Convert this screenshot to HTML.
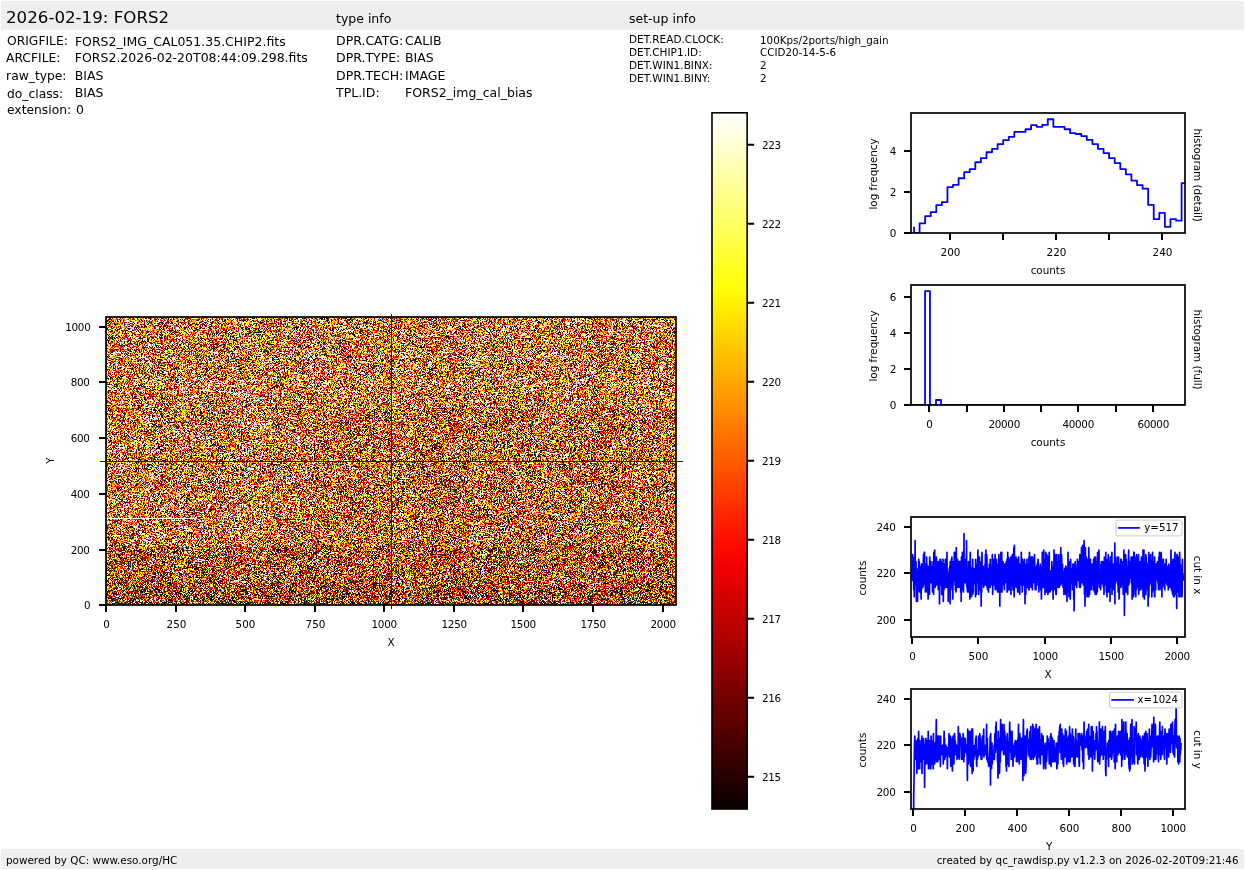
<!DOCTYPE html>
<html><head><meta charset="utf-8"><title>FORS2 rawdisp</title>
<style>html,body{margin:0;padding:0;background:#fff;overflow:hidden}svg{display:block;will-change:transform}text{font-family:"DejaVu Sans","Liberation Sans",sans-serif;fill:#000}</style></head>
<body>
<svg width="1245" height="870" viewBox="0 0 1245 870">
<rect x="1" y="1" width="1243" height="28.7" fill="#eeeeee"/>
<rect x="1" y="849" width="1243" height="19.7" fill="#eeeeee"/>
<text x="6.0" y="23.0" font-size="16.67">2026-02-19: FORS2</text>
<text x="336.0" y="22.7" font-size="12.5">type info</text>
<text x="629.0" y="22.7" font-size="12.5">set-up info</text>
<text x="7.0" y="44.7" font-size="12.3">ORIGFILE:</text>
<text x="74.9" y="45.6" font-size="12.5">FORS2_IMG_CAL051.35.CHIP2.fits</text>
<text x="6.0" y="61.8" font-size="12.3">ARCFILE:</text>
<text x="74.8" y="61.8" font-size="12.5">FORS2.2026-02-20T08:44:09.298.fits</text>
<text x="6.1" y="79.9" font-size="12.3">raw_type:</text>
<text x="74.8" y="79.9" font-size="12.5">BIAS</text>
<text x="7.0" y="97.7" font-size="12.3">do_class:</text>
<text x="74.8" y="97.3" font-size="12.5">BIAS</text>
<text x="7.0" y="113.6" font-size="12.3">extension:</text>
<text x="75.9" y="113.6" font-size="12.5">0</text>
<text x="336.0" y="44.7" font-size="12.5">DPR.CATG:</text>
<text x="405.0" y="44.7" font-size="12.5">CALIB</text>
<text x="336.0" y="61.8" font-size="12.5">DPR.TYPE:</text>
<text x="405.0" y="61.8" font-size="12.5">BIAS</text>
<text x="336.0" y="79.7" font-size="12.5">DPR.TECH:</text>
<text x="405.0" y="79.7" font-size="12.5">IMAGE</text>
<text x="336.0" y="96.9" font-size="12.5">TPL.ID:</text>
<text x="405.0" y="96.9" font-size="12.5">FORS2_img_cal_bias</text>
<text x="629.0" y="43.3" font-size="10.52">DET.READ.CLOCK:</text>
<text x="760.0" y="44.0" font-size="10.33">100Kps/2ports/high_gain</text>
<text x="629.0" y="55.9" font-size="10.52">DET.CHIP1.ID:</text>
<text x="760.0" y="55.9" font-size="10.33">CCID20-14-5-6</text>
<text x="629.0" y="68.7" font-size="10.52">DET.WIN1.BINX:</text>
<text x="760.0" y="68.7" font-size="10.33">2</text>
<text x="629.0" y="81.6" font-size="10.52">DET.WIN1.BINY:</text>
<text x="760.0" y="81.6" font-size="10.33">2</text>
<text x="6.0" y="863.8" font-size="10.4">powered by QC: www.eso.org/HC</text>
<text x="1238.6" y="863.8" font-size="10.4" text-anchor="end">created by qc_rawdisp.py v1.2.3 on 2026-02-20T09:21:46</text>
<defs>
<pattern id="m215" x="106" y="317" width="127" height="97" patternUnits="userSpaceOnUse"><path transform="translate(0 .5)" d="M0 0h1m2 0h1m2 0h1m7 0h1m5 0h3m1 0h1m1 0h2m6 0h1m3 0h1m3 0h4m3 0h2m1 0h1m1 0h1m8 0h1m2 0h1m1 0h1m5 0h1m1 0h2m2 0h1m3 0h3m2 0h1m3 0h1m5 0h1m15 0h1m1 0h1m4 0h1m3 0h1M3 1h1m6 0h3m2 0h2m1 0h1m5 0h1m1 0h1m5 0h3m5 0h1m5 0h1m5 0h4m2 0h3m3 0h3m2 0h5m1 0h3m2 0h1m5 0h2m3 0h3m3 0h2m5 0h2m3 0h1m4 0h1m6 0h1m1 0h2M8 2h1m2 0h1m8 0h1m1 0h1m1 0h1m2 0h1m3 0h1m3 0h2m8 0h1m4 0h1m7 0h1m1 0h2m1 0h1m4 0h2m12 0h1m1 0h3m6 0h1m2 0h2m8 0h1m1 0h1m3 0h1m5 0h1m1 0h1m1 0h1m2 0h1M4 3h1m6 0h1m2 0h1m9 0h3m4 0h1m3 0h1m2 0h2m3 0h3m1 0h1m3 0h2m2 0h1m7 0h3m3 0h1m4 0h1m7 0h1m1 0h1m2 0h1m2 0h1m1 0h1m5 0h2m2 0h3m11 0h1m7 0h1m1 0h1M4 4h2m2 0h1m6 0h2m6 0h2m11 0h1m2 0h2m8 0h1m2 0h1m3 0h1m4 0h1m1 0h1m6 0h1m7 0h1m4 0h1m1 0h1m2 0h1m5 0h2m2 0h1m1 0h5m3 0h1m1 0h1m11 0h3M3 5h1m2 0h1m15 0h1m5 0h1m1 0h2m1 0h2m1 0h1m11 0h1m2 0h1m1 0h1m1 0h1m2 0h1m1 0h6m1 0h1m8 0h1m1 0h1m4 0h1m11 0h1m8 0h1m6 0h1m2 0h3m2 0h1M3 6h1m1 0h1m15 0h1m1 0h5m22 0h1m2 0h2m3 0h2m5 0h1m2 0h2m3 0h1m3 0h2m7 0h1m6 0h3m1 0h1m1 0h1m6 0h1m4 0h2m4 0h1m1 0h1m3 0h3M1 7h1m10 0h2m2 0h1m7 0h1m5 0h1m2 0h1m2 0h1m2 0h1m11 0h2m3 0h1m6 0h1m1 0h2m8 0h1m7 0h1m3 0h1m1 0h1m1 0h1m1 0h1m3 0h2m4 0h3m1 0h1m3 0h1m8 0h1m4 0h2M0 8h2m4 0h1m6 0h1m17 0h1m2 0h1m8 0h1m3 0h1m1 0h1m8 0h1m6 0h1m1 0h1m2 0h2m13 0h1m2 0h1m3 0h1m5 0h2m4 0h1m1 0h1m1 0h1m1 0h1m9 0h2m2 0h3M2 9h1m2 0h1m11 0h1m1 0h2m12 0h1m4 0h2m1 0h1m3 0h1m1 0h1m1 0h2m2 0h1m1 0h1m1 0h1m3 0h1m4 0h1m2 0h2m6 0h2m2 0h1m9 0h1m3 0h1m2 0h2m5 0h1m1 0h1m11 0h1m2 0h2m1 0h1M0 10h1m7 0h2m6 0h1m6 0h1m1 0h1m1 0h3m2 0h2m7 0h1m4 0h2m1 0h1m3 0h3m4 0h1m4 0h2m4 0h1m1 0h1m7 0h4m3 0h1m3 0h1m2 0h5m2 0h1m1 0h2m4 0h1m2 0h1m5 0h2M1 11h2m1 0h1m2 0h3m2 0h1m1 0h1m3 0h1m4 0h2m4 0h1m1 0h2m1 0h3m1 0h1m4 0h1m3 0h1m5 0h1m1 0h1m1 0h1m4 0h1m3 0h1m8 0h4m3 0h1m3 0h1m11 0h1m7 0h1m2 0h2m1 0h1m2 0h1m1 0h1M0 12h1m1 0h1m1 0h2m3 0h1m1 0h1m3 0h1m9 0h1m3 0h2m1 0h2m6 0h2m1 0h1m2 0h1m3 0h2m1 0h1m8 0h1m3 0h2m2 0h1m4 0h1m1 0h1m1 0h3m2 0h1m2 0h2m2 0h1m12 0h3m2 0h1m5 0h5m5 0h1M0 13h3m6 0h1m1 0h1m4 0h4m10 0h1m3 0h1m2 0h1m8 0h1m2 0h3m5 0h2m4 0h1m2 0h2m1 0h1m3 0h1m4 0h1m4 0h3m3 0h3m4 0h1m1 0h1m1 0h1m3 0h2m7 0h1m4 0h1m7 0h1M3 14h1m1 0h1m3 0h1m3 0h1m6 0h1m4 0h2m4 0h1m3 0h2m3 0h1m2 0h1m2 0h1m2 0h1m3 0h1m3 0h1m2 0h2m1 0h1m2 0h1m10 0h1m1 0h1m7 0h1m3 0h1m2 0h1m3 0h1m3 0h3m10 0h1m7 0h1m1 0h1M2 15h2m8 0h6m10 0h1m1 0h1m4 0h2m1 0h1m3 0h1m7 0h1m9 0h1m6 0h3m1 0h3m3 0h1m5 0h1m12 0h1m2 0h1m1 0h2m2 0h1m2 0h2m12 0h1m2 0h2M1 16h1m14 0h1m6 0h1m7 0h3m3 0h1m1 0h1m3 0h2m8 0h1m5 0h2m9 0h1m6 0h1m2 0h1m7 0h3m7 0h1m5 0h2m3 0h5m1 0h2m2 0h3m2 0h1M4 17h1m2 0h1m1 0h2m3 0h1m5 0h1m1 0h2m1 0h1m2 0h2m6 0h1m3 0h4m1 0h1m3 0h1m1 0h2m3 0h2m2 0h1m1 0h1m3 0h3m1 0h2m1 0h1m2 0h1m4 0h2m2 0h4m1 0h1m2 0h3m4 0h2m2 0h1m1 0h2m1 0h1m2 0h2m6 0h1M0 18h2m1 0h1m5 0h1m2 0h1m4 0h4m5 0h2m4 0h1m1 0h1m2 0h1m4 0h3m1 0h3m1 0h1m4 0h2m2 0h1m7 0h1m2 0h1m1 0h1m5 0h1m7 0h1m1 0h3m1 0h2m9 0h1m1 0h1m2 0h2m2 0h1m3 0h2m1 0h3M5 19h2m2 0h1m10 0h1m3 0h1m1 0h1m1 0h2m2 0h2m1 0h1m1 0h1m1 0h5m1 0h1m2 0h1m1 0h1m8 0h2m1 0h1m3 0h3m4 0h5m3 0h1m2 0h1m8 0h1m2 0h1m3 0h1m4 0h1m2 0h1m5 0h2m8 0h1m1 0h1M0 20h1m2 0h2m3 0h2m1 0h1m7 0h1m6 0h1m4 0h2m3 0h1m2 0h1m2 0h2m4 0h1m1 0h1m2 0h3m6 0h1m5 0h1m1 0h1m1 0h1m7 0h1m2 0h2m3 0h3m2 0h1m2 0h1m1 0h2m1 0h1m1 0h1m2 0h1m3 0h1m4 0h1m8 0h1M1 21h2m3 0h1m1 0h1m3 0h1m1 0h1m1 0h1m1 0h1m4 0h1m1 0h2m6 0h2m11 0h2m6 0h1m8 0h1m1 0h3m2 0h1m2 0h1m2 0h1m9 0h1m4 0h1m4 0h1m4 0h1m3 0h2m11 0h1m6 0h2M2 22h3m9 0h1m2 0h1m7 0h1m5 0h1m1 0h1m1 0h3m8 0h1m2 0h3m2 0h1m1 0h1m7 0h1m9 0h2m4 0h2m4 0h1m1 0h1m5 0h1m3 0h1m5 0h1m3 0h2m10 0h1m2 0h1M5 23h1m3 0h1m4 0h1m6 0h1m2 0h1m5 0h2m2 0h1m3 0h3m7 0h1m5 0h1m1 0h2m6 0h1m2 0h1m4 0h2m9 0h4m3 0h2m1 0h1m1 0h1m3 0h1m1 0h1m1 0h1m1 0h1m3 0h2m1 0h1M3 24h1m4 0h1m1 0h1m1 0h2m1 0h1m1 0h2m2 0h1m2 0h1m1 0h2m4 0h1m6 0h1m6 0h2m6 0h1m1 0h2m1 0h1m1 0h1m2 0h1m4 0h1m3 0h1m6 0h1m5 0h1m1 0h1m1 0h2m4 0h1m5 0h1m3 0h1m2 0h2m3 0h1m7 0h1m1 0h1M3 25h1m1 0h2m2 0h1m3 0h1m1 0h2m2 0h2m3 0h1m3 0h1m6 0h1m1 0h1m7 0h1m3 0h3m3 0h4m5 0h1m4 0h1m5 0h1m6 0h1m2 0h1m13 0h1m3 0h1m7 0h1m3 0h1m2 0h1m3 0h2m1 0h1M2 26h1m6 0h1m2 0h2m1 0h1m2 0h2m5 0h3m2 0h1m5 0h2m3 0h1m9 0h2m4 0h1m2 0h1m6 0h1m2 0h3m2 0h1m1 0h1m3 0h1m2 0h1m2 0h1m3 0h2m2 0h1m3 0h1m1 0h1m11 0h1m6 0h1m4 0h1M2 27h5m5 0h1m8 0h1m2 0h1m4 0h1m4 0h1m3 0h1m4 0h1m8 0h1m1 0h2m4 0h4m1 0h1m2 0h4m1 0h1m4 0h1m1 0h1m6 0h1m2 0h1m1 0h1m10 0h1m6 0h1m9 0h1m5 0h1M0 28h2m4 0h1m6 0h1m1 0h1m1 0h1m3 0h2m3 0h1m1 0h1m6 0h4m2 0h2m3 0h1m1 0h1m2 0h1m4 0h1m4 0h1m6 0h1m1 0h1m2 0h1m2 0h1m1 0h1m5 0h1m1 0h1m2 0h1m4 0h1m1 0h1m4 0h1m2 0h1m1 0h1m7 0h1m6 0h1m1 0h1M1 29h1m1 0h1m5 0h1m5 0h1m7 0h1m3 0h1m7 0h1m9 0h1m6 0h2m2 0h1m3 0h1m1 0h1m8 0h1m5 0h1m1 0h1m1 0h3m2 0h1m2 0h1m6 0h1m1 0h1m1 0h1m6 0h1m12 0h3m2 0h1M1 30h2m3 0h1m1 0h1m1 0h2m2 0h2m3 0h1m9 0h1m1 0h2m4 0h3m1 0h1m5 0h1m3 0h1m1 0h2m2 0h1m4 0h2m1 0h1m7 0h1m2 0h2m3 0h1m13 0h2m1 0h1m3 0h2m1 0h1m4 0h4m1 0h1m5 0h1m1 0h1m2 0h1M4 31h1m5 0h1m3 0h1m3 0h1m2 0h1m2 0h1m6 0h1m2 0h1m1 0h1m10 0h1m3 0h2m4 0h2m5 0h1m1 0h1m21 0h1m6 0h1m4 0h3m2 0h1m3 0h1m6 0h1m5 0h2M4 32h2m2 0h1m2 0h3m3 0h1m3 0h1m6 0h1m1 0h5m8 0h1m2 0h1m3 0h1m4 0h3m1 0h1m8 0h1m9 0h1m6 0h1m2 0h2m1 0h2m1 0h1m11 0h1m1 0h1m1 0h1m8 0h1m6 0h1M2 33h1m1 0h1m2 0h2m1 0h2m1 0h1m1 0h1m3 0h1m16 0h1m7 0h3m2 0h2m5 0h2m1 0h1m1 0h1m7 0h1m1 0h1m8 0h1m7 0h1m3 0h1m2 0h1m1 0h3m4 0h1m2 0h2m1 0h2m1 0h1m6 0h2M2 34h2m6 0h2m1 0h2m2 0h1m2 0h1m4 0h1m1 0h1m1 0h1m2 0h1m2 0h1m4 0h1m6 0h1m6 0h1m3 0h1m1 0h1m4 0h2m1 0h1m1 0h1m8 0h1m4 0h3m2 0h2m7 0h2m1 0h1m5 0h1m1 0h1m1 0h1m1 0h1m3 0h1m4 0h2m2 0h1M0 35h2m1 0h1m1 0h2m2 0h1m2 0h1m4 0h1m4 0h1m2 0h4m2 0h1m4 0h1m1 0h2m3 0h2m5 0h1m11 0h1m1 0h2m2 0h2m2 0h3m3 0h1m2 0h1m3 0h1m3 0h1m16 0h1m1 0h1m2 0h1m4 0h1m2 0h2m1 0h1m3 0h1M6 36h2m1 0h1m1 0h1m3 0h2m1 0h4m4 0h1m1 0h1m2 0h2m4 0h1m1 0h1m5 0h2m1 0h2m3 0h3m7 0h1m3 0h2m2 0h3m6 0h2m2 0h1m4 0h1m3 0h2m2 0h1m2 0h2m4 0h1m2 0h1m3 0h1m3 0h1m1 0h5M0 37h1m11 0h1m4 0h1m5 0h1m1 0h1m4 0h1m1 0h1m4 0h3m1 0h1m6 0h1m3 0h1m7 0h4m9 0h1m2 0h1m2 0h1m7 0h4m1 0h1m5 0h1m3 0h1m3 0h2m2 0h1m5 0h2m1 0h1m2 0h3M1 38h1m3 0h1m3 0h2m2 0h2m1 0h1m9 0h1m5 0h1m2 0h1m5 0h2m3 0h3m2 0h2m7 0h1m2 0h1m3 0h1m1 0h1m5 0h1m3 0h1m2 0h1m3 0h3m2 0h1m1 0h1m1 0h1m3 0h1m7 0h4m1 0h1m5 0h1m2 0h1m1 0h1m2 0h1M5 39h1m4 0h1m1 0h2m2 0h1m2 0h1m2 0h3m4 0h1m2 0h1m2 0h1m2 0h1m15 0h2m1 0h2m3 0h1m1 0h2m2 0h1m1 0h1m10 0h1m9 0h1m2 0h2m2 0h1m4 0h1m11 0h1m1 0h1m3 0h1m1 0h1M0 40h2m2 0h1m12 0h2m1 0h1m12 0h2m1 0h1m1 0h2m2 0h1m11 0h1m1 0h2m4 0h1m1 0h2m1 0h1m7 0h1m1 0h1m1 0h1m1 0h1m6 0h1m5 0h1m3 0h1m7 0h1m3 0h1m1 0h1m1 0h1m1 0h1m5 0h1M4 41h1m3 0h1m4 0h1m2 0h1m2 0h2m5 0h1m1 0h1m1 0h2m1 0h1m2 0h2m3 0h1m3 0h1m1 0h2m9 0h1m1 0h2m3 0h3m3 0h1m1 0h1m1 0h1m1 0h1m1 0h1m2 0h1m4 0h1m1 0h1m1 0h1m3 0h1m14 0h1m7 0h1M0 42h1m11 0h2m1 0h1m3 0h1m1 0h1m1 0h2m1 0h3m1 0h1m3 0h2m9 0h1m2 0h2m6 0h2m7 0h1m3 0h1m1 0h2m2 0h1m6 0h1m6 0h1m1 0h1m2 0h2m2 0h3m2 0h1m3 0h3m1 0h2m1 0h1m6 0h2m2 0h1M0 43h1m1 0h1m4 0h1m4 0h1m9 0h1m1 0h1m2 0h1m4 0h1m1 0h1m2 0h1m7 0h1m6 0h2m5 0h1m2 0h2m1 0h1m1 0h1m6 0h2m5 0h1m7 0h1m2 0h2m2 0h1m4 0h1m1 0h3m3 0h1m4 0h1m7 0h1m3 0h1M2 44h1m3 0h2m2 0h1m5 0h2m5 0h2m2 0h1m2 0h1m1 0h1m3 0h2m5 0h1m3 0h2m2 0h1m1 0h1m1 0h1m1 0h2m4 0h1m5 0h1m11 0h4m1 0h1m6 0h1m2 0h3m4 0h1m4 0h1m2 0h1m3 0h1m1 0h2m4 0h1m2 0h1M0 45h1m7 0h2m1 0h2m5 0h1m2 0h1m2 0h2m1 0h1m10 0h1m1 0h1m8 0h2m3 0h1m4 0h1m3 0h1m4 0h2m3 0h3m3 0h1m5 0h3m2 0h1m5 0h1m1 0h1m3 0h2m3 0h1m4 0h2m6 0h1m1 0h1m2 0h1M6 46h1m5 0h3m5 0h1m4 0h2m5 0h1m1 0h1m3 0h1m3 0h1m2 0h3m4 0h1m1 0h1m9 0h1m2 0h1m1 0h1m1 0h1m1 0h1m1 0h1m2 0h1m2 0h1m1 0h1m4 0h1m2 0h1m5 0h1m3 0h1m2 0h1m1 0h1m1 0h1m3 0h1m5 0h1m1 0h1M0 47h1m7 0h1m3 0h1m6 0h1m1 0h2m1 0h1m2 0h1m1 0h1m2 0h1m1 0h1m2 0h1m2 0h3m3 0h1m2 0h1m1 0h3m1 0h1m1 0h1m6 0h1m14 0h1m2 0h1m3 0h1m1 0h1m2 0h1m5 0h1m1 0h1m5 0h1m6 0h1m2 0h1m3 0h1m1 0h3M2 48h1m1 0h1m4 0h1m7 0h1m4 0h1m2 0h5m1 0h2m7 0h1m1 0h2m1 0h1m2 0h5m1 0h1m8 0h1m3 0h1m8 0h1m1 0h1m4 0h1m2 0h3m6 0h1m1 0h1m1 0h1m3 0h1m6 0h2m3 0h1m1 0h2m5 0h1M2 49h1m1 0h1m1 0h1m1 0h1m1 0h1m1 0h1m3 0h3m1 0h3m1 0h3m7 0h2m9 0h1m1 0h1m1 0h2m3 0h2m5 0h2m2 0h1m1 0h1m2 0h1m1 0h2m2 0h1m3 0h1m2 0h1m3 0h1m1 0h1m1 0h1m4 0h1m1 0h1m2 0h2m1 0h1m1 0h1m5 0h1m2 0h1m7 0h1M4 50h1m2 0h1m1 0h1m2 0h1m3 0h3m1 0h2m3 0h2m2 0h2m2 0h2m4 0h2m4 0h1m8 0h1m1 0h1m5 0h1m5 0h2m4 0h1m6 0h1m3 0h1m1 0h1m9 0h2m1 0h2m3 0h1m1 0h1m3 0h1m2 0h1m2 0h1m3 0h1M0 51h1m5 0h1m3 0h1m2 0h1m1 0h1m1 0h1m11 0h1m6 0h1m3 0h2m6 0h2m1 0h2m2 0h3m3 0h1m2 0h2m1 0h1m1 0h2m12 0h3m1 0h1m1 0h4m1 0h1m5 0h1m2 0h2m4 0h1m4 0h1m1 0h1m7 0h1M1 52h1m2 0h1m3 0h1m3 0h1m1 0h1m2 0h2m1 0h1m1 0h2m2 0h3m6 0h1m1 0h1m1 0h1m7 0h2m10 0h1m3 0h1m1 0h1m4 0h1m5 0h1m6 0h1m5 0h1m1 0h2m2 0h1m17 0h1m6 0h1M0 53h1m2 0h1m1 0h2m1 0h1m2 0h2m2 0h1m1 0h2m11 0h2m3 0h1m4 0h1m1 0h1m2 0h1m3 0h2m1 0h1m2 0h1m2 0h1m3 0h1m1 0h1m1 0h3m7 0h1m2 0h1m1 0h1m5 0h2m5 0h1m13 0h1m1 0h1m2 0h1m1 0h2m1 0h1M0 54h1m3 0h1m1 0h1m1 0h1m2 0h2m7 0h1m7 0h3m1 0h1m1 0h1m4 0h1m3 0h1m2 0h1m5 0h2m9 0h1m1 0h1m4 0h1m2 0h1m1 0h1m6 0h1m3 0h1m2 0h2m4 0h1m2 0h5m1 0h2m1 0h1m3 0h1m4 0h1m1 0h1m2 0h1M6 55h1m7 0h1m1 0h1m1 0h3m2 0h1m1 0h1m9 0h1m1 0h1m7 0h1m2 0h1m2 0h1m1 0h3m2 0h1m1 0h2m17 0h1m7 0h1m5 0h1m6 0h3m2 0h4m3 0h1m7 0h1m2 0h1M5 56h1m2 0h1m2 0h1m1 0h1m1 0h2m8 0h2m6 0h1m5 0h1m6 0h1m1 0h2m3 0h1m2 0h2m1 0h1m6 0h2m1 0h1m8 0h3m3 0h1m2 0h2m1 0h1m1 0h1m1 0h3m10 0h1m2 0h1m5 0h1m3 0h1m5 0h1M5 57h1m1 0h1m2 0h2m3 0h1m3 0h3m4 0h1m1 0h1m1 0h1m2 0h1m3 0h2m1 0h1m7 0h1m3 0h1m2 0h1m1 0h3m6 0h1m3 0h1m2 0h1m2 0h1m1 0h1m3 0h2m4 0h1m1 0h1m8 0h1m1 0h5m1 0h1m4 0h1m1 0h1m2 0h1m1 0h1m4 0h1M2 58h1m1 0h1m1 0h1m1 0h1m4 0h1m2 0h1m6 0h1m2 0h1m1 0h1m2 0h1m5 0h1m2 0h2m2 0h1m6 0h3m1 0h1m1 0h1m1 0h1m5 0h1m2 0h1m3 0h1m2 0h2m5 0h1m2 0h3m11 0h1m1 0h1m6 0h1m1 0h1m2 0h1m2 0h1m4 0h1m3 0h1M2 59h1m1 0h1m4 0h1m3 0h1m2 0h1m4 0h1m8 0h1m2 0h2m3 0h1m4 0h1m2 0h1m3 0h1m2 0h1m2 0h1m3 0h1m2 0h1m1 0h2m5 0h2m3 0h3m3 0h1m1 0h1m4 0h2m3 0h1m1 0h3m2 0h1m5 0h1m5 0h1m4 0h1m3 0h1m1 0h1M2 60h1m7 0h1m1 0h1m13 0h1m1 0h3m3 0h1m1 0h1m8 0h1m4 0h1m3 0h1m7 0h1m2 0h2m10 0h1m2 0h1m3 0h1m4 0h2m1 0h2m1 0h3m3 0h1m3 0h1m4 0h1m2 0h1m8 0h1m3 0h1M0 61h1m4 0h1m1 0h2m4 0h1m1 0h1m2 0h1m5 0h1m4 0h2m2 0h2m2 0h2m4 0h1m3 0h1m1 0h1m2 0h1m1 0h1m11 0h1m9 0h1m3 0h1m6 0h1m1 0h1m4 0h1m1 0h1m7 0h1m3 0h1M3 62h1m4 0h1m1 0h1m5 0h1m13 0h3m1 0h1m4 0h1m1 0h1m2 0h1m3 0h1m3 0h1m6 0h1m1 0h1m1 0h1m5 0h2m5 0h1m1 0h2m5 0h2m3 0h1m4 0h2m1 0h1m4 0h1m1 0h3m1 0h4m3 0h1m3 0h3m1 0h1M0 63h1m5 0h1m4 0h1m2 0h1m1 0h1m4 0h1m3 0h2m3 0h1m3 0h2m1 0h1m4 0h1m6 0h1m3 0h1m6 0h2m6 0h1m4 0h1m1 0h1m4 0h2m5 0h1m1 0h1m4 0h2m5 0h1m5 0h1m2 0h1m1 0h1m4 0h1m1 0h1m5 0h2M0 64h1m5 0h3m10 0h1m2 0h1m1 0h1m2 0h2m13 0h1m1 0h1m6 0h1m2 0h1m2 0h2m3 0h1m1 0h1m3 0h2m4 0h2m1 0h1m1 0h1m2 0h1m6 0h1m2 0h3m2 0h1m1 0h2m4 0h1m3 0h1m4 0h1m3 0h4m4 0h1M5 65h1m1 0h1m8 0h2m6 0h1m1 0h2m7 0h1m4 0h1m3 0h1m2 0h2m6 0h1m3 0h1m4 0h2m2 0h1m2 0h2m1 0h1m4 0h2m4 0h1m3 0h1m1 0h1m1 0h1m1 0h4m2 0h1m5 0h1m3 0h2m1 0h2m1 0h1M0 66h1m2 0h4m4 0h1m1 0h1m1 0h1m1 0h1m3 0h2m6 0h1m1 0h2m12 0h2m1 0h1m3 0h1m1 0h2m3 0h3m4 0h1m1 0h2m5 0h1m3 0h4m1 0h1m3 0h2m1 0h1m1 0h1m5 0h1m2 0h1m1 0h1m3 0h1m5 0h1m5 0h2M0 67h1m2 0h1m1 0h1m1 0h1m3 0h2m7 0h1m2 0h1m2 0h2m2 0h1m1 0h2m2 0h1m4 0h2m3 0h1m2 0h1m1 0h2m3 0h1m3 0h4m6 0h2m3 0h1m2 0h1m8 0h1m1 0h1m5 0h1m2 0h1m1 0h1m1 0h1m5 0h5m3 0h2m1 0h3m3 0h1M4 68h1m1 0h1m1 0h1m9 0h1m1 0h1m4 0h1m3 0h1m2 0h1m5 0h1m3 0h1m8 0h1m1 0h2m7 0h1m4 0h1m2 0h1m6 0h1m1 0h2m1 0h1m3 0h1m1 0h1m6 0h1m2 0h2m5 0h1m1 0h1m2 0h1m4 0h1m5 0h1m4 0h1M0 69h1m3 0h1m1 0h1m5 0h1m2 0h1m2 0h1m3 0h1m2 0h4m2 0h1m2 0h1m3 0h1m1 0h1m1 0h1m1 0h1m1 0h1m2 0h3m2 0h1m4 0h1m1 0h3m4 0h2m1 0h1m2 0h1m1 0h3m3 0h1m1 0h1m7 0h1m2 0h2m7 0h3m4 0h1m2 0h1m4 0h2m1 0h1m2 0h2M2 70h1m1 0h1m1 0h1m2 0h1m2 0h3m4 0h1m3 0h1m6 0h1m2 0h1m4 0h1m2 0h1m5 0h1m4 0h1m1 0h2m8 0h1m2 0h1m7 0h1m1 0h2m2 0h3m1 0h1m9 0h2m8 0h5m1 0h1m2 0h2m4 0h2m1 0h1M0 71h1m1 0h1m2 0h1m7 0h1m1 0h2m1 0h2m1 0h1m1 0h1m4 0h2m1 0h1m9 0h1m3 0h1m6 0h1m3 0h2m7 0h1m2 0h1m1 0h1m1 0h1m2 0h2m5 0h3m4 0h1m1 0h4m5 0h1m6 0h1m1 0h1m15 0h2M3 72h3m6 0h1m4 0h7m5 0h1m3 0h4m1 0h2m1 0h1m5 0h1m1 0h2m1 0h2m9 0h3m4 0h2m6 0h3m3 0h1m3 0h1m5 0h1m2 0h2m5 0h1m1 0h2m6 0h1m4 0h1m2 0h1M4 73h1m1 0h1m4 0h1m6 0h2m2 0h1m3 0h1m5 0h7m1 0h2m2 0h1m2 0h1m1 0h1m2 0h1m12 0h1m2 0h1m9 0h4m3 0h2m1 0h1m3 0h1m4 0h4m1 0h2m1 0h1m1 0h1m6 0h1m1 0h2M2 74h1m9 0h1m2 0h1m1 0h1m2 0h1m2 0h1m5 0h1m5 0h3m2 0h1m1 0h1m3 0h2m1 0h2m1 0h1m3 0h1m1 0h1m6 0h2m5 0h1m4 0h1m3 0h1m3 0h1m4 0h2m5 0h1m2 0h1m1 0h1m1 0h3m2 0h1m1 0h1m1 0h2m5 0h4m1 0h2M7 75h1m1 0h2m6 0h1m3 0h1m5 0h1m4 0h1m12 0h1m1 0h1m1 0h2m7 0h1m8 0h1m4 0h1m1 0h2m4 0h1m2 0h2m5 0h1m6 0h1m2 0h3m5 0h1m1 0h2m1 0h1m2 0h1m2 0h2m1 0h1m3 0h1M2 76h1m5 0h1m2 0h1m1 0h1m2 0h2m1 0h1m2 0h2m1 0h1m1 0h1m3 0h1m12 0h1m4 0h3m2 0h1m3 0h1m3 0h1m2 0h1m3 0h2m3 0h1m1 0h1m4 0h3m1 0h2m13 0h3m12 0h2m1 0h1m1 0h1m2 0h1m1 0h1M2 77h4m1 0h1m1 0h1m2 0h1m5 0h1m5 0h2m2 0h1m3 0h2m1 0h3m5 0h1m2 0h1m5 0h1m1 0h3m1 0h2m1 0h2m6 0h3m2 0h1m2 0h1m7 0h1m3 0h1m3 0h1m11 0h1m3 0h2m5 0h1M0 78h1m1 0h1m1 0h2m2 0h1m4 0h3m1 0h1m1 0h1m1 0h2m1 0h1m1 0h1m2 0h1m5 0h1m14 0h1m2 0h1m6 0h2m4 0h1m2 0h1m1 0h1m1 0h4m1 0h2m2 0h1m2 0h1m7 0h1m1 0h3m8 0h1m10 0h1m5 0h2M0 79h1m3 0h1m3 0h1m3 0h1m1 0h1m1 0h1m3 0h1m2 0h2m2 0h1m2 0h2m1 0h1m1 0h2m1 0h3m1 0h1m3 0h1m1 0h1m9 0h2m2 0h1m8 0h2m1 0h3m3 0h2m1 0h1m4 0h1m5 0h1m20 0h2m4 0h6M1 80h2m6 0h2m4 0h1m4 0h3m1 0h1m3 0h1m2 0h1m3 0h2m2 0h1m4 0h1m2 0h1m3 0h1m4 0h1m1 0h1m4 0h1m1 0h1m1 0h1m4 0h1m9 0h2m3 0h2m2 0h1m1 0h1m2 0h2m2 0h1m1 0h1m1 0h1m4 0h1m4 0h1m1 0h1m1 0h1m3 0h1m1 0h1M2 81h1m8 0h1m3 0h2m1 0h1m2 0h1m4 0h1m1 0h1m1 0h1m8 0h2m2 0h1m9 0h1m4 0h1m3 0h1m4 0h8m17 0h1m1 0h1m1 0h1m2 0h1m3 0h1m5 0h1m1 0h1m7 0h2m1 0h1m2 0h1M1 82h1m3 0h1m2 0h2m2 0h2m6 0h3m3 0h1m2 0h1m3 0h2m5 0h2m2 0h1m9 0h1m13 0h1m1 0h1m1 0h1m1 0h1m2 0h1m2 0h1m1 0h1m2 0h1m1 0h1m1 0h1m9 0h1m6 0h1m8 0h1m1 0h1m6 0h1M1 83h1m5 0h2m3 0h1m2 0h1m1 0h1m1 0h2m2 0h1m8 0h1m5 0h2m3 0h2m6 0h1m6 0h1m2 0h1m3 0h1m8 0h1m1 0h1m4 0h1m3 0h1m1 0h1m7 0h2m1 0h1m7 0h1m5 0h1m7 0h2m1 0h2M1 84h4m1 0h1m3 0h1m2 0h2m2 0h1m7 0h2m2 0h1m1 0h1m4 0h2m4 0h1m4 0h2m3 0h2m1 0h1m8 0h1m5 0h1m1 0h1m3 0h2m2 0h2m3 0h1m5 0h1m4 0h3m1 0h2m1 0h3m3 0h1m1 0h1m2 0h1m2 0h1m6 0h1M4 85h1m6 0h1m6 0h1m1 0h3m1 0h2m3 0h1m1 0h1m7 0h1m1 0h1m1 0h1m1 0h3m2 0h1m2 0h2m8 0h2m6 0h1m4 0h1m1 0h1m3 0h1m6 0h1m6 0h1m2 0h1m1 0h1m10 0h1m3 0h1m2 0h1m2 0h1M0 86h1m6 0h1m3 0h1m1 0h1m5 0h1m2 0h3m1 0h2m4 0h1m1 0h1m2 0h1m1 0h3m2 0h1m1 0h1m4 0h1m4 0h1m2 0h1m1 0h1m8 0h1m3 0h4m3 0h2m1 0h1m1 0h1m3 0h1m3 0h1m5 0h1m3 0h1m7 0h1m1 0h1m1 0h3m1 0h2m3 0h1M7 87h2m4 0h3m7 0h1m1 0h1m12 0h1m5 0h1m3 0h2m3 0h1m5 0h1m3 0h1m2 0h2m10 0h2m3 0h1m1 0h2m2 0h1m1 0h2m2 0h1m9 0h6m2 0h1m4 0h1m1 0h2m3 0h2M0 88h2m3 0h1m5 0h5m3 0h1m1 0h1m1 0h1m5 0h1m1 0h1m1 0h1m3 0h1m4 0h2m1 0h1m6 0h1m6 0h1m2 0h2m12 0h1m3 0h1m1 0h2m2 0h1m19 0h1m1 0h1m2 0h2m4 0h1m3 0h2M1 89h2m8 0h1m2 0h1m3 0h1m1 0h1m4 0h3m3 0h1m1 0h1m2 0h3m5 0h2m2 0h2m1 0h1m4 0h1m5 0h1m2 0h2m1 0h3m1 0h2m3 0h1m2 0h1m2 0h1m6 0h1m4 0h1m2 0h1m1 0h1m2 0h1m4 0h1m6 0h1m1 0h1m3 0h1m4 0h1M0 90h3m1 0h1m8 0h4m1 0h1m16 0h2m2 0h1m3 0h1m3 0h2m7 0h3m1 0h1m1 0h1m2 0h1m9 0h1m2 0h1m1 0h1m1 0h2m1 0h1m1 0h1m8 0h1m5 0h2m6 0h1m6 0h2m2 0h1M8 91h1m3 0h2m1 0h1m1 0h1m1 0h1m2 0h1m4 0h1m4 0h1m2 0h1m17 0h1m20 0h1m1 0h2m1 0h2m6 0h3m1 0h1m2 0h1m10 0h1m5 0h1m2 0h1m6 0h1m1 0h1M1 92h5m2 0h1m7 0h5m7 0h1m1 0h1m1 0h2m1 0h1m1 0h1m3 0h2m2 0h1m5 0h2m2 0h2m3 0h2m4 0h2m4 0h1m2 0h1m1 0h1m2 0h1m2 0h1m9 0h3m2 0h2m1 0h1m3 0h1m4 0h1m2 0h2m9 0h2M2 93h2m5 0h2m1 0h2m1 0h4m3 0h1m7 0h1m1 0h2m4 0h2m3 0h1m1 0h2m1 0h1m2 0h1m4 0h1m1 0h1m3 0h2m4 0h1m1 0h1m2 0h1m1 0h3m3 0h1m1 0h1m1 0h1m1 0h1m3 0h2m1 0h1m1 0h2m2 0h2m5 0h3m2 0h2m2 0h1m3 0h2m2 0h1M2 94h1m5 0h1m6 0h2m9 0h1m1 0h1m1 0h1m10 0h2m8 0h1m1 0h1m7 0h1m13 0h1m2 0h1m8 0h1m3 0h3m2 0h1m5 0h2m2 0h1m2 0h1m1 0h1m1 0h1m5 0h1m2 0h1m2 0h1M0 95h1m1 0h1m1 0h1m3 0h1m1 0h2m3 0h3m8 0h1m1 0h1m1 0h1m1 0h1m2 0h1m1 0h2m1 0h1m2 0h1m9 0h1m3 0h2m5 0h2m5 0h1m3 0h1m2 0h1m3 0h1m6 0h1m2 0h1m12 0h1m4 0h1m5 0h1m9 0h1M0 96h1m1 0h2m2 0h1m5 0h1m2 0h1m1 0h1m4 0h2m5 0h1m11 0h1m3 0h2m5 0h3m3 0h1m6 0h2m7 0h1m2 0h1m5 0h1m6 0h2m2 0h1m1 0h1m1 0h2m2 0h1m6 0h2m2 0h1m2 0h3m3 0h1m1 0h1" stroke="#270000" stroke-width="1" fill="none" shape-rendering="crispEdges"/></pattern>
<pattern id="m216" x="106" y="317" width="131" height="89" patternUnits="userSpaceOnUse"><path transform="translate(0 .5)" d="M6 0h2m7 0h1m5 0h1m3 0h1m14 0h1m2 0h2m8 0h1m2 0h1m6 0h1m3 0h5m10 0h1m2 0h1m12 0h1m1 0h1m5 0h1m3 0h1m3 0h1m2 0h1m2 0h1m1 0h1m1 0h2m3 0h1M0 1h1m3 0h1m1 0h2m2 0h1m5 0h1m3 0h2m13 0h1m2 0h1m9 0h1m2 0h2m10 0h1m4 0h1m2 0h1m1 0h1m7 0h2m13 0h1m4 0h1m1 0h1m6 0h2m3 0h1m2 0h1m3 0h1m3 0h1M3 2h1m3 0h1m4 0h1m5 0h2m5 0h1m2 0h1m5 0h1m2 0h1m3 0h1m8 0h2m5 0h1m2 0h1m4 0h1m16 0h1m6 0h3m1 0h1m2 0h1m1 0h3m1 0h1m2 0h1m1 0h1m2 0h1m1 0h1m4 0h1m2 0h1m1 0h1m4 0h2M5 3h2m2 0h3m2 0h1m2 0h1m5 0h1m3 0h2m2 0h1m7 0h1m7 0h2m3 0h1m1 0h1m1 0h1m1 0h1m2 0h1m1 0h2m5 0h1m2 0h1m1 0h1m7 0h1m9 0h1m1 0h2m1 0h1m1 0h2m1 0h1m4 0h1m1 0h1m2 0h1m1 0h2m8 0h1M5 4h1m1 0h2m7 0h1m1 0h1m3 0h1m4 0h1m1 0h1m3 0h1m2 0h1m4 0h5m11 0h2m1 0h1m7 0h1m6 0h1m2 0h2m6 0h1m2 0h1m1 0h1m6 0h2m5 0h2m6 0h1m8 0h1m2 0h1m2 0h1m1 0h1M1 5h1m2 0h2m2 0h1m5 0h2m15 0h1m19 0h1m3 0h1m1 0h2m1 0h1m1 0h1m11 0h1m1 0h1m1 0h2m4 0h1m10 0h1m5 0h1m2 0h6m6 0h2m2 0h2m2 0h1m2 0h1M1 6h1m3 0h1m1 0h1m2 0h1m1 0h1m2 0h1m5 0h1m15 0h1m1 0h2m4 0h2m3 0h2m2 0h1m2 0h1m3 0h2m1 0h1m2 0h1m3 0h1m1 0h1m3 0h1m3 0h1m1 0h2m7 0h1m5 0h1m2 0h1m1 0h1m6 0h1m4 0h1m3 0h1m4 0h2m1 0h1m1 0h2M4 7h1m2 0h1m2 0h2m3 0h1m4 0h1m1 0h1m1 0h2m5 0h1m5 0h1m5 0h1m6 0h1m1 0h1m8 0h1m1 0h3m1 0h1m1 0h2m1 0h1m2 0h1m9 0h1m6 0h2m8 0h1m7 0h1m2 0h1m6 0h1m2 0h1m1 0h1m1 0h2m1 0h1M0 8h2m5 0h2m4 0h1m4 0h1m1 0h1m5 0h1m1 0h1m2 0h3m1 0h1m12 0h1m1 0h1m2 0h1m6 0h1m1 0h3m9 0h1m1 0h1m1 0h1m2 0h1m4 0h1m2 0h1m1 0h1m3 0h1m1 0h1m2 0h1m5 0h2m1 0h1m4 0h2m1 0h1m3 0h1m4 0h1m3 0h1M4 9h1m9 0h1m4 0h2m2 0h1m5 0h4m7 0h2m2 0h2m1 0h1m4 0h1m2 0h1m2 0h1m7 0h1m3 0h2m3 0h1m3 0h1m2 0h1m5 0h1m1 0h1m6 0h1m4 0h2m2 0h3m2 0h3m2 0h1m6 0h2M2 10h1m1 0h1m2 0h1m1 0h1m5 0h3m4 0h1m3 0h1m2 0h1m2 0h1m4 0h1m2 0h1m2 0h4m2 0h2m2 0h1m8 0h1m17 0h1m6 0h3m1 0h2m6 0h1m7 0h1m1 0h1m2 0h1m5 0h2m4 0h1m1 0h1m2 0h1M1 11h2m4 0h1m8 0h2m1 0h2m19 0h1m1 0h1m3 0h1m2 0h1m1 0h2m8 0h1m2 0h1m1 0h2m8 0h1m3 0h1m2 0h2m1 0h1m1 0h1m1 0h1m5 0h1m2 0h3m2 0h2m3 0h1m12 0h1m3 0h1M0 12h1m2 0h1m2 0h1m8 0h1m7 0h1m2 0h2m1 0h1m1 0h1m3 0h1m11 0h1m1 0h2m3 0h2m8 0h1m8 0h1m6 0h2m2 0h1m1 0h1m1 0h2m1 0h1m4 0h1m12 0h1m2 0h1m6 0h2m1 0h1m6 0h1M3 13h1m2 0h1m3 0h1m2 0h1m3 0h2m9 0h1m3 0h1m3 0h3m2 0h4m8 0h2m3 0h1m2 0h2m16 0h1m2 0h1m1 0h1m11 0h1m2 0h1m1 0h1m5 0h1m3 0h1m5 0h1m3 0h1M1 14h1m4 0h3m4 0h1m1 0h2m13 0h1m9 0h2m3 0h1m3 0h2m1 0h1m1 0h2m1 0h1m3 0h1m3 0h1m4 0h1m1 0h1m5 0h2m1 0h1m1 0h1m1 0h1m9 0h1m10 0h1m10 0h2m2 0h1m1 0h1m1 0h2m2 0h2M0 15h2m3 0h1m3 0h1m6 0h1m3 0h1m1 0h1m1 0h2m7 0h1m1 0h1m1 0h1m1 0h2m1 0h1m3 0h1m1 0h1m1 0h1m7 0h1m5 0h1m17 0h1m2 0h1m5 0h1m2 0h1m3 0h1m1 0h1m11 0h2m11 0h1m2 0h1M1 16h1m6 0h3m2 0h1m1 0h1m1 0h2m4 0h1m1 0h1m2 0h1m1 0h2m3 0h2m7 0h1m1 0h2m1 0h1m10 0h1m7 0h2m3 0h1m14 0h1m1 0h1m9 0h2m1 0h1m1 0h2m3 0h1m3 0h1M0 17h1m7 0h1m1 0h1m2 0h2m1 0h1m5 0h1m5 0h1m1 0h1m1 0h2m2 0h1m1 0h1m7 0h2m5 0h2m6 0h1m3 0h1m2 0h1m1 0h1m1 0h5m1 0h2m4 0h1m6 0h1m4 0h2m1 0h1m5 0h1m3 0h1m3 0h1m2 0h1m1 0h1m2 0h1M0 18h1m5 0h1m1 0h1m1 0h1m2 0h1m4 0h2m3 0h1m1 0h1m2 0h3m1 0h1m5 0h1m2 0h1m2 0h2m3 0h1m2 0h3m7 0h1m4 0h1m3 0h1m7 0h1m1 0h1m1 0h1m1 0h1m3 0h1m5 0h1m1 0h1m7 0h2m4 0h1m1 0h1m2 0h1m4 0h3m2 0h2m1 0h1M2 19h1m13 0h1m1 0h1m2 0h2m5 0h2m1 0h1m1 0h1m2 0h1m1 0h1m8 0h1m1 0h1m2 0h2m2 0h1m5 0h1m2 0h1m7 0h1m13 0h2m1 0h1m2 0h1m6 0h1m4 0h1m1 0h1m1 0h2m3 0h1m6 0h1m1 0h1m4 0h1M5 20h1m14 0h1m4 0h1m7 0h1m8 0h1m1 0h1m4 0h1m5 0h2m1 0h3m1 0h3m1 0h1m11 0h1m2 0h1m3 0h1m4 0h4m2 0h1m1 0h1m5 0h2m5 0h2m1 0h1m6 0h2m2 0h1M1 21h1m7 0h1m2 0h2m5 0h1m4 0h1m7 0h2m4 0h1m1 0h1m1 0h1m5 0h1m4 0h1m2 0h1m2 0h1m3 0h1m1 0h2m2 0h2m1 0h1m6 0h1m1 0h1m1 0h1m5 0h1m11 0h1m3 0h2m2 0h2m1 0h2m2 0h1m1 0h1m10 0h1M1 22h3m1 0h1m2 0h1m6 0h2m3 0h2m17 0h1m10 0h1m1 0h1m6 0h2m4 0h1m2 0h1m2 0h3m2 0h1m1 0h1m3 0h1m1 0h4m2 0h1m3 0h1m4 0h1m2 0h4m8 0h1m6 0h1m1 0h1m3 0h1m2 0h1M1 23h1m14 0h1m1 0h2m7 0h1m1 0h1m2 0h1m1 0h1m2 0h4m2 0h2m4 0h2m8 0h1m10 0h1m1 0h1m4 0h3m9 0h2m1 0h2m2 0h1m9 0h1m1 0h2m1 0h1m3 0h1m2 0h3M2 24h1m1 0h1m12 0h1m6 0h1m1 0h1m1 0h1m2 0h1m3 0h1m1 0h2m6 0h1m2 0h1m7 0h1m1 0h2m4 0h1m9 0h1m1 0h2m7 0h2m5 0h3m5 0h1m4 0h1m4 0h1m14 0h2m2 0h1M0 25h2m1 0h1m1 0h1m2 0h5m6 0h2m1 0h1m5 0h1m4 0h1m7 0h1m2 0h3m10 0h1m4 0h2m7 0h1m3 0h1m3 0h1m9 0h2m3 0h1m11 0h1m3 0h1m1 0h1m1 0h1m2 0h1m3 0h1m1 0h2M4 26h1m3 0h1m4 0h2m2 0h2m1 0h1m2 0h1m8 0h1m1 0h1m3 0h1m5 0h1m1 0h1m4 0h1m2 0h1m1 0h1m1 0h1m2 0h5m2 0h2m6 0h3m2 0h1m1 0h1m1 0h1m3 0h1m12 0h1m4 0h1m4 0h1m13 0h2m1 0h1M1 27h1m8 0h1m1 0h1m4 0h1m3 0h1m7 0h1m2 0h1m1 0h1m2 0h1m4 0h1m2 0h1m2 0h2m1 0h1m8 0h1m1 0h1m5 0h2m2 0h1m6 0h1m1 0h1m2 0h1m2 0h2m14 0h4m3 0h1m5 0h1m5 0h2m5 0h1M11 28h1m3 0h2m7 0h1m3 0h1m5 0h1m1 0h1m7 0h1m1 0h1m3 0h1m9 0h1m5 0h1m3 0h1m2 0h2m5 0h1m1 0h2m3 0h4m3 0h2m3 0h1m2 0h1m1 0h2m3 0h2m1 0h1m7 0h1m4 0h2M0 29h1m1 0h1m3 0h1m4 0h1m1 0h1m7 0h1m2 0h3m1 0h1m7 0h4m6 0h4m8 0h2m2 0h1m2 0h1m2 0h1m2 0h1m3 0h3m1 0h1m2 0h1m5 0h1m13 0h1m8 0h3m2 0h1m1 0h1m3 0h2M1 30h2m1 0h1m4 0h1m10 0h2m1 0h1m4 0h1m4 0h3m5 0h2m1 0h1m5 0h1m9 0h1m9 0h1m1 0h1m1 0h1m1 0h1m5 0h1m5 0h1m3 0h1m3 0h1m8 0h1m7 0h5m1 0h2M1 31h1m1 0h1m4 0h1m7 0h1m2 0h1m1 0h2m1 0h1m2 0h1m6 0h1m1 0h1m1 0h1m10 0h1m10 0h1m1 0h1m3 0h1m2 0h1m2 0h1m6 0h1m1 0h1m4 0h1m2 0h1m2 0h1m5 0h1m1 0h2m2 0h1m6 0h1m2 0h1m6 0h1m8 0h1M3 32h1m3 0h1m4 0h1m1 0h2m7 0h1m1 0h1m2 0h1m9 0h1m1 0h1m3 0h1m3 0h1m1 0h1m3 0h1m4 0h1m2 0h1m10 0h1m11 0h1m3 0h2m5 0h1m1 0h1m1 0h2m7 0h1m2 0h1m1 0h1m5 0h1m2 0h1M1 33h1m3 0h1m1 0h1m11 0h1m5 0h1m1 0h1m2 0h1m4 0h1m5 0h1m5 0h1m5 0h1m9 0h1m3 0h2m3 0h1m2 0h1m7 0h2m11 0h1m2 0h1m11 0h1m2 0h2m6 0h1m2 0h2m2 0h1M1 34h1m15 0h3m6 0h3m1 0h1m1 0h1m1 0h2m3 0h1m4 0h2m2 0h2m4 0h1m1 0h1m5 0h2m4 0h2m1 0h1m1 0h3m6 0h1m5 0h4m1 0h1m2 0h1m2 0h1m2 0h1m2 0h3m3 0h1m2 0h1m4 0h1m2 0h1m1 0h1M0 35h1m2 0h1m7 0h1m2 0h1m3 0h1m2 0h1m7 0h1m2 0h1m3 0h1m1 0h1m1 0h2m2 0h4m3 0h1m4 0h2m6 0h1m3 0h1m4 0h1m2 0h1m1 0h1m3 0h1m2 0h1m2 0h1m1 0h1m11 0h1m10 0h1m1 0h1m3 0h1m2 0h1m2 0h1m1 0h1M2 36h1m2 0h1m3 0h1m3 0h1m1 0h1m4 0h1m5 0h1m4 0h1m2 0h1m3 0h1m5 0h1m2 0h2m2 0h2m1 0h2m1 0h1m5 0h3m2 0h1m1 0h2m14 0h1m2 0h1m1 0h2m1 0h2m2 0h2m1 0h1m5 0h2m3 0h1m1 0h1m7 0h1m4 0h1m2 0h1M6 37h2m5 0h3m2 0h2m2 0h1m4 0h1m1 0h1m10 0h1m3 0h1m3 0h1m5 0h2m3 0h1m6 0h1m6 0h7m9 0h1m11 0h1m1 0h3m4 0h3m9 0h1M0 38h1m1 0h1m1 0h1m3 0h1m4 0h2m2 0h2m4 0h2m3 0h1m2 0h1m1 0h1m3 0h1m13 0h1m2 0h1m1 0h2m3 0h1m1 0h1m1 0h2m2 0h2m1 0h1m3 0h1m1 0h1m1 0h1m4 0h1m4 0h1m1 0h2m14 0h1m1 0h1m3 0h2m2 0h2m2 0h5M11 39h1m2 0h1m11 0h2m7 0h1m5 0h2m5 0h1m4 0h1m4 0h1m5 0h1m4 0h3m4 0h2m6 0h1m8 0h1m2 0h1m11 0h1m14 0h2m1 0h1m1 0h2M1 40h1m5 0h2m1 0h1m2 0h1m3 0h1m4 0h1m1 0h1m3 0h1m4 0h2m2 0h1m3 0h1m1 0h1m1 0h2m1 0h1m2 0h1m3 0h1m6 0h1m1 0h1m1 0h1m2 0h1m6 0h3m1 0h1m1 0h1m6 0h1m1 0h1m2 0h1m1 0h1m2 0h1m1 0h1m1 0h3m1 0h2m1 0h1m2 0h1m5 0h1m2 0h1M2 41h1m5 0h2m3 0h1m3 0h1m5 0h3m7 0h1m2 0h1m3 0h2m3 0h2m4 0h1m2 0h3m1 0h1m10 0h2m6 0h1m2 0h1m1 0h1m3 0h1m1 0h1m8 0h1m3 0h1m5 0h1m3 0h2m7 0h3m4 0h1m1 0h1M3 42h1m3 0h1m3 0h1m4 0h1m2 0h2m6 0h1m16 0h1m3 0h1m2 0h1m3 0h1m7 0h1m5 0h2m1 0h1m5 0h1m3 0h4m4 0h1m5 0h4m2 0h1m4 0h2m8 0h1m8 0h1M0 43h1m1 0h2m2 0h1m2 0h1m2 0h2m8 0h2m3 0h1m2 0h2m1 0h1m4 0h2m1 0h1m4 0h3m3 0h1m10 0h1m5 0h2m2 0h2m3 0h1m1 0h2m8 0h1m4 0h1m2 0h1m2 0h1m2 0h1m2 0h4m1 0h1m6 0h1m1 0h5m3 0h1M3 44h1m5 0h1m4 0h2m1 0h1m10 0h1m1 0h1m2 0h2m3 0h1m6 0h2m3 0h5m9 0h1m3 0h1m1 0h1m1 0h1m5 0h1m2 0h2m3 0h1m1 0h1m1 0h2m5 0h2m4 0h1m1 0h1m1 0h1m6 0h1m1 0h1m3 0h2m8 0h1M9 45h1m1 0h1m2 0h1m1 0h1m2 0h1m5 0h1m4 0h1m1 0h1m1 0h5m2 0h1m2 0h1m3 0h2m1 0h3m7 0h1m2 0h1m6 0h3m3 0h1m4 0h1m3 0h1m2 0h1m3 0h1m2 0h1m3 0h2m1 0h3m1 0h3m6 0h1m1 0h1m7 0h1m2 0h1M6 46h1m2 0h2m6 0h2m5 0h1m4 0h1m20 0h1m1 0h2m4 0h1m3 0h1m2 0h1m2 0h1m1 0h2m1 0h2m11 0h2m1 0h2m10 0h1m1 0h1m2 0h1m10 0h1m5 0h1m4 0h1M1 47h1m1 0h1m6 0h1m5 0h1m5 0h1m4 0h3m2 0h1m1 0h1m2 0h1m3 0h2m3 0h2m1 0h1m4 0h1m2 0h1m2 0h2m4 0h1m1 0h2m6 0h1m7 0h2m4 0h4m9 0h4m4 0h1m2 0h2m1 0h1m3 0h1m7 0h1M1 48h1m1 0h2m7 0h1m5 0h1m4 0h1m2 0h2m1 0h1m1 0h1m2 0h1m2 0h2m3 0h1m2 0h2m1 0h1m10 0h3m1 0h1m2 0h1m2 0h1m9 0h1m1 0h2m1 0h2m1 0h1m6 0h2m2 0h2m2 0h1m1 0h1m3 0h1m6 0h1m2 0h2m1 0h1m5 0h1m1 0h1M7 49h2m2 0h1m2 0h1m2 0h1m4 0h4m1 0h1m1 0h1m1 0h1m3 0h1m2 0h3m5 0h1m2 0h1m7 0h1m5 0h2m1 0h4m1 0h1m3 0h1m5 0h1m1 0h1m5 0h1m4 0h2m4 0h1m6 0h2m3 0h2m5 0h2m5 0h1m1 0h1M4 50h1m3 0h1m13 0h2m2 0h1m5 0h2m6 0h2m1 0h2m2 0h1m1 0h2m3 0h1m15 0h1m12 0h1m3 0h1m3 0h1m2 0h1m6 0h2m7 0h2m1 0h1m15 0h1M13 51h1m3 0h1m1 0h1m9 0h1m2 0h1m2 0h1m2 0h3m3 0h1m5 0h1m4 0h1m8 0h1m1 0h1m5 0h2m2 0h1m1 0h2m3 0h1m1 0h1m1 0h2m4 0h1m11 0h1m3 0h2m4 0h1m8 0h1m1 0h1M7 52h1m12 0h1m6 0h1m1 0h1m1 0h1m7 0h1m5 0h1m4 0h1m2 0h1m2 0h2m1 0h2m1 0h1m7 0h1m2 0h1m1 0h1m5 0h1m14 0h1m17 0h1m2 0h1m1 0h1m2 0h1m1 0h1M0 53h1m3 0h1m5 0h1m5 0h1m3 0h1m4 0h2m1 0h2m5 0h1m8 0h1m6 0h1m1 0h1m6 0h2m3 0h1m3 0h1m1 0h1m1 0h1m4 0h1m5 0h1m5 0h2m4 0h1m2 0h1m6 0h1m15 0h2m1 0h1M0 54h1m3 0h2m4 0h1m3 0h1m1 0h2m6 0h1m2 0h1m4 0h1m5 0h1m18 0h1m7 0h2m1 0h1m4 0h1m6 0h3m4 0h1m12 0h1m7 0h1m5 0h1m2 0h1m2 0h1m5 0h1m1 0h1m1 0h1M0 55h1m1 0h1m4 0h2m6 0h1m1 0h1m1 0h2m3 0h1m2 0h1m10 0h1m10 0h1m2 0h2m4 0h1m2 0h1m4 0h1m3 0h1m6 0h1m1 0h1m2 0h1m1 0h1m2 0h1m6 0h1m4 0h1m7 0h1m4 0h1m3 0h1m1 0h2m4 0h1m4 0h1M1 56h1m1 0h1m3 0h1m2 0h1m8 0h3m1 0h1m3 0h2m5 0h2m3 0h1m9 0h2m6 0h1m1 0h1m7 0h1m1 0h1m3 0h1m3 0h2m5 0h1m1 0h1m7 0h1m5 0h1m1 0h1m2 0h2m3 0h2m4 0h3M1 57h3m4 0h1m2 0h1m4 0h1m2 0h1m2 0h1m3 0h1m2 0h1m1 0h1m6 0h1m5 0h1m5 0h1m4 0h3m1 0h2m2 0h2m1 0h1m3 0h1m4 0h2m2 0h1m1 0h1m5 0h1m1 0h2m2 0h1m1 0h1m4 0h1m1 0h1m3 0h1m9 0h1m1 0h2M12 58h1m3 0h1m9 0h1m2 0h2m8 0h1m7 0h1m1 0h1m3 0h1m3 0h1m4 0h1m1 0h1m4 0h1m1 0h1m4 0h1m8 0h1m8 0h1m3 0h1m8 0h3m4 0h1m3 0h1m10 0h1M0 59h2m1 0h1m3 0h3m3 0h1m4 0h4m7 0h1m4 0h2m4 0h1m1 0h1m1 0h1m5 0h2m4 0h1m2 0h1m2 0h1m10 0h3m2 0h1m12 0h1m3 0h1m5 0h2m4 0h2m7 0h1m8 0h1m2 0h1M0 60h1m1 0h2m2 0h1m4 0h2m6 0h3m3 0h2m5 0h3m7 0h1m1 0h1m1 0h1m3 0h1m5 0h1m1 0h1m1 0h1m1 0h2m5 0h1m3 0h1m1 0h1m7 0h1m2 0h1m2 0h1m1 0h1m8 0h4m19 0h1M0 61h2m8 0h1m3 0h2m6 0h1m4 0h1m6 0h1m1 0h2m2 0h1m3 0h1m3 0h1m1 0h4m4 0h1m3 0h1m1 0h4m4 0h1m1 0h1m7 0h1m3 0h1m1 0h1m3 0h1m4 0h1m4 0h2m3 0h2m3 0h1m2 0h1m3 0h1m3 0h1m2 0h1m2 0h1M3 62h1m14 0h1m2 0h2m6 0h1m2 0h4m1 0h1m5 0h1m1 0h1m1 0h1m4 0h1m5 0h1m2 0h2m3 0h1m2 0h1m6 0h1m2 0h2m4 0h2m2 0h1m1 0h1m8 0h1m8 0h2m2 0h1m10 0h1m2 0h1M3 63h1m2 0h1m3 0h1m1 0h1m3 0h1m10 0h1m4 0h1m4 0h1m11 0h1m5 0h1m6 0h2m2 0h1m8 0h1m8 0h1m7 0h1m6 0h1m3 0h1m1 0h1m2 0h1m12 0h1m3 0h1m1 0h1M0 64h1m1 0h1m1 0h1m2 0h1m4 0h3m4 0h4m1 0h1m3 0h2m7 0h2m4 0h1m1 0h1m5 0h1m5 0h1m6 0h2m7 0h1m2 0h1m2 0h5m11 0h1m3 0h1m4 0h1m1 0h1m4 0h1m11 0h1M2 65h2m1 0h1m1 0h1m1 0h2m1 0h1m3 0h2m2 0h2m5 0h1m1 0h3m5 0h1m5 0h1m3 0h1m7 0h2m16 0h1m5 0h1m6 0h1m9 0h2m3 0h3m1 0h3m2 0h1m2 0h2m1 0h1m3 0h1m3 0h1m1 0h2m1 0h2M8 66h1m7 0h1m2 0h1m13 0h2m2 0h1m1 0h1m8 0h2m8 0h2m1 0h1m4 0h1m3 0h1m3 0h1m1 0h1m2 0h1m5 0h3m5 0h2m3 0h2m5 0h1m4 0h2m3 0h3m1 0h1m5 0h1M4 67h1m4 0h1m2 0h1m2 0h1m1 0h1m1 0h1m1 0h1m6 0h1m2 0h2m8 0h1m1 0h2m2 0h1m1 0h1m2 0h1m1 0h1m1 0h1m6 0h1m1 0h1m8 0h2m13 0h1m3 0h1m2 0h2m4 0h1m4 0h1m1 0h1m2 0h1m3 0h1m4 0h1m3 0h1M3 68h1m4 0h3m1 0h1m5 0h1m3 0h1m5 0h2m3 0h1m4 0h1m4 0h1m4 0h1m3 0h1m1 0h2m1 0h1m4 0h1m5 0h1m6 0h1m4 0h1m1 0h1m3 0h1m1 0h1m4 0h1m2 0h1m1 0h3m2 0h1m4 0h1m9 0h1m4 0h3m3 0h2M1 69h1m12 0h1m1 0h1m2 0h1m5 0h1m1 0h1m2 0h2m2 0h1m1 0h1m2 0h1m2 0h1m2 0h3m3 0h1m11 0h1m3 0h1m2 0h1m15 0h1m3 0h2m2 0h1m1 0h1m15 0h1m2 0h1m2 0h1m1 0h1m1 0h1M6 70h1m1 0h1m5 0h2m6 0h2m1 0h1m5 0h1m10 0h1m3 0h1m4 0h1m2 0h4m3 0h1m1 0h1m6 0h1m6 0h3m5 0h1m2 0h2m14 0h2m1 0h2m1 0h2m4 0h1m3 0h1m5 0h1m3 0h1M4 71h1m1 0h2m3 0h1m4 0h1m1 0h1m5 0h1m2 0h1m2 0h1m5 0h1m4 0h2m7 0h2m3 0h5m4 0h1m1 0h2m1 0h1m3 0h1m5 0h1m3 0h1m1 0h1m3 0h1m3 0h1m3 0h1m9 0h1m3 0h2m4 0h1m3 0h1m1 0h1m4 0h2M0 72h2m4 0h2m8 0h1m1 0h1m4 0h1m1 0h1m10 0h1m3 0h2m3 0h1m4 0h1m4 0h1m9 0h2m4 0h3m4 0h1m8 0h1m4 0h1m5 0h1m2 0h1m3 0h2m9 0h1m4 0h2m3 0h1m3 0h1M1 73h1m4 0h1m3 0h1m1 0h1m3 0h1m2 0h1m2 0h2m7 0h1m1 0h2m1 0h1m2 0h1m7 0h2m1 0h1m4 0h2m2 0h1m2 0h2m1 0h1m1 0h1m3 0h2m2 0h2m5 0h1m1 0h1m6 0h2m1 0h1m11 0h1m2 0h1m8 0h1m5 0h1m5 0h1M5 74h1m1 0h2m1 0h2m3 0h1m6 0h2m2 0h1m2 0h1m3 0h1m4 0h2m7 0h1m7 0h1m3 0h2m1 0h1m4 0h2m5 0h1m3 0h1m2 0h3m3 0h1m5 0h1m3 0h1m1 0h2m1 0h1m2 0h1m1 0h1m4 0h1m7 0h1m3 0h1m1 0h1m1 0h3M3 75h4m3 0h1m2 0h1m3 0h1m2 0h1m2 0h1m6 0h2m3 0h1m1 0h1m4 0h1m1 0h1m3 0h1m1 0h1m2 0h3m2 0h1m6 0h1m4 0h1m2 0h1m2 0h1m7 0h2m1 0h2m2 0h2m1 0h1m4 0h1m8 0h1m4 0h1m9 0h1m5 0h1M5 76h1m6 0h1m2 0h1m1 0h2m2 0h1m1 0h2m1 0h1m8 0h1m1 0h2m11 0h3m1 0h1m4 0h2m1 0h1m3 0h1m1 0h1m12 0h1m1 0h1m9 0h1m1 0h1m10 0h1m1 0h1m1 0h2m1 0h1m2 0h2m4 0h3m2 0h1m1 0h1M1 77h1m1 0h1m2 0h1m1 0h1m1 0h1m9 0h2m7 0h3m1 0h2m2 0h1m2 0h2m1 0h3m2 0h1m2 0h2m3 0h2m2 0h1m3 0h1m4 0h1m2 0h2m1 0h2m6 0h1m16 0h4m1 0h1m2 0h1m2 0h1m3 0h1m4 0h1m2 0h1m2 0h1M0 78h1m1 0h1m7 0h1m6 0h1m4 0h1m6 0h1m2 0h1m8 0h1m10 0h1m1 0h1m2 0h1m6 0h1m11 0h4m5 0h3m3 0h1m1 0h1m2 0h1m1 0h1m1 0h1m7 0h3m2 0h1m1 0h1m4 0h1M2 79h1m7 0h1m3 0h1m7 0h1m1 0h2m1 0h1m5 0h1m1 0h1m1 0h1m6 0h2m17 0h1m1 0h2m1 0h2m1 0h1m1 0h2m2 0h1m4 0h1m1 0h1m5 0h1m1 0h1m1 0h1m3 0h1m2 0h1m2 0h1m1 0h1m6 0h1m2 0h1m3 0h1m1 0h1m7 0h1M2 80h1m3 0h2m1 0h1m3 0h1m1 0h1m5 0h2m4 0h2m3 0h4m6 0h3m2 0h2m2 0h2m4 0h1m2 0h1m5 0h1m4 0h1m20 0h3m4 0h1m1 0h1m4 0h2m3 0h1m8 0h1m5 0h1m3 0h1M1 81h2m2 0h1m1 0h1m14 0h1m1 0h1m3 0h1m4 0h1m5 0h2m3 0h1m3 0h1m4 0h2m5 0h3m4 0h2m5 0h1m3 0h1m5 0h1m15 0h3m1 0h3m1 0h2m13 0h1m1 0h1m2 0h1M2 82h1m7 0h1m4 0h2m3 0h1m4 0h1m1 0h1m5 0h1m6 0h1m3 0h2m1 0h1m3 0h1m1 0h1m6 0h1m1 0h1m2 0h2m1 0h2m4 0h3m4 0h1m10 0h2m4 0h1m16 0h1m9 0h1m1 0h1M1 83h3m4 0h2m2 0h2m2 0h1m10 0h1m3 0h1m8 0h1m1 0h2m3 0h1m2 0h1m2 0h1m5 0h3m1 0h1m5 0h1m1 0h2m2 0h4m7 0h1m9 0h1m3 0h1m1 0h1m4 0h2m10 0h1m5 0h1m1 0h1M2 84h1m3 0h1m5 0h1m1 0h1m2 0h1m6 0h1m2 0h1m5 0h1m3 0h1m3 0h1m1 0h1m3 0h1m2 0h1m13 0h2m2 0h1m2 0h1m13 0h2m5 0h3m12 0h1m7 0h1m1 0h1m1 0h1m3 0h1m4 0h1M3 85h1m2 0h1m1 0h1m2 0h3m3 0h3m2 0h1m1 0h1m1 0h1m1 0h1m10 0h2m3 0h1m2 0h2m3 0h1m9 0h2m1 0h1m2 0h1m3 0h1m3 0h1m4 0h2m1 0h1m1 0h1m5 0h2m1 0h2m4 0h1m9 0h2m1 0h2m4 0h1m7 0h3M3 86h2m3 0h1m2 0h1m10 0h1m2 0h1m18 0h1m11 0h1m9 0h1m4 0h2m4 0h2m1 0h1m3 0h1m4 0h1m4 0h1m4 0h1m2 0h1m1 0h1m8 0h2m1 0h2m3 0h1M6 87h1m4 0h1m4 0h2m2 0h2m1 0h1m6 0h1m3 0h1m2 0h1m1 0h1m7 0h1m2 0h1m4 0h1m17 0h1m2 0h4m1 0h1m4 0h1m5 0h2m1 0h1m2 0h1m5 0h1m2 0h2m2 0h1m2 0h1m5 0h1m2 0h1M3 88h1m12 0h1m5 0h2m3 0h1m7 0h1m1 0h2m2 0h1m1 0h1m1 0h1m2 0h1m1 0h2m2 0h1m2 0h4m8 0h4m4 0h1m2 0h1m2 0h1m2 0h1m1 0h1m1 0h1m8 0h3m2 0h1m10 0h1m3 0h2m4 0h2m2 0h2" stroke="#740000" stroke-width="1" fill="none" shape-rendering="crispEdges"/></pattern>
<pattern id="m217" x="106" y="317" width="113" height="101" patternUnits="userSpaceOnUse"><path transform="translate(0 .5)" d="M1 0h1m3 0h3m1 0h1m2 0h2m1 0h2m3 0h1m9 0h1m15 0h1m1 0h3m2 0h1m8 0h1m1 0h1m3 0h2m3 0h1m7 0h1m3 0h1m5 0h1m3 0h1m14 0h1M1 1h2m3 0h1m5 0h1m6 0h1m1 0h1m2 0h1m1 0h1m11 0h1m1 0h1m1 0h1m4 0h3m3 0h2m2 0h1m1 0h1m9 0h1m12 0h1m1 0h1m2 0h1m1 0h1m10 0h1m8 0h1m2 0h1M2 2h1m1 0h1m1 0h1m4 0h1m3 0h1m4 0h1m5 0h1m10 0h2m3 0h1m5 0h1m4 0h1m3 0h1m1 0h1m8 0h2m3 0h1m1 0h1m2 0h2m8 0h1m1 0h1m1 0h1m1 0h1m3 0h2m6 0h2m3 0h1M0 3h1m1 0h1m1 0h1m2 0h1m10 0h2m2 0h1m5 0h2m12 0h2m2 0h1m6 0h1m2 0h1m4 0h2m2 0h2m2 0h1m9 0h1m1 0h2m7 0h1m2 0h1m2 0h1m8 0h1m5 0h1M0 4h1m9 0h2m5 0h1m5 0h1m1 0h2m2 0h1m5 0h2m2 0h2m2 0h1m6 0h1m2 0h2m1 0h1m2 0h1m14 0h1m6 0h1m6 0h4m3 0h1m1 0h3M3 5h1m1 0h1m2 0h1m10 0h2m2 0h1m4 0h1m6 0h1m2 0h2m4 0h1m2 0h1m1 0h1m3 0h1m3 0h1m2 0h1m2 0h1m4 0h3m2 0h2m4 0h3m5 0h1m3 0h1m5 0h1m3 0h1m2 0h1M0 6h2m1 0h1m1 0h2m15 0h1m2 0h3m1 0h1m3 0h1m2 0h1m12 0h1m4 0h2m9 0h1m8 0h1m1 0h2m3 0h1m2 0h1m10 0h1m2 0h1m1 0h1m3 0h1m6 0h1M2 7h1m3 0h1m6 0h1m6 0h1m9 0h2m1 0h1m5 0h2m3 0h1m2 0h1m1 0h1m2 0h3m5 0h1m4 0h1m1 0h1m1 0h1m1 0h1m2 0h2m10 0h2m6 0h2m4 0h1m6 0h2M3 8h1m4 0h2m3 0h1m2 0h1m15 0h1m4 0h2m3 0h2m3 0h2m4 0h1m8 0h1m6 0h1m2 0h2m2 0h2m11 0h1m3 0h1m6 0h1m10 0h1M1 9h1m9 0h2m14 0h1m3 0h1m4 0h1m7 0h3m2 0h2m1 0h1m2 0h1m5 0h1m6 0h1m11 0h2m1 0h1m1 0h2m7 0h1m2 0h1m4 0h1m4 0h2m1 0h1M0 10h1m8 0h2m9 0h2m12 0h1m6 0h1m1 0h1m1 0h2m2 0h1m12 0h1m5 0h1m1 0h1m3 0h1m6 0h1m5 0h2m2 0h1m3 0h1m1 0h1m8 0h1m1 0h1M4 11h2m2 0h1m4 0h1m2 0h1m2 0h1m5 0h1m2 0h1m2 0h1m5 0h2m1 0h1m1 0h1m2 0h1m6 0h1m4 0h1m5 0h1m2 0h1m20 0h1m1 0h1m2 0h2m6 0h2m4 0h1m1 0h1m2 0h2M3 12h1m6 0h1m12 0h1m2 0h1m1 0h1m2 0h1m1 0h1m4 0h1m8 0h1m4 0h1m3 0h1m3 0h2m7 0h1m1 0h1m6 0h3m3 0h1m6 0h2m2 0h1m3 0h1m2 0h1m1 0h1m1 0h2M1 13h1m4 0h1m9 0h2m5 0h1m13 0h1m4 0h1m1 0h1m13 0h1m11 0h1m3 0h1m17 0h1m2 0h1m3 0h1m2 0h1m7 0h1M2 14h1m3 0h4m3 0h2m7 0h1m12 0h1m7 0h2m1 0h1m1 0h2m10 0h1m2 0h2m1 0h1m3 0h1m2 0h2m2 0h1m1 0h1m4 0h1m8 0h1m1 0h1m11 0h1M7 15h1m3 0h1m3 0h3m1 0h2m2 0h2m9 0h1m1 0h1m3 0h1m6 0h1m1 0h1m5 0h1m17 0h2m16 0h1m3 0h1m2 0h2m2 0h5m2 0h1M7 16h1m4 0h1m11 0h1m1 0h1m4 0h1m2 0h1m1 0h1m2 0h1m6 0h1m1 0h1m1 0h1m3 0h1m1 0h1m4 0h1m8 0h1m5 0h1m7 0h1m3 0h1m2 0h1m3 0h1m1 0h1m1 0h1m4 0h1M5 17h1m4 0h3m2 0h1m2 0h1m2 0h1m9 0h1m2 0h1m10 0h1m3 0h1m2 0h1m8 0h1m2 0h1m6 0h1m3 0h1m1 0h1m5 0h1m6 0h1m1 0h1m1 0h1m2 0h1m13 0h1M10 18h1m1 0h2m6 0h2m3 0h1m1 0h1m1 0h1m3 0h1m2 0h1m5 0h1m4 0h1m1 0h1m1 0h1m2 0h1m2 0h1m1 0h3m1 0h1m12 0h1m4 0h2m6 0h1m7 0h1m7 0h2M7 19h1m10 0h1m1 0h1m6 0h1m2 0h1m4 0h1m1 0h1m2 0h1m4 0h2m1 0h1m1 0h1m2 0h1m10 0h1m5 0h3m1 0h1m1 0h1m4 0h1m7 0h1m3 0h1m17 0h1M0 20h1m4 0h1m6 0h2m3 0h1m1 0h1m1 0h1m1 0h1m3 0h1m3 0h1m8 0h3m1 0h1m4 0h1m1 0h1m1 0h1m2 0h1m6 0h1m6 0h2m2 0h1m2 0h1m1 0h1m1 0h1m3 0h1m2 0h1m8 0h1m2 0h2m4 0h1m1 0h1m3 0h1M5 21h1m7 0h1m5 0h1m3 0h1m7 0h1m5 0h1m2 0h1m5 0h4m2 0h1m7 0h1m3 0h3m7 0h1m16 0h1m3 0h2m6 0h1m1 0h1m3 0h1m1 0h1M6 22h1m5 0h2m3 0h2m2 0h1m7 0h2m3 0h1m5 0h1m6 0h1m1 0h1m4 0h1m3 0h3m3 0h1m3 0h1m2 0h1m15 0h1m5 0h1m11 0h1m1 0h1m1 0h1M13 23h1m5 0h2m2 0h5m6 0h1m5 0h1m2 0h2m3 0h1m3 0h1m1 0h1m2 0h1m1 0h2m2 0h2m9 0h1m1 0h1m9 0h1m8 0h1m1 0h1m3 0h1m4 0h1m3 0h1M6 24h2m2 0h1m3 0h1m1 0h2m12 0h2m12 0h1m1 0h2m1 0h1m2 0h1m1 0h2m14 0h2m1 0h1m5 0h1m2 0h1m4 0h2m3 0h1m2 0h1m2 0h1m10 0h2M4 25h1m2 0h1m2 0h1m6 0h1m9 0h2m3 0h2m26 0h2m6 0h1m4 0h2m13 0h1m2 0h1m1 0h2m2 0h1m3 0h1m6 0h1M4 26h1m3 0h2m5 0h1m6 0h1m2 0h1m3 0h2m19 0h1m1 0h1m3 0h1m5 0h1m10 0h2m7 0h1m1 0h1m2 0h1m5 0h1m4 0h1m5 0h1m7 0h1M1 27h2m5 0h2m1 0h2m7 0h4m1 0h1m3 0h1m11 0h2m3 0h2m9 0h1m1 0h1m8 0h1m1 0h2m3 0h1m3 0h1m3 0h2m1 0h1m7 0h1m3 0h1m1 0h1m1 0h1m3 0h2M2 28h1m8 0h1m10 0h1m1 0h1m1 0h1m5 0h2m3 0h1m3 0h2m4 0h1m8 0h1m3 0h1m3 0h1m6 0h3m5 0h1m4 0h1m3 0h1m1 0h1m2 0h1m2 0h1m2 0h1m3 0h1m1 0h1m2 0h1M6 29h1m5 0h3m3 0h1m2 0h1m3 0h3m2 0h1m7 0h2m1 0h1m14 0h1m9 0h1m1 0h2m1 0h1m19 0h2m6 0h1m4 0h1m1 0h1m3 0h1M0 30h1m2 0h1m2 0h1m1 0h2m5 0h1m4 0h1m5 0h1m3 0h1m2 0h1m5 0h2m1 0h1m1 0h2m1 0h1m2 0h1m5 0h1m6 0h2m1 0h1m13 0h2m1 0h1m8 0h1m1 0h1m2 0h1m3 0h1m2 0h1m3 0h1M3 31h1m9 0h2m4 0h2m1 0h1m9 0h1m1 0h1m1 0h1m1 0h1m14 0h1m6 0h1m1 0h1m3 0h1m2 0h1m14 0h1m1 0h1m5 0h2m3 0h3m4 0h1m5 0h1M1 32h2m5 0h1m3 0h2m4 0h1m2 0h1m1 0h2m8 0h1m3 0h1m5 0h1m4 0h1m9 0h1m12 0h3m2 0h1m4 0h1m2 0h1m3 0h2m12 0h1m6 0h3M4 33h1m2 0h2m3 0h2m3 0h2m4 0h1m2 0h2m1 0h2m1 0h1m3 0h1m2 0h1m3 0h1m16 0h1m10 0h1m5 0h2m1 0h2m4 0h3m13 0h1m6 0h1M0 34h2m1 0h1m5 0h1m6 0h1m2 0h2m10 0h2m5 0h1m16 0h1m2 0h1m1 0h1m1 0h1m2 0h1m3 0h3m1 0h1m1 0h2m1 0h1m4 0h1m8 0h1m1 0h1m2 0h1m5 0h1m2 0h1m4 0h1M10 35h1m2 0h2m4 0h1m1 0h2m8 0h1m1 0h4m1 0h1m4 0h2m9 0h1m2 0h1m7 0h1m2 0h1m4 0h1m2 0h2m18 0h1m2 0h1m4 0h1m4 0h2M1 36h2m3 0h1m2 0h3m6 0h1m6 0h1m3 0h2m14 0h1m2 0h4m4 0h1m1 0h3m7 0h1m1 0h1m6 0h1m1 0h1m5 0h1m7 0h1m4 0h2m2 0h1m3 0h1m4 0h1M0 37h1m13 0h1m2 0h1m1 0h1m2 0h1m2 0h2m1 0h2m3 0h2m2 0h1m2 0h1m7 0h1m6 0h2m8 0h2m8 0h1m5 0h1m2 0h1m4 0h1m10 0h1m3 0h1m3 0h1M5 38h1m5 0h2m3 0h1m6 0h1m1 0h2m11 0h1m13 0h1m1 0h1m4 0h2m4 0h1m5 0h1m3 0h1m2 0h2m3 0h1m5 0h1m7 0h1m5 0h1m2 0h1M4 39h2m4 0h1m8 0h1m1 0h1m1 0h2m1 0h1m1 0h3m1 0h1m3 0h1m1 0h1m6 0h1m7 0h1m1 0h2m1 0h1m1 0h2m1 0h1m5 0h1m5 0h1m2 0h2m3 0h2m1 0h1m6 0h1m2 0h1m1 0h2m3 0h1m5 0h2M0 40h1m7 0h1m1 0h1m1 0h1m4 0h1m2 0h1m3 0h1m15 0h3m4 0h1m2 0h2m9 0h1m2 0h1m3 0h1m2 0h1m1 0h1m4 0h1m5 0h1m2 0h2m2 0h1m2 0h1m1 0h3m3 0h1m1 0h2m6 0h1M7 41h2m7 0h1m2 0h1m8 0h1m5 0h1m7 0h1m2 0h1m1 0h1m2 0h1m6 0h2m6 0h1m12 0h2m8 0h1m2 0h1m2 0h1m3 0h1m1 0h2m6 0h1M8 42h1m2 0h1m21 0h1m2 0h2m9 0h1m2 0h2m11 0h1m2 0h2m4 0h3m4 0h2m4 0h1m1 0h2m7 0h1m3 0h1m4 0h1m5 0h1M1 43h1m1 0h1m4 0h1m5 0h1m4 0h1m2 0h2m1 0h1m3 0h1m3 0h1m3 0h2m3 0h1m3 0h1m10 0h1m5 0h1m6 0h1m1 0h1m8 0h1m2 0h2m14 0h4m2 0h2m4 0h1M0 44h1m1 0h1m6 0h2m8 0h1m3 0h2m1 0h1m7 0h1m16 0h1m1 0h1m5 0h2m6 0h1m6 0h2m1 0h1m10 0h2m2 0h2m6 0h3m5 0h2M6 45h2m2 0h1m7 0h1m5 0h1m11 0h1m1 0h1m2 0h1m5 0h2m2 0h1m17 0h1m2 0h1m2 0h1m4 0h1m3 0h1m1 0h1m2 0h6m11 0h1M5 46h1m3 0h1m7 0h1m7 0h2m1 0h2m2 0h1m6 0h1m7 0h1m1 0h1m3 0h1m3 0h2m3 0h1m1 0h1m6 0h1m13 0h2m5 0h2m5 0h1m4 0h1M1 47h1m7 0h2m1 0h1m2 0h2m3 0h1m1 0h1m6 0h2m1 0h1m2 0h1m2 0h2m4 0h1m4 0h1m6 0h1m4 0h1m7 0h3m1 0h1m1 0h1m4 0h1m1 0h2m6 0h2m4 0h1m6 0h1m5 0h1m1 0h1M0 48h1m2 0h2m4 0h1m2 0h1m15 0h1m4 0h1m1 0h1m4 0h1m6 0h4m7 0h2m1 0h1m8 0h1m2 0h1m11 0h1m13 0h1m6 0h1m3 0h1M0 49h1m2 0h1m3 0h1m3 0h1m1 0h2m8 0h1m1 0h1m4 0h1m6 0h1m2 0h2m2 0h1m2 0h1m4 0h2m2 0h1m5 0h1m7 0h2m4 0h2m14 0h1m4 0h1m4 0h1m1 0h1m2 0h1m1 0h3M6 50h1m3 0h1m7 0h1m2 0h1m4 0h1m11 0h1m2 0h2m3 0h1m8 0h1m4 0h1m10 0h1m7 0h1m5 0h1m8 0h1m8 0h1m3 0h2M3 51h1m5 0h1m1 0h1m2 0h1m10 0h1m3 0h2m6 0h1m9 0h1m2 0h1m1 0h1m2 0h1m7 0h1m15 0h1m10 0h1m2 0h1m9 0h1m1 0h1m1 0h1M2 52h1m2 0h2m1 0h1m3 0h2m5 0h1m9 0h1m3 0h1m1 0h1m2 0h2m4 0h1m1 0h1m4 0h1m3 0h1m1 0h1m9 0h1m2 0h1m7 0h1m3 0h1m5 0h1m4 0h4m5 0h1m7 0h1M1 53h1m5 0h1m2 0h2m2 0h2m1 0h1m3 0h4m2 0h1m14 0h1m7 0h1m1 0h2m2 0h1m2 0h1m7 0h2m2 0h1m3 0h1m2 0h2m3 0h4m2 0h3m3 0h1m5 0h1m6 0h1M3 54h1m1 0h2m2 0h1m1 0h3m1 0h1m1 0h1m2 0h1m1 0h1m8 0h1m1 0h2m3 0h2m3 0h2m7 0h1m5 0h1m1 0h1m1 0h2m4 0h1m1 0h1m34 0h1M3 55h1m3 0h1m8 0h1m2 0h1m7 0h1m8 0h1m8 0h1m7 0h1m6 0h1m1 0h3m15 0h1m1 0h1m1 0h1m2 0h1m11 0h1m2 0h2m1 0h1m2 0h1m3 0h1M0 56h1m2 0h2m5 0h1m4 0h1m1 0h1m2 0h1m6 0h1m6 0h1m5 0h1m6 0h1m1 0h1m7 0h1m20 0h1m3 0h1m2 0h1m2 0h1m12 0h2M2 57h1m3 0h1m2 0h1m2 0h1m1 0h1m2 0h1m2 0h1m3 0h1m4 0h2m2 0h1m5 0h1m1 0h2m1 0h1m2 0h2m2 0h2m1 0h1m5 0h1m2 0h1m1 0h1m9 0h1m2 0h1m14 0h2m7 0h2m6 0h1M1 58h1m14 0h1m8 0h1m4 0h1m10 0h1m3 0h1m1 0h1m1 0h1m3 0h2m3 0h1m1 0h2m2 0h1m1 0h1m3 0h1m3 0h2m3 0h3m1 0h1m2 0h1m11 0h1m2 0h1m1 0h1m2 0h1m2 0h1M0 59h1m9 0h1m2 0h1m3 0h2m3 0h1m1 0h1m12 0h1m1 0h1m1 0h1m5 0h1m3 0h1m2 0h1m17 0h1m6 0h1m2 0h1m1 0h2m10 0h1m4 0h2m3 0h2M1 60h2m3 0h1m9 0h1m3 0h1m3 0h1m3 0h1m3 0h1m5 0h1m8 0h1m1 0h1m3 0h2m7 0h1m4 0h1m2 0h2m4 0h1m1 0h1m1 0h1m1 0h1m1 0h1m3 0h1m4 0h1m12 0h1M7 61h1m9 0h1m7 0h1m17 0h1m2 0h2m1 0h1m24 0h1m3 0h2m1 0h2m2 0h1m1 0h5m3 0h2m3 0h1m1 0h2m3 0h1m2 0h1M5 62h1m9 0h1m2 0h1m1 0h1m2 0h1m1 0h1m1 0h1m9 0h1m7 0h1m5 0h2m4 0h1m1 0h1m6 0h2m7 0h1m1 0h2m5 0h1m5 0h1m7 0h1m3 0h1m5 0h1M0 63h2m3 0h1m8 0h3m5 0h1m3 0h2m8 0h1m10 0h2m1 0h1m6 0h1m5 0h1m1 0h1m3 0h1m2 0h1m3 0h1m2 0h1m2 0h3m3 0h2m5 0h3m1 0h1m6 0h1m3 0h1M3 64h1m1 0h3m1 0h1m8 0h1m9 0h1m5 0h1m1 0h1m4 0h1m9 0h1m3 0h1m1 0h2m1 0h1m1 0h1m2 0h1m2 0h1m6 0h3m13 0h1m15 0h1m1 0h1m1 0h1M1 65h1m1 0h1m4 0h2m1 0h1m1 0h1m1 0h1m1 0h1m4 0h1m1 0h3m5 0h1m5 0h1m5 0h1m6 0h1m6 0h1m3 0h1m6 0h1m7 0h1m1 0h2m11 0h1m1 0h1m6 0h1m6 0h1M5 66h1m4 0h1m1 0h1m2 0h1m2 0h1m1 0h2m1 0h3m9 0h1m2 0h1m4 0h1m1 0h1m8 0h1m3 0h3m10 0h1m1 0h1m13 0h1m5 0h1m1 0h1m2 0h2m1 0h2m6 0h1M1 67h1m14 0h1m14 0h1m3 0h1m5 0h1m1 0h1m6 0h1m2 0h1m1 0h1m4 0h1m1 0h1m2 0h2m1 0h1m3 0h1m10 0h1m7 0h1m4 0h4M3 68h2m7 0h1m3 0h1m6 0h1m3 0h2m5 0h1m2 0h1m7 0h1m4 0h2m1 0h2m3 0h1m5 0h1m5 0h1m1 0h1m1 0h1m12 0h1m1 0h2m5 0h1m8 0h1m6 0h1M3 69h2m1 0h2m1 0h1m2 0h2m2 0h2m5 0h1m4 0h1m10 0h2m1 0h1m10 0h2m5 0h1m6 0h2m2 0h2m4 0h2m1 0h1m8 0h1m1 0h1m1 0h1m6 0h1m2 0h2m1 0h1m1 0h2M4 70h1m4 0h1m6 0h1m2 0h1m6 0h1m1 0h2m1 0h1m5 0h1m5 0h1m6 0h1m1 0h1m6 0h1m7 0h1m6 0h2m6 0h1m2 0h1m7 0h2m4 0h2m8 0h2M3 71h1m5 0h1m5 0h1m5 0h4m1 0h1m1 0h1m3 0h1m6 0h1m5 0h1m21 0h1m1 0h2m5 0h1m2 0h1m8 0h1m11 0h1m3 0h2m2 0h1m1 0h1M6 72h1m1 0h1m3 0h1m1 0h1m1 0h1m2 0h1m5 0h1m5 0h2m1 0h1m1 0h1m1 0h1m3 0h1m3 0h2m2 0h1m2 0h1m2 0h1m3 0h1m2 0h4m10 0h1m3 0h1m4 0h1m7 0h1m17 0h1M1 73h1m5 0h1m4 0h1m1 0h1m2 0h2m1 0h1m3 0h2m3 0h1m3 0h1m6 0h2m3 0h1m4 0h3m3 0h1m2 0h1m1 0h2m2 0h1m8 0h2m1 0h2m7 0h2m1 0h1m3 0h1m5 0h1m3 0h1m3 0h1m2 0h1M0 74h1m1 0h1m7 0h1m2 0h1m5 0h1m1 0h1m2 0h1m5 0h1m6 0h2m5 0h2m1 0h1m1 0h1m4 0h1m1 0h2m2 0h1m5 0h2m2 0h1m6 0h1m2 0h3m2 0h1m1 0h1m4 0h1m5 0h1m1 0h1m3 0h1M4 75h1m1 0h1m1 0h2m3 0h1m3 0h2m5 0h1m7 0h1m2 0h1m7 0h3m1 0h1m4 0h1m8 0h1m2 0h1m8 0h1m3 0h1m2 0h2m4 0h1m7 0h2m4 0h1m6 0h2M0 76h1m1 0h1m16 0h3m1 0h2m4 0h4m1 0h3m3 0h1m3 0h1m5 0h1m7 0h1m2 0h1m8 0h1m2 0h1m8 0h1m17 0h1m10 0h2M0 77h1m8 0h1m5 0h4m7 0h1m2 0h1m1 0h1m1 0h1m1 0h2m4 0h1m2 0h1m3 0h1m2 0h1m3 0h1m1 0h1m8 0h1m17 0h2m1 0h1m4 0h1m9 0h1m9 0h1M2 78h1m3 0h1m2 0h2m1 0h1m9 0h2m3 0h1m4 0h1m4 0h1m2 0h1m3 0h1m2 0h1m8 0h1m1 0h1m4 0h1m1 0h1m8 0h1m9 0h2m4 0h1m6 0h1m3 0h1m8 0h1M1 79h1m8 0h1m11 0h1m10 0h1m1 0h1m3 0h2m1 0h1m2 0h1m7 0h1m1 0h2m1 0h1m1 0h1m1 0h1m3 0h1m2 0h1m4 0h1m4 0h1m1 0h2m4 0h1m3 0h1m4 0h2m5 0h1m1 0h2M1 80h1m1 0h1m2 0h1m9 0h2m8 0h1m2 0h1m3 0h2m2 0h3m3 0h1m3 0h2m9 0h2m7 0h2m1 0h1m5 0h1m8 0h1m4 0h1m1 0h1m7 0h4m6 0h1M4 81h2m9 0h1m1 0h1m3 0h1m2 0h1m10 0h1m3 0h2m4 0h3m2 0h2m8 0h1m6 0h1m8 0h1m2 0h1m1 0h1m4 0h1m1 0h1m2 0h3m13 0h1m2 0h1M1 82h1m5 0h1m2 0h1m3 0h1m3 0h2m8 0h1m3 0h1m1 0h1m6 0h4m4 0h1m2 0h1m8 0h1m2 0h2m2 0h1m5 0h1m11 0h1m5 0h1m2 0h2m2 0h2m2 0h1m1 0h1m6 0h1M6 83h1m4 0h1m1 0h1m3 0h2m2 0h1m6 0h2m2 0h1m7 0h1m6 0h1m7 0h1m1 0h1m4 0h1m8 0h1m1 0h1m8 0h1m1 0h1m1 0h1m1 0h1m1 0h2m2 0h1m3 0h1m10 0h1m1 0h1M1 84h1m6 0h1m10 0h1m10 0h1m7 0h2m1 0h2m1 0h1m11 0h1m2 0h2m1 0h2m5 0h1m3 0h1m1 0h1m3 0h1m1 0h3m3 0h1m2 0h1m5 0h2m10 0h2M1 85h1m5 0h2m2 0h2m2 0h1m11 0h1m2 0h1m1 0h1m3 0h1m5 0h3m3 0h1m6 0h2m3 0h1m8 0h1m4 0h1m3 0h1m4 0h1m7 0h1m3 0h1m2 0h2m1 0h1m9 0h1M0 86h1m1 0h2m1 0h2m6 0h1m4 0h1m6 0h1m1 0h1m7 0h1m1 0h1m4 0h1m5 0h1m10 0h1m5 0h2m1 0h1m5 0h1m2 0h4m3 0h1m1 0h1m2 0h2m3 0h2m1 0h1m10 0h1M4 87h1m5 0h1m3 0h1m3 0h1m1 0h1m12 0h1m2 0h1m4 0h1m1 0h1m1 0h3m2 0h3m1 0h2m5 0h1m10 0h1m11 0h1m1 0h1m3 0h2m2 0h1m6 0h1m6 0h1M14 88h2m1 0h1m6 0h2m15 0h1m2 0h1m5 0h1m1 0h3m3 0h2m8 0h1m1 0h1m3 0h1m4 0h1m6 0h1m2 0h1m4 0h1m1 0h2m12 0h1M7 89h1m1 0h1m3 0h1m2 0h1m9 0h1m1 0h1m2 0h2m1 0h2m1 0h2m3 0h1m7 0h2m2 0h1m3 0h1m1 0h2m2 0h1m1 0h1m1 0h1m4 0h2m9 0h1m4 0h2m3 0h1m10 0h1m1 0h1m1 0h1m2 0h1M1 90h1m3 0h2m5 0h1m4 0h1m1 0h1m2 0h2m5 0h1m5 0h1m7 0h1m2 0h1m2 0h1m1 0h1m3 0h2m2 0h2m6 0h1m3 0h1m4 0h1m3 0h3m9 0h1m1 0h1m10 0h2m1 0h1M5 91h1m4 0h1m2 0h1m1 0h1m4 0h2m5 0h1m3 0h1m5 0h1m4 0h1m9 0h1m5 0h2m1 0h1m8 0h1m5 0h2m10 0h1m5 0h1m3 0h2m2 0h1M13 92h1m5 0h1m1 0h1m1 0h1m2 0h1m2 0h1m1 0h1m5 0h1m11 0h1m4 0h1m11 0h1m9 0h1m4 0h1m3 0h1m4 0h1m7 0h1m1 0h1m8 0h1M9 93h1m9 0h2m10 0h2m6 0h1m1 0h1m2 0h1m1 0h1m6 0h1m19 0h1m1 0h2m1 0h1m5 0h1m4 0h1m18 0h1M8 94h1m4 0h1m1 0h1m7 0h1m1 0h1m2 0h1m5 0h1m2 0h1m9 0h2m7 0h1m4 0h1m1 0h1m4 0h1m14 0h1m4 0h2m1 0h1m7 0h1m1 0h1m6 0h1m3 0h1M4 95h1m5 0h1m2 0h1m5 0h1m2 0h1m4 0h1m1 0h2m9 0h1m8 0h2m4 0h1m4 0h1m5 0h1m5 0h1m4 0h2m2 0h1m2 0h1m11 0h2m2 0h1m3 0h1m4 0h1M14 96h1m5 0h1m1 0h1m7 0h1m6 0h1m3 0h1m2 0h1m2 0h1m3 0h4m5 0h1m1 0h1m1 0h2m1 0h2m7 0h1m3 0h3m4 0h1m11 0h2m3 0h1m3 0h1M2 97h1m5 0h1m3 0h1m2 0h2m2 0h1m1 0h1m1 0h1m1 0h1m3 0h1m3 0h1m6 0h1m3 0h1m2 0h1m9 0h1m13 0h1m7 0h3m2 0h3m4 0h1m2 0h1m4 0h1m12 0h1M1 98h1m2 0h1m7 0h2m2 0h1m2 0h1m1 0h2m7 0h1m1 0h1m3 0h2m2 0h1m1 0h1m1 0h1m3 0h1m8 0h1m2 0h1m3 0h1m1 0h1m2 0h2m1 0h2m1 0h1m9 0h1m4 0h1m1 0h1m4 0h3m1 0h1m1 0h1M1 99h2m4 0h1m1 0h1m5 0h1m6 0h1m5 0h2m8 0h1m2 0h1m5 0h1m4 0h1m2 0h1m1 0h2m4 0h1m3 0h1m2 0h2m7 0h1m1 0h1m1 0h1m4 0h2m2 0h1m2 0h1m2 0h1m7 0h1m1 0h1m1 0h1M6 100h1m1 0h1m1 0h1m6 0h1m5 0h1m1 0h1m1 0h1m2 0h3m7 0h2m2 0h1m2 0h1m3 0h2m1 0h2m6 0h2m3 0h1m6 0h1m3 0h1m12 0h1m1 0h1m7 0h1" stroke="#c00000" stroke-width="1" fill="none" shape-rendering="crispEdges"/></pattern>
<pattern id="m218" x="106" y="317" width="109" height="103" patternUnits="userSpaceOnUse"><path transform="translate(0 .5)" d="M0 0h2m4 0h1m1 0h2m2 0h1m7 0h3m3 0h2m4 0h1m2 0h1m4 0h1m1 0h1m3 0h1m1 0h2m21 0h1m1 0h1m1 0h1m4 0h1m11 0h1m13 0h1M1 1h1m5 0h1m1 0h1m1 0h1m1 0h1m2 0h1m6 0h1m4 0h2m19 0h1m9 0h1m10 0h1m4 0h4m1 0h1m11 0h2m2 0h1m7 0h1M1 2h1m4 0h1m1 0h2m9 0h1m1 0h1m8 0h2m2 0h1m3 0h2m6 0h1m4 0h1m2 0h1m3 0h1m1 0h1m7 0h1m10 0h1m6 0h1m1 0h1m1 0h1m7 0h1m2 0h1m2 0h1m2 0h1M0 3h1m7 0h1m9 0h1m3 0h2m10 0h1m1 0h1m5 0h1m5 0h1m3 0h1m1 0h1m6 0h2m1 0h1m20 0h1m1 0h1m5 0h1m1 0h1m1 0h1m10 0h1M2 4h1m10 0h1m7 0h1m10 0h1m1 0h1m3 0h1m11 0h1m3 0h2m10 0h1m5 0h2m1 0h1m6 0h1m1 0h3m14 0h1m1 0h1m4 0h1M2 5h1m5 0h1m7 0h2m6 0h2m3 0h1m2 0h1m4 0h1m10 0h2m9 0h1m3 0h1m1 0h1m1 0h1m3 0h1m5 0h2m7 0h1M0 6h1m5 0h2m1 0h2m1 0h1m2 0h1m2 0h1m1 0h1m4 0h2m2 0h1m5 0h1m1 0h1m22 0h1m7 0h1m5 0h1m4 0h1m13 0h1m2 0h1m7 0h1m3 0h1M1 7h1m3 0h1m8 0h1m6 0h1m2 0h1m11 0h1m14 0h4m3 0h1m5 0h2m7 0h2m1 0h1m6 0h1m2 0h1m1 0h1m4 0h2m5 0h1m2 0h1m1 0h1M1 8h1m5 0h1m4 0h1m1 0h1m7 0h1m1 0h1m1 0h1m7 0h1m8 0h1m3 0h1m7 0h1m1 0h1m2 0h1m2 0h2m1 0h1m2 0h1m8 0h1m6 0h1m7 0h1m7 0h1m1 0h1m2 0h1M3 9h2m5 0h1m2 0h1m4 0h1m12 0h1m1 0h1m12 0h1m6 0h1m1 0h1m4 0h2m8 0h1m4 0h2m23 0h1m6 0h1M2 10h1m5 0h1m3 0h1m5 0h1m2 0h1m7 0h1m4 0h1m8 0h1m5 0h1m3 0h1m4 0h1m12 0h1m17 0h1m2 0h1m4 0h1m1 0h1M4 11h2m1 0h1m2 0h1m4 0h1m5 0h1m2 0h1m3 0h1m7 0h1m5 0h1m1 0h1m1 0h1m14 0h2m1 0h2m3 0h1m2 0h2m1 0h1m11 0h1m2 0h1m1 0h1m7 0h1m6 0h2M3 12h2m2 0h1m8 0h1m1 0h1m8 0h1m1 0h2m4 0h1m6 0h1m1 0h2m1 0h2m6 0h1m2 0h1m5 0h1m1 0h1m3 0h3m3 0h1m12 0h1m5 0h1m1 0h1m8 0h1M1 13h1m2 0h1m4 0h1m7 0h1m1 0h1m2 0h2m6 0h2m7 0h1m2 0h1m3 0h1m8 0h1m6 0h1m4 0h1m6 0h2m5 0h1m13 0h1m4 0h1m2 0h1m1 0h1m1 0h1M3 14h1m31 0h1m2 0h2m3 0h1m13 0h2m13 0h1m1 0h1m6 0h2m10 0h1m2 0h1m6 0h1m4 0h1M11 15h2m14 0h1m4 0h1m13 0h1m3 0h1m1 0h2m3 0h1m5 0h2m3 0h1m3 0h1m10 0h1m3 0h1m1 0h3m3 0h1m3 0h1m4 0h1m1 0h1M3 16h1m3 0h1m13 0h1m9 0h1m7 0h1m1 0h3m1 0h1m2 0h2m4 0h1m9 0h1m5 0h1m1 0h1m14 0h1m16 0h2m1 0h1M0 17h1m7 0h2m2 0h1m2 0h1m1 0h1m2 0h1m1 0h1m12 0h2m2 0h1m4 0h1m3 0h1m6 0h1m12 0h3m7 0h2m4 0h1m1 0h1m1 0h1m9 0h1m3 0h1M0 18h1m10 0h1m2 0h4m13 0h1m3 0h1m2 0h1m6 0h1m1 0h1m1 0h1m12 0h1m8 0h1m4 0h1m2 0h2m1 0h1m4 0h1m5 0h1m3 0h1m2 0h1m5 0h1m1 0h1M4 19h1m4 0h1m6 0h1m4 0h1m1 0h1m3 0h1m4 0h2m6 0h1m19 0h1m4 0h2m12 0h2m4 0h1m3 0h1m12 0h1M1 20h1m5 0h1m4 0h1m4 0h1m1 0h2m2 0h1m3 0h1m4 0h1m6 0h1m1 0h1m1 0h2m7 0h1m3 0h1m3 0h1m5 0h1m2 0h1m4 0h1m5 0h1m3 0h1m4 0h1m4 0h1m2 0h1m1 0h1m2 0h1M5 21h1m6 0h1m9 0h2m2 0h1m2 0h1m8 0h1m1 0h2m1 0h1m8 0h1m2 0h1m16 0h1m4 0h1m2 0h1m3 0h1m6 0h1m6 0h1m1 0h1m1 0h1M8 22h1m1 0h2m2 0h2m3 0h1m2 0h3m2 0h1m24 0h2m2 0h4m2 0h1m3 0h1m4 0h1m8 0h2m2 0h1m3 0h1m4 0h2m8 0h1m2 0h1M7 23h1m1 0h1m7 0h1m6 0h2m4 0h1m4 0h1m4 0h1m4 0h1m2 0h2m3 0h1m5 0h1m3 0h1m2 0h1m1 0h1m2 0h1m1 0h1m1 0h1m2 0h1m21 0h1m4 0h1M4 24h1m2 0h2m1 0h1m2 0h1m5 0h2m10 0h1m2 0h1m9 0h1m9 0h1m3 0h2m3 0h1m4 0h1m7 0h2m4 0h2m7 0h1m3 0h1m1 0h2M1 25h1m2 0h1m5 0h2m3 0h1m12 0h1m1 0h1m1 0h1m7 0h1m1 0h1m1 0h1m4 0h2m21 0h3m9 0h1m2 0h1m2 0h1m3 0h1M11 26h1m5 0h1m1 0h2m5 0h1m2 0h1m10 0h1m2 0h1m5 0h1m7 0h1m16 0h1m9 0h1m2 0h1m5 0h1m2 0h1M10 27h2m5 0h1m1 0h2m6 0h1m6 0h3m4 0h1m8 0h1m16 0h1m4 0h1m2 0h1m4 0h1m2 0h1m1 0h1m1 0h1m5 0h1m2 0h2m5 0h1m2 0h1M8 28h1m14 0h1m3 0h1m10 0h1m6 0h1m1 0h1m18 0h1m5 0h1m2 0h1m1 0h1m3 0h1m4 0h1m4 0h2m4 0h1m4 0h1m3 0h1M2 29h1m2 0h1m1 0h1m2 0h1m6 0h1m12 0h1m20 0h1m10 0h1m1 0h1m8 0h1m3 0h1m11 0h2m7 0h1m4 0h3M6 30h1m3 0h1m1 0h3m19 0h2m6 0h2m5 0h1m3 0h2m1 0h2m6 0h2m12 0h1m4 0h1M2 31h1m4 0h1m5 0h1m4 0h2m2 0h2m4 0h1m5 0h2m3 0h1m18 0h1m4 0h1m3 0h1m1 0h2m1 0h1m10 0h1m1 0h1m4 0h1m2 0h3m3 0h1m1 0h1m3 0h1M2 32h1m3 0h2m5 0h1m1 0h1m2 0h1m2 0h1m5 0h1m1 0h1m2 0h2m5 0h2m2 0h1m7 0h1m6 0h1m5 0h2m18 0h2m1 0h1m16 0h1m1 0h1m1 0h1M8 33h1m6 0h1m5 0h1m1 0h1m3 0h1m2 0h1m9 0h1m7 0h1m1 0h1m2 0h1m2 0h1m3 0h1m4 0h3m4 0h1m1 0h1m3 0h1m3 0h1m3 0h2m6 0h1m1 0h1m1 0h1m9 0h1M4 34h1m3 0h1m9 0h1m4 0h1m2 0h2m2 0h1m1 0h1m1 0h1m2 0h1m4 0h1m1 0h1m6 0h1m2 0h1m1 0h1m9 0h1m9 0h1m4 0h1m2 0h1m7 0h1m7 0h1m2 0h1M3 35h1m4 0h1m2 0h1m10 0h1m3 0h1m2 0h1m8 0h1m1 0h1m4 0h2m3 0h1m6 0h1m7 0h2m3 0h1m2 0h1m1 0h1M0 36h1m11 0h1m2 0h1m3 0h1m13 0h2m2 0h2m4 0h1m10 0h1m2 0h2m2 0h1m7 0h1m2 0h2m4 0h1m4 0h1m7 0h1m4 0h1m1 0h1m4 0h1M3 37h1m7 0h1m6 0h1m2 0h1m2 0h1m2 0h2m8 0h1m4 0h1m3 0h1m8 0h1m1 0h1m4 0h2m2 0h1m6 0h1m2 0h1m3 0h2m6 0h1m5 0h1m1 0h1m2 0h1m8 0h1M1 38h1m4 0h1m1 0h1m8 0h2m9 0h1m11 0h2m1 0h1m2 0h1m5 0h1m1 0h2m7 0h3m3 0h1m18 0h1m9 0h1m7 0h1m1 0h1M6 39h1m1 0h1m1 0h1m25 0h1m1 0h1m29 0h1m1 0h1m1 0h1m9 0h1m2 0h2m1 0h2m14 0h1m2 0h1M0 40h1m6 0h1m6 0h1m4 0h1m1 0h1m3 0h1m2 0h3m13 0h1m8 0h1m13 0h2m1 0h1m2 0h1m2 0h1m15 0h2m4 0h1M0 41h1m4 0h1m3 0h1m6 0h1m6 0h1m3 0h1m9 0h1m4 0h2m10 0h1m12 0h1m1 0h2m2 0h1m2 0h1m1 0h1m2 0h1m2 0h1m1 0h2m10 0h1m3 0h2m1 0h1M5 42h1m3 0h1m1 0h1m3 0h1m2 0h1m5 0h1m3 0h1m2 0h1m8 0h1m3 0h1m13 0h1m2 0h1m2 0h1m2 0h2m2 0h1m3 0h1m9 0h1m1 0h1m13 0h2m1 0h1m1 0h1m1 0h1M6 43h1m5 0h1m1 0h1m2 0h3m4 0h2m1 0h1m5 0h1m2 0h1m6 0h1m3 0h1m3 0h1m2 0h1m5 0h1m1 0h1m11 0h1m9 0h1m2 0h1m6 0h1m4 0h2m2 0h1M9 44h1m1 0h1m2 0h1m9 0h1m1 0h1m2 0h2m4 0h2m1 0h2m5 0h1m2 0h3m1 0h1m22 0h1m1 0h1m11 0h2m10 0h1m1 0h1M3 45h1m1 0h2m2 0h3m2 0h1m3 0h1m5 0h1m2 0h2m19 0h1m7 0h1m7 0h1m2 0h1m6 0h1m1 0h1m3 0h1m16 0h2m4 0h1m3 0h1M3 46h1m4 0h1m2 0h2m1 0h1m1 0h1m4 0h1m7 0h1m9 0h2m2 0h1m3 0h1m2 0h1m5 0h1m1 0h1m8 0h2m9 0h1m2 0h1m5 0h1m5 0h1m7 0h1m1 0h1m1 0h1m2 0h1M1 47h1m7 0h1m2 0h1m6 0h2m5 0h1m8 0h2m3 0h2m4 0h1m6 0h1m7 0h1m2 0h2m1 0h1m2 0h1m5 0h1m3 0h1m2 0h3m4 0h1M1 48h1m2 0h1m2 0h1m5 0h2m25 0h1m10 0h1m1 0h1m5 0h1m8 0h1m3 0h1m3 0h2m1 0h1m8 0h1m5 0h1m2 0h1m6 0h1m2 0h1M1 49h1m11 0h1m2 0h1m1 0h2m11 0h1m4 0h1m1 0h1m1 0h2m4 0h1m16 0h1m1 0h1m5 0h1m7 0h1m8 0h1m6 0h1m5 0h1m1 0h1m1 0h1M4 50h1m4 0h1m1 0h1m1 0h1m6 0h1m3 0h1m1 0h1m7 0h2m6 0h1m3 0h1m6 0h1m1 0h2m10 0h1m9 0h4m3 0h1m7 0h1m2 0h1m8 0h1M8 51h1m6 0h2m3 0h1m6 0h1m6 0h1m4 0h2m3 0h1m5 0h1m26 0h1m4 0h1m5 0h2M5 52h2m12 0h2m6 0h2m9 0h2m3 0h1m1 0h1m3 0h1m6 0h2m3 0h2m1 0h1m7 0h1m4 0h1m13 0h1m10 0h1m1 0h1M1 53h1m6 0h1m4 0h1m3 0h1m12 0h1m8 0h1m11 0h1m3 0h1m11 0h1m7 0h1m2 0h1m4 0h1m3 0h1m10 0h1m5 0h1M6 54h1m4 0h2m2 0h1m3 0h1m3 0h2m6 0h1m2 0h1m2 0h1m13 0h3m1 0h1m11 0h2m9 0h1m7 0h1m1 0h1m7 0h1M0 55h1m1 0h1m1 0h1m2 0h2m1 0h2m6 0h1m7 0h1m5 0h1m1 0h1m24 0h2m3 0h2m5 0h1m5 0h2m19 0h1m3 0h1m3 0h1M2 56h1m12 0h1m2 0h1m5 0h1m6 0h1m2 0h1m3 0h1m3 0h1m5 0h1m9 0h2m3 0h1m7 0h1m5 0h1m16 0h1m1 0h1M8 57h3m6 0h1m3 0h1m1 0h1m9 0h1m6 0h1m7 0h1m21 0h2m2 0h2m2 0h1m1 0h1m1 0h1m3 0h1m8 0h1M4 58h1m7 0h2m1 0h2m2 0h1m6 0h1m3 0h1m2 0h1m7 0h5m2 0h1m1 0h1m1 0h1m2 0h1m1 0h1m4 0h1m1 0h1m6 0h1m9 0h1m2 0h2m1 0h2m1 0h1m5 0h1M0 59h1m3 0h1m16 0h1m3 0h1m1 0h1m6 0h1m1 0h2m1 0h1m8 0h2m5 0h1m4 0h2m4 0h1m1 0h1m2 0h1m7 0h1m1 0h1m2 0h1m10 0h1m3 0h1m4 0h1M18 60h1m1 0h2m3 0h2m12 0h2m3 0h2m1 0h1m1 0h1m21 0h1m2 0h3m2 0h1m2 0h1m3 0h2m10 0h2m3 0h1M5 61h1m20 0h1m5 0h1m10 0h1m13 0h1m3 0h1m4 0h1m4 0h2m3 0h1m7 0h2m1 0h1m1 0h2m6 0h1m3 0h1M6 62h1m2 0h1m17 0h1m1 0h1m5 0h1m2 0h2m8 0h1m9 0h1m3 0h1m3 0h1m1 0h1m6 0h1m5 0h1m2 0h1m5 0h1m2 0h1m6 0h1m1 0h2m3 0h1M5 63h1m1 0h1m4 0h1m2 0h1m1 0h1m2 0h1m5 0h1m17 0h1m4 0h2m3 0h1m13 0h1m3 0h1m5 0h1m4 0h1m2 0h1m3 0h2m6 0h1m1 0h1M5 64h1m1 0h2m9 0h1m3 0h1m2 0h2m5 0h1m4 0h1m5 0h1m4 0h1m1 0h1m9 0h2m2 0h1m5 0h1m14 0h1m4 0h1m1 0h2m1 0h2m7 0h1m2 0h2M14 65h1m2 0h1m1 0h1m8 0h1m2 0h2m7 0h1m1 0h1m4 0h2m6 0h1m6 0h1m14 0h1m1 0h1m9 0h1m1 0h1m9 0h3M4 66h1m1 0h1m1 0h2m4 0h1m9 0h1m7 0h3m1 0h1m4 0h1m1 0h1m3 0h1m3 0h1m2 0h2m5 0h1m2 0h1m4 0h1m3 0h1m2 0h1m9 0h1m1 0h1m2 0h4m1 0h1m1 0h1m1 0h2m6 0h1M11 67h2m7 0h1m1 0h3m5 0h1m11 0h2m2 0h1m6 0h1m1 0h1m6 0h1m1 0h1m2 0h1m1 0h1m3 0h1m6 0h4m3 0h1m2 0h1m2 0h1m9 0h1M4 68h1m1 0h1m9 0h1m9 0h2m5 0h1m14 0h1m6 0h1m8 0h1m5 0h1m5 0h2m1 0h1m8 0h1m1 0h1m3 0h1m4 0h1m3 0h2m3 0h1M5 69h1m7 0h1m1 0h2m16 0h1m3 0h1m2 0h1m1 0h2m2 0h1m4 0h1m4 0h1m3 0h1m2 0h1m11 0h1m8 0h1m4 0h1m15 0h1M1 70h3m6 0h1m2 0h1m4 0h1m1 0h1m3 0h2m8 0h1m5 0h1m5 0h2m2 0h1m2 0h1m1 0h1m4 0h1m21 0h1m8 0h1m1 0h2m8 0h1M5 71h1m17 0h1m2 0h1m9 0h1m8 0h1m3 0h1m12 0h1m8 0h2m2 0h1m10 0h3m4 0h1m2 0h1m10 0h1M0 72h2m1 0h1m1 0h1m8 0h1m3 0h1m6 0h1m2 0h1m10 0h1m16 0h1m6 0h1m1 0h2m2 0h1m2 0h1m1 0h1m2 0h1m4 0h1m5 0h1m1 0h1m2 0h1m1 0h1m3 0h2M0 73h1m5 0h1m16 0h1m12 0h1m3 0h2m6 0h1m23 0h2m4 0h1m3 0h1m2 0h1m4 0h1m3 0h1m2 0h2m4 0h1M0 74h1m2 0h3m1 0h1m3 0h1m3 0h1m4 0h1m5 0h1m1 0h1m9 0h2m9 0h1m6 0h1m1 0h1m2 0h1m1 0h2m3 0h1m1 0h1m10 0h1m5 0h1m1 0h1m3 0h1m11 0h2m1 0h1M0 75h2m9 0h1m2 0h1m2 0h2m3 0h1m3 0h1m1 0h2m8 0h1m1 0h1m3 0h1m5 0h1m3 0h1m5 0h1m1 0h1m1 0h3m3 0h2m2 0h2m10 0h1m3 0h2m1 0h1m3 0h1m8 0h2M13 76h1m2 0h1m4 0h1m3 0h1m6 0h2m10 0h2m9 0h1m2 0h2m13 0h1m1 0h1m4 0h1m3 0h1m2 0h2m5 0h1m5 0h2m1 0h1M4 77h2m2 0h1m3 0h1m17 0h2m5 0h2m6 0h2m8 0h2m6 0h1m4 0h1m1 0h1m10 0h1m19 0h1M5 78h1m5 0h1m3 0h1m2 0h1m2 0h2m1 0h1m4 0h1m1 0h1m8 0h3m10 0h1m4 0h1m1 0h1m1 0h1m3 0h1m5 0h2m4 0h2m10 0h1m4 0h1m6 0h2m1 0h1M5 79h1m1 0h1m5 0h1m1 0h1m2 0h1m2 0h1m5 0h1m5 0h1m6 0h1m1 0h1m1 0h1m24 0h1m1 0h1m2 0h1m1 0h1m3 0h1M4 80h1m6 0h1m2 0h1m2 0h1m2 0h1m5 0h2m9 0h1m7 0h1m6 0h2m10 0h1m2 0h1m3 0h1m3 0h2m4 0h2m4 0h1m7 0h1m4 0h1m3 0h1M0 81h3m4 0h5m4 0h1m3 0h1m3 0h1m7 0h1m6 0h2m1 0h1m10 0h2m14 0h1m2 0h1m2 0h1m1 0h1m3 0h1m1 0h1m2 0h2m5 0h1m1 0h1m1 0h3m3 0h1m2 0h1M12 82h1m4 0h1m11 0h1m2 0h1m12 0h2m3 0h1m6 0h2m3 0h2m6 0h2m4 0h1m3 0h1m13 0h1m6 0h1m2 0h2M4 83h1m5 0h1m13 0h1m8 0h1m1 0h1m2 0h1m3 0h1m4 0h3m8 0h1m2 0h2m3 0h1m7 0h1m13 0h1m1 0h2M8 84h1m3 0h1m6 0h1m1 0h1m4 0h2m2 0h1m2 0h1m2 0h1m1 0h1m1 0h1m2 0h1m5 0h2m4 0h1m1 0h1m19 0h1m1 0h1m4 0h1m3 0h1m3 0h1m8 0h1m5 0h1M7 85h2m2 0h2m2 0h1m1 0h1m1 0h1m3 0h2m19 0h1m2 0h1m9 0h1m5 0h2m1 0h1m1 0h1m1 0h1m4 0h1m6 0h1m1 0h1m5 0h1m8 0h1m1 0h1m1 0h1m1 0h1m1 0h2M3 86h1m11 0h2m1 0h1m7 0h2m1 0h1m2 0h2m2 0h1m9 0h1m1 0h1m3 0h1m2 0h1m3 0h3m1 0h1m1 0h2m10 0h1m9 0h1m9 0h1m6 0h1m3 0h1M2 87h2m5 0h1m13 0h2m4 0h1m2 0h2m3 0h1m1 0h1m8 0h1m3 0h1m2 0h1m3 0h1m6 0h2m19 0h1m4 0h1m2 0h1m10 0h1M4 88h2m4 0h1m2 0h1m2 0h2m5 0h1m1 0h1m28 0h1m3 0h3m4 0h1m1 0h1m1 0h2m6 0h1m2 0h3m5 0h1m7 0h1m2 0h2m2 0h1m2 0h1M1 89h3m4 0h1m13 0h1m2 0h1m2 0h1m5 0h1m1 0h1m6 0h3m1 0h1m10 0h1m12 0h2m5 0h1m4 0h1m7 0h1m2 0h1m1 0h1M1 90h1m1 0h3m4 0h1m5 0h3m3 0h1m1 0h1m6 0h1m3 0h1m1 0h1m9 0h1m8 0h1m8 0h2m2 0h3m1 0h2m6 0h2m6 0h1m3 0h1m3 0h2m2 0h1m1 0h1m3 0h2M1 91h1m4 0h1m8 0h1m12 0h1m4 0h1m2 0h1m1 0h2m5 0h1m14 0h1m1 0h1m10 0h1m1 0h1m1 0h1m2 0h1m3 0h1m5 0h1m3 0h1m2 0h1m3 0h1M6 92h2m1 0h2m5 0h1m5 0h1m1 0h2m8 0h2m27 0h1m1 0h1m4 0h1m1 0h1m19 0h2m8 0h2m1 0h1m1 0h1M5 93h1m1 0h1m4 0h3m3 0h1m2 0h1m4 0h1m3 0h1m6 0h1m2 0h1m4 0h2m4 0h1m7 0h1m1 0h1m1 0h1m5 0h1m3 0h1m3 0h1m7 0h1m3 0h1m2 0h1m4 0h1m9 0h2M0 94h4m1 0h2m10 0h1m5 0h1m8 0h2m2 0h1m7 0h1m7 0h1m3 0h1m3 0h1m3 0h2m3 0h1m3 0h1m5 0h1m2 0h1m4 0h1m1 0h1m2 0h1m12 0h1M4 95h1m5 0h1m1 0h2m5 0h2m10 0h1m4 0h1m6 0h1m1 0h1m10 0h2m13 0h1m2 0h1m9 0h1m13 0h2m1 0h1m6 0h1M5 96h1m3 0h1m5 0h1m6 0h1m6 0h2m1 0h1m5 0h1m4 0h1m2 0h1m1 0h1m2 0h2m4 0h1m3 0h1m14 0h1m9 0h1m4 0h1m1 0h1m4 0h1m1 0h1m3 0h1M0 97h1m5 0h2m2 0h1m5 0h2m1 0h1m6 0h1m7 0h1m1 0h1m5 0h1m10 0h1m9 0h2m2 0h1m7 0h1m1 0h1m14 0h1m2 0h1m6 0h1M3 98h1m12 0h1m6 0h1m6 0h1m1 0h1m2 0h1m5 0h1m7 0h1m16 0h1m1 0h1m1 0h1m3 0h1m1 0h1m5 0h4m1 0h2m6 0h1m1 0h1m1 0h1m3 0h1m1 0h1M4 99h1m2 0h1m2 0h1m5 0h1m4 0h1m3 0h2m1 0h1m1 0h1m1 0h1m5 0h1m12 0h1m11 0h1m3 0h1m8 0h1m11 0h1m4 0h1m5 0h1m1 0h1m3 0h1M0 100h1m4 0h1m2 0h1m15 0h1m2 0h2m5 0h1m2 0h1m7 0h1m7 0h2m2 0h2m3 0h2m1 0h1m2 0h1m2 0h1m2 0h1m1 0h1m2 0h3m12 0h1m2 0h3m2 0h1m3 0h1M1 101h1m4 0h1m13 0h1m2 0h1m9 0h1m4 0h1m1 0h1m2 0h1m14 0h1m4 0h1m7 0h1m2 0h1m6 0h2m3 0h1m8 0h2m2 0h2M0 102h1m3 0h1m1 0h1m7 0h4m6 0h1m5 0h1m4 0h2m6 0h2m1 0h1m1 0h1m2 0h2m3 0h1m6 0h1m4 0h1m10 0h1m1 0h2m3 0h1m3 0h1m2 0h1m6 0h3m3 0h1m1 0h1" stroke="#ff0d00" stroke-width="1" fill="none" shape-rendering="crispEdges"/></pattern>
<pattern id="m219" x="106" y="317" width="137" height="83" patternUnits="userSpaceOnUse"><path transform="translate(0 .5)" d="M0 0h1m11 0h1m20 0h1m6 0h1m4 0h1m1 0h1m12 0h1m10 0h1m3 0h1m1 0h1m13 0h1m5 0h1m1 0h1m5 0h1m30 0h1M7 1h1m5 0h1m1 0h1m2 0h1m2 0h1m4 0h1m1 0h2m4 0h1m2 0h1m3 0h1m3 0h1m4 0h1m1 0h1m10 0h1m2 0h1m8 0h2m9 0h1m5 0h1m1 0h1m14 0h1m7 0h1m3 0h1m3 0h1m6 0h1M10 2h1m1 0h1m3 0h4m4 0h1m7 0h1m5 0h1m4 0h1m9 0h1m3 0h2m1 0h2m7 0h4m7 0h1m2 0h1m6 0h1m6 0h1m2 0h1m2 0h1m4 0h1m2 0h2m4 0h1m4 0h1m1 0h1m1 0h1m2 0h1M3 3h1m2 0h1m8 0h1m8 0h2m4 0h1m1 0h1m4 0h1m3 0h2m8 0h2m3 0h1m2 0h1m2 0h2m11 0h1m10 0h1m6 0h1m26 0h4m3 0h1m2 0h1m1 0h1M9 4h1m9 0h1m12 0h1m13 0h1m1 0h1m5 0h1m9 0h1m16 0h1m1 0h1m2 0h2m1 0h2m3 0h1m2 0h1m17 0h1m3 0h2m6 0h1m7 0h1M7 5h1m26 0h1m5 0h1m1 0h1m4 0h1m3 0h1m15 0h1m1 0h1m1 0h2m8 0h1m5 0h2m24 0h1m11 0h2m1 0h1m5 0h1m1 0h1M0 6h1m4 0h2m2 0h2m9 0h1m1 0h1m13 0h1m2 0h1m29 0h1m1 0h1m5 0h1m2 0h1m11 0h1m1 0h1m12 0h1m8 0h1m2 0h1m9 0h1M4 7h1m1 0h1m8 0h3m1 0h1m6 0h1m1 0h1m2 0h1m4 0h1m1 0h1m16 0h1m6 0h2m5 0h1m1 0h1m9 0h1m19 0h1m1 0h1m9 0h1m4 0h1m1 0h1m7 0h1M1 8h1m2 0h2m4 0h1m3 0h1m10 0h1m2 0h1m1 0h1m5 0h1m6 0h1m2 0h1m19 0h1m1 0h1m8 0h1m17 0h1m12 0h1m1 0h1m14 0h1m2 0h1m6 0h1M0 9h1m7 0h1m1 0h1m2 0h1m3 0h1m1 0h1m26 0h1m4 0h2m8 0h1m6 0h2m1 0h1m5 0h2m2 0h1m2 0h1m4 0h1m1 0h1m15 0h1m1 0h1m1 0h1m9 0h1M1 10h1m4 0h1m14 0h1m4 0h1m5 0h1m3 0h1m2 0h1m5 0h1m10 0h1m5 0h2m3 0h1m1 0h1m7 0h1m3 0h1m11 0h1m4 0h1m5 0h2m4 0h1m9 0h1m11 0h1m1 0h1M7 11h1m1 0h1m16 0h1m1 0h1m9 0h1m2 0h2m7 0h1m7 0h1m11 0h1m2 0h1m2 0h1m4 0h1m9 0h1m8 0h1m4 0h1m1 0h2m11 0h1m4 0h1m7 0h2M7 12h1m12 0h1m5 0h1m3 0h1m1 0h1m2 0h2m2 0h1m2 0h1m1 0h1m5 0h1m3 0h1m6 0h1m3 0h1m1 0h1m5 0h3m3 0h1m4 0h1m11 0h1m6 0h1m4 0h1m1 0h1m3 0h2m3 0h1m2 0h1m1 0h1m4 0h1m4 0h1M3 13h1m19 0h1m4 0h2m1 0h1m6 0h1m3 0h2m4 0h1m3 0h2m6 0h1m7 0h1m3 0h1m5 0h1m12 0h2m7 0h1m1 0h1m4 0h1m15 0h1m3 0h1M2 14h1m7 0h1m1 0h1m1 0h1m8 0h1m13 0h2m5 0h1m11 0h1m2 0h2m2 0h1m3 0h1m5 0h1m9 0h1m3 0h1m5 0h1m4 0h1m12 0h1m1 0h2m14 0h1m2 0h1m1 0h1M0 15h1m1 0h1m1 0h2m20 0h2m1 0h1m4 0h1m2 0h1m1 0h1m9 0h1m3 0h1m3 0h1m19 0h1m1 0h1m4 0h1m1 0h2m10 0h1m5 0h1m1 0h1m14 0h2m11 0h1M0 16h1m8 0h1m1 0h1m9 0h1m2 0h2m2 0h1m3 0h2m17 0h1m18 0h1m1 0h1m2 0h1m1 0h1m6 0h1m1 0h1m7 0h1m3 0h2m3 0h1m11 0h2m4 0h1m5 0h2M14 17h1m8 0h1m12 0h1m3 0h1m5 0h2m9 0h1m2 0h3m10 0h1m11 0h1m14 0h1m6 0h1m5 0h1m7 0h1m6 0h1m6 0h1M4 18h2m1 0h1m3 0h1m1 0h1m7 0h1m10 0h1m6 0h1m2 0h2m4 0h1m9 0h1m1 0h1m11 0h2m2 0h1m4 0h1m5 0h1m1 0h1m3 0h1m1 0h1m4 0h1m5 0h1m18 0h1M8 19h1m1 0h2m2 0h1m1 0h1m7 0h1m8 0h1m6 0h1m5 0h2m3 0h1m8 0h1m8 0h1m8 0h2m2 0h1m8 0h1m1 0h1m8 0h1m1 0h2m2 0h1m8 0h1m2 0h2m6 0h1m7 0h1M3 20h1m5 0h1m5 0h1m13 0h1m6 0h1m3 0h1m7 0h1m23 0h1m1 0h1m9 0h1m1 0h1m3 0h1m9 0h1m3 0h1m1 0h1m3 0h2m2 0h1m3 0h1M7 21h1m11 0h1m3 0h1m1 0h1m3 0h1m2 0h1m5 0h1m14 0h1m10 0h1m6 0h1m9 0h2m1 0h3m1 0h1m1 0h2m1 0h1m4 0h1m4 0h1m3 0h1m12 0h1m6 0h1M0 22h1m3 0h1m13 0h1m3 0h1m8 0h1m2 0h1m11 0h1m2 0h1m6 0h1m3 0h1m10 0h1m4 0h1m2 0h1m31 0h2m7 0h1m10 0h2m3 0h1M9 23h2m9 0h2m4 0h1m7 0h1m4 0h1m16 0h1m6 0h1m4 0h1m14 0h1m3 0h1m3 0h2m2 0h1m12 0h1m2 0h2m7 0h1m12 0h1m2 0h1M3 24h1m4 0h1m1 0h1m3 0h1m5 0h1m5 0h1m1 0h1m11 0h1m2 0h1m1 0h1m5 0h1m5 0h1m1 0h1m6 0h1m2 0h1m2 0h1m5 0h3m5 0h1m14 0h1m6 0h1m9 0h2m4 0h3m7 0h1M8 25h1m1 0h1m6 0h1m2 0h1m25 0h1m9 0h2m5 0h1m2 0h1m4 0h1m17 0h1m2 0h1m8 0h1m6 0h1m4 0h1m2 0h1m11 0h1m3 0h2m1 0h1M0 26h1m1 0h1m2 0h1m3 0h1m6 0h2m1 0h2m6 0h1m9 0h1m2 0h1m16 0h1m3 0h1m1 0h1m3 0h2m7 0h1m2 0h1m5 0h1m3 0h2m21 0h3m13 0h1m1 0h2M1 27h1m9 0h1m3 0h1m20 0h1m2 0h2m2 0h1m1 0h1m1 0h1m6 0h1m3 0h1m16 0h1m11 0h1m8 0h1m23 0h1m3 0h1m6 0h1M3 28h1m15 0h1m4 0h1m1 0h1m1 0h1m3 0h1m1 0h1m4 0h1m2 0h1m2 0h3m4 0h2m22 0h1m6 0h2m2 0h1m3 0h3m5 0h1m1 0h2m7 0h1m12 0h1m1 0h2m8 0h1M1 29h1m2 0h1m3 0h1m3 0h2m3 0h1m2 0h1m3 0h1m1 0h1m1 0h1m1 0h2m2 0h1m7 0h1m2 0h1m3 0h1m11 0h2m5 0h1m4 0h2m1 0h1m23 0h2m8 0h1m4 0h1m3 0h2m5 0h1m1 0h1M9 30h1m1 0h1m1 0h1m2 0h3m3 0h1m2 0h1m5 0h1m1 0h2m17 0h1m3 0h1m2 0h1m4 0h1m11 0h1m2 0h1m3 0h2m10 0h1m16 0h1m5 0h1M4 31h1m11 0h2m2 0h1m3 0h1m1 0h1m2 0h1m14 0h1m1 0h1m1 0h1m3 0h3m2 0h1m18 0h1m17 0h1m2 0h1m2 0h1m8 0h1m2 0h2m3 0h1m1 0h1m7 0h1M19 32h2m2 0h1m3 0h1m6 0h1m2 0h3m1 0h1m7 0h1m4 0h1m7 0h1m7 0h1m4 0h1m16 0h1m4 0h1m4 0h1m7 0h1m7 0h1m7 0h1M1 33h1m7 0h1m1 0h2m7 0h1m13 0h1m6 0h1m3 0h1m14 0h1m6 0h2m3 0h1m1 0h1m5 0h3m9 0h1m4 0h1m19 0h1m3 0h1m1 0h1M3 34h1m9 0h1m14 0h1m5 0h1m5 0h1m9 0h1m3 0h1m2 0h1m1 0h1m1 0h1m1 0h1m6 0h2m5 0h1m8 0h2m9 0h1m11 0h1m10 0h1m10 0h1m1 0h2M4 35h1m2 0h2m1 0h1m1 0h1m6 0h1m6 0h1m1 0h1m9 0h1m1 0h1m6 0h3m4 0h1m2 0h1m5 0h1m7 0h1m3 0h1m3 0h2m6 0h2m1 0h1m6 0h1m3 0h1m5 0h1m5 0h1m13 0h1m4 0h1m3 0h1M7 36h1m1 0h2m2 0h1m15 0h1m1 0h1m25 0h1m8 0h1m3 0h1m1 0h1m1 0h1m1 0h2m6 0h3m4 0h2m3 0h1m1 0h1m1 0h1m2 0h1m2 0h1m5 0h1m1 0h1m5 0h1m12 0h1M1 37h2m18 0h1m10 0h2m12 0h1m6 0h1m3 0h1m11 0h1m1 0h1m15 0h3m8 0h1m2 0h1m2 0h1m1 0h1m8 0h1m2 0h1m2 0h1m2 0h1m7 0h1M21 38h1m1 0h1m6 0h1m8 0h2m8 0h2m1 0h2m8 0h1m3 0h1m19 0h1m7 0h1m11 0h1m17 0h1m2 0h1M2 39h1m1 0h1m7 0h1m7 0h1m2 0h1m1 0h3m9 0h3m6 0h1m11 0h1m5 0h1m6 0h1m4 0h1m9 0h1m2 0h1m5 0h2m1 0h2m1 0h1m7 0h2m8 0h1m7 0h1m3 0h1m4 0h1M0 40h1m6 0h1m16 0h1m2 0h2m1 0h1m4 0h1m1 0h2m3 0h2m8 0h2m4 0h1m3 0h1m1 0h1m8 0h1m12 0h1m27 0h1m4 0h1m4 0h1m5 0h2M1 41h1m4 0h2m10 0h1m2 0h2m9 0h1m3 0h1m13 0h1m2 0h1m5 0h1m2 0h1m3 0h1m12 0h1m5 0h1m2 0h1m1 0h1m5 0h1m1 0h2m6 0h1m16 0h1m5 0h1m6 0h1M0 42h1m10 0h2m1 0h1m3 0h2m4 0h1m2 0h1m4 0h1m9 0h1m18 0h2m1 0h1m2 0h1m6 0h1m9 0h1m2 0h1m10 0h2m7 0h1m2 0h1m1 0h1m2 0h1m4 0h1m5 0h1m6 0h2M11 43h1m5 0h1m19 0h1m4 0h1m2 0h1m16 0h1m3 0h1m5 0h2m2 0h1m4 0h1m7 0h1m1 0h1m7 0h1m6 0h1m11 0h1m13 0h1M7 44h1m10 0h1m2 0h1m5 0h1m13 0h1m4 0h1m12 0h1m5 0h2m2 0h2m5 0h1m3 0h1m1 0h1m3 0h1m7 0h1m2 0h1m5 0h1m10 0h2m3 0h1m1 0h1M2 45h1m12 0h2m4 0h1m8 0h3m2 0h1m4 0h2m7 0h1m10 0h1m16 0h2m7 0h1m3 0h1m4 0h1m17 0h1m1 0h2m1 0h1m14 0h2M3 46h1m2 0h1m2 0h1m2 0h1m10 0h1m1 0h2m6 0h1m3 0h1m3 0h1m1 0h1m7 0h1m22 0h1m12 0h1m1 0h1m5 0h1m2 0h1m6 0h1m1 0h2m2 0h1m23 0h1M3 47h1m5 0h1m5 0h3m10 0h1m2 0h1m4 0h1m1 0h1m6 0h1m3 0h1m1 0h1m6 0h1m9 0h2m25 0h1m3 0h1m7 0h1m3 0h1m12 0h1m1 0h1M2 48h1m5 0h2m5 0h1m2 0h1m6 0h1m2 0h2m13 0h1m3 0h1m14 0h1m7 0h1m2 0h1m2 0h2m2 0h1m5 0h1m12 0h1m5 0h1m2 0h1m6 0h1m4 0h1m2 0h1m2 0h1m2 0h2m5 0h1M3 49h1m1 0h2m1 0h1m6 0h1m1 0h1m2 0h1m1 0h2m2 0h1m4 0h1m1 0h3m8 0h1m1 0h1m2 0h1m6 0h1m15 0h2m4 0h1m8 0h2m1 0h1m6 0h1m18 0h1m9 0h2m1 0h1M3 50h1m2 0h1m1 0h1m10 0h1m19 0h1m1 0h1m8 0h1m9 0h1m2 0h1m2 0h1m8 0h1m3 0h1m11 0h1m4 0h2m3 0h1m1 0h2m5 0h1m9 0h1m12 0h1m1 0h1M4 51h1m3 0h2m5 0h1m13 0h1m4 0h1m7 0h1m15 0h1m3 0h2m7 0h1m3 0h2m3 0h1m6 0h2m4 0h1m4 0h1m7 0h2m2 0h1m11 0h2m8 0h1m3 0h1M14 52h1m7 0h1m9 0h1m5 0h1m8 0h1m8 0h1m3 0h1m1 0h1m10 0h1m4 0h1m2 0h1m1 0h1m6 0h1m2 0h1m17 0h1m1 0h1m5 0h1M4 53h2m4 0h1m2 0h1m2 0h1m1 0h1m6 0h2m2 0h1m2 0h1m1 0h1m4 0h2m1 0h1m7 0h1m10 0h1m4 0h2m5 0h1m5 0h1m1 0h2m1 0h1m4 0h1m1 0h1m1 0h1m15 0h1m5 0h1m2 0h1m2 0h1m1 0h1m10 0h1M4 54h1m2 0h2m7 0h1m5 0h1m5 0h1m8 0h2m12 0h1m2 0h1m2 0h1m1 0h1m3 0h1m6 0h1m22 0h1m16 0h1m6 0h1m5 0h1m6 0h1M4 55h1m15 0h1m9 0h1m3 0h1m1 0h1m4 0h1m1 0h1m3 0h1m2 0h1m7 0h1m1 0h1m2 0h2m7 0h1m4 0h1m3 0h1m2 0h1m1 0h1m7 0h1m6 0h1m2 0h1m2 0h1m4 0h1m3 0h1m1 0h1m7 0h1m2 0h1m3 0h1m2 0h1M0 56h2m13 0h1m8 0h3m2 0h1m2 0h2m3 0h3m9 0h1m6 0h2m14 0h1m4 0h1m5 0h1m7 0h1m2 0h1m3 0h1m1 0h1m5 0h1m4 0h2m5 0h1m10 0h1M2 57h2m5 0h1m2 0h3m2 0h1m3 0h1m13 0h1m2 0h1m7 0h1m13 0h1m3 0h1m14 0h2m21 0h1m2 0h1m18 0h1m2 0h1m4 0h1M0 58h2m1 0h1m3 0h1m5 0h1m10 0h2m6 0h1m2 0h2m12 0h1m4 0h1m9 0h1m14 0h3m4 0h1m2 0h1m3 0h1m9 0h1m7 0h1m18 0h1m1 0h1M0 59h1m5 0h1m1 0h1m8 0h1m8 0h1m14 0h1m4 0h1m6 0h1m2 0h1m6 0h1m5 0h1m3 0h1m10 0h1m6 0h1m5 0h1m11 0h1m2 0h1m4 0h1m2 0h1m12 0h1M1 60h1m5 0h1m6 0h1m9 0h2m1 0h2m6 0h1m1 0h1m6 0h1m1 0h1m2 0h1m4 0h1m5 0h1m7 0h1m3 0h2m4 0h1m2 0h1m1 0h2m9 0h1m1 0h3m20 0h1m2 0h1m10 0h1M1 61h1m14 0h1m2 0h1m1 0h1m11 0h1m3 0h1m5 0h1m6 0h1m3 0h1m9 0h1m5 0h1m6 0h1m4 0h1m2 0h1m11 0h1m1 0h1m1 0h2m5 0h2m11 0h1m4 0h1m4 0h2M7 62h1m2 0h1m1 0h1m4 0h2m2 0h1m4 0h1m6 0h1m2 0h1m4 0h1m2 0h1m5 0h1m16 0h1m2 0h1m12 0h1m12 0h1m11 0h1m11 0h2m1 0h2m1 0h1m3 0h1M13 63h1m6 0h1m6 0h1m3 0h2m3 0h1m6 0h3m9 0h1m1 0h1m1 0h1m2 0h1m5 0h2m5 0h1m5 0h1m6 0h1m1 0h1m9 0h1m4 0h1m8 0h1m3 0h2m3 0h2m5 0h2M10 64h1m4 0h1m3 0h1m3 0h1m2 0h1m7 0h1m2 0h1m2 0h1m8 0h1m1 0h1m20 0h1m2 0h2m9 0h1m9 0h1m12 0h1m1 0h2m7 0h1m1 0h1m3 0h1m3 0h1m4 0h1M2 65h1m1 0h1m2 0h2m1 0h1m6 0h1m4 0h2m3 0h1m6 0h2m1 0h1m1 0h1m1 0h1m2 0h1m5 0h1m3 0h1m2 0h1m2 0h1m3 0h1m1 0h1m1 0h1m5 0h1m2 0h1m10 0h1m3 0h2m4 0h1m1 0h1m1 0h1m1 0h1m1 0h2m1 0h1m18 0h2m2 0h2m2 0h1M1 66h1m7 0h1m6 0h1m7 0h2m13 0h1m11 0h1m1 0h1m1 0h1m1 0h1m2 0h1m5 0h1m5 0h1m3 0h1m4 0h2m4 0h2m5 0h1m4 0h2m3 0h1m2 0h1m7 0h1m5 0h1m3 0h1m5 0h2M0 67h1m25 0h2m19 0h1m3 0h1m1 0h1m8 0h1m6 0h1m2 0h1m5 0h1m8 0h1m3 0h1m9 0h1m3 0h2m11 0h1m1 0h1m1 0h1m2 0h1m5 0h1M0 68h1m6 0h1m4 0h2m12 0h1m13 0h1m3 0h1m11 0h1m3 0h1m1 0h1m6 0h1m8 0h1m15 0h1m2 0h1m18 0h2m13 0h1M1 69h1m1 0h1m8 0h1m1 0h2m3 0h2m5 0h2m21 0h1m2 0h1m4 0h3m2 0h1m1 0h1m17 0h1m6 0h2m4 0h1m5 0h1m7 0h1m1 0h1m5 0h1m5 0h1M4 70h1m2 0h1m15 0h2m2 0h1m7 0h1m3 0h2m8 0h1m3 0h1m1 0h1m6 0h1m2 0h2m11 0h2m18 0h1m7 0h1m4 0h1m1 0h1m1 0h1m2 0h1m3 0h1M6 71h2m2 0h1m11 0h1m2 0h1m8 0h1m1 0h2m6 0h1m6 0h1m4 0h1m14 0h1m1 0h1m1 0h1m4 0h1m1 0h2m1 0h1m13 0h1m4 0h1m2 0h1m5 0h1m9 0h1m1 0h1m6 0h1m3 0h1M1 72h1m3 0h1m5 0h1m10 0h1m6 0h1m2 0h1m2 0h1m4 0h1m2 0h1m2 0h1m20 0h2m2 0h1m6 0h1m3 0h1m14 0h1m4 0h1m10 0h1m2 0h1m13 0h1M0 73h1m4 0h1m10 0h1m1 0h2m2 0h1m2 0h1m3 0h2m2 0h1m1 0h1m2 0h1m2 0h2m2 0h1m4 0h2m11 0h2m1 0h2m1 0h1m12 0h1m11 0h1m5 0h1m4 0h1m12 0h1m2 0h1m9 0h1m1 0h1M1 74h1m1 0h2m7 0h1m4 0h1m2 0h1m3 0h1m1 0h1m2 0h1m3 0h2m8 0h1m9 0h1m3 0h1m2 0h1m2 0h1m9 0h1m3 0h1m8 0h1m1 0h1m11 0h1m2 0h1m5 0h1m3 0h1m3 0h1m4 0h1m12 0h1M12 75h1m3 0h1m5 0h1m2 0h1m4 0h1m1 0h2m4 0h1m2 0h2m2 0h1m15 0h1m2 0h1m6 0h1m6 0h1m1 0h1m2 0h1m4 0h2m3 0h1m11 0h1m10 0h1m1 0h1m1 0h1M6 76h1m5 0h1m3 0h1m3 0h1m2 0h1m8 0h1m9 0h2m18 0h1m10 0h1m8 0h1m2 0h1m3 0h1m10 0h1m3 0h1m6 0h1m16 0h1M3 77h1m2 0h3m2 0h1m1 0h1m5 0h1m7 0h1m7 0h1m13 0h1m2 0h1m5 0h1m3 0h1m2 0h1m4 0h1m1 0h1m2 0h1m12 0h2m6 0h1m6 0h1m3 0h1m2 0h1m7 0h1m1 0h1M0 78h1m2 0h1m2 0h1m8 0h1m13 0h2m13 0h1m1 0h1m7 0h1m3 0h1m3 0h1m5 0h1m3 0h1m4 0h1m5 0h1m5 0h1m1 0h1m1 0h1m4 0h1m5 0h1m4 0h1m2 0h1m14 0h1m1 0h1m1 0h1M0 79h1m1 0h1m2 0h1m2 0h1m2 0h1m9 0h1m10 0h1m2 0h2m4 0h2m6 0h3m5 0h1m12 0h3m24 0h1m11 0h2m2 0h1m5 0h1m4 0h1m1 0h1M0 80h1m2 0h1m1 0h1m1 0h1m5 0h1m2 0h1m3 0h1m9 0h1m5 0h2m14 0h1m12 0h1m7 0h1m4 0h2m10 0h2m5 0h1m2 0h2m3 0h1m1 0h1m6 0h1m9 0h1m2 0h1m5 0h1M2 81h1m30 0h1m14 0h1m10 0h1m4 0h1m12 0h1m3 0h1m1 0h1m9 0h1m9 0h2m5 0h1m12 0h1m1 0h1M2 82h1m13 0h1m2 0h1m5 0h1m6 0h1m1 0h1m1 0h1m13 0h1m3 0h1m4 0h1m2 0h1m5 0h1m11 0h2m7 0h1m1 0h1m5 0h1m12 0h1m11 0h1m3 0h1m7 0h3" stroke="#ff5c00" stroke-width="1" fill="none" shape-rendering="crispEdges"/></pattern>
<pattern id="m220" x="106" y="317" width="139" height="79" patternUnits="userSpaceOnUse"><path transform="translate(0 .5)" d="M1 0h2m21 0h1m8 0h1m18 0h1m12 0h1m9 0h1m5 0h1m1 0h1m7 0h2m1 0h3m17 0h1m2 0h1m3 0h1m3 0h1M1 1h1m9 0h1m5 0h3m10 0h1m5 0h1m13 0h1m2 0h1m10 0h1m4 0h1m3 0h1m4 0h1m6 0h1m4 0h2m15 0h1m3 0h1m2 0h1m3 0h2m5 0h1m9 0h1M6 2h4m4 0h1m4 0h2m16 0h1m7 0h1m5 0h1m1 0h1m6 0h1m16 0h1m7 0h1m31 0h1m18 0h1M3 3h1m5 0h2m8 0h1m3 0h1m3 0h1m2 0h3m10 0h1m8 0h1m16 0h1m24 0h1m18 0h1m10 0h1m3 0h1m3 0h1M2 4h1m2 0h1m20 0h2m9 0h1m6 0h1m9 0h1m3 0h2m15 0h1m3 0h1m4 0h1m3 0h2m9 0h1m4 0h1m3 0h2m2 0h1m7 0h1m3 0h1m10 0h2M4 5h1m1 0h1m2 0h3m11 0h1m2 0h1m7 0h1m11 0h1m24 0h1m9 0h1m4 0h2m3 0h1m5 0h1m5 0h1m4 0h1m6 0h1m10 0h1m4 0h1m3 0h1M14 6h1m5 0h1m1 0h2m8 0h1m4 0h1m5 0h1m2 0h1m6 0h1m7 0h1m9 0h1m2 0h1m6 0h1m2 0h2m9 0h1m12 0h1m6 0h1m8 0h1m6 0h1m5 0h1M1 7h2m14 0h1m7 0h1m3 0h2m1 0h1m6 0h1m4 0h1m3 0h1m2 0h1m19 0h1m1 0h1m7 0h1m5 0h1m14 0h1m23 0h1m5 0h1m2 0h1M0 8h1m5 0h1m1 0h1m12 0h1m1 0h1m3 0h1m1 0h1m4 0h1m10 0h1m16 0h2m8 0h1m3 0h2m8 0h1m1 0h1m6 0h1m6 0h1m8 0h1m10 0h1m2 0h1m1 0h1m1 0h1m5 0h1m1 0h1M45 9h1m14 0h1m4 0h1m7 0h1m15 0h1m7 0h2m14 0h1m3 0h1m5 0h1m5 0h1m7 0h1M4 10h1m1 0h1m4 0h1m3 0h5m1 0h1m1 0h1m2 0h1m15 0h1m2 0h3m17 0h1m20 0h1m18 0h1m2 0h1m7 0h1m2 0h1m5 0h2M2 11h1m4 0h1m10 0h1m7 0h1m8 0h1m2 0h1m4 0h1m1 0h1m8 0h1m8 0h1m5 0h1m2 0h1m1 0h1m2 0h1m8 0h1m8 0h1m18 0h1m2 0h1m4 0h1m1 0h1m6 0h1m5 0h1M6 12h3m7 0h1m3 0h1m23 0h1m1 0h2m4 0h1m17 0h1m12 0h1m19 0h1m7 0h1m9 0h1m8 0h1m7 0h1M0 13h2m1 0h1m3 0h1m15 0h1m11 0h1m1 0h1m3 0h3m6 0h1m5 0h1m2 0h1m16 0h1m13 0h1m5 0h1m2 0h1m1 0h1m2 0h1m1 0h1m4 0h1m15 0h1M0 14h1m38 0h1m6 0h1m9 0h1m4 0h1m11 0h1m1 0h1m4 0h1m1 0h4m7 0h1m19 0h1m9 0h2m1 0h1m7 0h1M21 15h1m1 0h2m2 0h1m1 0h1m4 0h1m12 0h1m4 0h1m3 0h1m20 0h3m3 0h1m9 0h1m9 0h1m5 0h1m3 0h1m2 0h1m4 0h1m10 0h1m4 0h1M7 16h1m2 0h2m1 0h1m1 0h1m1 0h1m6 0h1m7 0h1m10 0h1m8 0h1m8 0h1m5 0h1m7 0h2m3 0h1m5 0h1m3 0h1m8 0h1m9 0h1m22 0h2M2 17h1m6 0h1m11 0h1m3 0h1m22 0h2m9 0h1m10 0h1m3 0h1m2 0h1m2 0h1m2 0h1m5 0h1m26 0h1m13 0h1m3 0h1m3 0h1M8 18h1m4 0h1m2 0h1m7 0h1m3 0h1m1 0h1m1 0h1m1 0h1m5 0h1m3 0h2m22 0h1m11 0h1m1 0h1m1 0h1m5 0h1m6 0h1m4 0h1m1 0h1m13 0h2m5 0h2m7 0h1m1 0h1M2 19h1m4 0h1m7 0h1m5 0h1m4 0h2m5 0h1m6 0h1m9 0h1m9 0h1m11 0h1m11 0h1m1 0h1m10 0h3m4 0h2m1 0h1m6 0h1m5 0h1M0 20h1m11 0h1m5 0h1m6 0h1m6 0h1m9 0h1m1 0h1m12 0h1m1 0h1m6 0h1m4 0h2m12 0h1m6 0h3m13 0h1m6 0h1m6 0h1M11 21h1m7 0h1m6 0h1m2 0h1m1 0h1m5 0h1m7 0h1m6 0h1m10 0h1m9 0h1m1 0h1m8 0h3m16 0h1m4 0h1m3 0h2m5 0h1m5 0h1m1 0h1m1 0h1M4 22h1m7 0h1m3 0h1m3 0h2m4 0h1m6 0h1m1 0h1m3 0h1m4 0h1m4 0h1m5 0h2m17 0h1m7 0h1m7 0h1m5 0h1m3 0h1m9 0h1m6 0h1m10 0h1m7 0h1m1 0h1M5 23h1m9 0h1m2 0h1m10 0h1m14 0h1m5 0h1m1 0h1m8 0h1m10 0h1m4 0h1m1 0h1m22 0h1m10 0h1m11 0h1m5 0h1m3 0h1M9 24h1m9 0h1m5 0h1m7 0h2m11 0h1m10 0h1m1 0h1m1 0h1m9 0h1m9 0h1m4 0h1m7 0h1m3 0h1m9 0h1m20 0h1m2 0h1M7 25h2m6 0h1m7 0h1m6 0h1m5 0h1m17 0h1m10 0h1m1 0h1m9 0h1m8 0h1m1 0h1m4 0h1m3 0h2m2 0h1m12 0h1m11 0h1m6 0h1m3 0h1M1 26h1m4 0h1m4 0h1m14 0h1m3 0h1m3 0h1m2 0h2m2 0h1m18 0h1m8 0h1m13 0h1m22 0h1m11 0h1m13 0h2M3 27h2m2 0h1m28 0h1m2 0h1m3 0h1m4 0h1m12 0h1m17 0h1m1 0h1m3 0h1m40 0h1m4 0h1m3 0h1M2 28h1m7 0h1m11 0h1m1 0h2m2 0h1m10 0h1m16 0h1m1 0h1m1 0h1m4 0h1m11 0h1m9 0h1m3 0h1m1 0h1m9 0h1m17 0h2m3 0h1m9 0h2M5 29h1m19 0h1m15 0h1m3 0h1m12 0h1m12 0h1m1 0h1m12 0h1m3 0h2m21 0h1m6 0h1m13 0h1m2 0h1M11 30h1m7 0h1m3 0h1m1 0h1m4 0h1m3 0h1m14 0h1m8 0h2m2 0h1m13 0h2m5 0h1m13 0h1m8 0h1m8 0h1M2 31h1m3 0h1m13 0h1m1 0h1m12 0h1m4 0h1m24 0h2m7 0h1m6 0h1m2 0h1m11 0h1m15 0h1m11 0h1m2 0h1m4 0h1M2 32h1m15 0h1m4 0h1m5 0h1m6 0h1m7 0h1m17 0h1m1 0h1m4 0h1m23 0h1m22 0h1m13 0h2M2 33h2m12 0h1m10 0h1m14 0h1m10 0h1m3 0h1m1 0h2m4 0h1m5 0h1m11 0h1m4 0h1m12 0h1m21 0h1m3 0h1M1 34h2m3 0h1m5 0h1m14 0h1m9 0h1m16 0h2m18 0h1m11 0h1m24 0h1m1 0h1m13 0h1m1 0h2m2 0h1M1 35h1m11 0h1m3 0h1m2 0h1m3 0h3m3 0h1m12 0h1m15 0h1m4 0h2m1 0h2m2 0h1m1 0h1m7 0h1m18 0h1m5 0h1m10 0h1m11 0h1m2 0h1m4 0h1M7 36h1m1 0h1m1 0h1m1 0h1m7 0h1m1 0h1m2 0h1m3 0h1m1 0h1m4 0h3m20 0h1m8 0h1m8 0h1m14 0h1m2 0h1m3 0h2m3 0h2m1 0h1m5 0h1m5 0h2m1 0h1m6 0h1m3 0h1M12 37h1m12 0h1m1 0h2m22 0h1m5 0h2m3 0h1m21 0h1m11 0h1m3 0h1m10 0h1m4 0h2m2 0h1m2 0h1m14 0h1M4 38h1m8 0h1m1 0h1m1 0h1m14 0h2m3 0h1m4 0h1m5 0h1m7 0h1m7 0h1m9 0h1m1 0h2m7 0h1m15 0h1m5 0h1m2 0h1m18 0h1m1 0h1m2 0h1m3 0h1M10 39h1m13 0h1m2 0h2m19 0h1m2 0h3m1 0h1m3 0h1m15 0h1m1 0h1m13 0h1m1 0h1m2 0h1m23 0h1m6 0h1m10 0h1M0 40h1m5 0h1m7 0h1m1 0h1m4 0h1m1 0h1m6 0h1m2 0h1m1 0h2m1 0h1m11 0h1m1 0h1m12 0h1m1 0h1m11 0h1m1 0h1m2 0h1m1 0h2m5 0h1m15 0h1m3 0h1m4 0h2m4 0h1M5 41h2m5 0h1m4 0h1m6 0h1m14 0h1m1 0h1m5 0h2m2 0h1m4 0h1m1 0h1m28 0h1m18 0h1m2 0h1m3 0h1m4 0h1m5 0h1M2 42h1m17 0h1m2 0h1m11 0h1m1 0h1m2 0h1m4 0h1m10 0h2m4 0h1m11 0h2m37 0h1m1 0h4m6 0h1M6 43h1m6 0h1m8 0h1m1 0h1m11 0h1m12 0h1m2 0h2m16 0h1m4 0h1m3 0h2m14 0h1m4 0h1m10 0h1m1 0h1m17 0h1M10 44h2m5 0h2m17 0h1m20 0h1m2 0h1m16 0h2m9 0h1m4 0h1m12 0h1m1 0h1m2 0h1m7 0h1m10 0h2m3 0h1M0 45h3m14 0h1m2 0h2m4 0h1m18 0h1m3 0h1m22 0h1m16 0h1m4 0h1m4 0h1m8 0h1m6 0h1m1 0h1m10 0h1m8 0h1M3 46h1m8 0h1m14 0h1m7 0h1m3 0h1m3 0h2m1 0h1m13 0h2m3 0h1m10 0h1m12 0h1m5 0h1m3 0h1m2 0h3m11 0h2m18 0h1M2 47h2m9 0h1m3 0h1m1 0h1m9 0h1m8 0h1m5 0h1m1 0h1m13 0h1m6 0h1m2 0h1m1 0h1m2 0h1m11 0h1m1 0h1m5 0h2m1 0h1m3 0h3m5 0h1m3 0h1m7 0h1m9 0h1m1 0h1M6 48h1m9 0h1m1 0h1m3 0h1m9 0h1m8 0h1m2 0h1m25 0h1m15 0h1m7 0h3m2 0h1m17 0h1m8 0h2m8 0h2M6 49h1m9 0h1m9 0h1m14 0h1m12 0h1m16 0h1m13 0h1m3 0h1m1 0h1m3 0h1m4 0h1m2 0h1m13 0h1m18 0h1M0 50h1m24 0h1m4 0h1m3 0h1m10 0h1m1 0h1m1 0h1m10 0h1m1 0h1m26 0h1m5 0h2m1 0h1m7 0h1m14 0h1m3 0h1m4 0h1m2 0h1M2 51h1m7 0h1m4 0h3m1 0h1m8 0h1m6 0h1m4 0h1m23 0h1m1 0h1m9 0h1m4 0h1m12 0h1m7 0h2m4 0h1m23 0h1M11 52h1m1 0h1m17 0h1m17 0h1m5 0h1m4 0h1m3 0h1m6 0h1m7 0h1m13 0h1m11 0h1m1 0h1m1 0h1m5 0h1m2 0h1m2 0h1m8 0h1M9 53h1m2 0h1m6 0h1m4 0h3m13 0h1m2 0h1m2 0h1m6 0h1m6 0h1m27 0h1m3 0h1m20 0h1m9 0h1m2 0h2m6 0h2M8 54h2m25 0h1m4 0h2m25 0h2m6 0h1m6 0h1m7 0h1m3 0h1m1 0h1m1 0h2m5 0h1m7 0h1m8 0h1m3 0h1M3 55h1m12 0h1m3 0h1m2 0h1m5 0h1m13 0h1m2 0h1m13 0h1m5 0h1m5 0h1m5 0h1m27 0h1m6 0h1m6 0h1m2 0h1m7 0h2M10 56h1m8 0h1m3 0h1m24 0h1m4 0h1m6 0h1m4 0h2m13 0h1m15 0h1m13 0h1m13 0h1m13 0h1M0 57h2m1 0h1m3 0h1m4 0h1m12 0h1m18 0h1m15 0h1m7 0h1m7 0h1m11 0h2m1 0h1m5 0h1m3 0h1m1 0h1m15 0h1m8 0h1M32 58h1m11 0h1m6 0h1m3 0h1m6 0h1m7 0h1m8 0h1m10 0h1m9 0h1m6 0h1m1 0h1m4 0h1m2 0h1m6 0h1m6 0h1M0 59h1m9 0h1m6 0h1m16 0h1m17 0h1m19 0h2m6 0h1m1 0h1m3 0h1m22 0h1m3 0h1m5 0h1m2 0h2M2 60h1m16 0h1m11 0h1m12 0h1m6 0h2m1 0h1m24 0h1m10 0h1m2 0h1m4 0h1m5 0h1m3 0h1m7 0h1m8 0h1m11 0h1M1 61h1m10 0h1m5 0h2m1 0h1m15 0h2m2 0h1m9 0h1m7 0h1m2 0h3m37 0h1m8 0h1m1 0h1m3 0h1m2 0h1m1 0h1m8 0h1m1 0h1m4 0h1M0 62h1m2 0h1m4 0h1m6 0h1m22 0h1m16 0h1m4 0h2m19 0h1m7 0h1m2 0h2m2 0h1m9 0h1m16 0h1m1 0h1m7 0h1M1 63h1m5 0h1m4 0h1m1 0h1m7 0h1m6 0h1m1 0h1m5 0h1m6 0h1m12 0h1m4 0h2m17 0h1m1 0h2m2 0h1m17 0h1m20 0h1m3 0h1M18 64h1m2 0h1m1 0h1m2 0h2m3 0h1m1 0h1m2 0h2m4 0h1m7 0h3m2 0h1m11 0h1m6 0h1m6 0h1m23 0h1m12 0h1m7 0h1m4 0h1M6 65h1m8 0h1m2 0h1m18 0h2m1 0h2m4 0h1m8 0h1m26 0h1m10 0h1m2 0h2m2 0h1m2 0h3m10 0h1m16 0h1M14 66h1m2 0h1m1 0h1m2 0h1m11 0h1m6 0h2m4 0h1m6 0h4m13 0h1m4 0h1m9 0h1m7 0h1m8 0h1m16 0h1m4 0h1m3 0h2m4 0h1M0 67h1m13 0h1m2 0h1m3 0h1m7 0h1m7 0h1m4 0h1m1 0h1m8 0h1m2 0h1m28 0h1m5 0h1m2 0h2m3 0h1m4 0h1m23 0h1m3 0h1m2 0h1m2 0h1M0 68h1m1 0h2m1 0h1m42 0h1m3 0h1m5 0h1m4 0h1m10 0h1m2 0h1m8 0h1m2 0h1m3 0h1m8 0h1m3 0h1m8 0h1m2 0h2m1 0h3m4 0h1m2 0h1m3 0h1M5 69h1m1 0h1m6 0h1m4 0h1m1 0h1m5 0h1m16 0h1m5 0h1m2 0h1m4 0h2m2 0h1m2 0h1m10 0h1m3 0h2m5 0h2m2 0h1m2 0h1m8 0h1m3 0h1m3 0h3m9 0h1m1 0h1m1 0h1m7 0h1M9 70h1m16 0h1m3 0h1m2 0h1m26 0h3m6 0h1m2 0h2m19 0h1m10 0h1m20 0h1m12 0h1M1 71h1m1 0h1m6 0h1m2 0h1m2 0h1m1 0h1m1 0h2m9 0h1m3 0h1m12 0h1m4 0h1m13 0h1m6 0h1m6 0h1m3 0h1m18 0h2m12 0h1m12 0h1m4 0h1m1 0h1M8 72h1m3 0h1m1 0h1m37 0h1m21 0h1m3 0h1m4 0h1m4 0h1m1 0h1m3 0h1m1 0h2m2 0h1m7 0h1m14 0h1m8 0h2M7 73h1m8 0h1m4 0h1m3 0h1m3 0h1m3 0h1m15 0h2m8 0h1m1 0h1m1 0h2m14 0h1m7 0h1m1 0h2m5 0h2m6 0h2m15 0h1m2 0h1M0 74h1m4 0h1m3 0h1m3 0h1m10 0h1m11 0h2m11 0h1m1 0h1m2 0h1m5 0h1m5 0h1m2 0h1m8 0h2m5 0h1m1 0h1m2 0h1m15 0h1m10 0h1m1 0h1m2 0h1m4 0h1M2 75h2m9 0h1m12 0h1m9 0h1m4 0h1m1 0h1m8 0h2m6 0h1m2 0h1m3 0h1m12 0h1m12 0h2m6 0h1m12 0h1m15 0h1m2 0h3M0 76h1m9 0h1m11 0h1m7 0h1m7 0h1m4 0h1m5 0h1m9 0h2m16 0h2m1 0h1m1 0h1m3 0h1m7 0h1m1 0h1m4 0h1m6 0h2m1 0h2m19 0h2m3 0h1M0 77h3m5 0h1m5 0h1m2 0h1m2 0h1m1 0h1m1 0h1m11 0h2m19 0h1m16 0h1m14 0h1m11 0h1m2 0h1m10 0h1m5 0h1m3 0h2m5 0h1M4 78h1m1 0h1m1 0h1m2 0h2m8 0h1m9 0h2m5 0h2m14 0h1m3 0h1m4 0h1m13 0h2m4 0h1m8 0h1m5 0h2m9 0h1m1 0h1m11 0h1m9 0h1m4 0h1" stroke="#ffa800" stroke-width="1" fill="none" shape-rendering="crispEdges"/></pattern>
<pattern id="m221" x="106" y="317" width="149" height="73" patternUnits="userSpaceOnUse"><path transform="translate(0 .5)" d="M5 0h2m4 0h1m8 0h1m15 0h1m11 0h1m2 0h1m10 0h1m3 0h1m6 0h1m1 0h1m3 0h1m3 0h1m4 0h1m4 0h2m3 0h1m24 0h1m3 0h1m1 0h1m11 0h2M0 1h1m12 0h1m1 0h1m12 0h1m4 0h1m12 0h1m5 0h1m5 0h1m4 0h1m30 0h1m3 0h1m2 0h2m2 0h1m1 0h2m8 0h2m1 0h1m21 0h1M0 2h1m19 0h1m9 0h1m24 0h2m13 0h1m6 0h1m9 0h1m1 0h1m24 0h1m8 0h1m6 0h1m3 0h1m13 0h1M4 3h1m23 0h1m8 0h1m7 0h1m20 0h1m1 0h1m1 0h1m8 0h1m8 0h1m18 0h1m12 0h2m7 0h1M35 4h1m3 0h1m1 0h1m24 0h1m26 0h1m4 0h1m9 0h1m1 0h1m3 0h1m14 0h1m3 0h1m9 0h1M0 5h2m10 0h1m15 0h1m11 0h1m7 0h2m1 0h1m15 0h2m12 0h1m4 0h1m3 0h1m6 0h1m4 0h1m1 0h1m16 0h1m1 0h1m3 0h1m9 0h2m3 0h1M3 6h1m17 0h2m11 0h1m1 0h1m17 0h1m3 0h1m8 0h1m12 0h1m4 0h1m3 0h1m1 0h1m29 0h1m6 0h1m4 0h1m7 0h2m1 0h1M14 7h1m16 0h1m8 0h1m10 0h1m5 0h1m4 0h1m2 0h1m7 0h3m2 0h1m28 0h1m2 0h1m13 0h1m2 0h1M5 8h1m4 0h1m11 0h1m10 0h1m2 0h2m2 0h1m13 0h1m17 0h1m7 0h1m6 0h1m9 0h1m5 0h2m1 0h2m3 0h1m1 0h1m3 0h1m8 0h1m10 0h1m4 0h1M0 9h1m1 0h1m4 0h1m13 0h1m5 0h1m9 0h1m6 0h1m5 0h1m14 0h1m1 0h1m13 0h1m2 0h1m3 0h1m6 0h1m6 0h1m10 0h2m3 0h1m1 0h1m16 0h2m9 0h1M3 10h1m21 0h1m18 0h1m1 0h1m3 0h2m3 0h1m2 0h2m4 0h1m2 0h1m8 0h1m6 0h1m8 0h1m3 0h1m2 0h1m14 0h1m3 0h1m2 0h1m20 0h1m1 0h1m2 0h1M8 11h1m1 0h1m16 0h1m5 0h2m1 0h1m3 0h1m6 0h1m11 0h1m26 0h2m4 0h1m18 0h1m17 0h1m8 0h1M7 12h1m8 0h1m4 0h1m2 0h1m2 0h1m8 0h1m1 0h1m1 0h1m5 0h1m1 0h1m15 0h1m6 0h1m1 0h1m5 0h1m13 0h1m1 0h1m2 0h1m1 0h1m14 0h1m5 0h1m11 0h1m13 0h2M1 13h1m10 0h1m30 0h1m5 0h1m18 0h1m1 0h1m3 0h1m5 0h1m23 0h1m10 0h1m8 0h1m10 0h1m2 0h1m2 0h1m4 0h1M1 14h1m18 0h1m12 0h2m4 0h1m13 0h1m5 0h1m6 0h1m8 0h1m13 0h1m4 0h1m4 0h1m9 0h1m4 0h1m8 0h1m4 0h1m6 0h1M10 15h2m5 0h2m5 0h1m13 0h1m14 0h1m5 0h1m16 0h1m14 0h1m9 0h1m27 0h1m16 0h1M1 16h1m5 0h2m2 0h1m1 0h1m15 0h1m1 0h1m16 0h1m15 0h1m5 0h3m3 0h1m2 0h1m10 0h2m39 0h1m2 0h1M0 17h1m12 0h1m2 0h1m2 0h1m2 0h1m7 0h1m5 0h1m1 0h1m39 0h1m2 0h1m23 0h1m14 0h2m8 0h1M1 18h1m50 0h2m15 0h1m10 0h1m15 0h1m13 0h1m3 0h1m4 0h1m5 0h1m6 0h1m4 0h1m4 0h1m3 0h1M15 19h1m1 0h1m17 0h1m30 0h1m8 0h1m12 0h1m8 0h1m48 0h1M1 20h1m21 0h1m1 0h1m40 0h1m5 0h1m4 0h2m2 0h2m7 0h1m2 0h1m2 0h1m2 0h1m15 0h1m7 0h1m5 0h1m10 0h1m5 0h1M7 21h1m2 0h1m39 0h1m33 0h1m27 0h2m13 0h1m1 0h1m7 0h1m1 0h1m4 0h1M0 22h1m7 0h1m1 0h1m8 0h1m8 0h1m3 0h1m14 0h1m2 0h1m1 0h1m11 0h1m15 0h1m23 0h1m6 0h1m25 0h1m1 0h2m2 0h1m2 0h1m1 0h1M4 23h1m2 0h1m5 0h1m12 0h1m4 0h1m2 0h1m22 0h1m4 0h1m29 0h2m3 0h2m11 0h1m5 0h1m7 0h1m10 0h1m7 0h2m2 0h1M17 24h1m11 0h1m15 0h1m1 0h1m5 0h1m24 0h1m25 0h1m12 0h1m5 0h1m13 0h1M1 25h1m1 0h1m5 0h1m7 0h1m1 0h2m4 0h3m2 0h1m7 0h1m2 0h1m16 0h1m8 0h1m10 0h1m21 0h1m9 0h1m10 0h1m2 0h1m8 0h1m4 0h1m2 0h1M19 26h2m11 0h1m9 0h1m22 0h2m7 0h1m23 0h1m13 0h1m2 0h1m4 0h1m5 0h1m5 0h1m8 0h1m1 0h2M2 27h1m32 0h1m1 0h1m2 0h1m7 0h1m5 0h1m9 0h1m4 0h1m6 0h1m1 0h1m6 0h1m2 0h1m3 0h1m3 0h1m42 0h2m5 0h1M25 28h1m3 0h2m6 0h1m1 0h1m15 0h2m2 0h1m9 0h1m2 0h1m5 0h2m1 0h1m10 0h1m16 0h1m12 0h1m6 0h1m3 0h1m4 0h1M0 29h1m2 0h1m10 0h1m10 0h1m2 0h1m5 0h1m7 0h1m6 0h1m7 0h1m12 0h1m4 0h1m7 0h1m3 0h1m2 0h1m18 0h1m10 0h1m1 0h1m15 0h1m6 0h1M1 30h1m1 0h2m5 0h1m10 0h1m13 0h1m23 0h1m2 0h1m8 0h1m1 0h1m2 0h1m17 0h1m3 0h1m15 0h2m18 0h1m6 0h1m3 0h1M5 31h1m3 0h1m2 0h1m6 0h2m2 0h1m5 0h1m1 0h1m2 0h1m4 0h1m3 0h1m22 0h1m27 0h1m1 0h2m13 0h1m13 0h2m8 0h1m1 0h1m3 0h2m1 0h1M2 32h1m1 0h1m8 0h1m20 0h1m3 0h1m2 0h1m1 0h1m5 0h1m1 0h1m11 0h1m6 0h1m2 0h1m11 0h1m8 0h1m5 0h1m2 0h1m7 0h1m1 0h1m5 0h1m3 0h3m6 0h1m2 0h1m3 0h1M13 33h2m5 0h1m10 0h1m33 0h2m2 0h1m8 0h1m1 0h1m20 0h1m3 0h1m3 0h1m1 0h1m6 0h1m4 0h1m5 0h3m10 0h1M15 34h1m5 0h1m14 0h1m1 0h1m1 0h1m16 0h1m3 0h1m2 0h1m9 0h1m2 0h1m20 0h1m3 0h1m28 0h1m4 0h1M1 35h1m9 0h1m13 0h2m3 0h1m1 0h1m26 0h2m1 0h1m8 0h1m16 0h1m3 0h1m1 0h1m4 0h1m2 0h1m2 0h1m7 0h1m6 0h1m10 0h1m6 0h1m9 0h1M1 36h2m2 0h2m1 0h1m8 0h1m9 0h1m6 0h1m2 0h1m27 0h1m9 0h1m1 0h1m6 0h1m5 0h2m2 0h1m4 0h1m9 0h1m2 0h1m9 0h1m14 0h1m1 0h1M7 37h1m11 0h1m79 0h1m6 0h1m9 0h1m2 0h1m5 0h1m1 0h1m10 0h1m6 0h1M1 38h1m3 0h2m27 0h1m1 0h1m7 0h1m8 0h1m2 0h1m26 0h1m12 0h1m5 0h1m6 0h1m1 0h1m11 0h1m5 0h1m6 0h1M6 39h1m4 0h1m3 0h1m16 0h1m1 0h1m1 0h1m4 0h1m8 0h1m16 0h1m1 0h1m2 0h1m7 0h1m2 0h1m4 0h1m34 0h1m10 0h1m9 0h1M3 40h1m3 0h3m4 0h1m3 0h1m4 0h2m6 0h1m32 0h1m1 0h1m4 0h1m2 0h1m8 0h1m1 0h1m3 0h1m8 0h1m13 0h1m13 0h1m9 0h1m7 0h1m3 0h1M5 41h1m20 0h1m2 0h1m3 0h1m9 0h1m22 0h1m3 0h2m3 0h1m4 0h1m5 0h1m24 0h1m9 0h1m1 0h1m16 0h1m3 0h3M4 42h1m10 0h1m11 0h1m7 0h1m21 0h1m3 0h1m6 0h1m8 0h1m4 0h1m1 0h2m6 0h1m6 0h1m6 0h1m1 0h1m1 0h1m6 0h1m1 0h1m3 0h1m5 0h1m16 0h1M1 43h1m3 0h1m7 0h1m6 0h2m1 0h1m3 0h2m1 0h1m30 0h1m9 0h1m5 0h2m6 0h1m13 0h1m15 0h1m7 0h1m1 0h1m14 0h2m1 0h1M30 44h1m19 0h1m5 0h1m1 0h1m1 0h1m6 0h2m13 0h1m3 0h1m19 0h1m2 0h1m1 0h1m7 0h1m10 0h1m17 0h1M0 45h1m8 0h1m4 0h1m10 0h1m4 0h1m3 0h1m20 0h1m9 0h1m5 0h1m1 0h1m6 0h1m5 0h1m5 0h1m17 0h1m6 0h1m5 0h1m1 0h1m1 0h1m1 0h1m8 0h1M3 46h1m2 0h2m29 0h1m5 0h1m23 0h1m1 0h1m3 0h2m35 0h2m3 0h1m8 0h1m6 0h1m15 0h1M1 47h1m3 0h1m4 0h1m13 0h1m2 0h1m4 0h1m7 0h1m6 0h1m8 0h2m22 0h1m21 0h1m8 0h1m7 0h1m12 0h2m4 0h1m7 0h1M10 48h1m2 0h1m28 0h1m19 0h1m9 0h1m3 0h1m7 0h2m3 0h1m7 0h1m10 0h1m22 0h1m4 0h1m1 0h1m2 0h2M5 49h1m4 0h1m3 0h1m17 0h1m20 0h1m1 0h2m5 0h1m8 0h1m2 0h1m12 0h1m13 0h1m2 0h1m5 0h1m6 0h1m4 0h1m19 0h1m2 0h1M1 50h1m4 0h1m1 0h1m7 0h1m7 0h1m11 0h1m5 0h1m39 0h1m8 0h1m14 0h1m3 0h1m11 0h1m23 0h1M1 51h2m3 0h1m13 0h1m13 0h1m3 0h1m3 0h1m31 0h1m27 0h1m17 0h1m5 0h1m4 0h1m6 0h2M4 52h1m8 0h1m2 0h1m5 0h1m1 0h1m5 0h1m9 0h1m19 0h1m16 0h1m19 0h1m9 0h1m7 0h1m3 0h1m2 0h1m20 0h1m4 0h1M4 53h1m15 0h1m5 0h1m10 0h1m4 0h2m1 0h1m10 0h1m12 0h1m12 0h1m2 0h1m10 0h1m11 0h1m6 0h1m11 0h1m2 0h1m9 0h1m2 0h1M1 54h1m1 0h1m4 0h1m6 0h1m1 0h1m5 0h3m13 0h1m2 0h1m22 0h1m13 0h1m4 0h1m2 0h1m14 0h1m14 0h1m2 0h1m10 0h1M0 55h1m4 0h1m8 0h1m2 0h1m16 0h1m5 0h1m13 0h1m15 0h1m13 0h1m13 0h1m3 0h1m25 0h1m9 0h1M5 56h1m7 0h1m5 0h2m20 0h2m7 0h1m9 0h1m24 0h1m2 0h1m9 0h1m3 0h1m27 0h1M14 57h1m2 0h1m9 0h1m5 0h1m4 0h1m6 0h1m4 0h1m3 0h1m5 0h2m3 0h1m4 0h2m5 0h2m15 0h1m2 0h1m3 0h1m7 0h1m4 0h1m7 0h1m2 0h1m2 0h1m7 0h1m7 0h1M4 58h1m15 0h1m8 0h1m8 0h1m11 0h1m6 0h1m2 0h1m20 0h1m1 0h1m2 0h1m5 0h2m1 0h2m9 0h1m4 0h1m3 0h1m8 0h1m1 0h1m1 0h1m4 0h1M34 59h1m7 0h1m4 0h2m2 0h2m5 0h1m5 0h1m3 0h1m6 0h1m12 0h1m10 0h1m6 0h1m14 0h2m3 0h2m8 0h2m7 0h2M1 60h2m4 0h1m11 0h1m11 0h1m21 0h1m3 0h1m5 0h1m7 0h1m1 0h1m16 0h1m9 0h1m28 0h2m12 0h1m1 0h1M8 61h1m3 0h1m6 0h1m11 0h1m11 0h1m11 0h1m21 0h1m43 0h1m5 0h1m12 0h1m5 0h1M28 62h1m17 0h1m2 0h1m3 0h1m4 0h2m15 0h1m9 0h1m5 0h1m7 0h1m8 0h4m9 0h1m3 0h2m18 0h1M0 63h1m2 0h1m5 0h1m3 0h1m1 0h1m4 0h1m8 0h3m13 0h1m2 0h1m8 0h1m17 0h1m13 0h1m5 0h1m27 0h1m5 0h1m3 0h2m4 0h1m7 0h1M14 64h2m13 0h1m15 0h1m11 0h1m3 0h1m3 0h1m1 0h1m5 0h1m1 0h1m3 0h1m4 0h1m3 0h1m4 0h1m5 0h1m4 0h1m3 0h1m1 0h1m6 0h1m1 0h2m1 0h1m17 0h1m1 0h1m2 0h2M8 65h1m6 0h1m13 0h1m2 0h1m3 0h2m4 0h1m4 0h1m5 0h2m26 0h3m49 0h1m13 0h1M4 66h1m12 0h1m4 0h1m6 0h1m1 0h1m5 0h1m4 0h1m1 0h1m1 0h1m9 0h1m1 0h1m7 0h3m3 0h1m7 0h1m10 0h1m8 0h1m2 0h1m2 0h1m2 0h1m2 0h1m1 0h1m8 0h1m13 0h1M6 67h1m6 0h1m2 0h1m6 0h1m16 0h1m6 0h1m15 0h1m3 0h1m3 0h1m1 0h1m5 0h1m2 0h1m7 0h1m9 0h1m2 0h1m4 0h1m6 0h1m5 0h1m13 0h1m3 0h1m4 0h1M1 68h1m5 0h1m1 0h1m4 0h1m3 0h1m5 0h1m15 0h1m2 0h1m9 0h1m13 0h1m2 0h1m6 0h1m4 0h1m6 0h1m2 0h1m7 0h1m1 0h1m2 0h1m7 0h1m27 0h1m5 0h1M5 69h2m8 0h1m24 0h1m17 0h1m6 0h1m8 0h1m1 0h1m5 0h1m3 0h1m20 0h2m7 0h1m5 0h1m3 0h1m2 0h2m4 0h1m12 0h1M8 70h1m2 0h1m8 0h1m2 0h1m1 0h1m17 0h1m9 0h1m11 0h1m1 0h1m1 0h1m4 0h1m4 0h2m6 0h1m2 0h1m5 0h1m11 0h1m12 0h1m2 0h1m20 0h1m1 0h1M0 71h2m2 0h1m29 0h1m2 0h2m13 0h1m4 0h1m16 0h1m2 0h2m28 0h1m1 0h1m5 0h1m8 0h1m18 0h1m1 0h1M1 72h2m1 0h1m1 0h1m7 0h1m23 0h1m2 0h2m2 0h1m7 0h1m8 0h1m4 0h1m10 0h1m10 0h1m4 0h1m6 0h1m1 0h1m14 0h1m1 0h1m5 0h2m4 0h1m1 0h1m4 0h1m3 0h1m1 0h1" stroke="#fff400" stroke-width="1" fill="none" shape-rendering="crispEdges"/></pattern>
<pattern id="m222" x="106" y="317" width="151" height="71" patternUnits="userSpaceOnUse"><path transform="translate(0 .5)" d="M37 0h1m6 0h1m5 0h1m5 0h1m21 0h1m5 0h1m17 0h1m17 0h1M1 1h2m4 0h1m1 0h1m9 0h1m1 0h1m21 0h1m24 0h1m4 0h2m1 0h1m8 0h1m4 0h2m7 0h1m3 0h1m3 0h1m4 0h1m7 0h1m3 0h1M1 2h1m14 0h1m8 0h1m3 0h1m3 0h1m29 0h1m18 0h1m16 0h1m50 0h1M8 3h1m2 0h1m1 0h1m2 0h1m2 0h1m5 0h1m11 0h1m4 0h1m7 0h1m14 0h1m1 0h1m5 0h2m1 0h1m3 0h1m12 0h1m3 0h2m4 0h1m10 0h2m16 0h1m12 0h1M20 4h3m6 0h1m10 0h1m9 0h1m2 0h1m19 0h1m10 0h1m13 0h1m22 0h1m6 0h1m3 0h1m1 0h1m15 0h1M7 5h1m22 0h1m17 0h1m15 0h1m3 0h2m44 0h1m9 0h1m12 0h1M20 6h1m73 0h1m5 0h1m2 0h1m3 0h1m19 0h2m7 0h1M33 7h1m5 0h1m9 0h1m11 0h1m26 0h1m18 0h1m21 0h1m6 0h2m8 0h1m1 0h1M7 8h1m9 0h1m4 0h1m18 0h1m11 0h1m23 0h1m1 0h2m1 0h1m7 0h1m1 0h1m4 0h1m16 0h1m8 0h1m13 0h1m1 0h1M1 9h1m7 0h1m7 0h1m25 0h1m23 0h1m9 0h1m7 0h1m12 0h1m17 0h2m5 0h1m7 0h2m3 0h1m8 0h1m1 0h1M9 10h1m7 0h1m4 0h1m4 0h1m17 0h1m6 0h1m9 0h1m8 0h2m14 0h1m18 0h1m6 0h1m8 0h1m6 0h1m3 0h1m4 0h1M20 11h1m4 0h1m16 0h1m1 0h2m10 0h1m13 0h1m9 0h1m14 0h1m10 0h1m16 0h1m10 0h2m8 0h1M15 12h1m25 0h1m1 0h1m18 0h1m4 0h2m11 0h1m4 0h1m2 0h1m10 0h1m8 0h1m26 0h1M3 13h2m19 0h1m24 0h1m18 0h1m10 0h1m1 0h1m46 0h1m5 0h1m3 0h1m7 0h1m3 0h1M12 14h1m14 0h3m24 0h1m3 0h1m14 0h1m3 0h1m2 0h2m8 0h1m4 0h1m3 0h1m17 0h1M9 15h1m35 0h1m16 0h1m13 0h1m1 0h1m3 0h1m12 0h1m8 0h1m3 0h1m12 0h2m16 0h1M3 16h2m19 0h1m5 0h1m10 0h1m15 0h1m4 0h1m6 0h1m1 0h1m5 0h2m26 0h1m6 0h1m1 0h1m1 0h1m1 0h1M25 17h1m12 0h1m8 0h1m12 0h1m22 0h1m5 0h1m1 0h1m6 0h1m8 0h1m1 0h1m5 0h1m11 0h2m3 0h1m5 0h1M14 18h1m7 0h1m1 0h1m19 0h1m1 0h2m2 0h1m16 0h1m10 0h1m12 0h1m1 0h3m3 0h1m11 0h1M0 19h1m6 0h1m6 0h1m10 0h1m3 0h1m27 0h1m10 0h1m27 0h1m2 0h1m4 0h1m4 0h1m3 0h1m4 0h1m1 0h1m7 0h1m6 0h1m1 0h1m12 0h1M9 20h1m47 0h1m7 0h1m1 0h1m1 0h1m5 0h1m7 0h1m5 0h1m6 0h1m13 0h1m1 0h2m1 0h1m1 0h2m2 0h1m15 0h3M3 21h1m25 0h1m42 0h1m2 0h1m3 0h1m4 0h1m3 0h1m23 0h1m20 0h1m16 0h1M8 22h1m2 0h1m1 0h1m3 0h1m22 0h1m5 0h1m29 0h1m1 0h1m1 0h1m4 0h1m11 0h1m14 0h1m3 0h1m24 0h1m6 0h1M0 23h1m6 0h1m21 0h3m52 0h1m4 0h2m9 0h1m25 0h1m5 0h1M1 24h1m1 0h1m5 0h1m50 0h2m15 0h1m6 0h1m1 0h1m21 0h1m15 0h1m14 0h1m4 0h2M9 25h1m43 0h1m5 0h1m5 0h1m3 0h1m5 0h1m11 0h1m2 0h1m32 0h1M14 26h1m1 0h1m4 0h1m25 0h1m10 0h1m17 0h1m13 0h1m9 0h1m1 0h1m2 0h1m10 0h1m32 0h1M3 27h1m23 0h1m52 0h1m47 0h1m9 0h2m1 0h1M9 28h1m12 0h1m61 0h1m8 0h1m8 0h1m6 0h1m6 0h1m10 0h1m2 0h1m1 0h1m2 0h1m11 0h1M0 29h2m2 0h1m29 0h1m9 0h1m2 0h2m12 0h2m16 0h1m16 0h1m24 0h1m12 0h1M2 30h1m1 0h1m53 0h1m1 0h1m7 0h1m21 0h1m10 0h1m25 0h1M26 31h1m12 0h1m1 0h1m7 0h1m3 0h1m6 0h1m17 0h1m14 0h1m10 0h1m11 0h1m9 0h1m16 0h1M0 32h1m26 0h1m8 0h1m18 0h1m16 0h1m53 0h1m5 0h1M2 33h2m21 0h1m10 0h1m5 0h1m8 0h1m7 0h1m2 0h1m5 0h1m12 0h1m5 0h1m14 0h1m3 0h1m2 0h1m37 0h1M12 34h1m26 0h1m5 0h1m1 0h1m6 0h1m53 0h1m5 0h1m13 0h1M1 35h1m12 0h1m15 0h1m5 0h1m17 0h1m9 0h1m2 0h1m3 0h2m6 0h1m27 0h1m1 0h1m15 0h1m10 0h1m10 0h1M2 36h1m3 0h1m26 0h2m3 0h1m41 0h1m10 0h1m20 0h1m16 0h1m7 0h1M4 37h1m3 0h1m7 0h1m6 0h1m10 0h1m8 0h1m27 0h1m2 0h1m4 0h1m12 0h1m9 0h1m2 0h1m9 0h1m19 0h1m12 0h1M10 38h1m22 0h1m10 0h1m16 0h1m42 0h1m5 0h1m8 0h1m11 0h1m8 0h1m2 0h1m5 0h1M4 39h1m4 0h1m4 0h1m2 0h1m5 0h1m6 0h1m8 0h1m7 0h1m8 0h2m21 0h1m7 0h1m29 0h1m11 0h1m7 0h1m8 0h2M4 40h1m2 0h1m27 0h3m1 0h1m27 0h1m32 0h1m4 0h1m15 0h1m2 0h1m1 0h1m20 0h1m1 0h1M6 41h1m13 0h1m18 0h1m6 0h1m5 0h1m1 0h1m12 0h1m5 0h1m1 0h1m1 0h1m4 0h1m9 0h1m31 0h1m20 0h1M3 42h1m26 0h1m8 0h2m26 0h2m6 0h2m15 0h1m2 0h1m15 0h1m10 0h1M0 43h1m7 0h1m8 0h1m12 0h1m31 0h1m2 0h1m3 0h1m2 0h1m14 0h2m1 0h1m20 0h1m2 0h1m13 0h1M1 44h1m2 0h1m55 0h1m1 0h1m33 0h1m48 0h1M0 45h1m7 0h1m2 0h1m21 0h1m2 0h1m10 0h1m32 0h1m8 0h1m4 0h1m4 0h1m3 0h1m6 0h1m23 0h1m15 0h1M2 46h1m25 0h1m6 0h1m15 0h1m7 0h1m1 0h1m8 0h1m14 0h1m6 0h1m19 0h1m5 0h1m7 0h1m4 0h1m2 0h1m10 0h1M2 47h2m9 0h1m18 0h1m4 0h1m1 0h1m33 0h1m1 0h1m2 0h1m9 0h1m31 0h1m18 0h1m9 0h2M0 48h1m20 0h1m23 0h1m7 0h1m15 0h1m3 0h2m13 0h1m2 0h1m5 0h2m4 0h1m2 0h1m3 0h1m12 0h1m2 0h1m9 0h1m8 0h1M8 49h1m4 0h1m3 0h1m18 0h1m3 0h1m10 0h1m9 0h1m5 0h1m12 0h1m2 0h1m2 0h1m9 0h1m5 0h1m31 0h1M6 50h1m3 0h1m1 0h1m4 0h1m5 0h1m8 0h1m17 0h1m5 0h1m1 0h1m15 0h1m26 0h1m10 0h1m15 0h1m1 0h1m15 0h2M5 51h1m25 0h1m9 0h1m6 0h1m14 0h1m15 0h1m1 0h1m39 0h1m15 0h1m2 0h2M28 52h1m11 0h1m6 0h1m2 0h1m2 0h2m3 0h1m27 0h1m4 0h2m36 0h1m14 0h2M28 53h1m2 0h1m8 0h1m2 0h1m18 0h1m11 0h2m19 0h1m10 0h2m14 0h1M3 54h1m9 0h1m10 0h1m1 0h1m1 0h1m3 0h1m20 0h1m4 0h1m7 0h1m5 0h1m7 0h1m11 0h1m9 0h1m1 0h1m15 0h1m3 0h1m4 0h1m8 0h1m4 0h1m3 0h1M23 55h1m3 0h1m13 0h1m13 0h1m3 0h2m28 0h1m1 0h1m10 0h1m3 0h1m26 0h1m11 0h1m2 0h1M11 56h1m1 0h2m1 0h1m26 0h1m4 0h1m28 0h1m17 0h1m2 0h1m5 0h2m7 0h1m7 0h1m27 0h1M12 57h1m6 0h1m14 0h1m38 0h1m11 0h1m11 0h1m21 0h1m1 0h1M4 58h1m30 0h1m23 0h2m50 0h2m11 0h1m14 0h1M2 59h1m8 0h1m36 0h1m24 0h1m2 0h1m1 0h1m2 0h1m8 0h1m7 0h1m8 0h1M8 60h1m8 0h2m21 0h1m15 0h1m19 0h1m28 0h1m2 0h1m6 0h1m1 0h1m32 0h1M18 61h1m6 0h1m7 0h1m17 0h1m20 0h2m5 0h2m16 0h1m11 0h1m18 0h1M0 62h1m4 0h1m16 0h1m4 0h1m11 0h2m6 0h1m3 0h1m9 0h1m29 0h1m2 0h1m2 0h1M1 63h2m1 0h1m11 0h1m2 0h1m17 0h1m2 0h1m7 0h3m17 0h1m15 0h1m20 0h1m19 0h1m3 0h1m5 0h1m6 0h1m2 0h1M2 64h2m5 0h1m14 0h1m1 0h2m3 0h1m10 0h1m18 0h1m1 0h1m4 0h1m2 0h1m25 0h1m1 0h1m11 0h1m2 0h1m15 0h2m5 0h2M15 65h1m22 0h1m6 0h1m6 0h2m9 0h1m2 0h1m2 0h1m5 0h1m12 0h1m6 0h1m3 0h1m12 0h1m8 0h1m7 0h1m3 0h1m3 0h1m1 0h1M2 66h1m8 0h1m19 0h1m32 0h1m8 0h1m4 0h1m7 0h1m7 0h1m3 0h1m10 0h1m3 0h1m4 0h1m10 0h1m4 0h1m3 0h1m6 0h1M4 67h1m2 0h1m19 0h1m3 0h1m7 0h1m7 0h1m6 0h1m1 0h1m8 0h1m1 0h1m11 0h1m20 0h1m32 0h1m4 0h1M17 68h1m15 0h1m6 0h1m1 0h1m2 0h1m37 0h1m4 0h1m3 0h1m1 0h1m1 0h1m18 0h1m2 0h1m5 0h2M23 69h1m7 0h1m24 0h1m1 0h1m49 0h1m18 0h1m8 0h1m2 0h1m3 0h1m2 0h1M2 70h1m2 0h1m12 0h1m10 0h1m4 0h1m14 0h1m4 0h1m1 0h1m3 0h1m13 0h1m28 0h1m16 0h1m1 0h1m8 0h1" stroke="#ffff61" stroke-width="1" fill="none" shape-rendering="crispEdges"/></pattern>
<pattern id="m223" x="106" y="317" width="157" height="67" patternUnits="userSpaceOnUse"><path transform="translate(0 .5)" d="M16 0h1m11 0h1m4 0h1m7 0h1m7 0h1m1 0h1m1 0h1m1 0h1m26 0h1m73 0h1M38 1h1m7 0h1m25 0h1m31 0h1m12 0h1m8 0h1m1 0h1m10 0h1m5 0h1M30 2h1m11 0h1m4 0h1m18 0h1m6 0h1m22 0h1m10 0h1m4 0h1m7 0h1m4 0h1m2 0h1m3 0h1M12 3h1m12 0h1m8 0h1m67 0h1m37 0h1M10 4h1m36 0h1m1 0h1m9 0h1m19 0h1m11 0h1m8 0h1m15 0h1m29 0h1m8 0h2M10 5h1m10 0h1m14 0h1m13 0h1m8 0h1m54 0h1m1 0h1m12 0h2m10 0h1m8 0h1M27 6h1m39 0h1m5 0h1m24 0h1m12 0h1m17 0h1m7 0h1m7 0h1m6 0h1M68 7h1m11 0h2m24 0h1m7 0h1m2 0h1m5 0h1m12 0h1m12 0h1M11 8h1m7 0h1m2 0h1m18 0h1m25 0h1m7 0h2m1 0h1m22 0h1m2 0h1m8 0h1m10 0h1m3 0h1m11 0h1m2 0h1m7 0h1M28 9h1m1 0h1m31 0h1m4 0h1m5 0h1m7 0h1m1 0h1m17 0h1m28 0h1m16 0h1M9 10h1m42 0h1m27 0h1m3 0h1m2 0h1m9 0h1m42 0h1M11 11h2m14 0h1m23 0h1m2 0h1m6 0h1m22 0h1m7 0h1m19 0h1M10 12h1m14 0h1m46 0h1m9 0h1m3 0h1m20 0h1M33 13h1m6 0h1m40 0h1m1 0h4m21 0h1m19 0h1m5 0h1m13 0h1m2 0h1M0 14h1m8 0h1m8 0h1m15 0h1m14 0h1m4 0h1m16 0h1m8 0h1m19 0h1m32 0h1m8 0h1M15 15h1m8 0h1m7 0h1m30 0h1m13 0h1m29 0h1m17 0h1m4 0h1m10 0h1M28 16h1m4 0h1m1 0h1m1 0h1m19 0h1m24 0h1m1 0h1m6 0h1m11 0h1m13 0h1m35 0h1M4 17h1m1 0h1m1 0h1m5 0h1m9 0h1m15 0h1m16 0h1m3 0h1m26 0h1m4 0h1m15 0h1m1 0h1m6 0h1m7 0h1m28 0h1M0 18h1m4 0h1m2 0h1m2 0h1m4 0h1m17 0h1m14 0h1m15 0h3m41 0h1m28 0h1m4 0h1M0 19h1m9 0h1m12 0h1m12 0h1m6 0h1m10 0h1m33 0h1m6 0h1m15 0h1m17 0h1M31 20h1m8 0h1m7 0h1m20 0h1m2 0h1m5 0h1m10 0h1m17 0h1m25 0h1m3 0h1M38 21h1m29 0h1m3 0h2m3 0h1m15 0h1m37 0h1m1 0h1m18 0h1M26 22h2m2 0h1m22 0h1m2 0h2m17 0h2m4 0h1m14 0h1m4 0h1m45 0h2m1 0h1M18 23h1m20 0h1m46 0h1m24 0h1m3 0h1m2 0h1m24 0h1m7 0h1M1 24h1m36 0h1m4 0h2m21 0h1m25 0h1m58 0h1M46 25h1m15 0h1m7 0h1m3 0h1m21 0h1m5 0h1m6 0h1m3 0h1m16 0h1m8 0h2m3 0h1m2 0h1M29 26h1m13 0h1m60 0h1m11 0h1m4 0h1m22 0h1M28 27h1m10 0h1m2 0h1m3 0h1m1 0h1m16 0h1m6 0h1m8 0h1m14 0h1m40 0h1m4 0h1m12 0h1M2 28h1m31 0h1m21 0h1m8 0h1m3 0h1m8 0h1m11 0h2m16 0h2M5 29h1m14 0h1m12 0h1m4 0h1m25 0h1m50 0h1m7 0h1m4 0h1M28 30h1m20 0h1m21 0h1m11 0h1m12 0h1m2 0h1m1 0h1M8 31h1m10 0h1m6 0h2m3 0h1m22 0h1m8 0h1m20 0h1m27 0h1m24 0h1M1 32h1m2 0h1m18 0h1m18 0h1m1 0h1m4 0h1m14 0h1m10 0h1m9 0h1m5 0h1m6 0h2m10 0h1m15 0h1M20 33h1m29 0h1m13 0h1m19 0h1m48 0h1m1 0h1M10 34h1m21 0h1m11 0h1m28 0h1m55 0h1m23 0h1m2 0h1M20 35h1m2 0h1m22 0h2m18 0h1m2 0h1m24 0h2m11 0h1m2 0h1m8 0h1m9 0h1m11 0h1m13 0h1M5 36h1m31 0h1m6 0h1m15 0h1m5 0h1m14 0h1m26 0h1m23 0h3m1 0h1m4 0h1M0 37h1m8 0h1m30 0h1m14 0h1m1 0h1m6 0h1m36 0h1m19 0h1m8 0h1m18 0h1m2 0h1M7 38h2m8 0h1m23 0h1m4 0h1m11 0h1m42 0h1m2 0h1m9 0h1m3 0h1m1 0h1m21 0h1M60 39h1m13 0h1m6 0h1m27 0h1m6 0h1m24 0h1m1 0h2m2 0h1m7 0h2M23 40h1m2 0h1m23 0h2m8 0h1m46 0h1m8 0h1m32 0h1m4 0h1M1 41h1m9 0h1m27 0h1m4 0h1m17 0h1m28 0h1m1 0h2m3 0h1m7 0h1m7 0h1m25 0h1M17 42h1m4 0h1m4 0h1m21 0h1m13 0h1m15 0h1m9 0h1m2 0h1m4 0h1m14 0h1m35 0h1M7 43h1m18 0h1m2 0h1m13 0h1m14 0h2m5 0h1m1 0h1m21 0h1m2 0h1m15 0h2m5 0h1m15 0h1m10 0h1M12 44h1m20 0h1m8 0h1m3 0h1m8 0h1m12 0h1m28 0h1m2 0h1m1 0h2m12 0h1m18 0h1m1 0h1m12 0h1M8 45h1m2 0h1m30 0h1m27 0h1m3 0h1m23 0h1m6 0h1m8 0h1m5 0h1m5 0h1m1 0h1m5 0h1m4 0h1m1 0h1M19 46h1m1 0h1m39 0h1m30 0h1M9 47h2m8 0h1m24 0h1m3 0h1m5 0h1m18 0h1m41 0h1m13 0h1M1 48h1m26 0h1m7 0h1m20 0h1m9 0h1m23 0h1m12 0h1m26 0h1m21 0h1M8 49h1m3 0h2m3 0h1m7 0h1m15 0h1m5 0h1m5 0h1m6 0h1m48 0h1m16 0h1m13 0h1M22 50h1m34 0h1m1 0h1m16 0h1m46 0h1m20 0h1m1 0h1M1 51h1m4 0h1m3 0h1m41 0h1m10 0h1m14 0h1m5 0h2m45 0h1m22 0h1M16 52h1m6 0h1m11 0h2m7 0h1m17 0h1m52 0h1m4 0h1m32 0h1M2 53h1m3 0h1m10 0h1m4 0h1m38 0h1m1 0h1m2 0h1m8 0h1m28 0h1m6 0h1m7 0h1m5 0h1m1 0h1m2 0h1m5 0h1M7 54h1m5 0h1m29 0h1m1 0h1m21 0h1m6 0h1m19 0h1m7 0h1M5 55h1m8 0h1m16 0h1m23 0h1m9 0h1m3 0h1m17 0h2m24 0h1M1 56h1m4 0h1m11 0h1m10 0h1m14 0h1m5 0h1m40 0h1m5 0h1m14 0h1m7 0h1m10 0h1m12 0h1m4 0h1M35 57h1m10 0h1m3 0h1m50 0h1m6 0h1m1 0h1m15 0h1m6 0h1m12 0h1m5 0h1M15 58h1m5 0h1m12 0h1m6 0h1m6 0h1m1 0h1m26 0h1m1 0h1m6 0h1m25 0h1m8 0h1m12 0h1m7 0h1m4 0h1m2 0h1M1 59h2m10 0h1m16 0h1m10 0h1m12 0h1m7 0h1m7 0h1m1 0h1m41 0h1m16 0h1m1 0h1m9 0h1m6 0h1M1 60h2m5 0h1m1 0h1m19 0h1m4 0h2m2 0h1m7 0h1m41 0h2m27 0h1m2 0h1m25 0h1m8 0h1M20 61h1m4 0h1m23 0h1m8 0h1m9 0h1m1 0h1m8 0h1M1 62h1m1 0h1m9 0h1m22 0h1m33 0h1m8 0h1m13 0h1m25 0h1m9 0h1m18 0h1M0 63h1m2 0h1m1 0h1m4 0h1m7 0h1m37 0h1m16 0h1m20 0h1m1 0h1m7 0h2m24 0h1m1 0h1m3 0h2M0 64h1m5 0h1m2 0h1m19 0h1m24 0h1m42 0h1m27 0h1m10 0h2m6 0h2M25 65h1m35 0h1m13 0h2m5 0h1m48 0h1M5 66h1m31 0h1m8 0h1m43 0h1m14 0h1m9 0h1m1 0h3m14 0h1m8 0h1m5 0h1" stroke="#ffffd4" stroke-width="1" fill="none" shape-rendering="crispEdges"/></pattern>
<pattern id="m224" x="106" y="317" width="163" height="61" patternUnits="userSpaceOnUse"><path transform="translate(0 .5)" d="M1 0h1m1 0h1m3 0h1m1 0h1m10 0h1m14 0h1m8 0h2m6 0h2m6 0h1m5 0h1m7 0h1m4 0h1m8 0h3m1 0h1m1 0h2m17 0h1m9 0h1m6 0h1m14 0h1m10 0h1M8 1h1m10 0h1m5 0h1m3 0h2m1 0h1m8 0h1m12 0h1m11 0h1m11 0h1m7 0h4m12 0h1m4 0h1m1 0h1m8 0h1m3 0h1m5 0h1m7 0h1m6 0h2m5 0h2M29 2h2m2 0h1m4 0h2m3 0h1m2 0h1m26 0h1m3 0h1m18 0h1m1 0h1m2 0h1m1 0h1m4 0h1m3 0h1m7 0h1m13 0h1m11 0h1m3 0h1m3 0h2M26 3h2m11 0h1m3 0h2m2 0h1m4 0h2m6 0h1m12 0h1m10 0h1m10 0h1m4 0h1m5 0h2m5 0h1m1 0h1m1 0h1m3 0h1m22 0h1m9 0h1M9 4h1m3 0h1m4 0h1m1 0h1m7 0h1m1 0h1m9 0h1m7 0h2m10 0h1m2 0h1m3 0h1m5 0h2m1 0h1m2 0h2m6 0h1m4 0h1m6 0h1m5 0h1m10 0h1m17 0h1m4 0h1m6 0h1m3 0h1m2 0h1M0 5h1m5 0h1m10 0h1m7 0h1m2 0h2m3 0h1m3 0h1m13 0h1m6 0h1m5 0h1m5 0h1m14 0h1m6 0h1m8 0h1m1 0h1m6 0h1m2 0h1m4 0h1m12 0h1m2 0h1m1 0h1m2 0h1m8 0h1m2 0h1m6 0h1M13 6h1m3 0h1m1 0h1m1 0h1m7 0h2m10 0h1m5 0h1m2 0h1m2 0h1m4 0h1m4 0h1m3 0h1m6 0h1m1 0h1m4 0h1m2 0h1m17 0h2m12 0h1m13 0h1m3 0h1m1 0h1m3 0h1m17 0h2M17 7h1m1 0h2m3 0h2m2 0h1m2 0h1m7 0h1m3 0h2m5 0h1m6 0h1m1 0h1m3 0h1m2 0h1m2 0h1m11 0h1m5 0h1m5 0h1m5 0h1m2 0h1m6 0h1m2 0h1m6 0h1m16 0h1m5 0h1m8 0h1M12 8h1m2 0h2m3 0h1m7 0h1m5 0h1m7 0h1m11 0h1m1 0h1m8 0h1m13 0h2m5 0h1m8 0h1m5 0h2m5 0h1m8 0h1m3 0h1m8 0h1m2 0h1m7 0h1m6 0h1m10 0h1M1 9h1m14 0h1m7 0h1m16 0h1m8 0h1m15 0h1m9 0h2m1 0h1m11 0h1m8 0h1m17 0h1m9 0h1m8 0h1m8 0h1m4 0h1m2 0h1m4 0h1M6 10h1m2 0h1m3 0h1m9 0h1m47 0h1m2 0h1m1 0h1m3 0h1m8 0h1m9 0h2m7 0h1m22 0h1m8 0h1m10 0h1m6 0h1M2 11h2m4 0h2m6 0h2m8 0h1m2 0h1m5 0h1m1 0h1m5 0h1m6 0h1m1 0h1m14 0h1m2 0h2m3 0h1m6 0h1m16 0h1m1 0h2m16 0h1m24 0h1m9 0h1M5 12h1m8 0h1m1 0h2m14 0h1m2 0h1m9 0h1m16 0h1m13 0h1m17 0h2m1 0h1m2 0h2m1 0h1m6 0h1m2 0h1m17 0h1m21 0h1m8 0h1M7 13h2m4 0h1m8 0h2m1 0h1m14 0h1m1 0h1m2 0h1m3 0h1m1 0h1m4 0h2m1 0h2m9 0h1m7 0h1m4 0h2m28 0h1m1 0h2m7 0h1m4 0h1m3 0h1m3 0h1m4 0h1m5 0h1m7 0h1m1 0h1M14 14h2m4 0h1m8 0h1m18 0h1m1 0h1m11 0h2m2 0h1m6 0h1m2 0h1m6 0h1m10 0h1m4 0h1m4 0h1m13 0h1m3 0h2m1 0h2m7 0h1m1 0h1m3 0h1m6 0h1m12 0h1M1 15h1m1 0h1m10 0h1m5 0h1m10 0h1m11 0h1m9 0h1m6 0h1m4 0h1m15 0h1m6 0h1m3 0h1m11 0h1m9 0h1m9 0h1m6 0h1m1 0h2m3 0h1m1 0h1m15 0h1M2 16h1m4 0h1m6 0h1m8 0h1m8 0h1m20 0h1m4 0h1m8 0h1m1 0h1m23 0h1m21 0h2m6 0h1m4 0h1m3 0h2m1 0h2m1 0h1m21 0h1M0 17h1m11 0h1m2 0h1m1 0h1m5 0h1m17 0h1m17 0h1m3 0h1m25 0h2m6 0h1m26 0h1m4 0h1m2 0h1m1 0h1m8 0h1m7 0h1M3 18h1m9 0h1m4 0h1m8 0h1m3 0h1m5 0h1m19 0h1m2 0h1m16 0h1m9 0h2m1 0h1m4 0h1m3 0h1m5 0h1m7 0h1m7 0h1m1 0h1m8 0h1m2 0h1m13 0h1m8 0h1M1 19h1m2 0h1m19 0h1m25 0h1m1 0h1m12 0h1m6 0h1m1 0h1m2 0h1m11 0h1m2 0h1m16 0h1m2 0h1m10 0h1m6 0h3m16 0h1m4 0h1m2 0h2M22 20h2m1 0h1m1 0h1m34 0h1m4 0h1m6 0h1m3 0h1m17 0h1m1 0h1m1 0h1m4 0h1m3 0h1m7 0h1m1 0h1m5 0h1m9 0h1m3 0h1m3 0h3m2 0h1m1 0h1m1 0h1m1 0h1m1 0h1M1 21h1m3 0h1m7 0h1m15 0h2m13 0h1m3 0h2m13 0h1m9 0h1m4 0h1m6 0h1m13 0h1m9 0h1m7 0h1m4 0h1m2 0h2m12 0h1m2 0h1M0 22h1m1 0h1m13 0h1m18 0h1m2 0h1m7 0h1m2 0h1m24 0h1m12 0h1m1 0h1m11 0h1m15 0h1m14 0h1m2 0h1m6 0h1m5 0h1m1 0h1m5 0h1m2 0h1M16 23h2m1 0h2m7 0h1m11 0h1m2 0h1m2 0h1m3 0h2m20 0h1m6 0h1m12 0h1m2 0h1m4 0h1m11 0h1m1 0h2m7 0h1m1 0h1m13 0h1m20 0h2M7 24h1m15 0h1m5 0h1m10 0h1m2 0h3m26 0h1m1 0h1m6 0h1m3 0h1m5 0h1m4 0h1m1 0h1m1 0h1m4 0h1m13 0h1m1 0h1m4 0h1m1 0h1m4 0h2m7 0h1m11 0h1M7 25h1m5 0h2m1 0h1m5 0h1m3 0h1m24 0h1m26 0h1m12 0h1m9 0h1m23 0h1m9 0h1m5 0h1m6 0h1m8 0h2m1 0h1M12 26h1m2 0h1m18 0h1m12 0h1m25 0h1m6 0h2m12 0h1m5 0h1m13 0h1m13 0h3m15 0h1m7 0h1m4 0h1M5 27h1m8 0h1m3 0h1m20 0h2m2 0h2m3 0h1m1 0h1m2 0h1m3 0h1m2 0h1m2 0h1m3 0h1m4 0h1m3 0h1m4 0h1m19 0h1m12 0h1m5 0h1m3 0h1m8 0h1m1 0h2m4 0h1m5 0h1m2 0h1m1 0h1M3 28h1m5 0h1m1 0h2m3 0h1m9 0h1m10 0h1m4 0h2m2 0h1m7 0h1m5 0h1m2 0h1m4 0h2m2 0h1m3 0h1m1 0h1m4 0h1m8 0h1m8 0h1m4 0h1m5 0h1m7 0h1m5 0h1m4 0h1m11 0h1m15 0h2m1 0h1M13 29h1m5 0h1m4 0h1m10 0h1m4 0h1m1 0h1m10 0h1m1 0h1m24 0h1m2 0h1m1 0h1m1 0h1m5 0h1m22 0h1m7 0h1m1 0h1m6 0h1m8 0h1m7 0h1m11 0h1M46 30h2m1 0h1m6 0h1m21 0h1m1 0h2m1 0h1m5 0h1m6 0h1m7 0h1m1 0h1m6 0h1m6 0h1m3 0h1m4 0h1m14 0h4m8 0h1M3 31h1m7 0h1m3 0h1m2 0h1m9 0h1m4 0h1m16 0h2m32 0h1m3 0h1m2 0h1m3 0h1m6 0h1m10 0h1m8 0h1m12 0h1m6 0h1m8 0h1m1 0h1m3 0h1m3 0h1M13 32h1m11 0h1m29 0h2m6 0h2m17 0h1m4 0h2m23 0h2m5 0h1m4 0h2m12 0h1m1 0h1m5 0h1m3 0h1m10 0h1M9 33h1m9 0h1m14 0h1m3 0h1m2 0h1m5 0h2m3 0h1m4 0h1m5 0h1m13 0h1m14 0h1m3 0h1m2 0h1m1 0h1m4 0h1m12 0h1m9 0h1m7 0h1m1 0h1m2 0h3m4 0h1m1 0h1m4 0h1M1 34h1m7 0h1m11 0h1m6 0h1m15 0h1m7 0h1m5 0h3m5 0h1m2 0h1m3 0h1m17 0h1m12 0h1m5 0h1m2 0h1m7 0h1m16 0h1m2 0h1m2 0h1m6 0h1M7 35h1m2 0h5m1 0h1m7 0h1m10 0h1m3 0h1m1 0h1m4 0h1m22 0h1m1 0h1m4 0h1m5 0h1m1 0h1m1 0h1m6 0h1m3 0h1m1 0h1m11 0h1m12 0h1m3 0h1m4 0h1m9 0h1m3 0h1m6 0h3M9 36h1m30 0h1m7 0h1m3 0h2m4 0h1m2 0h1m13 0h1m34 0h2m2 0h1m2 0h1m1 0h1m4 0h1m14 0h1m17 0h1M7 37h1m9 0h1m7 0h1m6 0h1m4 0h1m3 0h1m3 0h1m5 0h1m11 0h3m10 0h1m5 0h1m3 0h1m3 0h1m15 0h1m1 0h1m2 0h1m7 0h1m1 0h1m1 0h1m5 0h1m2 0h2m5 0h1m1 0h1M4 38h1m3 0h1m7 0h1m13 0h1m6 0h1m2 0h1m1 0h1m1 0h2m8 0h1m15 0h1m6 0h2m5 0h1m1 0h1m7 0h1m15 0h2m2 0h1m8 0h1m1 0h1m4 0h1m2 0h1m13 0h1m2 0h2m1 0h1m2 0h1m4 0h1M0 39h1m11 0h2m5 0h2m1 0h1m1 0h1m5 0h2m4 0h2m1 0h1m5 0h1m3 0h1m2 0h2m4 0h1m13 0h1m12 0h1m2 0h1m4 0h1m18 0h1m1 0h1m2 0h1m15 0h3m1 0h1m9 0h1m7 0h1m5 0h1M15 40h1m2 0h1m5 0h2m8 0h1m3 0h1m7 0h1m3 0h2m1 0h1m5 0h1m8 0h1m35 0h1m1 0h1m6 0h1m9 0h1m17 0h1M2 41h1m3 0h1m3 0h1m16 0h2m5 0h1m6 0h1m2 0h1m8 0h1m1 0h1m4 0h1m5 0h1m1 0h1m2 0h1m2 0h1m6 0h1m2 0h1m2 0h2m9 0h2m2 0h1m4 0h1m2 0h1m9 0h1m3 0h1m5 0h4m2 0h1m3 0h1m14 0h1M0 42h1m1 0h1m20 0h2m16 0h2m14 0h1m3 0h1m2 0h1m1 0h1m34 0h1m26 0h2m8 0h1m9 0h1M0 43h1m4 0h1m5 0h1m7 0h1m16 0h1m6 0h1m13 0h1m17 0h1m10 0h1m15 0h1m3 0h2m10 0h1m37 0h1m3 0h1M2 44h2m10 0h1m4 0h2m5 0h1m8 0h1m2 0h1m17 0h1m3 0h1m22 0h1m6 0h1m2 0h1m4 0h1m5 0h2m2 0h1m2 0h1m2 0h1m21 0h1M1 45h1m18 0h1m7 0h1m7 0h1m3 0h2m5 0h1m3 0h1m14 0h1m13 0h1m6 0h2m3 0h2m3 0h1m4 0h1m2 0h1m6 0h1m2 0h2m10 0h1m8 0h1m5 0h1m1 0h1m8 0h1m4 0h1m1 0h2M7 46h1m7 0h1m17 0h1m5 0h1m3 0h3m17 0h1m1 0h1m4 0h1m2 0h2m7 0h1m1 0h1m3 0h1m14 0h1m22 0h1m15 0h1m2 0h1m1 0h2m1 0h1m1 0h1m3 0h3m1 0h1m1 0h1M1 47h1m8 0h2m28 0h1m2 0h1m2 0h1m4 0h1m37 0h1m1 0h1m11 0h1m2 0h1m2 0h1m2 0h1m16 0h1m16 0h1M0 48h1m1 0h1m7 0h1m21 0h1m6 0h1m17 0h1m20 0h1m23 0h1m14 0h1m2 0h1m3 0h1m16 0h1m4 0h1m4 0h1m7 0h1m1 0h1M2 49h1m5 0h1m5 0h1m1 0h1m4 0h1m10 0h1m5 0h1m5 0h1m8 0h1m11 0h1m3 0h1m5 0h2m5 0h3m25 0h1m5 0h1m2 0h1m24 0h1m7 0h1m1 0h1m6 0h1M6 50h1m20 0h1m2 0h1m10 0h1m1 0h1m6 0h1m9 0h1m5 0h1m6 0h1m6 0h1m7 0h1m18 0h1m6 0h1m6 0h1m1 0h2m1 0h1m4 0h1m8 0h2m4 0h1m6 0h1m4 0h1m1 0h1M3 51h1m6 0h1m5 0h1m24 0h2m11 0h1m4 0h1m5 0h1m16 0h2m8 0h1m2 0h1m6 0h1m10 0h1m6 0h1m5 0h2m2 0h1m16 0h1m4 0h1m1 0h1M5 52h1m1 0h1m6 0h1m16 0h1m11 0h1m7 0h2m2 0h1m2 0h1m4 0h1m16 0h1m2 0h1m11 0h1m8 0h1m1 0h1m4 0h1m4 0h1m1 0h1m17 0h1m4 0h1m7 0h1m8 0h1M11 53h1m1 0h1m3 0h1m2 0h1m22 0h1m4 0h1m1 0h1m5 0h1m4 0h2m4 0h1m5 0h1m2 0h2m1 0h1m14 0h1m2 0h1m9 0h1m2 0h1m8 0h1m5 0h1m6 0h1m4 0h1m1 0h1m1 0h3m7 0h1m5 0h1m1 0h1M19 54h1m29 0h2m12 0h1m6 0h1m1 0h1m2 0h1m6 0h1m1 0h1m3 0h1m2 0h2m3 0h1m6 0h1m1 0h2m16 0h1m2 0h1m2 0h1m17 0h1m2 0h1m4 0h1m1 0h1m2 0h1m1 0h1M1 55h1m24 0h2m4 0h1m13 0h1m3 0h1m8 0h1m1 0h1m1 0h1m9 0h1m3 0h1m8 0h1m6 0h1m22 0h1m11 0h1m2 0h2m11 0h1m11 0h1M11 56h1m7 0h1m2 0h2m1 0h2m16 0h1m4 0h1m16 0h1m1 0h1m2 0h1m3 0h1m5 0h1m13 0h2m4 0h1m4 0h1m1 0h1m4 0h1m2 0h2m20 0h1m1 0h1m2 0h2m8 0h1m1 0h2M5 57h1m3 0h1m7 0h1m14 0h1m12 0h1m2 0h1m1 0h1m1 0h1m8 0h1m8 0h1m10 0h1m1 0h1m2 0h2m31 0h1m3 0h1m3 0h1m1 0h1m3 0h2m6 0h1m2 0h2m2 0h1m8 0h1M1 58h1m4 0h2m4 0h1m8 0h1m4 0h1m6 0h1m3 0h1m8 0h1m9 0h1m4 0h1m4 0h1m3 0h1m3 0h1m13 0h1m1 0h1m1 0h1m11 0h1M2 59h1m15 0h1m10 0h1m10 0h1m23 0h1m3 0h1m1 0h1m5 0h1m1 0h1m5 0h1m10 0h2m3 0h1m4 0h1m5 0h1m18 0h1m9 0h1m6 0h1m12 0h1M2 60h2m8 0h1m12 0h1m2 0h2m14 0h2m3 0h1m3 0h1m1 0h1m1 0h1m34 0h1m3 0h1m1 0h1m1 0h2m1 0h1m10 0h1m2 0h1m6 0h1m32 0h1" stroke="#ffffff" stroke-width="1" fill="none" shape-rendering="crispEdges"/></pattern>
</defs>
<g shape-rendering="crispEdges"><rect x="106.0" y="317.0" width="570.0" height="288.0" fill="#0b0000"/>
<rect x="106.0" y="317.0" width="570.0" height="288.0" fill="url(#m215)"/>
<rect x="106.0" y="317.0" width="570.0" height="288.0" fill="url(#m216)"/>
<rect x="106.0" y="317.0" width="570.0" height="288.0" fill="url(#m217)"/>
<rect x="106.0" y="317.0" width="570.0" height="288.0" fill="url(#m218)"/>
<rect x="106.0" y="317.0" width="570.0" height="288.0" fill="url(#m219)"/>
<rect x="106.0" y="317.0" width="570.0" height="288.0" fill="url(#m220)"/>
<rect x="106.0" y="317.0" width="570.0" height="288.0" fill="url(#m221)"/>
<rect x="106.0" y="317.0" width="570.0" height="288.0" fill="url(#m222)"/>
<rect x="106.0" y="317.0" width="570.0" height="288.0" fill="url(#m223)"/>
<rect x="106.0" y="317.0" width="570.0" height="288.0" fill="url(#m224)"/>
<defs>
<pattern id="ovA" x="106" y="317" width="101" height="83" patternUnits="userSpaceOnUse"><g transform="translate(0 .5)" stroke-width="1" fill="none" shape-rendering="crispEdges"><path d="M3 0h1m3 0h1m15 0h1m12 0h1m8 0h1m11 0h1m4 0h1m14 0h1m3 0h1m7 0h1m8 0h1M4 1h1m3 0h1m3 0h1m1 0h1m16 0h1m2 0h1m3 0h1m1 0h1m1 0h1m5 0h1m11 0h1m3 0h1m12 0h1m2 0h1m2 0h1m5 0h1m4 0h1m4 0h2M13 2h1m18 0h1m9 0h1m9 0h1m1 0h1m4 0h1m11 0h1m3 0h1m1 0h1m5 0h1m10 0h2M14 3h1m3 0h1m3 0h1m13 0h2m7 0h1m3 0h2m6 0h1m7 0h1m2 0h1m9 0h1m3 0h1m12 0h1M6 4h1m17 0h1m7 0h2m2 0h1m8 0h2m19 0h1m13 0h1m4 0h2m6 0h1m3 0h1M14 5h1m9 0h1m3 0h1m1 0h4m3 0h1m12 0h1m15 0h2m6 0h2m2 0h1m5 0h1m1 0h1m8 0h1M0 6h1m1 0h1m9 0h2m20 0h1m5 0h1m13 0h1m6 0h1M12 7h1m12 0h1m8 0h1m9 0h2m2 0h1m2 0h1m2 0h1m1 0h1m1 0h2m7 0h1m7 0h1m3 0h2m8 0h1m5 0h1M1 8h1m3 0h2m7 0h4m1 0h1m2 0h1m7 0h1m9 0h1m5 0h1m2 0h1m4 0h1m1 0h1m3 0h1m1 0h1m11 0h1m3 0h1m16 0h1M14 9h1m5 0h1m14 0h1m1 0h1m5 0h1m3 0h1m4 0h1m3 0h1m10 0h1m7 0h1m2 0h1m1 0h1m6 0h1m3 0h1m1 0h1M6 10h1m2 0h1m14 0h1m12 0h1m2 0h1m18 0h1m8 0h1m3 0h1m4 0h1m8 0h1M3 11h2m6 0h2m8 0h1m10 0h1m9 0h1m8 0h1m2 0h2m9 0h1m2 0h1m4 0h1m4 0h1m4 0h1m3 0h1m3 0h1m3 0h2M6 12h2m4 0h2m12 0h1m5 0h1m2 0h1m4 0h1m3 0h1m12 0h1m3 0h1m2 0h1m18 0h1m1 0h1m6 0h1M0 13h1m4 0h1m1 0h1m1 0h1m3 0h3m7 0h1m9 0h1m8 0h2m1 0h1m2 0h3m17 0h1m3 0h1m5 0h1m1 0h1m4 0h1M3 14h1m12 0h2m5 0h1m1 0h1m4 0h1m1 0h1m4 0h1m8 0h2m8 0h1m8 0h2m9 0h1m1 0h1m1 0h1m9 0h1m2 0h1m1 0h1M6 15h1m5 0h1m2 0h1m8 0h1m6 0h1m4 0h1m10 0h2m10 0h1m5 0h1m2 0h1m12 0h1m2 0h1m2 0h1m1 0h1m4 0h1m1 0h1M9 16h1m3 0h1m21 0h1m14 0h1m12 0h1m8 0h1m1 0h2m9 0h1m2 0h1m1 0h1M3 17h1m4 0h1m6 0h3m1 0h1m14 0h1m7 0h1m10 0h1m31 0h1m1 0h3m2 0h1M4 18h1m2 0h1m2 0h1m3 0h1m4 0h1m6 0h1m4 0h1m3 0h3m6 0h1m2 0h2m1 0h1m11 0h1m4 0h1m10 0h1m11 0h2m4 0h1M5 19h2m3 0h1m4 0h2m5 0h1m3 0h1m1 0h2m8 0h1m5 0h1m2 0h1m11 0h1m5 0h1m6 0h1m2 0h2m5 0h1m2 0h1m13 0h2M13 20h1m2 0h1m1 0h1m6 0h1m5 0h1m4 0h1m4 0h1m14 0h1m11 0h1m6 0h1m2 0h1m13 0h1m3 0h1m1 0h1M15 21h1m1 0h1m15 0h1m1 0h2m11 0h2m9 0h1m8 0h1m17 0h1m3 0h1m7 0h1M10 22h1m13 0h1m3 0h1m4 0h1m4 0h1m2 0h1m4 0h1m2 0h2m4 0h1m8 0h2m1 0h1m1 0h1m5 0h1m19 0h1m4 0h1M10 23h1m9 0h1m1 0h1m12 0h1m1 0h1m1 0h1m3 0h1m4 0h3m12 0h1m10 0h1m11 0h1M0 24h1m12 0h1m4 0h1m11 0h1m4 0h1m1 0h1m1 0h1m13 0h1m23 0h1m4 0h2m1 0h2m1 0h1M3 25h1m4 0h1m8 0h1m8 0h2m1 0h1m2 0h1m2 0h2m2 0h1m9 0h1m3 0h1m1 0h1m2 0h1m2 0h1m5 0h2m4 0h1m5 0h1m2 0h1m1 0h2m1 0h2m5 0h1M10 26h1m5 0h1m3 0h1m23 0h1m5 0h1m3 0h2m21 0h2m3 0h1m4 0h1m10 0h1M1 27h1m7 0h2m3 0h1m7 0h1m2 0h1m2 0h1m10 0h3m8 0h1m12 0h1m6 0h1m2 0h1m1 0h1m9 0h2m9 0h1M0 28h2m5 0h1m10 0h1m3 0h1m4 0h1m1 0h1m4 0h1m1 0h1m1 0h1m1 0h1m2 0h1m4 0h1m1 0h1m20 0h1m10 0h1m4 0h1m3 0h2m2 0h1m4 0h1M10 29h1m7 0h1m5 0h1m18 0h1m3 0h2m2 0h2m5 0h1m2 0h1m2 0h1m7 0h1m1 0h1m14 0h1m10 0h1M13 30h1m21 0h1m19 0h1m5 0h1m3 0h1m7 0h1m3 0h2m2 0h1m1 0h1m5 0h1m10 0h1M1 31h1m2 0h2m4 0h1m1 0h1m4 0h1m13 0h1m6 0h1m1 0h1m1 0h2m3 0h1m3 0h1m1 0h1m19 0h1m3 0h1M7 32h1m7 0h1m1 0h1m3 0h1m2 0h3m1 0h1m3 0h1m1 0h1m2 0h1m6 0h1m10 0h1m9 0h1m17 0h1m4 0h1m2 0h2m4 0h2M6 33h1m9 0h1m4 0h2m2 0h1m3 0h1m6 0h1m5 0h1m21 0h1m16 0h1m6 0h2m1 0h1M0 34h1m2 0h1m4 0h1m8 0h2m4 0h1m3 0h1m14 0h1m7 0h1m14 0h1m8 0h1m8 0h1m1 0h1m5 0h1m4 0h2m1 0h1M11 35h1m1 0h1m8 0h1m3 0h1m5 0h2m6 0h1m13 0h1m5 0h1m8 0h2m16 0h1m3 0h1m7 0h1M10 36h2m3 0h1m2 0h2m1 0h1m2 0h1m10 0h1m4 0h1m2 0h3m10 0h3m1 0h1m1 0h1m7 0h1m3 0h1m19 0h1m2 0h1M6 37h1m1 0h1m3 0h2m2 0h1m7 0h1m7 0h1m5 0h1m3 0h1m3 0h1m3 0h1m2 0h1m7 0h1m4 0h1m3 0h1m4 0h3m15 0h1m2 0h1M12 38h1m6 0h1m2 0h1m9 0h1m4 0h1m6 0h1m11 0h1m11 0h1m7 0h1m2 0h1m1 0h1m11 0h1m4 0h1M1 39h1m3 0h1m19 0h2m10 0h1m2 0h1m2 0h2m3 0h1m1 0h2m8 0h1m7 0h1m1 0h1m1 0h1m1 0h1m13 0h1m4 0h2m2 0h1M1 40h1m2 0h1m10 0h3m3 0h1m16 0h1m2 0h1m3 0h1m7 0h1m1 0h1m8 0h1m4 0h1m9 0h1m5 0h1m2 0h1M10 41h1m8 0h1m4 0h1m1 0h1m4 0h1m7 0h2m4 0h1m7 0h1m3 0h1m7 0h1m6 0h1m1 0h1m1 0h1m1 0h1m1 0h1m12 0h1M4 42h1m1 0h1m12 0h2m1 0h3m24 0h1m4 0h1m4 0h1m5 0h1m3 0h1m1 0h1m1 0h1m12 0h1m11 0h1m1 0h1M4 43h1m9 0h1m16 0h1m8 0h1m1 0h1m3 0h2m15 0h1m19 0h1m1 0h1m8 0h1M0 44h1m7 0h1m1 0h1m6 0h1m22 0h1m22 0h1m12 0h1m5 0h1m7 0h1M1 45h3m5 0h1m7 0h1m1 0h1m6 0h2m3 0h1m5 0h1m5 0h1m2 0h1m4 0h1m10 0h1m7 0h1m5 0h2m17 0h1M14 46h1m2 0h1m3 0h1m4 0h1m6 0h1m7 0h1m2 0h1m5 0h1m2 0h1m32 0h1m11 0h1M1 47h1m13 0h1m4 0h1m1 0h2m4 0h1m10 0h1m3 0h1m1 0h1m10 0h1m33 0h1m2 0h1M20 48h2m1 0h1m16 0h2m1 0h1m5 0h1m8 0h1m14 0h1m7 0h1m1 0h1m4 0h1m10 0h1M3 49h1m3 0h1m19 0h1m6 0h1m4 0h1m4 0h1m5 0h1m19 0h1m3 0h1m9 0h1m8 0h1m3 0h1M1 50h1m12 0h1m5 0h1m9 0h1m10 0h1m1 0h1m5 0h1m1 0h1m2 0h1m3 0h1m5 0h1m12 0h1m2 0h1m6 0h2M1 51h1m2 0h1m8 0h1m37 0h1m3 0h2m2 0h1m3 0h1m7 0h1m8 0h1m9 0h1m8 0h1M15 52h1m10 0h4m1 0h1m1 0h1m5 0h1m4 0h1m4 0h1m4 0h1m6 0h1m9 0h1m1 0h1m4 0h1m13 0h1m1 0h1m3 0h1M8 53h1m3 0h1m3 0h1m3 0h1m2 0h1m10 0h1m5 0h2m7 0h2m21 0h1m2 0h1m3 0h1m2 0h2m8 0h1M3 54h1m8 0h1m4 0h1m6 0h1m2 0h1m3 0h1m10 0h1m1 0h1m40 0h1m1 0h1m2 0h1m1 0h1m1 0h1M13 55h2m10 0h1m9 0h2m3 0h1m9 0h1m8 0h1m2 0h1m3 0h3m11 0h2m18 0h1M8 56h1m8 0h1m13 0h1m10 0h1m2 0h2m5 0h1m13 0h2m2 0h1m2 0h1m1 0h1m4 0h1m2 0h1m4 0h1m2 0h1m7 0h1M9 57h1m9 0h1m6 0h1m13 0h1m14 0h1m1 0h1m5 0h1m12 0h1M5 58h1m3 0h1m2 0h1m7 0h2m9 0h1m25 0h1m12 0h1m11 0h1M7 59h1m7 0h2m14 0h1m19 0h1m23 0h1m2 0h1m2 0h2m11 0h2M11 60h1m4 0h1m4 0h1m14 0h3m5 0h1m12 0h2m14 0h1m9 0h1m1 0h1m3 0h1m2 0h1m5 0h1M4 61h1m9 0h1m20 0h1m24 0h1m7 0h1m3 0h1m7 0h1m13 0h1m1 0h1m1 0h2M4 62h1m12 0h1m6 0h1m1 0h1m1 0h1m11 0h1m10 0h1m6 0h1m2 0h1m1 0h1m19 0h2m6 0h1m2 0h1m1 0h2M1 63h1m15 0h1m3 0h1m9 0h1m4 0h1m5 0h1m28 0h1m2 0h1m1 0h1m7 0h1m6 0h1m1 0h1m4 0h1M2 64h1m10 0h1m2 0h1m4 0h1m1 0h3m1 0h1m3 0h1m5 0h1m6 0h1m2 0h1m1 0h2m5 0h1m6 0h1m7 0h1m3 0h1m18 0h1m2 0h1m2 0h1M1 65h1m1 0h1m4 0h1m2 0h1m12 0h2m3 0h1m4 0h1m3 0h1m3 0h1m2 0h1m2 0h1m1 0h1m1 0h1m4 0h1m14 0h1m2 0h1m1 0h1m1 0h2m1 0h1m5 0h1m4 0h1M2 66h1m4 0h1m13 0h1m8 0h1m1 0h1m6 0h1m1 0h2m4 0h1m6 0h1m11 0h1m9 0h1m11 0h1m1 0h1M14 67h1m29 0h1m5 0h1m6 0h1m3 0h1m3 0h1m22 0h1m6 0h1m3 0h1M11 68h2m8 0h1m7 0h1m5 0h1m5 0h2m1 0h1m2 0h1m5 0h1m4 0h1m1 0h1m28 0h1m9 0h2M5 69h1m1 0h1m3 0h1m4 0h1m1 0h2m1 0h1m10 0h1m16 0h1m4 0h1m10 0h1m5 0h1m1 0h1m2 0h1m16 0h1M10 70h1m3 0h1m5 0h2m19 0h2m3 0h1m4 0h2m3 0h1m1 0h1m1 0h1m21 0h1m8 0h2m2 0h1m1 0h1M4 71h1m16 0h1m3 0h1m1 0h1m2 0h1m5 0h1m6 0h1m16 0h1m10 0h1m8 0h1m9 0h2M16 72h1m29 0h1m2 0h1m15 0h1m1 0h1m1 0h1m1 0h1m5 0h1m2 0h3m7 0h1m3 0h1M2 73h1m17 0h1m13 0h1m7 0h1m4 0h2m4 0h1m12 0h1m4 0h2m3 0h1m17 0h1M4 74h1m19 0h1m11 0h1m11 0h1m4 0h1m18 0h1m12 0h1m1 0h1m4 0h1m1 0h1m1 0h1m1 0h1M1 75h1m1 0h2m10 0h1m2 0h1m18 0h1m7 0h1m2 0h1m1 0h1m3 0h1m26 0h1m1 0h1m1 0h1m2 0h1M10 76h1m2 0h1m11 0h1m16 0h1m6 0h3m7 0h1m7 0h2m8 0h1m6 0h2m4 0h1m3 0h1m1 0h1M4 77h1m9 0h1m2 0h1m2 0h1m6 0h1m20 0h1m2 0h2m1 0h1m3 0h3m17 0h1m10 0h1m1 0h1m2 0h2M2 78h1m3 0h1m3 0h3m3 0h1m3 0h1m1 0h2m12 0h1m3 0h1m6 0h1m27 0h1m21 0h1M5 79h1m13 0h2m8 0h1m10 0h1m1 0h1m6 0h1m14 0h1m8 0h2m12 0h1m3 0h1m2 0h1M5 80h1m10 0h1m3 0h1m13 0h1m7 0h1m9 0h2m3 0h1m1 0h1m1 0h1m4 0h2m9 0h1m8 0h1m1 0h1m2 0h1M16 81h1m2 0h2m7 0h1m18 0h1m9 0h1m7 0h1m7 0h2m1 0h1m3 0h1m5 0h1m4 0h1M0 82h1m2 0h1m5 0h1m6 0h1m6 0h1m8 0h2m1 0h1m7 0h3m4 0h1m12 0h1m7 0h1m4 0h1m5 0h1" stroke="#0b0000"/><path d="M22 0h1m55 0h1M28 1h1m18 0h1m5 0h2m17 0h1M0 2h1m54 0h1m2 0h1M16 3h1m38 0h1m13 0h1m22 0h1M5 4h1m17 0h1m4 0h1m19 0h1m1 0h1m20 0h1M13 5h1m8 0h1M9 6h1m9 0h1m13 0h1m23 0h1m37 0h1M22 7h1m40 0h1m14 0h1M28 8h1m16 0h1M10 9h1m11 0h1m41 0h1m6 0h1M46 10h1m14 0h1m3 0h1m32 0h1M9 11h1m24 0h1m32 0h1m22 0h1m7 0h1M2 12h1m39 0h2m8 0h2m20 0h1m19 0h1M24 13h1m19 0h1m13 0h1m38 0h1M4 14h1m6 0h1m1 0h2m3 0h1m14 0h1m27 0h1m8 0h1m13 0h1M38 15h1m17 0h1m9 0h1m11 0h1m7 0h1M16 16h1m2 0h1m44 0h1m21 0h1M1 17h1m12 0h1m33 0h1m25 0h1m4 0h1m3 0h1M0 18h1m7 0h1m24 0h1m38 0h1m13 0h1m10 0h1M7 19h1m10 0h1m2 0h1m5 0h1m18 0h1m1 0h1m48 0h1M1 20h1m10 0h1m2 0h1m5 0h1m7 0h1m7 0h1m1 0h1m11 0h1m7 0h1M1 21h1m1 0h1m51 0h1m7 0h1M0 22h1m16 0h1m2 0h1m33 0h1m17 0h1M51 23h2m30 0h1M2 24h1m2 0h1m21 0h2m9 0h1m23 0h1m6 0h1M34 25h1m11 0h1m24 0h1M3 26h1m25 0h1m8 0h1m17 0h1M0 27h1m5 0h1m1 0h1m8 0h1m38 0h1M9 28h1m44 0h2m2 0h1m10 0h1m6 0h1M29 29h1m30 0h1m17 0h1m5 0h1m5 0h1M27 30h1m35 0h1m2 0h2m2 0h1m1 0h1m7 0h1M36 31h1m18 0h1m8 0h1M4 32h1m8 0h2m44 0h1m9 0h1m12 0h1m11 0h1M11 33h1m60 0h1m5 0h1m14 0h1m3 0h1M5 34h1m48 0h1m5 0h1m25 0h1M36 35h1m31 0h1m11 0h1m1 0h1m14 0h1M9 36h1m19 0h1m1 0h1m9 0h1m37 0h2M1 37h1m12 0h1m4 0h1m58 0h1m8 0h1M3 38h1m12 0h2m9 0h1m23 0h1m12 0h1M49 39h1m2 0h1m22 0h1m5 0h1m4 0h1m11 0h1M20 40h1m37 0h1m27 0h1m5 0h1M0 41h1m2 0h1m8 0h2m4 0h1m14 0h1m21 0h1m3 0h1m35 0h1M27 42h1m44 0h1m26 0h1M16 43h1m7 0h1m20 0h1m21 0h1m2 0h2m14 0h1M7 44h1m13 0h1m12 0h1m1 0h1m8 0h1m39 0h1m12 0h1M33 45h1m20 0h1m17 0h1M10 46h1m20 0h1m14 0h1m17 0h1m25 0h1M8 47h1m4 0h1m80 0h1M16 48h1m28 0h1m38 0h1M13 49h1m32 0h1M15 50h1m56 0h1m8 0h1m3 0h1m10 0h1M17 51h2m33 0h1M18 52h1m45 0h2m6 0h1M22 53h1m36 0h2m35 0h1M9 54h1m50 0h1m21 0h1M41 55h1m22 0h1M32 56h1m17 0h1m8 0h1m5 0h1m8 0h1M1 57h1m6 0h1m8 0h1m3 0h1m55 0h1m8 0h1m5 0h1M10 58h1m5 0h1m6 0h1m8 0h1m5 0h1m22 0h1M76 59h1m22 0h1M12 60h1m19 0h1m10 0h1M77 61h1M18 62h1m37 0h1m3 0h1m31 0h1m5 0h1M30 63h1m13 0h1m4 0h1m5 0h1m1 0h1m8 0h2m9 0h1m5 0h1m12 0h1M9 64h1m33 0h1m9 0h1m33 0h1m10 0h1M26 65h1m65 0h1M38 66h1m6 0h1m46 0h1M13 67h1m2 0h1m28 0h1m7 0h1m28 0h1M18 68h1m13 0h1m23 0h1m7 0h1M8 69h1m80 0h1M22 70h1m4 0h1m31 0h1m6 0h1m12 0h1M61 71h1m11 0h1m3 0h1m1 0h1m9 0h1M26 72h1m13 0h1M26 73h1m17 0h1m41 0h1m6 0h1M21 74h1M5 75h1m46 0h1m27 0h1m10 0h1M0 76h1m72 0h1m17 0h1m8 0h1M5 77h2m2 0h1m15 0h2m11 0h1m23 0h1m1 0h1m3 0h1m24 0h1M26 78h1M26 79h1m6 0h1m2 0h1M19 80h1m17 0h1m27 0h1m2 0h1m7 0h1m18 0h1M12 81h1m54 0h1m9 0h1m11 0h1M14 82h1m53 0h1m30 0h1" stroke="#270000"/><path d="M6 0h1m69 0h1m20 0h1M52 1h1m14 0h1M6 2h1m26 0h1m36 0h1m20 0h1M42 3h1m33 0h1m10 0h1m6 0h1m3 0h1M0 4h1m81 0h1M69 5h1M53 6h1m1 0h1m10 0h2m15 0h1M32 7h1m13 0h1m19 0h1m14 0h1m6 0h1M58 8h1m24 0h1m12 0h1M13 9h1m9 0h1m14 0h1m6 0h1m4 0h1m17 0h1M53 10h1m36 0h1M49 11h1m11 0h1m14 0h1m5 0h1m3 0h1M14 12h1m6 0h1m6 0h1m7 0h1m29 0h1m3 0h1m5 0h1m13 0h1M20 13h1m5 0h1M8 14h1m25 0h1m8 0h1m7 0h1m16 0h1m20 0h1M27 15h1m1 0h1m14 0h1m7 0h1m5 0h1m18 0h1m10 0h1M47 16h1m10 0h1m22 0h1M21 17h1m13 0h1m27 0h1m17 0h1m4 0h1m7 0h1M21 18h1m63 0h1m1 0h1M34 19h1m15 0h1m6 0h1M14 20h1m39 0h1m8 0h1m2 0h1m12 0h1m2 0h1M10 21h1m21 0h1m49 0h1M29 22h1m10 0h1m41 0h1m5 0h1M55 23h1m10 0h1M11 24h1m5 0h1m48 0h1m1 0h1M25 25h1m69 0h1m4 0h1M1 26h1m4 0h1m21 0h1m37 0h1M21 27h1m43 0h1M11 28h1m20 0h1m12 0h1m51 0h1M4 29h1m44 0h1m44 0h1M17 30h1m2 0h1m69 0h1M9 31h1m6 0h1m18 0h1m16 0h1m42 0h1M31 32h1m3 0h1m45 0h1M60 33h1m18 0h1M13 34h1m49 0h1m17 0h1M4 35h1m68 0h1m7 0h1m12 0h1M20 36h1m12 0h2m40 0h1M18 37h1m4 0h1m21 0h1m11 0h1m42 0h1M52 38h1M23 39h1m10 0h1m26 0h1M33 40h1M38 41h1m2 0h1m14 0h1m6 0h1m13 0h1M1 42h2m22 0h2m5 0h1m4 0h1m4 0h1m2 0h2m9 0h1m13 0h1m9 0h1m8 0h2m3 0h1M2 43h1m3 0h1m55 0h1m32 0h1M20 44h1m17 0h1m9 0h1m7 0h2m25 0h1M23 45h1m15 0h1m7 0h1m20 0h1m25 0h1M43 46h1m7 0h1m4 0h1m20 0h1m4 0h1M58 47h1m3 0h1m5 0h1m4 0h1m17 0h1M3 48h1m5 0h1m17 0h1m6 0h1m9 0h1m9 0h1m24 0h1M40 49h1m44 0h1m4 0h1M2 50h1m42 0h1M58 51h1m17 0h1M43 52h1m16 0h1m36 0h1M0 53h1m25 0h1m27 0h1m8 0h1m9 0h1m10 0h1m2 0h1m1 0h1m10 0h1M21 54h1m4 0h1m20 0h1m38 0h1m4 0h1M24 55h1m9 0h1m23 0h1M3 56h1m18 0h1m3 0h1m6 0h1m19 0h1m1 0h1m36 0h1m4 0h1M31 57h1m48 0h1m7 0h1M42 58h1m2 0h1m22 0h1M33 59h1m45 0h1m18 0h1M5 60h2m18 0h1m64 0h1M3 61h1m6 0h1m6 0h1m11 0h1m46 0h1m7 0h1M0 62h1m26 0h1m18 0h1m20 0h1m4 0h1m14 0h1M0 63h1m5 0h1m5 0h1m38 0h1m1 0h1m9 0h1m25 0h1m2 0h1M11 64h1m14 0h1m47 0h1m14 0h1M33 65h1m13 0h1m33 0h1m5 0h1m8 0h2M3 66h1m6 0h1m9 0h1m8 0h1m4 0h1m8 0h1m45 0h1m9 0h1M9 67h1m14 0h1m8 0h1m5 0h1m1 0h2M2 68h1m65 0h1m8 0h1M2 69h1m39 0h1m12 0h1m6 0h2m23 0h1M44 70h1m38 0h2M8 71h1m90 0h1M6 72h1m13 0h1m1 0h1m2 0h1m74 0h1M16 73h1m8 0h1M6 74h1m10 0h1m2 0h1m9 0h1m33 0h1m8 0h1M8 75h1m52 0h2m32 0h1M24 76h1m2 0h1m5 0h1m23 0h1m18 0h1m5 0h1m4 0h1M1 77h2m8 0h1m24 0h1M4 78h1m23 0h1m8 0h1m5 0h1m20 0h1m7 0h1M13 79h1m1 0h1m12 0h1m23 0h1m33 0h1m9 0h1M14 80h1m20 0h1m47 0h1M23 81h1m63 0h1m7 0h1M5 82h1m11 0h1m4 0h1m32 0h1m19 0h1m7 0h1m3 0h1m7 0h1" stroke="#740000"/><path d="M30 0h1m19 0h1m2 0h1m13 0h1m11 0h1m10 0h1M1 1h1m18 0h1m38 0h1m27 0h1M4 2h1m83 0h1M1 3h1m7 0h1m56 0h1m3 0h1m19 0h1M8 4h1m22 0h1m12 0h1m27 0h1m22 0h1M36 5h1m54 0h1M6 6h1m37 0h1m13 0h1m18 0h1M20 7h2m16 0h1m43 0h1M8 8h2m1 0h1m26 0h1M19 9h1m12 0h1m15 0h1m5 0h1m44 0h1M7 10h1m34 0h1m2 0h1m17 0h1M26 11h1m14 0h1m11 0h1m38 0h1M4 12h1m63 0h1M37 13h1m31 0h1M10 14h1m8 0h1m16 0h1m7 0h1m40 0h1M32 15h1m2 0h1m24 0h1m15 0h1M17 16h1m34 0h1m29 0h1m16 0h1M29 17h1m16 0h1m13 0h1m38 0h1M24 18h1m5 0h1m24 0h1m5 0h1m9 0h1M0 19h1m36 0h1m3 0h1m9 0h1M47 20h1m47 0h1M4 21h3m2 0h1m43 0h1M7 22h1m53 0h1M8 23h1m27 0h1m7 0h1m13 0h1M22 24h1m52 0h1m13 0h1M24 25h1m5 0h1m33 0h1M8 26h1m5 0h1m43 0h1m14 0h1M45 27h1m1 0h1m16 0h1m18 0h1m9 0h1m3 0h1M16 28h1m2 0h1m19 0h1M0 29h2m20 0h1m11 0h1m32 0h1M53 30h1m40 0h1m2 0h2M26 31h1m7 0h1m43 0h1m1 0h1m4 0h1M53 32h1m4 0h1m7 0h1m12 0h1M9 33h1m58 0h1m6 0h1m4 0h1M7 34h1m16 0h1m14 0h1m4 0h1M1 35h1m7 0h1m7 0h1m6 0h1m17 0h1m4 0h1m17 0h1m32 0h1m1 0h1M3 36h1m44 0h3m15 0h1m19 0h1M11 37h1m5 0h1m8 0h1m3 0h1m31 0h1m4 0h1m26 0h1M1 38h1m26 0h1m9 0h2m5 0h1m25 0h1M2 39h1m3 0h1m6 0h1m51 0h1m5 0h1m11 0h1M18 40h1m3 0h1m1 0h1m12 0h1m22 0h1m2 0h1m8 0h1m27 0h1M20 41h1m9 0h1m42 0h1m8 0h2m4 0h1M67 42h1M8 43h1m19 0h1m1 0h1m29 0h1m16 0h1m22 0h1M2 44h1m19 0h1M12 45h1m8 0h1m16 0h1m11 0h1m15 0h1m26 0h1m5 0h1M39 46h1M19 47h1m37 0h1m11 0h1m15 0h1m3 0h1M22 48h1m6 0h1M26 49h1m10 0h1m7 0h1m17 0h1m22 0h1M3 50h1m12 0h1m12 0h1m1 0h1m7 0h1m54 0h1M15 51h1m19 0h1m3 0h1m52 0h1m4 0h1M5 52h1m4 0h1m2 0h1m2 0h1m4 0h1m1 0h1m63 0h1M28 53h1m27 0h1M13 54h1m37 0h1M5 55h1m66 0h1M9 56h1m24 0h1m2 0h1m10 0h1m36 0h1M3 57h1m63 0h1M30 58h1m56 0h1M10 59h1m29 0h1m3 0h1m25 0h1m9 0h1m11 0h1M24 60h1m5 0h1m22 0h1m5 0h1m16 0h2M5 61h1m43 0h1m17 0h1m6 0h1m6 0h1m11 0h1M7 62h1m22 0h1m4 0h1m28 0h1m17 0h1M18 63h1m4 0h1m2 0h1m19 0h1m3 0h1m9 0h1m18 0h1M0 64h1m9 0h1m27 0h1m6 0h1m2 0h1m12 0h1m5 0h1m8 0h1M36 65h1m3 0h1m13 0h1m8 0h1m7 0h1m28 0h1M0 66h1m39 0h1m5 0h1m8 0h1m2 0h2m24 0h1m2 0h1m6 0h2M21 67h1m1 0h1m10 0h1m8 0h1m27 0h1m3 0h1m21 0h1m2 0h1M46 68h1m35 0h2M6 69h1m13 0h1m20 0h1m3 0h1m5 0h1m36 0h1M1 70h1m6 0h1m16 0h1m36 0h1m4 0h1m7 0h1M83 71h1m16 0h1M1 72h1m10 0h1m23 0h1m1 0h1m24 0h1m9 0h2M38 73h1m35 0h1m4 0h1M7 74h1m48 0h1m8 0h1M33 75h1m30 0h1M2 76h1m6 0h1m16 0h1m19 0h2m4 0h2m1 0h1m33 0h1M24 77h1m4 0h1m19 0h1m11 0h1M0 78h1m38 0h1m15 0h1m31 0h1M6 79h2m13 0h1m26 0h1m9 0h1m9 0h1M8 80h1m1 0h1m14 0h1m5 0h1m8 0h1m19 0h1m13 0h1m23 0h1M17 81h1m11 0h1m1 0h1m3 0h1m33 0h1m27 0h1m1 0h1M8 82h1m31 0h1m1 0h1m10 0h1" stroke="#c00000"/><path d="M44 0h1m13 0h1m14 0h1M70 1h1M31 2h1m17 0h1M0 3h1m19 0h1m78 0h1M19 4h1m40 0h2m1 0h1m14 0h1m2 0h1M10 5h1m8 0h1m5 0h1m26 0h1m23 0h1m15 0h1m1 0h1m2 0h1M62 6h1m11 0h1m12 0h1M5 7h1m79 0h2M31 8h1m21 0h1m5 0h1M40 9h1m12 0h1m8 0h1m7 0h1M3 10h1m9 0h1m12 0h1m66 0h1m6 0h1M10 11h1m2 0h1m33 0h1m18 0h1m14 0h1M16 12h1m2 0h1m66 0h1M16 13h2m4 0h1m7 0h1M1 14h1m10 0h1m11 0h1m23 0h1m1 0h1m12 0h1m32 0h1m3 0h1M2 15h1m15 0h1m27 0h1m26 0h1m9 0h1M31 16h1m23 0h1m41 0h1M11 17h1m19 0h2m3 0h1m12 0h1m40 0h1m5 0h1M6 18h1m57 0h1m15 0h1m1 0h1m5 0h1m9 0h1M33 19h1m43 0h1M8 20h1m53 0h1m34 0h1M69 21h1m4 0h1m13 0h1M31 22h1m7 0h1m37 0h1M29 23h1m17 0h1m31 0h1M3 24h1m10 0h1m31 0h1m2 0h1m20 0h1M13 25h1m23 0h1m19 0h1m32 0h1M22 26h1m3 0h1m3 0h1m65 0h1M5 27h1m12 0h1m25 0h1m12 0h1m9 0h1m11 0h1m15 0h1M63 28h1m4 0h1m25 0h1M32 29h1m48 0h1m1 0h1m3 0h1M37 30h1m36 0h1m4 0h1M32 31h1m30 0h1m18 0h1M63 32h1m4 0h1m4 0h1m1 0h1M8 33h1m57 0h1M10 34h1m18 0h1m26 0h2m24 0h1M14 35h1m1 0h1m12 0h1m15 0h1M23 36h1m57 0h1m14 0h1M2 37h1m6 0h2m32 0h1m16 0h1m13 0h1m6 0h1m8 0h1M0 38h1m33 0h1m37 0h1m15 0h2m10 0h1M17 39h1m41 0h1m19 0h1M13 40h1m12 0h1m57 0h1M42 41h1m6 0h1M12 42h1m37 0h1m42 0h1M1 43h1m11 0h1m11 0h1m11 0h1m11 0h1m3 0h1m3 0h1m8 0h1m26 0h1M4 44h1m19 0h1m4 0h1M16 45h1m46 0h1M28 46h1m5 0h1m27 0h1m12 0h1M37 47h1m4 0h1m16 0h1m16 0h1m6 0h1M19 48h1m65 0h1m11 0h1M41 49h1m17 0h1m18 0h1m3 0h1M28 50h1m21 0h1m4 0h1m10 0h1M3 51h1m7 0h1m11 0h1m9 0h1m10 0h1m33 0h1m15 0h1M6 52h1m48 0h1m14 0h1m4 0h1m9 0h1m7 0h1M4 53h1m62 0h1M7 54h1m17 0h1m54 0h1m12 0h1M0 55h1m78 0h1m15 0h1M11 56h1m4 0h1m24 0h1m30 0h1M64 57h1m30 0h1m2 0h1M51 58h1m6 0h1m8 0h1m3 0h1m18 0h1M25 59h2m41 0h1m8 0h1M48 60h1m14 0h1M16 61h1M15 62h1m73 0h1M11 63h1m4 0h1m3 0h1m14 0h1m16 0h1m34 0h1m2 0h1M4 64h1m2 0h1m21 0h1m6 0h1m15 0h1m7 0h1m4 0h1m7 0h1M7 65h1m9 0h1m1 0h1m7 0h1m66 0h1M5 66h1m22 0h1m7 0h1m54 0h1m5 0h1M7 67h1m44 0h1m2 0h1m21 0h1m1 0h1m14 0h1M24 68h1m38 0h1M24 69h1m1 0h1m2 0h1m13 0h1m48 0h1m3 0h1m3 0h1M39 70h1M1 71h1m4 0h1m3 0h1m6 0h1m4 0h1m3 0h1m20 0h1m10 0h1m22 0h1M30 72h1m4 0h1M11 73h2m18 0h1m32 0h1m17 0h1M8 74h1m30 0h1m19 0h1m1 0h1m1 0h1m3 0h1m14 0h1m17 0h1M0 75h1m62 0h1m1 0h1M36 76h1m1 0h1m2 0h1M3 77h1m18 0h1m11 0h1m9 0h1M3 78h1m31 0h1m63 0h1M55 79h1m3 0h1m3 0h1m13 0h1M78 80h1m5 0h1M21 81h1m11 0h1m27 0h1m28 0h1M27 82h1m68 0h1" stroke="#ff0d00"/><path d="M15 0h1m11 0h1m64 0h1M2 1h1m60 0h1m28 0h1M45 2h1m19 0h1m3 0h1m2 0h1M11 3h1m5 0h1m62 0h2M10 4h1m2 0h1m3 0h1m24 0h1m36 0h1M5 5h1m49 0h1m14 0h1M3 6h2m26 0h1m18 0h1m5 0h1m13 0h1m11 0h1m5 0h1M4 7h1m50 0h1m6 0h1m13 0h1m17 0h1m2 0h1M10 8h1m59 0h1m9 0h1m19 0h1M58 9h1M14 10h1m33 0h1m9 0h1M30 11h1m2 0h1M39 12h1m18 0h1m38 0h1M29 13h1m11 0h1m14 0h1m8 0h1M42 14h1m43 0h1M41 15h1m15 0h1M11 16h1m33 0h1m22 0h1m4 0h1M26 17h1m1 0h1m11 0h1m31 0h1m2 0h1M20 18h1m11 0h1m50 0h1M20 19h1M71 20h1m27 0h1M47 21h1m3 0h1M26 22h1m5 0h1m23 0h1m35 0h1M6 23h1m11 0h1m21 0h1m31 0h1m15 0h1m11 0h1M20 24h1m22 0h1m3 0h1m19 0h1m5 0h1m17 0h1M63 25h1m8 0h1M2 26h1m34 0h1m13 0h1m27 0h1m1 0h1M35 27h2m47 0h1M2 28h1m95 0h1M38 29h1m46 0h1M2 30h1m4 0h1m18 0h1m16 0h1m2 0h1m7 0h1M3 31h1m64 0h1m28 0h1M33 32h1m6 0h1m13 0h1m12 0h1M100 33h1M16 34h1m11 0h1m8 0h1m32 0h1m6 0h1m9 0h1m12 0h1M5 35h1m71 0h1M3 37h2m79 0h1M40 38h1m46 0h1M55 39h1m24 0h1m11 0h1M29 40h1m52 0h1m8 0h1m7 0h1M69 41h1M68 42h1m22 0h1M59 44h1m1 0h1m17 0h1M32 45h1m1 0h1m5 0h1M37 46h1m16 0h1m6 0h1m22 0h1m10 0h1M0 47h1m8 0h1m1 0h1m65 0h1m4 0h1m5 0h1M2 48h1m25 0h1m33 0h1m4 0h1m28 0h1M0 49h1m60 0h1m11 0h1M18 50h1M24 51h1m21 0h1m21 0h1m16 0h1M9 52h1m35 0h1m30 0h1m5 0h1M1 53h1M22 54h1m7 0h1m4 0h1m20 0h1m14 0h1m5 0h1M10 55h1m18 0h1m8 0h1m7 0h1M64 56h1M42 57h1m32 0h1m7 0h1m13 0h1M8 58h1m44 0h1m11 0h1m14 0h1m4 0h1m9 0h1m3 0h1M35 59h1M17 60h1m48 0h1m13 0h1m15 0h1M11 61h1m21 0h1m5 0h1m17 0h1m7 0h1m22 0h1M2 62h1m5 0h1m35 0h1m17 0h1m25 0h1M61 63h1m18 0h1M28 64h1m43 0h1m8 0h1M16 65h1M13 66h1m1 0h1m37 0h1m26 0h1M10 67h1m7 0h1m61 0h1m15 0h1M6 68h1m20 0h1m53 0h1m10 0h1M4 69h1m63 0h1M57 70h1M32 71h1m2 0h1m1 0h1m46 0h1m3 0h1M32 72h1m35 0h1M0 73h1m7 0h1m21 0h1m1 0h1m13 0h1m31 0h1m8 0h1m12 0h1M77 74h1M2 75h1m95 0h1M45 76h1m25 0h1M42 77h1m2 0h1m29 0h1m10 0h1M48 78h1m2 0h2m21 0h1m11 0h1m1 0h1M12 79h1m54 0h1m3 0h1M4 80h1m21 0h1m53 0h1M1 81h1m24 0h1m7 0h1m25 0h1m39 0h1M7 82h1m13 0h1m8 0h1m18 0h1m38 0h1" stroke="#ff5c00"/><path d="M56 1h1m18 0h1M3 3h1m44 0h1m7 0h1m22 0h1m9 0h1M39 4h1m24 0h1M38 5h1M46 6h1m28 0h1m15 0h1m4 0h2M18 7h1M48 8h1m14 0h1M26 9h1m46 0h1M29 10h1m3 0h1m53 0h1M6 11h1m21 0h1M1 12h1m15 0h1m12 0h1m38 0h1m29 0h1M4 13h1m77 0h1M64 14h1m14 0h1M42 15h1m31 0h1M1 16h1m4 0h1m72 0h1m7 0h1m1 0h1M7 17h1m25 0h1M77 18h1M23 19h1m38 0h1m3 0h1M0 20h1m3 0h1M19 21h1M19 22h1m17 0h1m7 0h1m6 0h1m27 0h1m5 0h1M2 23h1m25 0h1M55 24h1m22 0h2m12 0h1M14 25h1m5 0h1m1 0h1m57 0h1M13 26h1m5 0h1m27 0h1M23 28h1m22 0h1M11 29h1m9 0h1m1 0h1m13 0h1m33 0h1m26 0h1M76 30h1m14 0h1M6 31h1m13 0h1m18 0h1m53 0h1M71 32h1M61 33h1M67 34h1m30 0h1M56 35h1m27 0h1M76 36h1m12 0h1M64 37h1M31 38h1m15 0h1m29 0h1m6 0h2m5 0h1M2 40h1m32 0h1m4 0h1m36 0h1M61 41h1m28 0h1M11 42h1m5 0h1m70 0h1M43 43h1m28 0h1m16 0h1M1 44h1m39 0h1m5 0h1m24 0h1M4 45h1m44 0h1M0 46h1M7 48h1m24 0h1m13 0h1m47 0h1m3 0h1M23 49h1m5 0h1m18 0h1m20 0h1m1 0h1M63 50h1M31 51h1m29 0h1m10 0h1M1 52h1m12 0h1m23 0h1M25 53h1m25 0h1M1 54h1m4 0h1m8 0h2M33 55h1m40 0h1m1 0h1m7 0h1m11 0h1M14 56h1m71 0h1M5 57h1m6 0h1m3 0h1m70 0h1M13 58h1m79 0h1M19 59h1m18 0h1m16 0h1M8 60h1m33 0h1m32 0h1M9 61h1m9 0h1m34 0h2M74 62h1m6 0h1M37 63h1m9 0h1m52 0h1M6 64h1m23 0h1m39 0h1m28 0h1M23 65h1m15 0h1m46 0h1m4 0h1M79 66h1M70 67h1M9 68h1m70 0h1m4 0h1M39 69h1m34 0h1M12 70h2m36 0h1m35 0h1M14 71h1m8 0h1m20 0h1m51 0h1M21 72h1m15 0h1m10 0h1M17 73h1m22 0h1m2 0h1m37 0h1M15 74h1m58 0h1m13 0h1M17 76h1m52 0h1M12 77h1m63 0h1M18 78h1m51 0h1M46 79h1m25 0h1M3 80h1m47 0h1m19 0h1M3 81h1M34 82h1m1 0h1m21 0h1" stroke="#ffa800"/><path d="M26 0h1M11 1h1m25 0h1M11 2h1m26 0h1m58 0h1M15 4h1m51 0h1m22 0h1M65 5h1M47 6h1M17 7h1m12 0h1M55 8h1M98 9h1M0 10h1m11 0h1m4 0h1m4 0h1m41 0h1M23 11h1m7 0h1M27 12h1m53 0h1M61 13h1m32 0h1M41 14h1M17 15h1M62 16h1m8 0h1M41 17h1M29 18h1M86 19h1M90 20h1M24 21h1m31 0h1m9 0h1M66 22h1M87 23h1m11 0h1M26 24h1m49 0h1M0 25h1m6 0h1m39 0h1M17 26h1m71 0h1M60 27h1M15 28h1M68 29h1M49 30h1M99 31h1M1 32h1M17 33h1M31 34h1m11 0h1M72 35h1M50 38h1m14 0h1m14 0h1M73 39h1M11 40h1M44 41h1M13 42h1m7 0h1m13 0h1m17 0h1m4 0h1M0 43h1M16 44h1m26 0h1M67 46h1m15 0h1M3 47h1m27 0h1m29 0h1M91 48h1M52 49h1m47 0h1M10 50h1m25 0h1M8 51h1m5 0h1m6 0h1m15 0h1M53 52h1m8 0h1M98 53h1M39 54h1M17 55h1m21 0h1m52 0h1M15 56h1m14 0h1m25 0h1M72 57h1m20 0h2M29 58h1m14 0h1M8 59h1m58 0h1M86 60h1M22 61h1m19 0h1m35 0h1m13 0h1M72 63h1m26 0h1M1 64h1m90 0h2M64 66h1m4 0h1M69 67h1M0 68h1m36 0h1m16 0h1M23 69h1m57 0h1M74 70h1M48 71h1M27 72h2M51 73h1M33 74h1m17 0h1M68 75h1M1 76h1m72 0h1m5 0h1M1 79h1m6 0h1m29 0h1M27 80h1m28 0h1m5 0h1m1 0h1M45 81h1m5 0h1m2 0h1M72 82h1m4 0h1m19 0h2" stroke="#fff400"/><path d="M13 1h1M63 2h1M69 4h1m19 0h1m8 0h1M11 7h1m72 0h1M0 8h1m32 0h1m50 0h1M8 9h1m30 0h1M1 10h1m49 0h1m32 0h1M55 13h1m18 0h1m16 0h1M71 15h1M56 16h1M98 17h1M12 18h2M4 19h1m9 0h1m20 0h1M58 20h1M35 22h1m42 0h1m12 0h1M64 23h1m15 0h1M23 24h1M12 25h1m64 0h1M85 30h1m9 0h1M14 31h1m35 0h1m33 0h1m7 0h1M89 32h1M0 33h1m69 0h1M46 34h1m31 0h1M25 35h1m15 0h1m25 0h1M54 36h1m13 0h1M13 38h2m28 0h1m16 0h1M32 39h1M33 42h1m28 0h1m21 0h1M67 45h1m11 0h1M89 46h1M44 47h1M0 48h1m5 0h1M47 49h1m19 0h1M48 50h1M10 51h1m77 0h1M58 52h1M11 53h1m49 0h1M14 54h1m50 0h1M18 55h2m58 0h1M7 56h1m19 0h1m40 0h1M23 57h1m54 0h1M27 60h1M40 63h1M54 64h1m7 0h1M4 65h1M11 66h1m37 0h1m24 0h1m3 0h1M25 67h1m40 0h1M50 68h1M36 69h1m38 0h1M32 70h1m3 0h1m27 0h1M9 73h1M9 74h1m31 0h1m16 0h1M26 75h1m2 0h1M44 76h1M19 77h1M71 78h1M10 82h1m26 0h1" stroke="#ffff61"/><path d="M38 0h1M10 2h1m5 0h1m83 0h1M85 3h1M74 4h1M92 6h1M92 7h1M27 9h1M47 10h1M72 11h1M87 12h1M12 16h1M15 18h1M83 19h1M28 20h1M24 23h1M42 24h1M83 25h1M67 26h1m7 0h1M52 27h1m37 0h1M6 28h1M10 32h1m37 0h1M53 33h1M4 36h1M86 38h1M100 39h1M28 40h1M66 41h1M75 50h1M49 51h1M52 52h1M12 55h1M38 56h1m61 0h1M33 57h1M15 58h1M31 61h1M10 63h1M53 65h1M42 71h1m52 0h1M62 72h1M0 74h1M94 75h1M75 76h1M90 79h1M70 80h1M78 82h1" stroke="#ffffd4"/><path d="M71 30h1M27 51h1M41 65h1m42 0h1M74 67h1" stroke="#ffffff"/></g></pattern>
<pattern id="ovB" x="106" y="317" width="103" height="79" patternUnits="userSpaceOnUse"><g transform="translate(0 .5)" stroke-width="1" fill="none" shape-rendering="crispEdges"><path d="M4 0h1m11 0h1m22 0h1m4 0h1m34 0h1m22 0h1M100 1h1M8 2h1m39 0h1m35 0h1m2 0h1m5 0h2M4 3h1m11 0h1m3 0h1m5 0h1m4 0h1m27 0h1m27 0h1m13 0h1M19 4h1m14 0h1m24 0h1m2 0h1m21 0h2m9 0h1M9 5h1m19 0h1m6 0h1m19 0h1m14 0h1m28 0h1m1 0h1M2 6h1m5 0h1m8 0h1m18 0h1m22 0h1m27 0h1M9 7h1m1 0h1m4 0h1m3 0h1m11 0h1m39 0h1m27 0h1M22 8h1m34 0h1m7 0h1m1 0h1m5 0h1m8 0h1m1 0h1m1 0h1m2 0h1m7 0h1M1 9h1m9 0h1m15 0h1m12 0h1m61 0h1M2 10h1m12 0h1m2 0h1m7 0h1m1 0h1m10 0h1m3 0h1m25 0h1m6 0h1M12 11h1m26 0h1m42 0h1m3 0h1m11 0h2M6 12h1m12 0h1m2 0h1m1 0h1m20 0h1m17 0h1m2 0h1m23 0h1m8 0h1M9 13h1m6 0h1m28 0h1m4 0h1m30 0h1m8 0h1m1 0h1m1 0h1M6 14h1m73 0h1m9 0h1m8 0h1M2 15h1m31 0h2m6 0h1m11 0h1m1 0h1M4 16h1m29 0h1m16 0h1m31 0h1M20 17h1m7 0h1m1 0h1m16 0h1M15 18h1m2 0h1m33 0h1m20 0h1m16 0h2m9 0h1M23 19h1m41 0h1M7 20h1m22 0h1m7 0h1m8 0h1m1 0h1m7 0h1m2 0h1m4 0h1m31 0h1M6 21h1m3 0h1m8 0h1m8 0h1m9 0h1m25 0h1m26 0h1m10 0h1M23 22h1m23 0h3m6 0h1m7 0h1m11 0h1m6 0h2m2 0h1M7 23h1m15 0h1m9 0h1m19 0h1m12 0h1m6 0h1m11 0h1m1 0h1m3 0h1m7 0h1M2 24h1m20 0h1m11 0h1m4 0h1m18 0h1m10 0h1m1 0h1M14 25h1m44 0h1m7 0h1m5 0h2m14 0h1m11 0h1M1 26h1m34 0h2m3 0h1m17 0h1m1 0h1m13 0h1m9 0h1m4 0h1m6 0h1m4 0h1M2 27h1m36 0h1m5 0h1m2 0h1m8 0h1m11 0h1M6 28h1m50 0h1m34 0h1m1 0h1m5 0h1M4 29h1m21 0h1m8 0h1m5 0h1m19 0h1m4 0h1m19 0h1m6 0h1m4 0h1M8 30h1m7 0h1m8 0h1m13 0h1m3 0h1m1 0h1m9 0h1m22 0h1m4 0h1M4 31h1m15 0h2m5 0h1m3 0h1m8 0h1m4 0h1m8 0h1m1 0h1m5 0h1m2 0h1m21 0h1M17 32h1m4 0h1m5 0h1m14 0h1m7 0h1m9 0h1m8 0h1m30 0h1M28 33h1m7 0h1m21 0h1m3 0h2m27 0h1m10 0h1M56 34h1m8 0h1m1 0h1M89 35h1m8 0h1m1 0h1M0 36h1m6 0h1m2 0h1m24 0h1m20 0h1m5 0h1m26 0h1M0 37h1m60 0h1m3 0h1m23 0h1m9 0h1M8 38h1m3 0h2m14 0h1m10 0h1m6 0h1m6 0h1m6 0h1m13 0h1m19 0h1M29 39h1m11 0h1m16 0h1m1 0h1m3 0h1m1 0h1m5 0h1m20 0h1M20 40h1m10 0h1m26 0h1m15 0h1m26 0h1M17 41h1m6 0h1m45 0h1m20 0h1M1 42h1m16 0h1m1 0h1m5 0h1m34 0h1m3 0h1m20 0h1m2 0h1m2 0h1M21 43h1m34 0h1m16 0h1M35 44h1m12 0h1m7 0h1m33 0h1m9 0h1M2 45h1m5 0h1m9 0h1m34 0h1m10 0h1M14 46h1m20 0h1m15 0h1m40 0h1m5 0h1M4 47h1m2 0h1m21 0h2m2 0h1m3 0h1m5 0h1m25 0h1m8 0h1m1 0h1M13 48h1m12 0h1m8 0h1m20 0h1m2 0h1m20 0h1m16 0h2M7 49h3m12 0h1m11 0h1m19 0h1m4 0h1m26 0h1M10 50h1m1 0h1m8 0h1m1 0h1m17 0h1m16 0h1m30 0h1M25 51h1m37 0h1m14 0h1m2 0h1m18 0h1M32 52h1m1 0h1m14 0h1m7 0h2m4 0h1m4 0h1m1 0h1M9 53h1m59 0h1m8 0h1m7 0h1m6 0h1M5 54h2m39 0h1M0 55h1m17 0h1m52 0h1m6 0h3m4 0h1m8 0h1m7 0h1M7 56h1m10 0h1m29 0h1m19 0h1m11 0h1M14 57h1m14 0h1m9 0h1m25 0h1m10 0h1m12 0h1M2 58h1m3 0h1m13 0h1m10 0h1m6 0h1m26 0h1m13 0h1m2 0h1M5 59h1m3 0h1m1 0h1m3 0h1m5 0h1m4 0h1m30 0h2M3 60h1m11 0h1M30 61h1m71 0h1M0 62h1m12 0h1m10 0h1m2 0h1m27 0h1m38 0h1M22 63h1m53 0h1m8 0h1m10 0h1M9 64h1m26 0h1m31 0h1m3 0h1m8 0h1m4 0h1M2 65h1m11 0h1m28 0h1m10 0h1m16 0h1M4 66h2m17 0h1m14 0h1m4 0h1m23 0h1m15 0h1m10 0h1M6 67h1m6 0h1m7 0h1m4 0h1m10 0h1m16 0h1m32 0h1m1 0h1m6 0h1M0 68h1m16 0h1m1 0h1m4 0h1m9 0h1m4 0h1m6 0h1m11 0h1m1 0h1m5 0h2M25 69h1m3 0h1m7 0h1m6 0h1m9 0h1m16 0h1m3 0h1m7 0h2m12 0h1m1 0h1M11 70h1m10 0h1m1 0h1m39 0h1m5 0h1m18 0h1M0 71h1m12 0h1m4 0h1m52 0h1m4 0h1m15 0h1M62 72h2m6 0h1m25 0h1M17 73h2m8 0h1m13 0h1m23 0h2m6 0h1m22 0h1M9 74h1m2 0h1m4 0h2m1 0h1m12 0h1m10 0h1m6 0h1m3 0h1m9 0h1m1 0h2m7 0h2m13 0h1M7 75h1m22 0h1m1 0h1m43 0h2m6 0h1m16 0h1M9 76h1m3 0h1m11 0h1m18 0h1m2 0h1m9 0h1m11 0h1m7 0h1m11 0h1M16 77h1m41 0h1m3 0h1m8 0h1m23 0h1M1 78h1m38 0h1m22 0h1m3 0h1m26 0h1m3 0h1m3 0h1" stroke="#0b0000"/><path d="M10 0h1m14 0h1m23 0h1m5 0h1M13 1h1m15 0h1m12 0h1m35 0h1M66 2h1M41 3h1M49 4h1M7 5h1M82 6h1M6 7h1m12 0h1m38 0h1M27 8h1M3 9h1m97 0h1M53 10h1M36 11h2m11 0h1m18 0h1m15 0h1M20 12h1m18 0h1m62 0h1M52 13h1m8 0h1m12 0h1m11 0h1M0 14h1m2 0h1m13 0h1m4 0h1m13 0h1m28 0h1M65 15h1m7 0h1m26 0h1M15 16h1m24 0h1m33 0h1m24 0h1M76 17h1M29 18h1m19 0h1M54 19h1m25 0h1m16 0h1M52 23h1m40 0h1M32 24h1m13 0h1m14 0h1M92 25h1M55 26h1M1 27h1M63 28h1m35 0h1M14 29h1m47 0h1m9 0h2m11 0h1M18 30h1M94 31h1M32 32h1m22 0h1m7 0h1m5 0h1M71 34h1M1 35h1m2 0h1m17 0h1m2 0h2m3 0h1m19 0h1m3 0h1m10 0h1m12 0h1M14 36h1m7 0h1M12 37h1m2 0h1m22 0h1m7 0h1m34 0h1M78 38h1m6 0h1M26 39h1m9 0h1m31 0h1M70 40h1m24 0h1M31 41h1m6 0h1m15 0h1m7 0h1m10 0h1m2 0h1M3 42h1m29 0h2m32 0h1m27 0h1M42 43h1m10 0h1m7 0h1M23 45h1m53 0h1m17 0h1M68 46h1m1 0h1M16 47h1m42 0h1m13 0h1m7 0h1M3 48h1M63 49h1m4 0h1m2 0h1m12 0h1M29 51h1m26 0h1m39 0h1m1 0h1M86 52h2M28 53h1m8 0h1m5 0h1m39 0h1M28 54h1m66 0h1M20 55h1M53 56h1M90 57h1m6 0h1M69 58h1m24 0h1m1 0h1M33 59h1m1 0h1M10 60h1m19 0h1m17 0h1m20 0h1m14 0h1m17 0h1M45 61h1M40 62h1m10 0h1m7 0h1M33 63h1M79 64h1M27 65h1m16 0h1m4 0h1m20 0h1m9 0h1m7 0h1M25 66h1m14 0h1m1 0h1m1 0h1m11 0h1m5 0h1M5 67h1m85 0h1M8 68h1m41 0h1M81 69h1M4 70h1m53 0h1M10 71h1m71 0h1M0 72h1M69 73h1m11 0h1M13 75h1m4 0h1m23 0h1m29 0h1m7 0h1m14 0h1M24 76h1m7 0h1m19 0h1m14 0h1M17 77h1m29 0h1m26 0h1M38 78h1m38 0h1" stroke="#270000"/><path d="M13 0h1M4 1h1m33 0h1m5 0h1m3 0h1m31 0h1m13 0h1M0 2h1m19 0h1m23 0h1m20 0h1m5 0h1M27 3h1m29 0h1M37 4h2m24 0h1M39 5h1m5 0h1m23 0h1m6 0h1m8 0h2M25 6h1m19 0h1m19 0h1M75 7h1m10 0h1M29 8h1m2 0h1m31 0h1M33 10h1M16 11h1m37 0h1m2 0h1M0 12h1m35 0h1m27 0h1M72 13h1m11 0h1M4 14h1m30 0h1m4 0h1m35 0h1M17 15h1m27 0h1M1 16h1M39 17h1m3 0h1m7 0h1m26 0h1M97 18h1M7 19h1m94 0h1M27 20h1m11 0h1m34 0h1M0 21h1m4 0h1m65 0h1M54 22h1m6 0h1m28 0h1M62 23h1M0 24h1m14 0h1M8 25h1M11 26h1m1 0h1m30 0h1M13 28h1m6 0h1m16 0h1m1 0h1m50 0h1M17 29h1M100 30h1M28 31h1m23 0h1m4 0h1m5 0h1M36 32h1M13 33h1m3 0h2m15 0h1m6 0h1m17 0h1M91 34h1M19 35h1m26 0h1m15 0h2m13 0h1M64 36h1M23 37h1M15 38h1m2 0h1m82 0h1M7 39h1m54 0h1m12 0h1M30 40h1m13 0h1m9 0h1m16 0h1m19 0h1M27 41h1m41 0h1M4 42h1m27 0h1m9 0h2m33 0h1m3 0h1m9 0h1M34 43h1m15 0h1M19 44h1m59 0h1M86 45h1m9 0h1M55 46h1m17 0h1m21 0h1M56 47h1m13 0h1M12 48h1m45 0h1M3 49h1m20 0h1m4 0h1m17 0h1M5 50h1m69 0h1m14 0h2M15 52h1m6 0h1m16 0h1m19 0h1M12 53h1M3 54h1M49 56h1m38 0h1M17 57h1m25 0h1m11 0h1m8 0h1m21 0h1M52 58h1M24 59h2m11 0h1M47 60h1m11 0h1m19 0h1M6 61h1m33 0h1m1 0h1M4 62h1m26 0h1m45 0h1m15 0h1M29 64h1m52 0h1M79 65h1M6 66h1M17 67h1m6 0h1m47 0h1M82 68h1m16 0h1M10 69h1m3 0h1m5 0h1M85 70h1m6 0h1M16 71h1m2 0h2m9 0h1m31 0h1M84 72h1M64 73h1M96 74h1M21 75h1m5 0h1m5 0h1m4 0h1m7 0h1m36 0h1M22 76h1m53 0h1m20 0h1M49 77h1m25 0h1M86 78h1" stroke="#740000"/><path d="M20 0h1m1 0h1m23 0h1m25 0h1m27 0h1M70 1h1m15 0h1m15 0h1M40 2h1m38 0h1m20 0h1M7 3h1m7 0h1m70 0h1M16 5h1m15 0h1m11 0h1M21 6h1m72 0h1M46 7h1m14 0h1M10 9h1m23 0h1m1 0h1m8 0h1M31 10h1M26 11h1m11 0h1m51 0h1M8 13h1m34 0h1M19 14h1m12 0h2m47 0h1M11 15h1m1 0h1m76 0h1M19 16h1M9 17h1M47 18h1m47 0h1M12 19h1m31 0h1M23 20h1m16 0h1M50 21h1m24 0h1M5 22h1m63 0h1m2 0h1m13 0h1m4 0h1M64 23h1M76 24h1M15 25h1m1 0h1m46 0h1M81 26h1m13 0h1M30 27h1m7 0h1m2 0h1m9 0h1M2 28h1m7 0h1m31 0h1m24 0h1m6 0h1M63 30h1M6 31h1m57 0h1m2 0h1m15 0h1M48 32h1m3 0h1m36 0h1M20 33h1m47 0h1m5 0h1M3 34h1m5 0h1M15 36h1m3 0h1m8 0h1m3 0h1m40 0h1M62 37h1M49 38h1m11 0h1m26 0h1M12 39h1m36 0h1M17 40h1M10 41h2m3 0h1m18 0h1M4 43h1m65 0h1m6 0h1m3 0h1M33 44h1m55 0h1m4 0h1M44 45h1m10 0h1M2 47h1m42 0h1m3 0h1m17 0h1M69 48h1M17 49h2M71 50h1M13 51h1m10 0h1M35 54h1m9 0h1M53 55h1m15 0h1M93 56h1M33 58h1m2 0h1m7 0h1m44 0h1M31 59h1m54 0h1M28 60h1m33 0h1M7 61h1m60 0h1m31 0h1M102 62h1M74 63h1M48 64h1m12 0h1m15 0h1M56 65h1m8 0h1M0 66h1m45 0h1M48 67h1m1 0h1M33 68h1M2 69h1m52 0h1m26 0h1m5 0h1M101 70h1M17 71h1m35 0h1m2 0h1M19 72h1m26 0h1m6 0h1m27 0h1m9 0h1M11 73h1m2 0h1m24 0h1m13 0h1m1 0h1m19 0h1M41 74h1M3 76h1m11 0h1m4 0h1m27 0h1m42 0h1M39 77h1M16 78h1m66 0h1" stroke="#c00000"/><path d="M0 0h1m20 0h1m29 0h2m4 0h1m22 0h1M97 1h1M47 2h1M0 3h1m20 0h1m13 0h1m24 0h1M41 4h1m1 0h1m29 0h1M1 6h1m25 0h1m1 0h1M12 7h1m40 0h1m31 0h1M75 8h1M28 9h1m26 0h1M5 10h1m36 0h1m8 0h1m10 0h1m1 0h1m25 0h1M2 11h1M1 12h1M5 13h1m48 0h1m15 0h1M50 14h1m22 0h2M7 15h1m12 0h1m1 0h2m7 0h1m70 0h1M25 16h1m52 0h1m18 0h1M19 17h1m77 0h1m2 0h1M54 18h1m44 0h1M51 19h1m43 0h1m3 0h1M9 20h1M68 21h1m8 0h1M52 22h1M41 23h1M11 24h1m24 0h1M80 25h2M54 26h1m1 0h1m43 0h1M47 27h1m30 0h1M4 28h1m25 0h1m60 0h1M28 29h1m38 0h1M6 30h1m13 0h1m23 0h1m24 0h2M5 31h1m10 0h1m19 0h1M45 32h1m13 0h1m20 0h1m3 0h1m5 0h1M50 33h1m31 0h1M30 34h1m41 0h1M8 35h1m48 0h1m16 0h1m4 0h1m2 0h1m11 0h1M21 37h1m7 0h1m27 0h1m34 0h1M90 38h1M30 39h1M10 40h1m10 0h1m33 0h1m24 0h1M39 41h1m13 0h1m41 0h1M21 42h1m26 0h1m33 0h1m7 0h1M33 43h1M51 44h1M42 45h1m19 0h2m9 0h1M28 46h1m24 0h1m37 0h1m4 0h1M11 47h1m40 0h1m9 0h1m30 0h1M18 48h1m4 0h1m14 0h1M4 50h1m35 0h1m58 0h1M10 51h1M41 52h1m29 0h1M84 53h2M29 54h1m6 0h1m28 0h1m17 0h1m6 0h1M57 55h1m17 0h1m25 0h1M33 56h1m8 0h1m24 0h1m23 0h1M27 57h1m23 0h1m44 0h1M14 58h1m32 0h1m37 0h1m5 0h1M38 60h1m42 0h1M38 61h1m39 0h2m5 0h1M18 62h1m52 0h1M31 63h1m26 0h1m2 0h1M26 64h1m57 0h1m7 0h1m4 0h1M59 66h1m6 0h1m25 0h1M23 67h1M23 68h1m18 0h1m16 0h1M13 69h1m14 0h1m65 0h1M0 70h2M2 72h1m1 0h1M50 73h2m11 0h1M14 74h1m38 0h1m21 0h1M0 75h1m33 0h1m57 0h1M1 76h1m43 0h1m8 0h1M70 77h1M59 78h1m33 0h1" stroke="#ff0d00"/><path d="M53 0h1m38 0h1M23 1h1m31 0h1M27 2h1m27 0h1m45 0h1M70 3h1M11 4h1m1 0h1m26 0h1m52 0h1M10 5h1m9 0h1m5 0h1m56 0h1m14 0h1M76 6h1m2 0h1M29 7h1m7 0h1M26 8h1M72 9h1M74 10h1m22 0h1M3 11h1m41 0h1m2 0h1M14 14h1m15 0h1M5 15h1m33 0h1M7 16h1m50 0h1m29 0h1M88 17h1m6 0h1M19 18h1m36 0h1m20 0h1m7 0h1m1 0h1M5 20h1m63 0h1M35 21h1m4 0h1m12 0h1m19 0h1m6 0h1m16 0h1M0 22h1m29 0h1M13 23h1m2 0h1m20 0h1m2 0h1M34 24h1M87 25h1M49 26h1M50 28h1m3 0h1m26 0h1M1 29h1m49 0h1m22 0h1m20 0h1M89 30h1m3 0h2M13 31h1M3 33h1m22 0h1m17 0h1m12 0h1m21 0h1m5 0h1M49 34h1m26 0h1M16 35h1m14 0h1m51 0h2m3 0h1M1 36h1m16 0h1m19 0h1m62 0h1M43 37h1m41 0h1m4 0h1M93 38h1M13 40h1m54 0h1M28 41h2m6 0h1m29 0h1m13 0h1m5 0h1m5 0h1M35 42h2m3 0h1m10 0h1M6 44h1m13 0h1m21 0h1m15 0h1M41 45h1M43 46h1m49 0h1M15 47h1m39 0h1M21 52h1m43 0h1M18 53h1m3 0h1m77 0h1M9 54h1m2 0h1m19 0h1m10 0h1M17 55h1m31 0h1M102 56h1M44 57h1m25 0h1M51 59h1m7 0h1m25 0h1m2 0h1M0 60h1m69 0h1M19 61h1m13 0h1m27 0h1M21 62h1m52 0h1M52 63h1m46 0h1M2 64h1m19 0h2m10 0h1m9 0h1m22 0h1m32 0h1M74 65h1M14 68h1m5 0h1M9 69h1M7 70h1m64 0h1m25 0h1M28 71h1M39 72h1M54 75h1m24 0h1M8 76h1M43 77h1M5 78h1m5 0h1m14 0h1m3 0h1m58 0h1" stroke="#ff5c00"/><path d="M34 0h1m5 0h1M18 1h1m20 0h1m47 0h1M76 3h1M22 4h1M33 5h1m33 0h1M13 6h1m26 0h1m11 0h1M88 7h1M13 8h1m19 0h1M50 9h1m6 0h1M11 10h1M69 11h1M58 12h1M88 13h1M18 15h1M8 18h1m72 0h1M6 20h1m38 0h1m13 0h1M22 21h1m35 0h1M81 23h1M64 24h1m3 0h1M35 26h1m34 0h1m7 0h1m10 0h1M28 27h1m46 0h1m3 0h1m2 0h1M29 28h1m35 0h1M51 30h1m20 0h1M24 31h1M21 32h1m35 0h2M55 33h1m15 0h1M91 35h1M13 36h1m54 0h1m11 0h1M26 37h1m53 0h1M1 38h1m29 0h1M50 40h1m13 0h1m21 0h1M63 41h1m17 0h1m2 0h1M25 42h1M51 43h1M41 44h1m19 0h1m24 0h1M28 45h1m58 0h1M40 46h1m34 0h1m6 0h2M6 48h1m66 0h1m18 0h1M1 50h1M84 51h1M1 52h1m33 0h1m28 0h1m16 0h1M29 53h1m38 0h1m18 0h1M60 54h1m38 0h1M10 55h1m2 0h1m17 0h1M69 56h1M75 57h1m12 0h1M29 58h1m16 0h1M3 59h1m19 0h1m8 0h1M37 61h1M8 62h1m17 0h1m3 0h1M23 63h1m11 0h1m50 0h1m8 0h1m4 0h1M28 64h1M20 66h1m3 0h1m23 0h1M26 68h1M37 70h1m4 0h1m54 0h1M24 71h1m44 0h1m9 0h1M6 72h1m8 0h1m86 0h1M92 73h1M35 75h1M22 77h1m65 0h1m7 0h1M8 78h1m33 0h1m11 0h1" stroke="#ffa800"/><path d="M98 0h1m2 0h1M69 1h1m1 0h1M91 2h1M100 3h1M53 4h1M75 6h1M53 8h1M52 10h1M33 12h1m59 0h1M36 13h1M1 15h1m17 0h1m33 0h1m1 0h1m16 0h1M82 16h1M11 18h1M8 19h1M32 21h1m56 0h1M16 22h1m51 0h1m30 0h1M30 23h1m12 0h1M49 24h1M44 25h1M102 27h1M40 29h1m39 0h1m18 0h1M7 31h1m30 0h2m4 0h1m47 0h1M8 32h1m9 0h1M0 34h1m45 0h1m27 0h1M11 35h1m74 0h1m10 0h1m1 0h1M24 37h1M66 38h1m20 0h1M32 39h1M21 41h1M50 44h1M85 47h1M37 48h1m56 0h1M44 50h1M23 51h1M15 54h1m71 0h1M22 55h1m65 0h1M101 56h1M13 57h1m53 0h1M55 58h1m28 0h1M52 59h1M18 60h1m10 0h1m38 0h1M78 62h1M48 63h1m31 0h1M10 64h1m46 0h1M41 65h1M14 67h1M45 68h1m27 0h1M16 69h1M66 70h1M40 71h1M84 73h1M47 74h1m14 0h1M11 76h1m70 0h1M80 78h1" stroke="#fff400"/><path d="M21 1h1m43 0h1M37 2h1M98 3h1M79 4h1M54 5h1M5 6h1m84 0h1M86 9h1M54 10h1M40 12h1m33 0h1M65 13h1M64 16h1m12 0h1M37 19h1m15 0h1m6 0h1M77 26h1M25 27h1M78 29h1M37 32h1M80 33h1M6 35h1m68 0h1M81 36h1M59 37h1m37 0h1M29 38h1m61 0h1M60 40h1M59 42h1M13 44h1m50 0h1M45 45h1M28 47h1m53 0h1M72 48h1M5 49h1m8 0h1M10 53h1m19 0h1M11 54h1M34 55h1M6 57h1m52 0h1M92 58h1M71 61h1M9 62h1M9 63h1m91 0h1M18 64h1M45 65h1M51 66h1M25 67h1m3 0h1m23 0h1M38 68h1M90 69h1M93 70h1M12 71h1m1 0h1m60 0h1M25 74h1M51 76h1M7 77h1M65 78h1" stroke="#ffff61"/><path d="M68 0h1m25 0h1M2 2h1M56 3h1m20 0h1M102 7h1M73 10h1M33 13h1M82 15h1M66 16h1M94 22h1M35 28h1M63 34h1M9 36h1M45 43h1M76 44h1M19 48h1M34 50h1m32 0h1m9 0h1M13 52h1m46 0h1m21 0h1M8 53h1M30 57h1M74 58h1M27 60h1m63 0h1M16 61h1M31 66h1M44 67h1m21 0h1M72 68h1M23 69h1M28 72h1M87 75h1m2 0h1" stroke="#ffffd4"/><path d="M43 2h1M95 5h1M19 46h1M65 66h1M80 68h1M1 71h1M35 72h1" stroke="#ffffff"/></g></pattern>
<pattern id="ovC" x="106" y="317" width="107" height="73" patternUnits="userSpaceOnUse"><g transform="translate(0 .5)" stroke-width="1" fill="none" shape-rendering="crispEdges"><path d="M11 3h1M92 23h1M0 41h1M38 56h1M12 60h1" stroke="#0b0000"/><path d="M38 7h1M14 10h1M57 11h1m32 0h1M54 12h1M63 13h1M7 16h1M15 18h1m72 0h1M97 19h1M37 35h1M15 42h1m61 0h1M79 43h1M19 44h1m3 0h1m58 0h1M92 45h1M95 46h1M73 48h1m6 0h1M5 49h1M9 50h1M8 51h1m56 0h1M8 56h1m90 0h1M103 60h1M1 61h1M17 64h1M40 65h1M33 68h1M43 69h1M91 71h1" stroke="#270000"/><path d="M37 0h1m7 0h1M2 2h1M40 4h1M65 5h1m38 0h1M51 6h1m1 0h1M61 9h1m38 0h1M80 10h1m21 0h1M28 11h1M66 12h1m19 0h1M99 13h1m4 0h1M6 16h1M20 20h1M64 23h1M38 24h1M36 28h1M30 30h1M51 32h1M5 34h1m31 0h1m15 0h1m3 0h1m12 0h1M33 35h1M57 38h1M81 39h1M3 43h1m30 0h1M46 44h1M34 48h1M46 53h1m38 0h1M2 54h1m11 0h1m26 0h1M91 56h1M62 57h1M26 58h1M23 59h1M68 60h1m25 0h1M11 62h1M79 63h1M5 67h1M15 70h1m76 0h1" stroke="#740000"/><path d="M40 0h1M43 1h1M58 2h1m45 0h1M9 4h1M18 5h1M58 7h1M30 10h1m2 0h1M10 11h1M51 12h1M41 13h1m49 0h1M63 14h2M28 15h1m54 0h1M26 16h1M44 17h1M55 21h1M3 22h1m12 0h1M3 23h1M22 26h1M4 27h1M86 28h1M22 29h1m39 0h1M46 30h1m12 0h1m18 0h1M75 31h1M4 32h1m43 0h1M14 33h1M6 34h1m28 0h1m32 0h1M21 37h1m18 0h1M24 39h1M46 41h1M22 42h1M2 43h1m1 0h1M55 46h1M52 48h1M102 49h1M14 51h1m44 0h1m1 0h1m41 0h1M21 54h1M65 60h1M95 65h1M69 67h1M36 71h1m45 0h1m6 0h1M24 72h1" stroke="#c00000"/><path d="M44 0h1m12 0h1M84 2h1M43 3h1M49 4h1M17 5h1M44 6h1M19 7h1m62 0h1M27 8h1M62 9h1m5 0h1m27 0h1m6 0h1M90 10h1M35 14h1M0 15h1M28 16h1m40 0h1m15 0h1M7 18h1M38 19h1m2 0h1M63 20h1M5 21h1m83 0h2M22 22h1m2 0h1M66 23h1M51 24h1M5 25h1m45 0h1M24 27h1m54 0h1M12 28h1M28 29h1m7 0h1m2 0h1M31 30h1M7 31h1M38 32h1M5 33h1m42 0h1m5 0h1m12 0h1m34 0h1M75 35h1m13 0h1M25 36h1m29 0h1M44 37h1M13 38h1m15 0h1m24 0h1m5 0h1m2 0h1M20 40h1M5 41h1M18 44h1M54 46h1m30 0h1m2 0h1m17 0h1M28 47h1m3 0h1M57 48h1m47 0h1M65 49h1M13 51h1m8 0h1M44 52h1M9 53h1m3 0h1m36 0h1m6 0h1M25 54h1m29 0h1M68 55h1M12 57h1m15 0h1M47 58h1m3 0h1m1 0h1m3 0h1M1 59h1m4 0h1m71 0h1m11 0h1M45 60h1m5 0h1m17 0h1M43 61h1m3 0h1M12 62h1m88 0h1M54 63h1M23 64h1m40 0h1M15 65h1m30 0h1m41 0h1M0 66h1m36 0h1m29 0h1M4 67h1m68 0h1M28 69h1m16 0h1M97 70h1M31 71h1" stroke="#ff0d00"/><path d="M12 0h1m42 0h1m8 0h1M65 1h1M63 3h1m2 0h1M37 4h1m12 0h1m17 0h1m5 0h1m9 0h1M14 5h1m44 0h1M40 6h1m8 0h1m26 0h1M45 7h1m13 0h1M35 8h1m66 0h1M42 9h1m6 0h1m34 0h1M2 12h1m76 0h1M38 13h1m15 0h1m39 0h1M82 14h1m20 0h1M7 15h1m64 0h1m22 0h1m10 0h1M9 16h1m70 0h1M77 17h1m10 0h1M35 18h1M76 19h1M92 20h1M3 21h1m23 0h1M21 22h1m56 0h1m22 0h1M30 23h1m19 0h1m9 0h1M0 24h1m67 0h1m18 0h1M77 25h1m18 0h1M5 26h1m9 0h1m13 0h1m18 0h1M20 27h1m2 0h1m39 0h1M16 28h1m48 0h1M14 29h1m62 0h1m14 0h1M56 30h1m8 0h1M30 31h1m36 0h1M23 32h1m64 0h1M1 34h1M26 36h1m63 0h1M33 37h1m5 0h1M26 38h1m70 0h1M7 39h1m44 0h1m11 0h1m9 0h1M5 45h1m50 0h1m18 0h1M27 46h1m3 0h1M38 48h1m3 0h1M50 49h1M2 50h1m2 0h1m78 0h1M32 51h1M0 53h1M15 54h1m18 0h1m63 0h1M48 55h1m22 0h1m20 0h1M77 56h1m9 0h1M30 57h1M30 58h1m50 0h1m1 0h1M21 59h1m74 0h1M6 60h1M58 61h1M10 62h1m24 0h1m38 0h1M84 63h1m6 0h1M65 64h1m14 0h1M16 65h1m8 0h1M60 67h1m3 0h1M55 68h1M81 69h1m5 0h1M23 70h1m10 0h1m43 0h1m15 0h1m3 0h1m2 0h1M34 71h1m44 0h1m10 0h1M11 72h1" stroke="#ff5c00"/><path d="M70 0h1m20 0h1m14 0h1M22 1h1m54 0h1M74 3h1M7 5h1m7 0h1m67 0h2M12 7h1m12 0h1m21 0h1M73 8h1m2 0h2M18 9h1m37 0h1m12 0h1M101 10h1M19 12h1m24 0h1m29 0h1m2 0h1m15 0h1M44 13h1M106 14h1M6 15h1m70 0h1M66 16h1M57 17h1M22 18h1m58 0h2m14 0h1M62 19h1m21 0h1m8 0h1M103 20h1M14 21h1m1 0h1M0 22h1m8 0h1m17 0h1m48 0h1M88 23h1M4 24h1m11 0h2m42 0h1m11 0h1M7 25h1m41 0h1M9 26h1m54 0h1m7 0h1m12 0h1M62 27h1m12 0h1M57 29h1M67 30h1M63 31h1m8 0h1m21 0h1M44 32h1m35 0h1m5 0h1m10 0h1M61 33h1M61 34h1M9 35h1m29 0h1M59 36h1m31 0h1M74 37h1m23 0h2M69 38h1m11 0h1M79 40h1M20 42h1M7 43h1m29 0h1M11 44h1m10 0h1M27 45h1m1 0h1m5 0h1m36 0h1m16 0h1M43 46h1m23 0h1M9 47h1m37 0h1m52 0h1m4 0h1M22 48h1m48 0h1m31 0h1M15 49h1m45 0h1M25 50h1m13 0h1m28 0h1M45 52h1m9 0h1m3 0h1m9 0h1m28 0h1M82 53h1M5 54h1m22 0h1m2 0h1m72 0h1M79 55h1M59 56h1m1 0h1m9 0h1M14 57h1m3 0h1m18 0h1m5 0h1m11 0h1m35 0h1M19 58h1m83 0h1M30 59h1m10 0h1m26 0h1m12 0h1M1 60h1m5 0h1m46 0h1m3 0h1m23 0h1M66 61h1m17 0h1m18 0h2M94 62h1M24 63h1m7 0h1M83 64h1M75 65h1m11 0h1m9 0h1M27 66h1M106 67h1M77 68h1M79 69h1m2 0h1M45 70h1M7 71h1M87 72h1m5 0h1" stroke="#ffa800"/><path d="M42 0h1m30 0h1m19 0h1M35 1h1m68 0h1M40 2h1M89 3h1M15 4h2m39 0h1m3 0h1m16 0h1m25 0h1M10 5h1m22 0h1m23 0h1M70 6h1m24 0h1M72 8h1M9 9h1m1 0h1m78 0h1M22 10h1m19 0h1m53 0h1M20 12h1m55 0h1M8 13h1M21 14h1m70 0h1m8 0h1M14 15h1m7 0h1m65 0h1M64 16h1m5 0h1M9 17h1m27 0h1m20 0h1m31 0h1m6 0h1M11 19h1M70 20h1m2 0h1M39 21h1m25 0h1M43 22h2M4 23h1m8 0h1m32 0h1m1 0h1m22 0h1m10 0h1M43 24h1M42 25h1m7 0h1m6 0h1M50 26h1m45 0h1M32 27h1m4 0h1m23 0h1M51 29h1m15 0h1M22 30h1M10 31h1m38 0h1m30 0h1m19 0h1m3 0h1M19 33h1m44 0h1M39 34h1m50 0h1m12 0h1m2 0h1M50 36h2M90 37h1M3 38h1M56 39h1m12 0h1M51 40h1m30 0h1M44 41h1m30 0h1M2 42h1m37 0h1m16 0h1M86 43h1M3 44h1m33 0h1M23 45h1m23 0h1m25 0h1M76 46h1M77 47h1m1 0h1M93 48h1M74 49h1M10 50h1m9 0h1m26 0h1m14 0h1m43 0h1M94 51h1m11 0h1M10 52h1m3 0h2m3 0h1m1 0h1m84 0h1M19 53h1m67 0h1m15 0h1M7 54h1m24 0h1M70 55h1m5 0h1M58 56h1M65 58h1m14 0h1m15 0h1M5 59h1m31 0h1m41 0h1m7 0h1M14 60h1m8 0h1M41 61h1M73 62h1M14 63h1m15 0h1m16 0h1M1 64h1m32 0h1m7 0h1M13 65h1m46 0h1M4 66h1m27 0h1m9 0h1m7 0h2m5 0h1M91 67h1m13 0h1M23 68h1m51 0h2m29 0h1M3 69h1m52 0h1m41 0h1M29 70h1m6 0h1M45 71h1M98 72h1" stroke="#fff400"/><path d="M24 0h1m71 0h1M61 1h1m2 0h1M46 2h1m6 0h1m16 0h1M0 3h1m20 0h2M8 4h1m43 0h1M13 5h1m75 0h1M33 6h1m58 0h1M33 7h1m27 0h1M15 8h1m32 0h1m30 0h1m13 0h1M15 9h2m11 0h1m12 0h1M52 11h1M14 12h1m23 0h1m67 0h1M2 14h1m83 0h1M74 15h1M5 16h1m40 0h1m7 0h1m5 0h1M8 17h1m12 0h1M24 18h1m39 0h1m15 0h1m13 0h1m3 0h1M8 19h1m19 0h1m10 0h1m2 0h1m57 0h1M15 20h1m12 0h1m1 0h1m20 0h1m45 0h1M62 21h1M6 23h1m62 0h1m5 0h1m25 0h1M32 25h1m64 0h1M7 26h1m86 0h2M17 27h1m33 0h2M75 28h1M76 29h1M33 30h1M74 31h1m23 0h2M89 33h1M86 34h1M90 35h1M43 36h1m21 0h1m4 0h1m26 0h1M95 37h1M50 39h1m48 0h1M101 40h1M51 41h1M69 42h1M19 43h1m30 0h1m27 0h1M43 45h1m32 0h1m20 0h1M21 46h1m24 0h1m17 0h1M20 47h1m35 0h1M1 48h1m28 0h1m51 0h1m15 0h1M28 49h1m6 0h1m6 0h1m26 0h1M47 51h1m12 0h1m34 0h1M0 52h1m92 0h1M24 53h1M93 54h1M75 55h1M18 56h1m38 0h1m37 0h1M11 57h1m56 0h1M22 58h1m4 0h1m62 0h1m15 0h1M19 59h1M93 60h1m6 0h1m5 0h1M17 61h1m32 0h1m24 0h1m9 0h1M79 62h1m6 0h1M4 63h1m67 0h1m3 0h1M12 65h1m26 0h1m29 0h1M2 66h1m61 0h1M13 70h1m28 0h1m38 0h1m22 0h1M26 71h1m61 0h1" stroke="#ffff61"/><path d="M103 0h1M12 1h1m25 0h1M23 2h1m12 0h1m19 0h1m2 0h1M10 3h1m34 0h1m23 0h1m11 0h1M19 4h1m49 0h1m5 0h1M24 5h1m14 0h1M1 7h1m3 0h1m58 0h1m36 0h1M13 8h1M45 9h1m46 0h1M41 10h1m47 0h1M54 11h1M6 12h1m78 0h1M78 13h1M38 14h1M38 16h1m17 0h1M7 17h1m19 0h1M102 18h1M102 19h1M85 20h1m16 0h1M25 21h1m14 0h1m28 0h1M5 22h1m31 0h1M7 23h1m29 0h1M12 24h1m48 0h1m37 0h1M14 25h1M54 27h1M35 28h1m57 0h1M7 30h1m10 0h1m10 0h1M20 31h1M74 32h1m31 0h1M17 33h1M26 34h1m4 0h1m63 0h1M46 35h1m41 0h1M3 36h1m76 0h1M15 37h1m40 0h1M20 38h1M61 39h1m34 0h1M48 40h1M63 41h1m13 0h1m16 0h1M85 42h1M17 43h1M59 44h2m16 0h1m20 0h1M19 45h1m12 0h1m4 0h1m6 0h1m4 0h1m46 0h1M30 46h1m19 0h1m29 0h2M34 47h1m41 0h1m19 0h1M95 48h1M41 49h1m17 0h1M18 50h1m2 0h1m65 0h2m4 0h1M40 52h1M86 54h1M37 55h1m3 0h1M78 56h1M24 58h1m13 0h1m65 0h1M36 59h1M28 60h1m63 0h1M78 61h1M57 62h1M78 63h1m25 0h1M8 65h1m56 0h1M72 66h1M81 67h1m11 0h1M47 68h1M4 69h1m14 0h1m20 0h1m10 0h1m5 0h1M26 70h1m75 0h1M80 72h1" stroke="#ffffd4"/><path d="M11 0h1m17 0h1m4 0h1m54 0h1m4 0h1m7 0h1m2 0h1M5 1h1m14 0h1m26 0h1M19 2h1m18 0h1m2 0h1m27 0h1m5 0h1m7 0h1m10 0h1m10 0h1M20 3h1m36 0h1m28 0h1m18 0h2M23 4h1m7 0h1m3 0h1m54 0h1M40 5h1m1 0h1m9 0h1m16 0h1m26 0h1M20 6h1m14 0h1m3 0h1m23 0h1m39 0h2M7 7h1m24 0h1m15 0h1M40 8h1m24 0h1m20 0h1M34 9h1M24 10h1m19 0h2m13 0h1m5 0h1m4 0h1m34 0h1M4 11h1m26 0h1m7 0h1m19 0h1m12 0h1m18 0h1M37 12h1m11 0h1m5 0h1m3 0h3m25 0h1m6 0h1m1 0h1M14 13h1m9 0h1m5 0h1m48 0h1M1 14h1m5 0h1m18 0h1m4 0h1m42 0h1m5 0h1m12 0h1M30 15h1m61 0h1m11 0h1M25 16h1m16 0h1m1 0h1m8 0h1m7 0h1m9 0h1m3 0h1m6 0h2m8 0h1m2 0h2m6 0h1M4 17h1m36 0h1m10 0h1m15 0h1m6 0h1m23 0h1M50 18h1m34 0h1M56 19h1m8 0h1m22 0h1m1 0h1M32 20h1m2 0h1m16 0h1m18 0h1M20 21h1m36 0h1m27 0h1m7 0h1M10 22h1m4 0h1m17 0h1m1 0h1m35 0h1m18 0h2m2 0h1m11 0h1M9 23h1m1 0h1m15 0h1m7 0h1m17 0h1M1 24h1m5 0h1m40 0h1m8 0h1m1 0h1m2 0h1M22 25h1m29 0h1m13 0h1m6 0h1m8 0h1m5 0h1m12 0h1m1 0h1M1 26h1m57 0h1m6 0h1m19 0h1M6 27h1m63 0h1m32 0h1M5 28h1m16 0h1m3 0h1m17 0h1m3 0h1m10 0h1m17 0h2m24 0h1M38 29h1m6 0h1m56 0h1M20 30h1m11 0h1m9 0h1m6 0h1m33 0h1m7 0h1M8 31h1m14 0h1m3 0h1m50 0h1m7 0h1M41 32h1m3 0h1m16 0h1m16 0h1M26 33h1m33 0h1m20 0h1m5 0h1m13 0h1M22 34h1m5 0h1m13 0h1m21 0h1m40 0h1M1 35h1m6 0h1m9 0h1m1 0h1m2 0h1m21 0h1m31 0h1m2 0h1m23 0h1M7 36h1m6 0h1m14 0h1m1 0h1m21 0h1m15 0h1m2 0h1m15 0h1m7 0h1m8 0h1M10 37h1m11 0h1m39 0h1m5 0h1m34 0h1M15 38h1m2 0h1m23 0h1m12 0h1m19 0h1m1 0h1M5 39h1m13 0h1m6 0h1m32 0h1m11 0h1m32 0h1M5 40h1m19 0h1m18 0h1m8 0h1m15 0h1m15 0h1m1 0h1m7 0h1m9 0h1M10 41h1m15 0h1m13 0h2m6 0h1m8 0h1m33 0h1m9 0h1M8 42h1m12 0h1m22 0h1m5 0h1m17 0h1M10 43h1m36 0h1m4 0h1m5 0h1m5 0h1m6 0h1m15 0h1m9 0h1M2 44h1m23 0h1m16 0h1m11 0h1m8 0h1m15 0h1m5 0h1m6 0h1M10 45h1m20 0h1m4 0h1m43 0h1m7 0h1M10 46h1m4 0h1m76 0h1M6 47h1m15 0h1m1 0h1m61 0h1M5 48h1m5 0h1m27 0h1m9 0h1m10 0h1M4 49h1m26 0h1m6 0h1m5 0h2m3 0h1m26 0h1m19 0h1M24 50h1m33 0h1m6 0h1m32 0h2M17 51h1m26 0h1m37 0h1M8 52h1m11 0h1m14 0h1m5 0h1m7 0h1m8 0h1m15 0h1m2 0h1m24 0h1M34 53h1m5 0h1m2 0h1m26 0h1m1 0h1m3 0h1m11 0h1m10 0h1M6 54h1m12 0h1m34 0h1m4 0h1m8 0h1M7 55h1m21 0h1m19 0h1m8 0h1m42 0h1M7 56h1m1 0h1m38 0h1m27 0h1m15 0h1M44 57h1m41 0h1M1 58h1m4 0h1m1 0h1m2 0h1m49 0h1m7 0h1m15 0h1M28 59h1m4 0h1m18 0h1M8 60h1m7 0h1m1 0h1m20 0h1m20 0h1m16 0h1M21 61h1m12 0h1m13 0h1m3 0h2m7 0h1m17 0h1m12 0h1m3 0h1M16 62h1m14 0h1m27 0h1m18 0h1m6 0h1M36 63h1m4 0h1m17 0h1m13 0h1m14 0h1M6 64h1m8 0h1m2 0h1m8 0h1m12 0h1m56 0h1m7 0h1M5 65h1m3 0h2m31 0h1m2 0h1m38 0h1m14 0h1m2 0h1m1 0h1M5 66h2m1 0h1m45 0h2m24 0h1M6 67h1m39 0h1m3 0h1m11 0h1m35 0h1M2 68h3m7 0h1m7 0h2m3 0h1m10 0h1m4 0h2m28 0h1m2 0h1m11 0h1m16 0h1M32 69h1m56 0h1m5 0h3M40 70h1m12 0h1m3 0h1m22 0h1M2 71h1m6 0h1m44 0h1m23 0h1m8 0h1m9 0h1m7 0h1M1 72h1m15 0h1m10 0h1m24 0h1m19 0h1m16 0h1m5 0h1" stroke="#ffffff"/></g></pattern>
<pattern id="ovD" x="106" y="317" width="97" height="89" patternUnits="userSpaceOnUse"><g transform="translate(0 .5)" stroke-width="1" fill="none" shape-rendering="crispEdges"><path d="M96 27h1M44 34h1" stroke="#0b0000"/><path d="M91 5h1M19 7h1M23 8h1M69 10h1M46 11h1M5 16h1M20 27h1M78 29h1M57 31h1M37 35h1M3 36h1m74 0h1M68 39h1M67 42h1M5 43h1m15 0h1m41 0h1M6 44h1m49 0h1M64 46h1M50 47h1M36 50h1M45 51h1M94 52h1M73 58h1M15 62h1M40 63h1M45 65h1m9 0h1M29 69h1M12 70h1M13 73h1M51 77h1M38 85h1m8 0h1M26 86h1" stroke="#270000"/><path d="M42 0h1M62 1h1m13 0h1m4 0h1M27 2h1M9 4h1M90 5h1M84 6h1M80 7h1m5 0h1M4 8h1m9 0h1M51 9h1m18 0h1M52 13h1M62 14h1M63 16h1m6 0h1M50 17h1M5 18h1m29 0h1m22 0h1M13 20h1m62 0h1M53 21h1m24 0h1M11 26h1M77 27h1M6 28h1m84 0h1M57 29h1M78 30h1M33 32h1M92 33h1M38 34h1M27 35h1m16 0h1M14 36h1m57 0h1M8 37h1m23 0h1M32 39h1m28 0h1m26 0h1M35 41h1M9 42h1m40 0h1M56 43h1m8 0h1M10 46h1M30 47h1m11 0h1m10 0h1m6 0h1M67 49h1M19 53h1M67 58h1M57 59h1m26 0h1M32 60h1m32 0h1M40 62h1m45 0h1M9 64h1M47 66h1M52 67h1M78 68h1M9 72h1m29 0h1M41 76h1m33 0h1M53 77h1M64 79h1M11 80h1m43 0h1M10 81h1M50 82h1m42 0h1M33 84h1m53 0h1m8 0h1M85 86h1M82 88h1" stroke="#740000"/><path d="M15 0h1M12 1h1m2 0h1m22 0h1m28 0h1M85 2h1m4 0h1M31 3h1m10 0h1m21 0h1M15 5h1m19 0h1M74 8h1M14 9h1M77 11h1M65 12h1M11 13h1m18 0h1m33 0h1m3 0h1M29 14h1m53 0h1m2 0h1M22 15h1m8 0h1m36 0h1M90 18h1m2 0h1M8 19h1M84 23h1M54 24h1m39 0h1M6 25h1M42 27h1M26 28h1m31 0h1m2 0h1m13 0h1M89 31h1M40 33h1M56 34h1m6 0h1M25 35h1m64 0h1M52 38h1M32 40h1M78 42h1m11 0h1M33 43h1M25 44h1m66 0h1M85 45h1M60 48h1M47 49h1M9 50h1m27 0h1m26 0h1M56 52h1M1 53h1m80 0h1M78 54h1M54 55h1M74 59h1M17 60h1m1 0h1M77 61h1M52 62h1M65 63h1m1 0h1M12 64h1m77 0h1M0 66h1m90 0h1M17 67h1m41 0h1m1 0h1m19 0h1M57 68h1M58 69h1m8 0h1M66 71h1M22 72h1m2 0h1M56 73h1M56 74h1M5 76h1m75 0h1M41 77h1m12 0h1M79 78h1m16 0h1M13 79h1m26 0h1M73 82h1M78 83h1M62 84h1m10 0h1M64 86h1M59 87h1M48 88h1" stroke="#c00000"/><path d="M12 0h1M17 1h1m70 0h1M54 2h1M13 4h1M44 6h1m24 0h1M34 8h1m47 0h1M0 9h1m10 0h1M18 10h1M29 11h1M68 12h1m14 0h1M7 13h1M25 14h1m33 0h1m32 0h1M55 16h1M1 18h1m30 0h1M52 19h1m15 0h1m13 0h1M94 20h1M18 21h1m18 0h1m30 0h1M2 22h1m8 0h1M87 23h1M85 24h1m4 0h1M37 25h1m8 0h1M41 26h1M44 27h1m50 0h1M14 28h1M3 29h1m37 0h1M2 30h1m20 0h1m57 0h1M77 31h1m5 0h1M94 34h1M39 35h1M83 36h1M18 37h1m67 0h1M69 39h1m24 0h1M24 40h1m37 0h1M31 41h1M3 42h1m20 0h1M11 43h1m67 0h1M82 44h1m13 0h1M18 45h1m17 0h1M76 47h1M0 48h1M79 49h1M9 51h1M58 52h2m8 0h1M0 53h1M47 54h1m23 0h1m10 0h1M7 55h1M57 57h1m35 0h1M32 59h1M20 60h1m1 0h1M65 61h1M84 62h1M62 63h1M76 65h1M51 66h1m7 0h1M67 67h1m7 0h1M60 68h1M71 69h1M40 70h1m45 0h1M16 72h1m26 0h1m15 0h1m8 0h1M59 73h1m4 0h1M0 74h1m21 0h1m25 0h1M52 75h1m39 0h1M56 76h1M57 77h1m14 0h1m19 0h1M44 79h1m17 0h1M10 80h1M32 81h1M1 82h1m8 0h1m25 0h1m12 0h1m4 0h1m9 0h1M60 83h1M44 86h1M38 87h1m52 0h1M18 88h1m23 0h1m23 0h1" stroke="#ff0d00"/><path d="M19 0h1M9 1h1m65 0h1m3 0h1m3 0h1M13 2h1M29 4h1M14 6h1M38 7h1M10 8h1M53 9h1m17 0h1M95 12h1M28 15h1m49 0h1M3 16h1m9 0h1M31 17h1m5 0h1M95 18h1M20 20h1m66 0h1m4 0h1M14 21h1M59 22h1m26 0h1M59 23h1M74 24h1M1 25h1m14 0h1m43 0h1m1 0h1m18 0h1M18 26h1m15 0h1m51 0h1M28 27h1M27 28h1m50 0h1M84 29h1M85 30h1M0 33h1M3 34h1m57 0h1M35 35h1m30 0h1M44 36h1m34 0h1M18 38h1m10 0h1M28 39h1m18 0h1m18 0h1M90 40h1M33 42h1m59 0h1M17 43h1M18 44h1m23 0h1m29 0h1M50 45h1m39 0h1M0 46h1m94 0h1M29 47h1m2 0h1m38 0h1M3 48h1M84 49h1M35 50h1M23 51h1m47 0h1M61 52h1M49 54h1M11 55h1M21 56h1m27 0h1m33 0h1m11 0h1M48 57h1M11 59h1m55 0h1M8 60h1M19 61h1M37 62h1M23 63h1m49 0h2m19 0h1M20 64h1m17 0h1M2 65h2m3 0h1m33 0h1M1 67h1m82 0h1M8 68h1m63 0h1M63 69h1m15 0h1M62 70h1M8 71h1m72 0h2M26 72h1m11 0h1m38 0h1M40 73h1m16 0h1M42 74h1m32 0h1M56 75h1m5 0h1m14 0h1M68 77h1M88 79h1M19 80h1m48 0h1M54 81h1M71 83h1M30 84h1m62 0h1M86 85h1M75 86h1M17 87h1m67 0h1M85 88h1m9 0h1" stroke="#ff5c00"/><path d="M2 0h1m46 0h1M7 1h1m13 0h1m33 0h1m29 0h1M67 2h1M77 3h1M24 4h1m36 0h1m17 0h1M53 6h1m36 0h1M2 7h1m25 0h1M21 8h2M30 9h1m23 0h1m8 0h1m1 0h1M50 10h1M11 11h1m10 0h1m13 0h1m54 0h1M80 12h2M34 13h1m3 0h1m7 0h1m25 0h1m7 0h1M70 14h1M36 16h1M32 17h1m9 0h1m10 0h1M2 19h1m50 0h1m4 0h1M65 20h1M48 21h1m2 0h1M13 22h1m18 0h1M1 23h1m39 0h1m5 0h1m32 0h1m13 0h1M16 26h1m50 0h1M5 27h1M0 28h1m64 0h1M94 29h1M6 31h1M10 32h1m61 0h1M14 33h1m40 0h1m28 0h1M19 34h1m52 0h1m14 0h1M52 35h1m4 0h1M1 36h1m66 0h1M28 37h1m20 0h1m3 0h1m28 0h1M49 38h1m42 0h1m1 0h1M92 40h1M62 41h1M25 42h1m69 0h1M73 43h1m2 0h1M0 44h1m10 0h1m22 0h1m54 0h1M80 45h1M6 46h1m44 0h1m32 0h1M26 48h1m20 0h1m17 0h1m6 0h1m14 0h1M7 50h1m38 0h1m39 0h1M83 51h1m6 0h1M18 52h1M10 53h1m78 0h1M91 54h1M3 55h1M11 57h1M20 58h1m6 0h1m22 0h1M88 59h1M4 60h1m30 0h1M52 61h1M81 62h1m1 0h1M11 63h1m41 0h1m10 0h1m24 0h1M23 64h2m43 0h1M37 65h2m22 0h1m25 0h1M13 66h1m12 0h1M30 67h1m5 0h1m7 0h1m26 0h1m21 0h1M7 68h1m28 0h1m6 0h1m19 0h1M51 69h1M6 71h1m25 0h1m7 0h1m38 0h1m3 0h1M10 72h1m17 0h1m11 0h1m24 0h1M85 74h1M38 75h1m8 0h1M50 76h1m44 0h1M1 77h1m26 0h2M4 78h1m1 0h1m16 0h1m9 0h1M37 79h2m33 0h1M1 80h1m81 0h1M4 81h1m26 0h1m16 0h1m6 0h1m12 0h1M35 83h1m30 0h1M35 85h1m35 0h1m1 0h1M3 86h1m9 0h1m41 0h1m1 0h1M18 87h1m73 0h1M20 88h1m19 0h1m38 0h1" stroke="#ffa800"/><path d="M0 0h1M36 2h1m42 0h1M71 4h1m4 0h1m16 0h1M7 5h1m64 0h1M52 6h1m3 0h1m7 0h1m17 0h1m4 0h1M49 7h1m29 0h1M15 8h1m4 0h1m30 0h1m32 0h1M8 9h1m29 0h1M12 11h1m60 0h1M67 13h1M35 15h1m19 0h1M10 16h1m41 0h1M30 17h1m21 0h1M23 20h1m50 0h1m5 0h1M65 21h1m22 0h1M30 22h1M2 23h1M46 24h1m13 0h1M93 25h1M68 27h1M11 29h1m19 0h1m30 0h1m7 0h1M80 30h1M27 31h1m22 0h1m1 0h1m3 0h1m36 0h1M49 32h1m25 0h1M15 33h1m10 0h1m29 0h1M6 34h1m28 0h1m16 0h1M25 36h1m36 0h1M6 37h1m54 0h1M46 38h1M1 39h1M64 40h1m14 0h1M42 41h1M36 42h1M9 43h1m19 0h1m45 0h1M71 44h1m16 0h1m1 0h1M11 46h1m24 0h1M1 47h1M58 48h1M11 49h1M6 50h1m14 0h2m1 0h1m62 0h1m2 0h1M57 53h1M15 54h1m11 0h1M35 55h1M1 56h1m1 0h1m20 0h1m26 0h1M9 58h1m22 0h1m48 0h1m3 0h1M83 59h1M27 60h1M53 61h1M47 63h1M25 64h1m69 0h1M5 65h1m46 0h1m29 0h1M22 66h1m53 0h1M0 67h1M70 68h1M48 69h1m31 0h1M10 70h1M1 71h1m21 0h1m48 0h1m14 0h1M3 72h1m23 0h1m45 0h1M7 73h1m80 0h1M96 74h1M0 76h1m31 0h1m34 0h1M71 77h1m4 0h1M27 78h1M32 79h1M22 80h1m64 0h1M5 81h1m23 0h1m46 0h1M38 83h1m1 0h1m9 0h1m6 0h1m25 0h1M33 86h1m24 0h1m24 0h1M4 87h2" stroke="#fff400"/><path d="M53 0h1m19 0h1M7 2h1m45 0h1m33 0h1M85 3h1M28 4h1m13 0h1M2 5h1m15 0h1m74 0h1M10 6h1m81 0h1M12 7h1m40 0h1M60 8h1M36 9h1m21 0h1M22 10h1m44 0h1m11 0h1M20 12h1m21 0h1m27 0h1M63 13h1M75 15h1M44 16h1m1 0h1M18 17h1m37 0h1M10 18h1m1 0h1M89 19h1M1 20h1m13 0h1m18 0h1m4 0h1m39 0h1M24 22h1m42 0h1m17 0h1M37 23h1m43 0h1M46 26h1M91 27h1M16 28h1m36 0h1M19 29h1m67 0h1M42 30h1M7 31h1m1 0h1M78 32h1M10 35h1m6 0h2M21 36h1m11 0h1m1 0h1M96 37h1M43 39h1m38 0h1M61 40h1M68 42h1M0 43h1M16 45h1m50 0h1M39 46h1m29 0h1m22 0h1M41 47h1m44 0h1M64 48h1m13 0h1M14 50h1m43 0h1M5 51h1m32 0h1m8 0h1m20 0h1M62 52h1m13 0h1M24 53h1M73 54h1M2 55h1m79 0h1m9 0h1M12 56h1m47 0h1m23 0h1M36 57h1m2 0h1M17 58h1m34 0h1m25 0h1M2 59h1m21 0h1M34 60h1M25 61h1m49 0h1M46 62h1m46 0h1M1 64h1m64 0h1M2 66h1M89 67h1m1 0h1M52 68h1m30 0h1M28 69h1M49 70h1M34 71h1m49 0h1M11 72h1m25 0h1m9 0h1M45 73h1M43 74h1m44 0h1M85 75h1M3 76h1m84 0h1M3 77h2m17 0h1m35 0h1M14 78h1m3 0h1m71 0h1M47 80h1m16 0h1M0 81h1M8 82h1m23 0h1m26 0h1M29 83h1m34 0h1m30 0h1M94 84h1M0 85h1M12 86h1m27 0h1M11 87h1m35 0h1M7 88h1m1 0h1m16 0h1m1 0h1" stroke="#ffff61"/><path d="M20 0h1m25 0h1m13 0h1m15 0h1m10 0h1M65 1h1M50 2h1M86 3h1m4 0h1M35 4h1m59 0h1M29 5h1m31 0h1m15 0h1M5 6h1m5 0h1m21 0h1m55 0h1M78 7h1M41 9h1m10 0h1m11 0h1M7 10h1m33 0h1M20 11h1M33 12h1M19 14h1M27 15h1m30 0h1M17 17h1M57 19h1m25 0h1M95 20h1M22 21h1m57 0h1m13 0h1M1 22h1m46 0h1m38 0h1M4 23h1m15 0h1m75 0h1M11 24h1m25 0h1M96 25h1M2 26h1m58 0h1M34 28h1m20 0h1m12 0h1M3 30h1m49 0h1m8 0h1m28 0h1M28 31h1m8 0h1M74 32h1M31 33h1m48 0h1M51 34h1M29 35h1M52 36h1m5 0h1m1 0h1m24 0h1M16 37h1m70 0h1M51 39h1M58 40h2m15 0h1M0 41h1m48 0h1m6 0h1m13 0h1m18 0h1M56 42h1M10 43h1m17 0h1M43 44h1M3 46h1m1 0h1m36 0h2M13 47h1M18 48h1m61 0h1M45 49h1m15 0h1m3 0h1m4 0h1M76 50h1M36 51h1m59 0h1M23 52h1m25 0h1M24 55h1m13 0h1m18 0h1m21 0h1M45 56h1M71 57h1M14 58h1m1 0h1M2 60h1m55 0h1M14 61h1m6 0h1m12 0h1M44 62h1M4 63h1m20 0h1M16 64h1m54 0h1m2 0h1M20 65h1M62 66h1m27 0h1m5 0h1M50 67h1M94 68h1M15 69h1M8 70h1m62 0h1M20 71h1m44 0h1m26 0h1M0 72h1m1 0h1m42 0h1M74 73h1M3 74h1M59 76h1m2 0h1M81 77h1M1 78h1m11 0h1m66 0h1M89 80h1m5 0h1M42 81h1M19 83h1m22 0h1M32 85h1m6 0h1M38 86h2M15 87h1M51 88h1m2 0h1m6 0h1m11 0h1" stroke="#ffffd4"/><path d="M5 0h1m17 0h2m8 0h1m6 0h1m27 0h1m15 0h2m5 0h1M5 1h1m2 0h1m1 0h1m5 0h1m8 0h1m3 0h1m41 0h1M8 2h1m25 0h1m10 0h1m5 0h1m16 0h1m1 0h1M0 3h1m23 0h1m20 0h1m25 0h1m18 0h1M31 4h2m11 0h1m1 0h1m4 0h1m2 0h1m18 0h1M14 5h1m7 0h1m10 0h1m33 0h1m8 0h1M27 6h1m8 0h1M10 7h1m21 0h1m39 0h2M16 8h1m27 0h2m16 0h1m3 0h1m8 0h1m1 0h1M5 9h1m53 0h1M13 10h1m20 0h1m30 0h1m10 0h1m11 0h1M19 11h1m1 0h1m15 0h1m3 0h1m25 0h1m3 0h1M45 12h1m2 0h1m39 0h1m4 0h1M35 13h1m12 0h1m2 0h1m1 0h1m2 0h1M33 14h1m26 0h1m6 0h1m12 0h1m1 0h1M4 15h1m15 0h1m36 0h1M11 16h1m9 0h1m1 0h1m11 0h1m6 0h1m4 0h1m3 0h1m39 0h1M10 17h1m14 0h1m2 0h1m11 0h1m10 0h1m12 0h1m8 0h1m22 0h1M6 18h1m24 0h1m5 0h1m46 0h1m6 0h1M0 19h1m13 0h1m3 0h1m20 0h2m55 0h1M4 20h1m36 0h1m19 0h1m4 0h1m18 0h1M32 21h1m28 0h2m27 0h1m1 0h1M3 22h1m31 0h1m1 0h1m13 0h1m5 0h1m6 0h1m13 0h1M18 23h1m12 0h1m47 0h1M27 24h1m12 0h1m27 0h1M0 25h1m18 0h1m8 0h1m27 0h1m6 0h1m4 0h1m1 0h1m23 0h1M7 26h1m12 0h1m3 0h1m26 0h2m25 0h1m2 0h1M33 27h1m38 0h1M5 28h1m14 0h1m51 0h1m8 0h1M23 29h1m8 0h1m3 0h1m17 0h1m19 0h1M4 30h1m11 0h1m7 0h1m43 0h1m14 0h1M67 31h1m17 0h1m10 0h1M9 32h1m7 0h1m34 0h1m6 0h1m26 0h1m6 0h1m2 0h1M32 33h2m1 0h1m1 0h1m35 0h1m5 0h1m9 0h1M15 34h1m38 0h1M2 35h1m27 0h1m18 0h1m20 0h1m7 0h1m6 0h1M34 36h1m3 0h1m2 0h1m5 0h1m1 0h1m25 0h1M3 37h1m21 0h2m4 0h1m2 0h2m9 0h1m9 0h1M7 38h1m11 0h1m16 0h1m19 0h1m5 0h1m17 0h1M24 39h1m11 0h1m39 0h1M0 40h1m8 0h1m30 0h1m5 0h2m21 0h1m2 0h1m13 0h1m7 0h1M3 41h1m9 0h1m8 0h1m5 0h3m10 0h1m13 0h1m9 0h1m16 0h1M14 42h1m15 0h1m12 0h1m1 0h1m28 0h1m9 0h1M4 44h1m23 0h1m16 0h1m23 0h1m5 0h1m10 0h1M1 45h1m38 0h1m12 0h1M26 46h1m20 0h1m14 0h1m17 0h1m6 0h1M36 47h1m3 0h1m3 0h1m3 0h1m10 0h1m22 0h1M43 48h1m42 0h1m4 0h1M16 49h1m4 0h1m12 0h1m7 0h1m10 0h1m1 0h1m18 0h1m2 0h1M27 50h1m12 0h1m11 0h1m4 0h1M6 51h1m7 0h1m39 0h1m7 0h1m24 0h1m6 0h1M0 52h1m7 0h1m5 0h1m14 0h1m9 0h1m29 0h1m11 0h1M20 53h1m9 0h1m36 0h1m23 0h1M9 54h1m32 0h1m33 0h1m16 0h1M21 55h1m42 0h1m6 0h2M22 56h1m4 0h1m28 0h1M14 57h1m9 0h1m8 0h1m13 0h1m10 0h1m20 0h1M58 58h1m35 0h1M3 59h2m8 0h1m12 0h1m4 0h1m3 0h1m22 0h1m4 0h1M6 60h1m11 0h1m12 0h1m16 0h1m18 0h1m5 0h1m3 0h1m11 0h1m1 0h1M23 61h1m4 0h1m25 0h2m7 0h1m4 0h2m23 0h1M1 62h1m16 0h1m1 0h1m5 0h1m20 0h1m1 0h1m3 0h1m1 0h1m16 0h1m4 0h1m17 0h1M36 63h1m47 0h1M0 64h1m13 0h1m12 0h1m8 0h1m17 0h1m3 0h1m5 0h1m10 0h1m6 0h1m9 0h1M6 65h1m9 0h1m31 0h1M15 66h1m5 0h1m11 0h1m12 0h1M2 67h1m12 0h1m19 0h1m3 0h1m3 0h1m3 0h1M4 68h1m36 0h1m2 0h1m14 0h1m1 0h1m3 0h1M30 69h1m4 0h1M18 70h2m8 0h1m8 0h1m12 0h1m23 0h1m2 0h1m5 0h1m5 0h2M14 71h1m18 0h1m52 0h1M30 72h1m44 0h1M19 73h1m40 0h1m34 0h1M11 74h1m21 0h1m2 0h1m7 0h1m16 0h1m25 0h1M35 75h1m33 0h1m13 0h1m7 0h1m3 0h1M1 76h1m29 0h1m11 0h1m1 0h1m18 0h1m4 0h1m3 0h1M0 77h1m25 0h1m57 0h1M22 78h1m18 0h1m2 0h1m27 0h1M15 79h1m12 0h1m29 0h1m25 0h1M36 80h1m43 0h1M2 81h1m21 0h1m42 0h1m10 0h1m4 0h1M27 82h1m35 0h1m5 0h1m2 0h1m8 0h1m14 0h1M0 83h1m9 0h1m2 0h1m4 0h1m7 0h1m7 0h1m4 0h1m14 0h1m3 0h1m2 0h1m30 0h1M21 84h1m10 0h1m38 0h1m12 0h1M27 85h2m13 0h1m12 0h1m8 0h1M35 86h1m18 0h1m7 0h1m10 0h1M20 87h1m4 0h1m48 0h1m1 0h1M44 88h1m27 0h1m4 0h1m14 0h1" stroke="#ffffff"/></g></pattern>
</defs>
<rect x="106" y="588" width="570" height="17" fill="url(#ovA)"/>
<rect x="106" y="545" width="570" height="43" fill="url(#ovB)"/>
<rect x="106" y="317" width="570" height="93" fill="url(#ovC)"/>
<rect x="106" y="410" width="204" height="135" fill="url(#ovD)"/>
</g>
<path d="M107 518.5H196" stroke="#fff" stroke-width="1" shape-rendering="crispEdges"/><path d="M118 518.5h1m13 0h1m22 0h2m17 0h1m9 0h1" stroke="#ffff61" stroke-width="1" shape-rendering="crispEdges"/>
<rect x="106.0" y="317.0" width="570.0" height="288.0" fill="none" stroke="#000" stroke-width="1.7"/>
<path d="M106 605.0v7.0M176 605.0v7.0M245 605.0v7.0M315 605.0v7.0M384 605.0v7.0M454 605.0v7.0M523 605.0v7.0M593 605.0v7.0M663 605.0v7.0" stroke="#000" stroke-width="2.0" fill="none"/>
<text x="106.6" y="627.9" font-size="10.4" text-anchor="middle">0</text>
<text x="176.5" y="627.9" font-size="10.4" text-anchor="middle">250</text>
<text x="245.5" y="627.9" font-size="10.4" text-anchor="middle">500</text>
<text x="315.5" y="627.9" font-size="10.4" text-anchor="middle">750</text>
<text x="384.2" y="627.9" font-size="10.4" text-anchor="middle" letter-spacing="-0.3">1000</text>
<text x="454.2" y="627.9" font-size="10.4" text-anchor="middle" letter-spacing="-0.3">1250</text>
<text x="523.2" y="627.9" font-size="10.4" text-anchor="middle" letter-spacing="-0.3">1500</text>
<text x="593.2" y="627.9" font-size="10.4" text-anchor="middle" letter-spacing="-0.3">1750</text>
<text x="663.2" y="627.9" font-size="10.4" text-anchor="middle" letter-spacing="-0.3">2000</text>
<path d="M106.0 605h-7.0M106.0 550h-7.0M106.0 494h-7.0M106.0 438h-7.0M106.0 382h-7.0M106.0 327h-7.0" stroke="#000" stroke-width="2.0" fill="none"/>
<text x="90.5" y="608.9" font-size="10.4" text-anchor="end">0</text>
<text x="89.7" y="553.9" font-size="10.4" text-anchor="end" letter-spacing="-0.3">200</text>
<text x="89.7" y="497.9" font-size="10.4" text-anchor="end" letter-spacing="-0.3">400</text>
<text x="89.7" y="441.9" font-size="10.4" text-anchor="end" letter-spacing="-0.3">600</text>
<text x="89.7" y="385.9" font-size="10.4" text-anchor="end" letter-spacing="-0.3">800</text>
<text x="90.5" y="330.9" font-size="10.4" text-anchor="end" letter-spacing="-0.3">1000</text>
<text x="391" y="645.5" font-size="10.4" text-anchor="middle">X</text>
<text x="53.5" y="460.5" font-size="10.4" text-anchor="middle" transform="rotate(-90 53.5 460.5)">Y</text>
<path d="M100 461.5H683M391.5 314V609" stroke="#0000ff" stroke-width="1" fill="none"/>
<defs><linearGradient id="cb" x1="0" y1="0" x2="0" y2="1"><stop offset="0.000" stop-color="#ffffff"/><stop offset="0.025" stop-color="#ffffe7"/><stop offset="0.050" stop-color="#ffffd0"/><stop offset="0.075" stop-color="#ffffb4"/><stop offset="0.100" stop-color="#ffff9d"/><stop offset="0.125" stop-color="#ffff85"/><stop offset="0.150" stop-color="#ffff69"/><stop offset="0.175" stop-color="#ffff52"/><stop offset="0.200" stop-color="#ffff36"/><stop offset="0.225" stop-color="#ffff1f"/><stop offset="0.250" stop-color="#ffff07"/><stop offset="0.275" stop-color="#fff100"/><stop offset="0.300" stop-color="#ffe100"/><stop offset="0.325" stop-color="#ffcf00"/><stop offset="0.350" stop-color="#ffbf00"/><stop offset="0.375" stop-color="#ffb000"/><stop offset="0.400" stop-color="#ff9d00"/><stop offset="0.425" stop-color="#ff8e00"/><stop offset="0.450" stop-color="#ff7b00"/><stop offset="0.475" stop-color="#ff6b00"/><stop offset="0.500" stop-color="#ff5c00"/><stop offset="0.525" stop-color="#ff4900"/><stop offset="0.550" stop-color="#ff3a00"/><stop offset="0.575" stop-color="#ff2700"/><stop offset="0.600" stop-color="#ff1700"/><stop offset="0.625" stop-color="#ff0800"/><stop offset="0.650" stop-color="#f40000"/><stop offset="0.675" stop-color="#e40000"/><stop offset="0.700" stop-color="#d20000"/><stop offset="0.725" stop-color="#c20000"/><stop offset="0.750" stop-color="#b30000"/><stop offset="0.775" stop-color="#a00000"/><stop offset="0.800" stop-color="#900000"/><stop offset="0.825" stop-color="#7e0000"/><stop offset="0.850" stop-color="#6e0000"/><stop offset="0.875" stop-color="#5f0000"/><stop offset="0.900" stop-color="#4c0000"/><stop offset="0.925" stop-color="#3c0000"/><stop offset="0.950" stop-color="#2a0000"/><stop offset="0.975" stop-color="#1a0000"/><stop offset="1.000" stop-color="#0b0000"/></linearGradient></defs>
<rect x="712.0" y="112.8" width="35.14999999999998" height="696.2" fill="url(#cb)" stroke="#000" stroke-width="1.6"/>
<path d="M747.15 776.87h7.0M747.15 697.87h7.0M747.15 618.87h7.0M747.15 539.87h7.0M747.15 460.87h7.0M747.15 381.87h7.0M747.15 302.87h7.0M747.15 223.87h7.0M747.15 144.87h7.0" stroke="#000" stroke-width="2.0" fill="none"/>
<text x="762.0" y="780.97" font-size="10.4" letter-spacing="-0.3">215</text>
<text x="762.0" y="701.97" font-size="10.4" letter-spacing="-0.3">216</text>
<text x="762.0" y="622.97" font-size="10.4" letter-spacing="-0.3">217</text>
<text x="762.0" y="543.97" font-size="10.4" letter-spacing="-0.3">218</text>
<text x="762.0" y="464.97" font-size="10.4" letter-spacing="-0.3">219</text>
<text x="762.0" y="385.97" font-size="10.4" letter-spacing="-0.3">220</text>
<text x="762.0" y="306.97" font-size="10.4" letter-spacing="-0.3">221</text>
<text x="762.0" y="227.97" font-size="10.4" letter-spacing="-0.3">222</text>
<text x="762.0" y="148.97" font-size="10.4" letter-spacing="-0.3">223</text>
<clipPath id="c1"><rect x="911.0" y="113.0" width="274.0" height="120.0"/></clipPath>
<path d="M914.00 226.65V233.00H919.58V223.37H925.15V216.19H930.73V212.09H936.30V205.12H941.88V202.04H947.45V187.08H953.03V184.82H958.60V178.26H964.18V172.12H969.75V169.04H975.33V162.27H980.90V158.18H986.48V152.23H992.05V148.95H997.62V144.03H1003.20V140.13H1008.78V136.85H1014.35V131.94H1019.93V131.94H1025.50V129.27H1031.08V125.17H1036.65V126.81H1042.23V124.97H1047.80V119.23H1053.38V126.81H1058.95V126.81H1064.53V129.27H1070.10V133.16H1075.67V133.99H1081.25V136.03H1086.83V139.93H1092.40V144.03H1097.98V148.95H1103.55V153.05H1109.12V158.18H1114.70V163.09H1120.28V169.04H1125.85V174.37H1131.42V180.72H1137.00V185.03H1142.58V188.72H1148.15V204.91H1153.73V219.06H1159.30V212.91H1164.88V226.85H1170.45V219.06H1176.03V220.70H1181.60V183.19H1187.17" clip-path="url(#c1)" stroke="#0000ff" stroke-width="1.8" fill="none" stroke-linejoin="round"/>
<rect x="911.0" y="113.0" width="274.0" height="120.0" fill="none" stroke="#000" stroke-width="1.7"/>
<path d="M950 233.0v7.0M1003 233.0v7.0M1056 233.0v7.0M1109 233.0v7.0M1162 233.0v7.0" stroke="#000" stroke-width="2.0" fill="none"/>
<text x="950.5" y="255.9" font-size="10.4" text-anchor="middle">200</text>
<text x="1056.5" y="255.9" font-size="10.4" text-anchor="middle">220</text>
<text x="1162.5" y="255.9" font-size="10.4" text-anchor="middle">240</text>
<path d="M911.0 233h-7.0M911.0 192h-7.0M911.0 151h-7.0" stroke="#000" stroke-width="2.0" fill="none"/>
<text x="896.3" y="236.9" font-size="10.4" text-anchor="end">0</text>
<text x="896.3" y="195.9" font-size="10.4" text-anchor="end">2</text>
<text x="896.3" y="154.9" font-size="10.4" text-anchor="end">4</text>
<text x="1048" y="274.0" font-size="10.4" text-anchor="middle">counts</text>
<text x="877.5" y="173.9" font-size="10.4" text-anchor="middle" transform="rotate(-90 877.5 173.9)">log frequency</text>
<text x="1194.1" y="175.2" font-size="10.4" text-anchor="middle" transform="rotate(90 1194.1 175.2)">histogram (detail)</text>
<clipPath id="c2"><rect x="911.0" y="285.0" width="274.0" height="120.0"/></clipPath>
<path d="M911.0 405.0H925.05V291.05H929.95V405.0H936.0V400.01H941.0V405.0H1185.0" clip-path="url(#c2)" stroke="#0000ff" stroke-width="1.8" fill="none" stroke-linejoin="round"/>
<rect x="911.0" y="285.0" width="274.0" height="120.0" fill="none" stroke="#000" stroke-width="1.7"/>
<path d="M929 405.0v7.0M967 405.0v7.0M1004 405.0v7.0M1041 405.0v7.0M1078 405.0v7.0M1116 405.0v7.0M1153 405.0v7.0" stroke="#000" stroke-width="2.0" fill="none"/>
<text x="929.6" y="427.9" font-size="10.4" text-anchor="middle">0</text>
<text x="1004.2" y="427.9" font-size="10.4" text-anchor="middle" letter-spacing="-0.3">20000</text>
<text x="1078.2" y="427.9" font-size="10.4" text-anchor="middle" letter-spacing="-0.3">40000</text>
<text x="1153.2" y="427.9" font-size="10.4" text-anchor="middle" letter-spacing="-0.3">60000</text>
<path d="M911.0 405h-7.0M911.0 369h-7.0M911.0 333h-7.0M911.0 297h-7.0" stroke="#000" stroke-width="2.0" fill="none"/>
<text x="896.3" y="408.9" font-size="10.4" text-anchor="end">0</text>
<text x="896.3" y="372.9" font-size="10.4" text-anchor="end">2</text>
<text x="896.3" y="336.9" font-size="10.4" text-anchor="end">4</text>
<text x="896.3" y="300.9" font-size="10.4" text-anchor="end">6</text>
<text x="1048" y="446.0" font-size="10.4" text-anchor="middle">counts</text>
<text x="877.5" y="345.9" font-size="10.4" text-anchor="middle" transform="rotate(-90 877.5 345.9)">log frequency</text>
<text x="1194.1" y="349.6" font-size="10.4" text-anchor="middle" transform="rotate(90 1194.1 349.6)">histogram (full)</text>
<clipPath id="c3"><rect x="911.0" y="517.0" width="274.0" height="120.0"/></clipPath>
<polyline points="912.2,578.0 912.3,568.7 912.5,580.3 912.6,580.3 912.7,554.7 912.9,559.3 913.0,573.3 913.1,571.0 913.3,566.3 913.4,561.7 913.5,564.0 913.7,589.7 913.8,571.0 913.9,573.3 914.1,559.3 914.2,566.3 914.3,596.7 914.5,578.0 914.6,557.0 914.7,580.3 914.8,580.3 915.0,571.0 915.1,540.7 915.2,585.0 915.4,580.3 915.5,573.3 915.6,571.0 915.8,568.7 915.9,575.7 916.0,561.7 916.2,582.7 916.3,585.0 916.4,601.3 916.6,594.3 916.7,585.0 916.8,568.7 917.0,589.7 917.1,573.3 917.2,587.3 917.4,571.0 917.5,601.3 917.6,578.0 917.8,592.0 917.9,585.0 918.0,589.7 918.2,571.0 918.3,571.0 918.4,582.7 918.6,571.0 918.7,559.3 918.8,573.3 919.0,573.3 919.1,575.7 919.2,564.0 919.3,561.7 919.5,585.0 919.6,592.0 919.7,575.7 919.9,566.3 920.0,582.7 920.1,566.3 920.3,575.7 920.4,573.3 920.5,568.7 920.7,566.3 920.8,585.0 920.9,575.7 921.1,599.0 921.2,582.7 921.3,587.3 921.5,589.7 921.6,564.0 921.7,566.3 921.9,568.7 922.0,564.0 922.1,580.3 922.3,582.7 922.4,585.0 922.5,582.7 922.7,573.3 922.8,573.3 922.9,587.3 923.1,566.3 923.2,571.0 923.3,564.0 923.5,554.7 923.6,585.0 923.7,566.3 923.9,575.7 924.0,566.3 924.1,573.3 924.2,552.3 924.4,575.7 924.5,552.3 924.6,575.7 924.8,566.3 924.9,573.3 925.0,582.7 925.2,568.7 925.3,573.3 925.4,592.0 925.6,580.3 925.7,575.7 925.8,585.0 926.0,580.3 926.1,575.7 926.2,564.0 926.4,564.0 926.5,580.3 926.6,557.0 926.8,580.3 926.9,571.0 927.0,564.0 927.2,592.0 927.3,585.0 927.4,580.3 927.6,573.3 927.7,578.0 927.8,568.7 928.0,592.0 928.1,599.0 928.2,587.3 928.4,571.0 928.5,566.3 928.6,578.0 928.8,575.7 928.9,573.3 929.0,580.3 929.1,580.3 929.3,575.7 929.4,587.3 929.5,594.3 929.7,557.0 929.8,564.0 929.9,571.0 930.1,568.7 930.2,561.7 930.3,580.3 930.5,578.0 930.6,568.7 930.7,582.7 930.9,561.7 931.0,568.7 931.1,582.7 931.3,573.3 931.4,580.3 931.5,578.0 931.7,575.7 931.8,568.7 931.9,568.7 932.1,582.7 932.2,566.3 932.3,578.0 932.5,592.0 932.6,571.0 932.7,592.0 932.9,578.0 933.0,564.0 933.1,561.7 933.3,578.0 933.4,580.3 933.5,575.7 933.6,594.3 933.8,552.3 933.9,582.7 934.0,559.3 934.2,575.7 934.3,561.7 934.4,554.7 934.6,566.3 934.7,550.0 934.8,582.7 935.0,566.3 935.1,585.0 935.2,587.3 935.4,580.3 935.5,585.0 935.6,585.0 935.8,571.0 935.9,580.3 936.0,580.3 936.2,578.0 936.3,585.0 936.4,557.0 936.6,561.7 936.7,561.7 936.8,585.0 937.0,582.7 937.1,580.3 937.2,578.0 937.4,582.7 937.5,582.7 937.6,566.3 937.8,571.0 937.9,566.3 938.0,566.3 938.2,585.0 938.3,589.7 938.4,561.7 938.5,573.3 938.7,564.0 938.8,580.3 938.9,571.0 939.1,580.3 939.2,587.3 939.3,582.7 939.5,603.7 939.6,575.7 939.7,582.7 939.9,575.7 940.0,559.3 940.1,568.7 940.3,580.3 940.4,561.7 940.5,575.7 940.7,559.3 940.8,585.0 940.9,568.7 941.1,561.7 941.2,578.0 941.3,580.3 941.5,571.0 941.6,585.0 941.7,594.3 941.9,568.7 942.0,564.0 942.1,564.0 942.3,573.3 942.4,578.0 942.5,573.3 942.7,585.0 942.8,594.3 942.9,587.3 943.0,559.3 943.2,580.3 943.3,601.3 943.4,587.3 943.6,573.3 943.7,575.7 943.8,573.3 944.0,589.7 944.1,575.7 944.2,564.0 944.4,582.7 944.5,564.0 944.6,587.3 944.8,571.0 944.9,578.0 945.0,568.7 945.2,578.0 945.3,559.3 945.4,587.3 945.6,578.0 945.7,585.0 945.8,571.0 946.0,587.3 946.1,578.0 946.2,580.3 946.4,587.3 946.5,571.0 946.6,587.3 946.8,566.3 946.9,575.7 947.0,552.3 947.2,585.0 947.3,585.0 947.4,578.0 947.6,568.7 947.7,580.3 947.8,571.0 947.9,571.0 948.1,575.7 948.2,601.3 948.3,573.3 948.5,573.3 948.6,578.0 948.7,589.7 948.9,585.0 949.0,578.0 949.1,580.3 949.3,575.7 949.4,578.0 949.5,573.3 949.7,585.0 949.8,566.3 949.9,587.3 950.1,603.7 950.2,561.7 950.3,585.0 950.5,571.0 950.6,580.3 950.7,571.0 950.9,587.3 951.0,568.7 951.1,573.3 951.3,578.0 951.4,559.3 951.5,559.3 951.7,578.0 951.8,566.3 951.9,557.0 952.1,589.7 952.2,578.0 952.3,578.0 952.4,571.0 952.6,573.3 952.7,561.7 952.8,599.0 953.0,585.0 953.1,580.3 953.2,564.0 953.4,564.0 953.5,575.7 953.6,571.0 953.8,571.0 953.9,580.3 954.0,571.0 954.2,578.0 954.3,552.3 954.4,559.3 954.6,575.7 954.7,566.3 954.8,552.3 955.0,575.7 955.1,585.0 955.2,571.0 955.4,561.7 955.5,589.7 955.6,575.7 955.8,582.7 955.9,573.3 956.0,592.0 956.2,587.3 956.3,547.7 956.4,582.7 956.6,582.7 956.7,568.7 956.8,587.3 957.0,568.7 957.1,564.0 957.2,568.7 957.3,582.7 957.5,585.0 957.6,559.3 957.7,573.3 957.9,561.7 958.0,568.7 958.1,580.3 958.3,575.7 958.4,587.3 958.5,575.7 958.7,587.3 958.8,564.0 958.9,568.7 959.1,561.7 959.2,564.0 959.3,580.3 959.5,585.0 959.6,582.7 959.7,561.7 959.9,571.0 960.0,573.3 960.1,564.0 960.3,587.3 960.4,578.0 960.5,561.7 960.7,592.0 960.8,585.0 960.9,561.7 961.1,575.7 961.2,601.3 961.3,585.0 961.5,557.0 961.6,571.0 961.7,573.3 961.9,580.3 962.0,580.3 962.1,573.3 962.2,589.7 962.4,552.3 962.5,568.7 962.6,578.0 962.8,585.0 962.9,585.0 963.0,552.3 963.2,573.3 963.3,554.7 963.4,592.0 963.6,582.7 963.7,568.7 963.8,573.3 964.0,533.7 964.1,578.0 964.2,566.3 964.4,578.0 964.5,573.3 964.6,582.7 964.8,561.7 964.9,575.7 965.0,571.0 965.2,564.0 965.3,568.7 965.4,571.0 965.6,575.7 965.7,559.3 965.8,568.7 966.0,571.0 966.1,573.3 966.2,582.7 966.4,580.3 966.5,540.7 966.6,564.0 966.7,585.0 966.9,587.3 967.0,587.3 967.1,585.0 967.3,589.7 967.4,571.0 967.5,592.0 967.7,582.7 967.8,580.3 967.9,582.7 968.1,575.7 968.2,573.3 968.3,571.0 968.5,561.7 968.6,561.7 968.7,566.3 968.9,592.0 969.0,592.0 969.1,571.0 969.3,571.0 969.4,580.3 969.5,571.0 969.7,578.0 969.8,599.0 969.9,573.3 970.1,568.7 970.2,554.7 970.3,552.3 970.5,578.0 970.6,566.3 970.7,573.3 970.9,568.7 971.0,587.3 971.1,592.0 971.3,568.7 971.4,571.0 971.5,596.7 971.6,568.7 971.8,585.0 971.9,578.0 972.0,571.0 972.2,580.3 972.3,578.0 972.4,568.7 972.6,587.3 972.7,559.3 972.8,594.3 973.0,585.0 973.1,568.7 973.2,592.0 973.4,571.0 973.5,578.0 973.6,582.7 973.8,573.3 973.9,578.0 974.0,571.0 974.2,568.7 974.3,568.7 974.4,573.3 974.6,578.0 974.7,582.7 974.8,573.3 975.0,580.3 975.1,571.0 975.2,585.0 975.4,575.7 975.5,596.7 975.6,559.3 975.8,559.3 975.9,568.7 976.0,578.0 976.1,566.3 976.3,573.3 976.4,594.3 976.5,585.0 976.7,573.3 976.8,573.3 976.9,580.3 977.1,582.7 977.2,566.3 977.3,582.7 977.5,564.0 977.6,566.3 977.7,575.7 977.9,550.0 978.0,568.7 978.1,559.3 978.3,561.7 978.4,582.7 978.5,578.0 978.7,594.3 978.8,568.7 978.9,571.0 979.1,589.7 979.2,580.3 979.3,573.3 979.5,557.0 979.6,585.0 979.7,582.7 979.9,582.7 980.0,561.7 980.1,568.7 980.3,589.7 980.4,573.3 980.5,568.7 980.7,568.7 980.8,573.3 980.9,573.3 981.0,587.3 981.2,606.0 981.3,568.7 981.4,573.3 981.6,561.7 981.7,592.0 981.8,564.0 982.0,552.3 982.1,578.0 982.2,585.0 982.4,568.7 982.5,582.7 982.6,582.7 982.8,568.7 982.9,571.0 983.0,573.3 983.2,566.3 983.3,575.7 983.4,582.7 983.6,575.7 983.7,587.3 983.8,580.3 984.0,578.0 984.1,580.3 984.2,573.3 984.4,573.3 984.5,571.0 984.6,573.3 984.8,573.3 984.9,585.0 985.0,564.0 985.2,580.3 985.3,585.0 985.4,554.7 985.5,585.0 985.7,566.3 985.8,585.0 985.9,550.0 986.1,582.7 986.2,568.7 986.3,568.7 986.5,559.3 986.6,554.7 986.7,568.7 986.9,568.7 987.0,557.0 987.1,587.3 987.3,573.3 987.4,580.3 987.5,589.7 987.7,573.3 987.8,580.3 987.9,580.3 988.1,575.7 988.2,571.0 988.3,568.7 988.5,592.0 988.6,575.7 988.7,573.3 988.9,580.3 989.0,578.0 989.1,573.3 989.3,573.3 989.4,564.0 989.5,578.0 989.7,580.3 989.8,578.0 989.9,575.7 990.1,587.3 990.2,566.3 990.3,559.3 990.4,571.0 990.6,582.7 990.7,585.0 990.8,571.0 991.0,575.7 991.1,571.0 991.2,573.3 991.4,578.0 991.5,580.3 991.6,566.3 991.8,580.3 991.9,580.3 992.0,566.3 992.2,585.0 992.3,554.7 992.4,573.3 992.6,578.0 992.7,594.3 992.8,564.0 993.0,585.0 993.1,585.0 993.2,580.3 993.4,559.3 993.5,585.0 993.6,585.0 993.8,566.3 993.9,580.3 994.0,580.3 994.2,582.7 994.3,571.0 994.4,573.3 994.6,585.0 994.7,566.3 994.8,575.7 995.0,566.3 995.1,554.7 995.2,575.7 995.3,589.7 995.5,566.3 995.6,575.7 995.7,575.7 995.9,575.7 996.0,561.7 996.1,580.3 996.3,559.3 996.4,566.3 996.5,578.0 996.7,571.0 996.8,568.7 996.9,585.0 997.1,589.7 997.2,564.0 997.3,582.7 997.5,592.0 997.6,578.0 997.7,585.0 997.9,566.3 998.0,592.0 998.1,568.7 998.3,564.0 998.4,589.7 998.5,580.3 998.7,559.3 998.8,585.0 998.9,554.7 999.1,561.7 999.2,592.0 999.3,575.7 999.5,559.3 999.6,575.7 999.7,582.7 999.8,606.0 1000.0,573.3 1000.1,561.7 1000.2,580.3 1000.4,568.7 1000.5,571.0 1000.6,568.7 1000.8,589.7 1000.9,552.3 1001.0,580.3 1001.2,575.7 1001.3,592.0 1001.4,575.7 1001.6,571.0 1001.7,552.3 1001.8,578.0 1002.0,592.0 1002.1,573.3 1002.2,578.0 1002.4,573.3 1002.5,580.3 1002.6,580.3 1002.8,582.7 1002.9,578.0 1003.0,561.7 1003.2,580.3 1003.3,566.3 1003.4,578.0 1003.6,573.3 1003.7,585.0 1003.8,566.3 1004.0,578.0 1004.1,571.0 1004.2,585.0 1004.4,589.7 1004.5,573.3 1004.6,564.0 1004.7,582.7 1004.9,575.7 1005.0,564.0 1005.1,582.7 1005.3,575.7 1005.4,568.7 1005.5,568.7 1005.7,573.3 1005.8,573.3 1005.9,578.0 1006.1,575.7 1006.2,561.7 1006.3,582.7 1006.5,578.0 1006.6,568.7 1006.7,573.3 1006.9,575.7 1007.0,559.3 1007.1,592.0 1007.3,592.0 1007.4,564.0 1007.5,582.7 1007.7,552.3 1007.8,585.0 1007.9,568.7 1008.1,575.7 1008.2,589.7 1008.3,557.0 1008.5,575.7 1008.6,566.3 1008.7,580.3 1008.9,585.0 1009.0,564.0 1009.1,573.3 1009.2,580.3 1009.4,573.3 1009.5,589.7 1009.6,559.3 1009.8,578.0 1009.9,578.0 1010.0,589.7 1010.2,571.0 1010.3,585.0 1010.4,580.3 1010.6,568.7 1010.7,557.0 1010.8,568.7 1011.0,594.3 1011.1,578.0 1011.2,585.0 1011.4,561.7 1011.5,580.3 1011.6,573.3 1011.8,573.3 1011.9,564.0 1012.0,566.3 1012.2,580.3 1012.3,554.7 1012.4,582.7 1012.6,575.7 1012.7,578.0 1012.8,578.0 1013.0,589.7 1013.1,568.7 1013.2,575.7 1013.4,571.0 1013.5,575.7 1013.6,575.7 1013.8,547.7 1013.9,582.7 1014.0,580.3 1014.1,596.7 1014.3,582.7 1014.4,545.3 1014.5,559.3 1014.7,568.7 1014.8,580.3 1014.9,568.7 1015.1,557.0 1015.2,585.0 1015.3,568.7 1015.5,564.0 1015.6,559.3 1015.7,582.7 1015.9,571.0 1016.0,557.0 1016.1,587.3 1016.3,575.7 1016.4,587.3 1016.5,578.0 1016.7,568.7 1016.8,575.7 1016.9,582.7 1017.1,571.0 1017.2,559.3 1017.3,578.0 1017.5,585.0 1017.6,573.3 1017.7,592.0 1017.9,580.3 1018.0,568.7 1018.1,587.3 1018.3,580.3 1018.4,561.7 1018.5,578.0 1018.6,557.0 1018.8,571.0 1018.9,592.0 1019.0,585.0 1019.2,568.7 1019.3,566.3 1019.4,571.0 1019.6,564.0 1019.7,573.3 1019.8,594.3 1020.0,568.7 1020.1,573.3 1020.2,568.7 1020.4,575.7 1020.5,566.3 1020.6,573.3 1020.8,580.3 1020.9,575.7 1021.0,571.0 1021.2,568.7 1021.3,552.3 1021.4,564.0 1021.6,585.0 1021.7,575.7 1021.8,573.3 1022.0,573.3 1022.1,578.0 1022.2,592.0 1022.4,589.7 1022.5,559.3 1022.6,568.7 1022.8,578.0 1022.9,564.0 1023.0,571.0 1023.2,573.3 1023.3,580.3 1023.4,571.0 1023.5,564.0 1023.7,561.7 1023.8,564.0 1023.9,568.7 1024.1,585.0 1024.2,580.3 1024.3,568.7 1024.5,559.3 1024.6,573.3 1024.7,571.0 1024.9,575.7 1025.0,603.7 1025.1,592.0 1025.3,564.0 1025.4,568.7 1025.5,589.7 1025.7,571.0 1025.8,594.3 1025.9,585.0 1026.1,573.3 1026.2,568.7 1026.3,580.3 1026.5,580.3 1026.6,566.3 1026.7,571.0 1026.9,587.3 1027.0,559.3 1027.1,571.0 1027.3,585.0 1027.4,580.3 1027.5,582.7 1027.7,564.0 1027.8,585.0 1027.9,568.7 1028.0,575.7 1028.2,587.3 1028.3,568.7 1028.4,585.0 1028.6,589.7 1028.7,575.7 1028.8,575.7 1029.0,557.0 1029.1,589.7 1029.2,580.3 1029.4,564.0 1029.5,552.3 1029.6,571.0 1029.8,571.0 1029.9,568.7 1030.0,580.3 1030.2,582.7 1030.3,557.0 1030.4,578.0 1030.6,557.0 1030.7,571.0 1030.8,582.7 1031.0,587.3 1031.1,587.3 1031.2,587.3 1031.4,578.0 1031.5,564.0 1031.6,585.0 1031.8,580.3 1031.9,580.3 1032.0,557.0 1032.2,582.7 1032.3,573.3 1032.4,589.7 1032.6,571.0 1032.7,557.0 1032.8,566.3 1032.9,571.0 1033.1,568.7 1033.2,578.0 1033.3,568.7 1033.5,559.3 1033.6,566.3 1033.7,568.7 1033.9,580.3 1034.0,580.3 1034.1,582.7 1034.3,564.0 1034.4,582.7 1034.5,554.7 1034.7,561.7 1034.8,571.0 1034.9,573.3 1035.1,573.3 1035.2,589.7 1035.3,582.7 1035.5,580.3 1035.6,578.0 1035.7,585.0 1035.9,587.3 1036.0,589.7 1036.1,585.0 1036.3,578.0 1036.4,566.3 1036.5,573.3 1036.7,568.7 1036.8,580.3 1036.9,578.0 1037.1,571.0 1037.2,564.0 1037.3,573.3 1037.5,573.3 1037.6,573.3 1037.7,580.3 1037.8,561.7 1038.0,585.0 1038.1,559.3 1038.2,566.3 1038.4,566.3 1038.5,575.7 1038.6,568.7 1038.8,592.0 1038.9,589.7 1039.0,580.3 1039.2,587.3 1039.3,580.3 1039.4,582.7 1039.6,580.3 1039.7,571.0 1039.8,585.0 1040.0,580.3 1040.1,580.3 1040.2,564.0 1040.4,575.7 1040.5,578.0 1040.6,575.7 1040.8,589.7 1040.9,578.0 1041.0,566.3 1041.2,573.3 1041.3,585.0 1041.4,599.0 1041.6,582.7 1041.7,578.0 1041.8,568.7 1042.0,571.0 1042.1,587.3 1042.2,573.3 1042.3,552.3 1042.5,582.7 1042.6,559.3 1042.7,585.0 1042.9,568.7 1043.0,587.3 1043.1,575.7 1043.3,582.7 1043.4,557.0 1043.5,585.0 1043.7,550.0 1043.8,580.3 1043.9,573.3 1044.1,575.7 1044.2,587.3 1044.3,568.7 1044.5,559.3 1044.6,585.0 1044.7,564.0 1044.9,582.7 1045.0,594.3 1045.1,575.7 1045.3,571.0 1045.4,568.7 1045.5,578.0 1045.7,552.3 1045.8,573.3 1045.9,566.3 1046.1,580.3 1046.2,575.7 1046.3,568.7 1046.5,571.0 1046.6,592.0 1046.7,568.7 1046.9,554.7 1047.0,580.3 1047.1,578.0 1047.2,575.7 1047.4,578.0 1047.5,573.3 1047.6,568.7 1047.8,568.7 1047.9,594.3 1048.0,564.0 1048.2,557.0 1048.3,578.0 1048.4,575.7 1048.6,573.3 1048.7,575.7 1048.8,592.0 1049.0,578.0 1049.1,564.0 1049.2,552.3 1049.4,587.3 1049.5,571.0 1049.6,585.0 1049.8,575.7 1049.9,585.0 1050.0,592.0 1050.2,587.3 1050.3,587.3 1050.4,571.0 1050.6,578.0 1050.7,589.7 1050.8,589.7 1051.0,587.3 1051.1,573.3 1051.2,580.3 1051.4,571.0 1051.5,578.0 1051.6,580.3 1051.7,589.7 1051.9,561.7 1052.0,582.7 1052.1,582.7 1052.3,566.3 1052.4,582.7 1052.5,571.0 1052.7,566.3 1052.8,585.0 1052.9,571.0 1053.1,599.0 1053.2,566.3 1053.3,568.7 1053.5,571.0 1053.6,582.7 1053.7,582.7 1053.9,578.0 1054.0,550.0 1054.1,589.7 1054.3,582.7 1054.4,566.3 1054.5,580.3 1054.7,578.0 1054.8,561.7 1054.9,580.3 1055.1,571.0 1055.2,582.7 1055.3,573.3 1055.5,582.7 1055.6,554.7 1055.7,578.0 1055.9,594.3 1056.0,580.3 1056.1,575.7 1056.3,594.3 1056.4,575.7 1056.5,566.3 1056.6,580.3 1056.8,554.7 1056.9,557.0 1057.0,571.0 1057.2,578.0 1057.3,585.0 1057.4,578.0 1057.6,580.3 1057.7,575.7 1057.8,575.7 1058.0,561.7 1058.1,587.3 1058.2,582.7 1058.4,566.3 1058.5,575.7 1058.6,575.7 1058.8,564.0 1058.9,554.7 1059.0,571.0 1059.2,571.0 1059.3,587.3 1059.4,568.7 1059.6,568.7 1059.7,561.7 1059.8,573.3 1060.0,568.7 1060.1,573.3 1060.2,573.3 1060.4,582.7 1060.5,578.0 1060.6,571.0 1060.8,547.7 1060.9,585.0 1061.0,566.3 1061.2,573.3 1061.3,571.0 1061.4,578.0 1061.5,554.7 1061.7,559.3 1061.8,573.3 1061.9,580.3 1062.1,582.7 1062.2,573.3 1062.3,564.0 1062.5,564.0 1062.6,575.7 1062.7,580.3 1062.9,580.3 1063.0,587.3 1063.1,587.3 1063.3,580.3 1063.4,573.3 1063.5,575.7 1063.7,580.3 1063.8,571.0 1063.9,594.3 1064.1,587.3 1064.2,575.7 1064.3,582.7 1064.5,587.3 1064.6,568.7 1064.7,571.0 1064.9,589.7 1065.0,582.7 1065.1,580.3 1065.3,592.0 1065.4,568.7 1065.5,594.3 1065.7,566.3 1065.8,571.0 1065.9,585.0 1066.0,566.3 1066.2,580.3 1066.3,571.0 1066.4,585.0 1066.6,578.0 1066.7,578.0 1066.8,580.3 1067.0,601.3 1067.1,568.7 1067.2,580.3 1067.4,580.3 1067.5,582.7 1067.6,592.0 1067.8,575.7 1067.9,580.3 1068.0,552.3 1068.2,580.3 1068.3,582.7 1068.4,580.3 1068.6,575.7 1068.7,561.7 1068.8,564.0 1069.0,596.7 1069.1,573.3 1069.2,592.0 1069.4,568.7 1069.5,589.7 1069.6,573.3 1069.8,589.7 1069.9,578.0 1070.0,578.0 1070.2,561.7 1070.3,599.0 1070.4,580.3 1070.6,559.3 1070.7,561.7 1070.8,568.7 1070.9,571.0 1071.1,571.0 1071.2,568.7 1071.3,575.7 1071.5,580.3 1071.6,582.7 1071.7,575.7 1071.9,580.3 1072.0,582.7 1072.1,573.3 1072.3,575.7 1072.4,589.7 1072.5,585.0 1072.7,571.0 1072.8,580.3 1072.9,564.0 1073.1,578.0 1073.2,568.7 1073.3,566.3 1073.5,571.0 1073.6,564.0 1073.7,599.0 1073.9,571.0 1074.0,575.7 1074.1,610.7 1074.3,585.0 1074.4,582.7 1074.5,582.7 1074.7,575.7 1074.8,585.0 1074.9,575.7 1075.1,580.3 1075.2,561.7 1075.3,582.7 1075.4,578.0 1075.6,575.7 1075.7,575.7 1075.8,571.0 1076.0,575.7 1076.1,580.3 1076.2,571.0 1076.4,585.0 1076.5,575.7 1076.6,568.7 1076.8,587.3 1076.9,573.3 1077.0,566.3 1077.2,564.0 1077.3,580.3 1077.4,559.3 1077.6,568.7 1077.7,568.7 1077.8,571.0 1078.0,578.0 1078.1,566.3 1078.2,580.3 1078.4,561.7 1078.5,571.0 1078.6,568.7 1078.8,573.3 1078.9,571.0 1079.0,561.7 1079.2,568.7 1079.3,571.0 1079.4,582.7 1079.6,587.3 1079.7,580.3 1079.8,554.7 1080.0,585.0 1080.1,575.7 1080.2,573.3 1080.3,564.0 1080.5,587.3 1080.6,575.7 1080.7,554.7 1080.9,578.0 1081.0,573.3 1081.1,573.3 1081.3,578.0 1081.4,582.7 1081.5,547.7 1081.7,573.3 1081.8,575.7 1081.9,575.7 1082.1,568.7 1082.2,578.0 1082.3,582.7 1082.5,580.3 1082.6,545.3 1082.7,564.0 1082.9,559.3 1083.0,568.7 1083.1,561.7 1083.3,568.7 1083.4,585.0 1083.5,557.0 1083.7,582.7 1083.8,573.3 1083.9,554.7 1084.1,540.7 1084.2,564.0 1084.3,561.7 1084.5,594.3 1084.6,550.0 1084.7,566.3 1084.8,582.7 1085.0,606.0 1085.1,589.7 1085.2,592.0 1085.4,547.7 1085.5,580.3 1085.6,589.7 1085.8,575.7 1085.9,580.3 1086.0,564.0 1086.2,582.7 1086.3,557.0 1086.4,585.0 1086.6,580.3 1086.7,575.7 1086.8,580.3 1087.0,596.7 1087.1,578.0 1087.2,571.0 1087.4,585.0 1087.5,568.7 1087.6,575.7 1087.8,559.3 1087.9,566.3 1088.0,580.3 1088.2,568.7 1088.3,587.3 1088.4,580.3 1088.6,566.3 1088.7,596.7 1088.8,547.7 1089.0,566.3 1089.1,566.3 1089.2,594.3 1089.4,571.0 1089.5,578.0 1089.6,594.3 1089.7,578.0 1089.9,585.0 1090.0,571.0 1090.1,559.3 1090.3,566.3 1090.4,559.3 1090.5,587.3 1090.7,587.3 1090.8,589.7 1090.9,568.7 1091.1,571.0 1091.2,589.7 1091.3,564.0 1091.5,575.7 1091.6,564.0 1091.7,578.0 1091.9,568.7 1092.0,580.3 1092.1,573.3 1092.3,575.7 1092.4,578.0 1092.5,580.3 1092.7,585.0 1092.8,564.0 1092.9,564.0 1093.1,580.3 1093.2,589.7 1093.3,566.3 1093.5,587.3 1093.6,559.3 1093.7,571.0 1093.9,566.3 1094.0,578.0 1094.1,571.0 1094.2,587.3 1094.4,592.0 1094.5,557.0 1094.6,575.7 1094.8,585.0 1094.9,571.0 1095.0,582.7 1095.2,594.3 1095.3,582.7 1095.4,571.0 1095.6,557.0 1095.7,575.7 1095.8,582.7 1096.0,592.0 1096.1,575.7 1096.2,568.7 1096.4,585.0 1096.5,594.3 1096.6,571.0 1096.8,575.7 1096.9,561.7 1097.0,566.3 1097.2,589.7 1097.3,592.0 1097.4,568.7 1097.6,552.3 1097.7,571.0 1097.8,578.0 1098.0,573.3 1098.1,566.3 1098.2,568.7 1098.4,575.7 1098.5,566.3 1098.6,575.7 1098.8,580.3 1098.9,575.7 1099.0,550.0 1099.1,585.0 1099.3,578.0 1099.4,587.3 1099.5,571.0 1099.7,582.7 1099.8,580.3 1099.9,571.0 1100.1,573.3 1100.2,573.3 1100.3,571.0 1100.5,573.3 1100.6,573.3 1100.7,589.7 1100.9,564.0 1101.0,566.3 1101.1,585.0 1101.3,573.3 1101.4,561.7 1101.5,578.0 1101.7,573.3 1101.8,568.7 1101.9,568.7 1102.1,582.7 1102.2,571.0 1102.3,568.7 1102.5,580.3 1102.6,582.7 1102.7,561.7 1102.9,575.7 1103.0,571.0 1103.1,585.0 1103.3,571.0 1103.4,587.3 1103.5,578.0 1103.7,580.3 1103.8,580.3 1103.9,582.7 1104.0,594.3 1104.2,575.7 1104.3,568.7 1104.4,557.0 1104.6,573.3 1104.7,585.0 1104.8,578.0 1105.0,557.0 1105.1,585.0 1105.2,559.3 1105.4,573.3 1105.5,571.0 1105.6,582.7 1105.8,552.3 1105.9,575.7 1106.0,575.7 1106.2,568.7 1106.3,592.0 1106.4,592.0 1106.6,564.0 1106.7,561.7 1106.8,575.7 1107.0,596.7 1107.1,578.0 1107.2,592.0 1107.4,559.3 1107.5,580.3 1107.6,566.3 1107.8,589.7 1107.9,566.3 1108.0,568.7 1108.2,571.0 1108.3,554.7 1108.4,557.0 1108.5,592.0 1108.7,580.3 1108.8,578.0 1108.9,585.0 1109.1,564.0 1109.2,592.0 1109.3,578.0 1109.5,585.0 1109.6,592.0 1109.7,561.7 1109.9,564.0 1110.0,601.3 1110.1,571.0 1110.3,587.3 1110.4,557.0 1110.5,573.3 1110.7,557.0 1110.8,578.0 1110.9,573.3 1111.1,580.3 1111.2,571.0 1111.3,571.0 1111.5,561.7 1111.6,578.0 1111.7,559.3 1111.9,552.3 1112.0,594.3 1112.1,578.0 1112.3,578.0 1112.4,587.3 1112.5,575.7 1112.7,573.3 1112.8,580.3 1112.9,566.3 1113.1,582.7 1113.2,589.7 1113.3,578.0 1113.4,575.7 1113.6,564.0 1113.7,578.0 1113.8,575.7 1114.0,571.0 1114.1,580.3 1114.2,568.7 1114.4,578.0 1114.5,573.3 1114.6,580.3 1114.8,543.0 1114.9,603.7 1115.0,578.0 1115.2,580.3 1115.3,573.3 1115.4,557.0 1115.6,566.3 1115.7,582.7 1115.8,571.0 1116.0,564.0 1116.1,568.7 1116.2,575.7 1116.4,575.7 1116.5,578.0 1116.6,573.3 1116.8,571.0 1116.9,578.0 1117.0,566.3 1117.2,580.3 1117.3,564.0 1117.4,557.0 1117.6,561.7 1117.7,571.0 1117.8,585.0 1117.9,568.7 1118.1,575.7 1118.2,592.0 1118.3,559.3 1118.5,557.0 1118.6,568.7 1118.7,580.3 1118.9,566.3 1119.0,564.0 1119.1,599.0 1119.3,594.3 1119.4,585.0 1119.5,568.7 1119.7,575.7 1119.8,573.3 1119.9,575.7 1120.1,564.0 1120.2,568.7 1120.3,585.0 1120.5,568.7 1120.6,575.7 1120.7,559.3 1120.9,559.3 1121.0,587.3 1121.1,571.0 1121.3,559.3 1121.4,580.3 1121.5,566.3 1121.7,573.3 1121.8,566.3 1121.9,561.7 1122.1,561.7 1122.2,578.0 1122.3,575.7 1122.5,580.3 1122.6,585.0 1122.7,571.0 1122.8,571.0 1123.0,587.3 1123.1,561.7 1123.2,594.3 1123.4,592.0 1123.5,575.7 1123.6,564.0 1123.8,564.0 1123.9,550.0 1124.0,573.3 1124.2,568.7 1124.3,578.0 1124.4,615.3 1124.6,592.0 1124.7,578.0 1124.8,582.7 1125.0,561.7 1125.1,582.7 1125.2,564.0 1125.4,578.0 1125.5,561.7 1125.6,554.7 1125.8,561.7 1125.9,566.3 1126.0,578.0 1126.2,592.0 1126.3,559.3 1126.4,566.3 1126.6,589.7 1126.7,566.3 1126.8,578.0 1127.0,566.3 1127.1,571.0 1127.2,589.7 1127.3,568.7 1127.5,568.7 1127.6,568.7 1127.7,594.3 1127.9,566.3 1128.0,580.3 1128.1,575.7 1128.3,561.7 1128.4,582.7 1128.5,559.3 1128.7,550.0 1128.8,585.0 1128.9,578.0 1129.1,582.7 1129.2,578.0 1129.3,573.3 1129.5,566.3 1129.6,578.0 1129.7,561.7 1129.9,575.7 1130.0,575.7 1130.1,573.3 1130.3,564.0 1130.4,571.0 1130.5,573.3 1130.7,578.0 1130.8,573.3 1130.9,571.0 1131.1,557.0 1131.2,575.7 1131.3,582.7 1131.5,578.0 1131.6,575.7 1131.7,571.0 1131.9,580.3 1132.0,582.7 1132.1,599.0 1132.2,557.0 1132.4,582.7 1132.5,568.7 1132.6,568.7 1132.8,587.3 1132.9,575.7 1133.0,568.7 1133.2,559.3 1133.3,566.3 1133.4,596.7 1133.6,582.7 1133.7,580.3 1133.8,552.3 1134.0,587.3 1134.1,552.3 1134.2,571.0 1134.4,575.7 1134.5,580.3 1134.6,557.0 1134.8,578.0 1134.9,568.7 1135.0,578.0 1135.2,585.0 1135.3,594.3 1135.4,573.3 1135.6,578.0 1135.7,587.3 1135.8,596.7 1136.0,575.7 1136.1,589.7 1136.2,571.0 1136.4,557.0 1136.5,554.7 1136.6,557.0 1136.8,578.0 1136.9,561.7 1137.0,578.0 1137.1,571.0 1137.3,582.7 1137.4,571.0 1137.5,557.0 1137.7,566.3 1137.8,587.3 1137.9,578.0 1138.1,580.3 1138.2,587.3 1138.3,589.7 1138.5,554.7 1138.6,564.0 1138.7,594.3 1138.9,585.0 1139.0,566.3 1139.1,580.3 1139.3,585.0 1139.4,580.3 1139.5,587.3 1139.7,580.3 1139.8,573.3 1139.9,564.0 1140.1,566.3 1140.2,589.7 1140.3,561.7 1140.5,575.7 1140.6,582.7 1140.7,568.7 1140.9,589.7 1141.0,564.0 1141.1,580.3 1141.3,566.3 1141.4,557.0 1141.5,585.0 1141.6,573.3 1141.8,575.7 1141.9,571.0 1142.0,566.3 1142.2,580.3 1142.3,585.0 1142.4,578.0 1142.6,587.3 1142.7,575.7 1142.8,589.7 1143.0,550.0 1143.1,596.7 1143.2,585.0 1143.4,564.0 1143.5,564.0 1143.6,571.0 1143.8,585.0 1143.9,550.0 1144.0,571.0 1144.2,561.7 1144.3,571.0 1144.4,599.0 1144.6,587.3 1144.7,564.0 1144.8,573.3 1145.0,587.3 1145.1,580.3 1145.2,564.0 1145.4,582.7 1145.5,575.7 1145.6,573.3 1145.8,554.7 1145.9,594.3 1146.0,578.0 1146.2,557.0 1146.3,578.0 1146.4,578.0 1146.5,571.0 1146.7,566.3 1146.8,578.0 1146.9,580.3 1147.1,573.3 1147.2,573.3 1147.3,587.3 1147.5,571.0 1147.6,573.3 1147.7,589.7 1147.9,564.0 1148.0,587.3 1148.1,606.0 1148.3,568.7 1148.4,561.7 1148.5,571.0 1148.7,580.3 1148.8,552.3 1148.9,596.7 1149.1,580.3 1149.2,582.7 1149.3,578.0 1149.5,582.7 1149.6,573.3 1149.7,585.0 1149.9,564.0 1150.0,559.3 1150.1,575.7 1150.3,568.7 1150.4,580.3 1150.5,557.0 1150.7,554.7 1150.8,582.7 1150.9,580.3 1151.0,571.0 1151.2,564.0 1151.3,564.0 1151.4,580.3 1151.6,561.7 1151.7,573.3 1151.8,596.7 1152.0,573.3 1152.1,573.3 1152.2,566.3 1152.4,568.7 1152.5,592.0 1152.6,552.3 1152.8,582.7 1152.9,564.0 1153.0,561.7 1153.2,573.3 1153.3,580.3 1153.4,561.7 1153.6,578.0 1153.7,561.7 1153.8,578.0 1154.0,589.7 1154.1,575.7 1154.2,580.3 1154.4,580.3 1154.5,596.7 1154.6,557.0 1154.8,596.7 1154.9,573.3 1155.0,582.7 1155.2,566.3 1155.3,571.0 1155.4,573.3 1155.6,578.0 1155.7,589.7 1155.8,568.7 1155.9,578.0 1156.1,564.0 1156.2,573.3 1156.3,578.0 1156.5,566.3 1156.6,578.0 1156.7,575.7 1156.9,566.3 1157.0,568.7 1157.1,564.0 1157.3,575.7 1157.4,561.7 1157.5,580.3 1157.7,575.7 1157.8,580.3 1157.9,582.7 1158.1,575.7 1158.2,575.7 1158.3,580.3 1158.5,589.7 1158.6,578.0 1158.7,573.3 1158.9,557.0 1159.0,578.0 1159.1,589.7 1159.3,571.0 1159.4,552.3 1159.5,573.3 1159.7,578.0 1159.8,566.3 1159.9,571.0 1160.1,575.7 1160.2,571.0 1160.3,575.7 1160.5,580.3 1160.6,571.0 1160.7,554.7 1160.8,582.7 1161.0,589.7 1161.1,571.0 1161.2,552.3 1161.4,564.0 1161.5,559.3 1161.6,589.7 1161.8,559.3 1161.9,596.7 1162.0,571.0 1162.2,587.3 1162.3,578.0 1162.4,561.7 1162.6,559.3 1162.7,578.0 1162.8,571.0 1163.0,571.0 1163.1,575.7 1163.2,582.7 1163.4,559.3 1163.5,578.0 1163.6,564.0 1163.8,585.0 1163.9,575.7 1164.0,566.3 1164.2,587.3 1164.3,564.0 1164.4,568.7 1164.6,582.7 1164.7,571.0 1164.8,589.7 1165.0,568.7 1165.1,578.0 1165.2,571.0 1165.3,564.0 1165.5,571.0 1165.6,582.7 1165.7,582.7 1165.9,575.7 1166.0,573.3 1166.1,559.3 1166.3,573.3 1166.4,575.7 1166.5,578.0 1166.7,568.7 1166.8,578.0 1166.9,568.7 1167.1,585.0 1167.2,573.3 1167.3,585.0 1167.5,571.0 1167.6,566.3 1167.7,568.7 1167.9,568.7 1168.0,571.0 1168.1,575.7 1168.3,589.7 1168.4,571.0 1168.5,573.3 1168.7,575.7 1168.8,571.0 1168.9,564.0 1169.1,580.3 1169.2,580.3 1169.3,568.7 1169.5,578.0 1169.6,578.0 1169.7,587.3 1169.9,582.7 1170.0,582.7 1170.1,575.7 1170.2,566.3 1170.4,566.3 1170.5,571.0 1170.6,568.7 1170.8,587.3 1170.9,559.3 1171.0,550.0 1171.2,587.3 1171.3,566.3 1171.4,589.7 1171.6,564.0 1171.7,571.0 1171.8,561.7 1172.0,575.7 1172.1,564.0 1172.2,592.0 1172.4,571.0 1172.5,580.3 1172.6,594.3 1172.8,568.7 1172.9,575.7 1173.0,559.3 1173.2,564.0 1173.3,580.3 1173.4,568.7 1173.6,596.7 1173.7,575.7 1173.8,561.7 1174.0,575.7 1174.1,578.0 1174.2,596.7 1174.4,594.3 1174.5,568.7 1174.6,589.7 1174.7,554.7 1174.9,571.0 1175.0,552.3 1175.1,582.7 1175.3,564.0 1175.4,585.0 1175.5,559.3 1175.7,594.3 1175.8,578.0 1175.9,575.7 1176.1,568.7 1176.2,561.7 1176.3,589.7 1176.5,578.0 1176.6,578.0 1176.7,608.3 1176.9,554.7 1177.0,580.3 1177.1,554.7 1177.3,571.0 1177.4,578.0 1177.5,559.3 1177.7,561.7 1177.8,592.0 1177.9,580.3 1178.1,571.0 1178.2,561.7 1178.3,587.3 1178.5,571.0 1178.6,557.0 1178.7,582.7 1178.9,575.7 1179.0,596.7 1179.1,580.3 1179.3,578.0 1179.4,596.7 1179.5,571.0 1179.6,552.3 1179.8,559.3 1179.9,587.3 1180.0,568.7 1180.2,568.7 1180.3,582.7 1180.4,564.0 1180.6,571.0 1180.7,578.0 1180.8,571.0 1181.0,585.0 1181.1,568.7 1181.2,596.7 1181.4,575.7 1181.5,582.7 1181.6,587.3 1181.8,575.7 1181.9,573.3 1182.0,596.7 1182.2,589.7 1182.3,571.0 1182.4,559.3 1182.6,580.3 1182.7,578.0 1182.8,573.3 1183.0,573.3 1183.1,580.3 1183.2,575.7" clip-path="url(#c3)" stroke="#0000ff" stroke-width="1.7" fill="none" stroke-linejoin="round"/>
<rect x="911.0" y="517.0" width="274.0" height="120.0" fill="none" stroke="#000" stroke-width="1.7"/>
<path d="M912 637.0v7.0M978 637.0v7.0M1045 637.0v7.0M1111 637.0v7.0M1177 637.0v7.0" stroke="#000" stroke-width="2.0" fill="none"/>
<text x="912.6" y="659.9" font-size="10.4" text-anchor="middle">0</text>
<text x="978.5" y="659.9" font-size="10.4" text-anchor="middle">500</text>
<text x="1045.2" y="659.9" font-size="10.4" text-anchor="middle" letter-spacing="-0.3">1000</text>
<text x="1111.2" y="659.9" font-size="10.4" text-anchor="middle" letter-spacing="-0.3">1500</text>
<text x="1177.2" y="659.9" font-size="10.4" text-anchor="middle" letter-spacing="-0.3">2000</text>
<path d="M911.0 620h-7.0M911.0 573h-7.0M911.0 527h-7.0" stroke="#000" stroke-width="2.0" fill="none"/>
<text x="895.5" y="623.9" font-size="10.4" text-anchor="end" letter-spacing="-0.3">200</text>
<text x="895.5" y="576.9" font-size="10.4" text-anchor="end" letter-spacing="-0.3">220</text>
<text x="895.5" y="530.9" font-size="10.4" text-anchor="end" letter-spacing="-0.3">240</text>
<text x="1048" y="678.0" font-size="10.4" text-anchor="middle">X</text>
<text x="865.8" y="578" font-size="10.4" text-anchor="middle" transform="rotate(-90 865.8 578)">counts</text>
<text x="1194.1" y="575" font-size="10.4" text-anchor="middle" transform="rotate(90 1194.1 575)">cut in x</text>
<rect x="1116" y="520.1" width="66" height="15.8" rx="2" fill="#fff" fill-opacity="0.8" stroke="#ccc" stroke-width="1"/>
<path d="M1118.1 527.9H1139.8" stroke="#0000ff" stroke-width="1.7"/>
<text x="1144.2" y="531.0" font-size="10.3">y=517</text>
<clipPath id="c4"><rect x="911.0" y="689.0" width="274.0" height="120.0"/></clipPath>
<polyline points="913.2,908.6 913.5,862.0 913.7,796.7 914.0,780.3 914.2,766.3 914.5,745.3 914.8,736.0 915.0,743.0 915.3,752.3 915.5,747.7 915.8,759.3 916.1,757.0 916.3,747.7 916.6,740.7 916.8,773.3 917.1,754.7 917.3,754.7 917.6,745.3 917.9,738.3 918.1,738.3 918.4,768.7 918.6,731.3 918.9,745.3 919.2,745.3 919.4,757.0 919.7,768.7 919.9,740.7 920.2,757.0 920.5,761.7 920.7,743.0 921.0,757.0 921.2,752.3 921.5,754.7 921.8,736.0 922.0,773.3 922.3,747.7 922.5,747.7 922.8,759.3 923.1,750.0 923.3,745.3 923.6,738.3 923.8,743.0 924.1,745.3 924.3,745.3 924.6,787.3 924.9,752.3 925.1,754.7 925.4,759.3 925.6,750.0 925.9,738.3 926.2,764.0 926.4,747.7 926.7,747.7 926.9,743.0 927.2,743.0 927.5,740.7 927.7,759.3 928.0,764.0 928.2,731.3 928.5,768.7 928.8,764.0 929.0,766.3 929.3,743.0 929.5,740.7 929.8,747.7 930.1,750.0 930.3,768.7 930.6,745.3 930.8,768.7 931.1,736.0 931.4,754.7 931.6,740.7 931.9,747.7 932.1,743.0 932.4,764.0 932.6,750.0 932.9,745.3 933.2,768.7 933.4,733.7 933.7,747.7 933.9,752.3 934.2,747.7 934.5,750.0 934.7,764.0 935.0,743.0 935.2,750.0 935.5,752.3 935.8,754.7 936.0,743.0 936.3,719.7 936.5,761.7 936.8,757.0 937.1,752.3 937.3,747.7 937.6,736.0 937.8,761.7 938.1,747.7 938.4,745.3 938.6,759.3 938.9,736.0 939.1,759.3 939.4,740.7 939.6,745.3 939.9,759.3 940.2,750.0 940.4,766.3 940.7,736.0 940.9,754.7 941.2,745.3 941.5,750.0 941.7,754.7 942.0,754.7 942.2,747.7 942.5,745.3 942.8,750.0 943.0,745.3 943.3,764.0 943.5,745.3 943.8,750.0 944.1,731.3 944.3,743.0 944.6,738.3 944.8,759.3 945.1,745.3 945.4,757.0 945.6,750.0 945.9,745.3 946.1,754.7 946.4,752.3 946.6,754.7 946.9,754.7 947.2,752.3 947.4,768.7 947.7,747.7 947.9,754.7 948.2,752.3 948.5,752.3 948.7,745.3 949.0,733.7 949.2,747.7 949.5,757.0 949.8,752.3 950.0,738.3 950.3,757.0 950.5,736.0 950.8,766.3 951.1,738.3 951.3,759.3 951.6,745.3 951.8,754.7 952.1,747.7 952.4,771.0 952.6,752.3 952.9,738.3 953.1,736.0 953.4,757.0 953.7,750.0 953.9,764.0 954.2,740.7 954.4,733.7 954.7,736.0 954.9,745.3 955.2,740.7 955.5,743.0 955.7,754.7 956.0,745.3 956.2,750.0 956.5,752.3 956.8,745.3 957.0,759.3 957.3,754.7 957.5,757.0 957.8,745.3 958.1,750.0 958.3,726.7 958.6,747.7 958.8,745.3 959.1,759.3 959.4,733.7 959.6,745.3 959.9,733.7 960.1,738.3 960.4,736.0 960.7,745.3 960.9,740.7 961.2,752.3 961.4,759.3 961.7,740.7 961.9,738.3 962.2,738.3 962.5,754.7 962.7,759.3 963.0,750.0 963.2,733.7 963.5,743.0 963.8,761.7 964.0,752.3 964.3,757.0 964.5,750.0 964.8,738.3 965.1,747.7 965.3,738.3 965.6,745.3 965.8,752.3 966.1,745.3 966.4,747.7 966.6,745.3 966.9,754.7 967.1,752.3 967.4,780.3 967.7,729.0 967.9,747.7 968.2,731.3 968.4,764.0 968.7,736.0 968.9,761.7 969.2,736.0 969.5,731.3 969.7,754.7 970.0,759.3 970.2,752.3 970.5,766.3 970.8,750.0 971.0,731.3 971.3,752.3 971.5,745.3 971.8,729.0 972.1,773.3 972.3,733.7 972.6,729.0 972.8,759.3 973.1,771.0 973.4,745.3 973.6,752.3 973.9,759.3 974.1,750.0 974.4,757.0 974.7,754.7 974.9,745.3 975.2,745.3 975.4,747.7 975.7,738.3 976.0,754.7 976.2,736.0 976.5,761.7 976.7,766.3 977.0,750.0 977.2,750.0 977.5,759.3 977.8,752.3 978.0,757.0 978.3,752.3 978.5,740.7 978.8,736.0 979.1,743.0 979.3,740.7 979.6,754.7 979.8,733.7 980.1,740.7 980.4,738.3 980.6,747.7 980.9,752.3 981.1,759.3 981.4,750.0 981.7,757.0 981.9,759.3 982.2,745.3 982.4,736.0 982.7,743.0 983.0,736.0 983.2,754.7 983.5,752.3 983.7,729.0 984.0,757.0 984.2,750.0 984.5,747.7 984.8,752.3 985.0,745.3 985.3,754.7 985.5,752.3 985.8,745.3 986.1,745.3 986.3,750.0 986.6,724.3 986.8,759.3 987.1,738.3 987.4,738.3 987.6,761.7 987.9,757.0 988.1,759.3 988.4,761.7 988.7,766.3 988.9,761.7 989.2,761.7 989.4,759.3 989.7,750.0 990.0,745.3 990.2,736.0 990.5,785.0 990.7,733.7 991.0,761.7 991.2,750.0 991.5,768.7 991.8,750.0 992.0,743.0 992.3,764.0 992.5,752.3 992.8,754.7 993.1,754.7 993.3,754.7 993.6,752.3 993.8,759.3 994.1,745.3 994.4,759.3 994.6,752.3 994.9,733.7 995.1,747.7 995.4,752.3 995.7,726.7 995.9,740.7 996.2,722.0 996.4,750.0 996.7,745.3 997.0,750.0 997.2,740.7 997.5,761.7 997.7,745.3 998.0,778.0 998.3,731.3 998.5,745.3 998.8,759.3 999.0,738.3 999.3,766.3 999.5,773.3 999.8,759.3 1000.1,747.7 1000.3,761.7 1000.6,719.7 1000.8,752.3 1001.1,740.7 1001.4,743.0 1001.6,750.0 1001.9,731.3 1002.1,724.3 1002.4,745.3 1002.7,740.7 1002.9,731.3 1003.2,750.0 1003.4,750.0 1003.7,754.7 1004.0,724.3 1004.2,738.3 1004.5,740.7 1004.7,731.3 1005.0,743.0 1005.3,736.0 1005.5,754.7 1005.8,740.7 1006.0,766.3 1006.3,747.7 1006.5,771.0 1006.8,743.0 1007.1,740.7 1007.3,733.7 1007.6,764.0 1007.8,750.0 1008.1,754.7 1008.4,743.0 1008.6,750.0 1008.9,766.3 1009.1,743.0 1009.4,736.0 1009.7,722.0 1009.9,736.0 1010.2,736.0 1010.4,738.3 1010.7,752.3 1011.0,731.3 1011.2,759.3 1011.5,736.0 1011.7,750.0 1012.0,731.3 1012.3,745.3 1012.5,750.0 1012.8,754.7 1013.0,766.3 1013.3,750.0 1013.5,750.0 1013.8,745.3 1014.1,757.0 1014.3,757.0 1014.6,743.0 1014.8,754.7 1015.1,743.0 1015.4,740.7 1015.6,743.0 1015.9,743.0 1016.1,745.3 1016.4,761.7 1016.7,743.0 1016.9,754.7 1017.2,740.7 1017.4,761.7 1017.7,752.3 1018.0,738.3 1018.2,750.0 1018.5,724.3 1018.7,743.0 1019.0,740.7 1019.3,764.0 1019.5,757.0 1019.8,733.7 1020.0,740.7 1020.3,757.0 1020.6,752.3 1020.8,738.3 1021.1,759.3 1021.3,745.3 1021.6,750.0 1021.8,738.3 1022.1,747.7 1022.4,754.7 1022.6,750.0 1022.9,780.3 1023.1,738.3 1023.4,719.7 1023.7,750.0 1023.9,775.7 1024.2,743.0 1024.4,752.3 1024.7,764.0 1025.0,736.0 1025.2,759.3 1025.5,736.0 1025.7,773.3 1026.0,766.3 1026.3,752.3 1026.5,757.0 1026.8,731.3 1027.0,733.7 1027.3,729.0 1027.6,740.7 1027.8,738.3 1028.1,740.7 1028.3,745.3 1028.6,754.7 1028.8,743.0 1029.1,752.3 1029.4,757.0 1029.6,754.7 1029.9,731.3 1030.1,736.0 1030.4,759.3 1030.7,726.7 1030.9,750.0 1031.2,757.0 1031.4,759.3 1031.7,740.7 1032.0,757.0 1032.2,743.0 1032.5,745.3 1032.7,724.3 1033.0,745.3 1033.3,759.3 1033.5,726.7 1033.8,738.3 1034.0,757.0 1034.3,757.0 1034.6,754.7 1034.8,754.7 1035.1,729.0 1035.3,754.7 1035.6,733.7 1035.8,754.7 1036.1,724.3 1036.4,754.7 1036.6,759.3 1036.9,747.7 1037.1,764.0 1037.4,752.3 1037.7,764.0 1037.9,729.0 1038.2,745.3 1038.4,747.7 1038.7,752.3 1039.0,743.0 1039.2,757.0 1039.5,726.7 1039.7,754.7 1040.0,757.0 1040.3,764.0 1040.5,740.7 1040.8,752.3 1041.0,743.0 1041.3,754.7 1041.6,733.7 1041.8,754.7 1042.1,745.3 1042.3,750.0 1042.6,736.0 1042.8,747.7 1043.1,736.0 1043.4,759.3 1043.6,768.7 1043.9,743.0 1044.1,757.0 1044.4,745.3 1044.7,750.0 1044.9,761.7 1045.2,759.3 1045.4,764.0 1045.7,768.7 1046.0,743.0 1046.2,745.3 1046.5,761.7 1046.7,759.3 1047.0,754.7 1047.3,736.0 1047.5,740.7 1047.8,740.7 1048.0,738.3 1048.3,750.0 1048.6,750.0 1048.8,743.0 1049.1,759.3 1049.3,764.0 1049.6,757.0 1049.9,750.0 1050.1,740.7 1050.4,736.0 1050.6,764.0 1050.9,733.7 1051.1,766.3 1051.4,736.0 1051.7,757.0 1051.9,738.3 1052.2,757.0 1052.4,738.3 1052.7,761.7 1053.0,761.7 1053.2,745.3 1053.5,747.7 1053.7,747.7 1054.0,740.7 1054.3,761.7 1054.5,747.7 1054.8,747.7 1055.0,757.0 1055.3,750.0 1055.6,759.3 1055.8,761.7 1056.1,745.3 1056.3,743.0 1056.6,743.0 1056.9,768.7 1057.1,766.3 1057.4,745.3 1057.6,757.0 1057.9,764.0 1058.1,752.3 1058.4,736.0 1058.7,738.3 1058.9,745.3 1059.2,731.3 1059.4,738.3 1059.7,726.7 1060.0,752.3 1060.2,724.3 1060.5,733.7 1060.7,731.3 1061.0,745.3 1061.3,759.3 1061.5,743.0 1061.8,729.0 1062.0,747.7 1062.3,740.7 1062.6,733.7 1062.8,747.7 1063.1,764.0 1063.3,745.3 1063.6,766.3 1063.9,736.0 1064.1,743.0 1064.4,736.0 1064.6,757.0 1064.9,757.0 1065.1,738.3 1065.4,729.0 1065.7,731.3 1065.9,745.3 1066.2,736.0 1066.4,731.3 1066.7,764.0 1067.0,738.3 1067.2,761.7 1067.5,750.0 1067.7,738.3 1068.0,754.7 1068.3,750.0 1068.5,736.0 1068.8,761.7 1069.0,757.0 1069.3,750.0 1069.6,726.7 1069.8,738.3 1070.1,761.7 1070.3,733.7 1070.6,750.0 1070.9,750.0 1071.1,736.0 1071.4,757.0 1071.6,747.7 1071.9,757.0 1072.2,738.3 1072.4,729.0 1072.7,745.3 1072.9,747.7 1073.2,736.0 1073.4,738.3 1073.7,764.0 1074.0,747.7 1074.2,752.3 1074.5,766.3 1074.7,745.3 1075.0,766.3 1075.3,738.3 1075.5,740.7 1075.8,729.0 1076.0,743.0 1076.3,740.7 1076.6,757.0 1076.8,750.0 1077.1,752.3 1077.3,747.7 1077.6,745.3 1077.9,757.0 1078.1,733.7 1078.4,733.7 1078.6,738.3 1078.9,747.7 1079.2,766.3 1079.4,764.0 1079.7,733.7 1079.9,743.0 1080.2,743.0 1080.4,736.0 1080.7,738.3 1081.0,745.3 1081.2,743.0 1081.5,745.3 1081.7,733.7 1082.0,750.0 1082.3,750.0 1082.5,736.0 1082.8,761.7 1083.0,750.0 1083.3,745.3 1083.6,768.7 1083.8,752.3 1084.1,722.0 1084.3,747.7 1084.6,736.0 1084.9,740.7 1085.1,743.0 1085.4,738.3 1085.6,747.7 1085.9,743.0 1086.2,738.3 1086.4,740.7 1086.7,731.3 1086.9,743.0 1087.2,738.3 1087.4,747.7 1087.7,729.0 1088.0,745.3 1088.2,754.7 1088.5,747.7 1088.7,724.3 1089.0,759.3 1089.3,752.3 1089.5,736.0 1089.8,752.3 1090.0,750.0 1090.3,757.0 1090.6,757.0 1090.8,747.7 1091.1,743.0 1091.3,726.7 1091.6,747.7 1091.9,740.7 1092.1,726.7 1092.4,771.0 1092.6,752.3 1092.9,754.7 1093.2,731.3 1093.4,733.7 1093.7,750.0 1093.9,745.3 1094.2,740.7 1094.5,752.3 1094.7,759.3 1095.0,750.0 1095.2,740.7 1095.5,750.0 1095.7,750.0 1096.0,733.7 1096.3,745.3 1096.5,726.7 1096.8,738.3 1097.0,731.3 1097.3,743.0 1097.6,757.0 1097.8,761.7 1098.1,754.7 1098.3,745.3 1098.6,759.3 1098.9,743.0 1099.1,743.0 1099.4,722.0 1099.6,764.0 1099.9,754.7 1100.2,757.0 1100.4,745.3 1100.7,750.0 1100.9,729.0 1101.2,752.3 1101.5,754.7 1101.7,736.0 1102.0,738.3 1102.2,754.7 1102.5,726.7 1102.7,740.7 1103.0,738.3 1103.3,759.3 1103.5,747.7 1103.8,754.7 1104.0,731.3 1104.3,754.7 1104.6,747.7 1104.8,740.7 1105.1,733.7 1105.3,726.7 1105.6,771.0 1105.9,775.7 1106.1,750.0 1106.4,759.3 1106.6,752.3 1106.9,752.3 1107.2,750.0 1107.4,743.0 1107.7,745.3 1107.9,747.7 1108.2,747.7 1108.5,766.3 1108.7,740.7 1109.0,757.0 1109.2,752.3 1109.5,747.7 1109.7,731.3 1110.0,752.3 1110.3,757.0 1110.5,745.3 1110.8,731.3 1111.0,743.0 1111.3,738.3 1111.6,759.3 1111.8,757.0 1112.1,754.7 1112.3,733.7 1112.6,750.0 1112.9,731.3 1113.1,743.0 1113.4,747.7 1113.6,752.3 1113.9,740.7 1114.2,761.7 1114.4,729.0 1114.7,743.0 1114.9,745.3 1115.2,768.7 1115.5,724.3 1115.7,738.3 1116.0,738.3 1116.2,752.3 1116.5,740.7 1116.8,761.7 1117.0,743.0 1117.3,750.0 1117.5,736.0 1117.8,738.3 1118.0,754.7 1118.3,747.7 1118.6,731.3 1118.8,733.7 1119.1,733.7 1119.3,740.7 1119.6,752.3 1119.9,743.0 1120.1,745.3 1120.4,731.3 1120.6,754.7 1120.9,733.7 1121.2,752.3 1121.4,731.3 1121.7,766.3 1121.9,719.7 1122.2,743.0 1122.5,759.3 1122.7,759.3 1123.0,740.7 1123.2,752.3 1123.5,752.3 1123.8,722.0 1124.0,750.0 1124.3,747.7 1124.5,747.7 1124.8,759.3 1125.0,733.7 1125.3,743.0 1125.6,747.7 1125.8,722.0 1126.1,754.7 1126.3,731.3 1126.6,738.3 1126.9,754.7 1127.1,733.7 1127.4,757.0 1127.6,754.7 1127.9,740.7 1128.2,747.7 1128.4,754.7 1128.7,750.0 1128.9,764.0 1129.2,768.7 1129.5,738.3 1129.7,771.0 1130.0,754.7 1130.2,768.7 1130.5,738.3 1130.8,724.3 1131.0,750.0 1131.3,743.0 1131.5,740.7 1131.8,757.0 1132.0,719.7 1132.3,764.0 1132.6,752.3 1132.8,738.3 1133.1,750.0 1133.3,740.7 1133.6,761.7 1133.9,752.3 1134.1,726.7 1134.4,764.0 1134.6,740.7 1134.9,729.0 1135.2,736.0 1135.4,731.3 1135.7,738.3 1135.9,736.0 1136.2,722.0 1136.5,754.7 1136.7,752.3 1137.0,740.7 1137.2,736.0 1137.5,754.7 1137.8,764.0 1138.0,747.7 1138.3,733.7 1138.5,745.3 1138.8,750.0 1139.1,740.7 1139.3,759.3 1139.6,736.0 1139.8,736.0 1140.1,747.7 1140.3,757.0 1140.6,738.3 1140.9,740.7 1141.1,743.0 1141.4,747.7 1141.6,754.7 1141.9,743.0 1142.2,757.0 1142.4,754.7 1142.7,736.0 1142.9,750.0 1143.2,747.7 1143.5,754.7 1143.7,754.7 1144.0,759.3 1144.2,764.0 1144.5,733.7 1144.8,757.0 1145.0,771.0 1145.3,752.3 1145.5,736.0 1145.8,731.3 1146.1,757.0 1146.3,740.7 1146.6,733.7 1146.8,733.7 1147.1,733.7 1147.3,757.0 1147.6,754.7 1147.9,766.3 1148.1,743.0 1148.4,757.0 1148.6,740.7 1148.9,752.3 1149.2,733.7 1149.4,729.0 1149.7,745.3 1149.9,759.3 1150.2,736.0 1150.5,738.3 1150.7,757.0 1151.0,747.7 1151.2,740.7 1151.5,747.7 1151.8,736.0 1152.0,724.3 1152.3,740.7 1152.5,745.3 1152.8,733.7 1153.1,738.3 1153.3,738.3 1153.6,761.7 1153.8,717.3 1154.1,750.0 1154.3,750.0 1154.6,740.7 1154.9,759.3 1155.1,726.7 1155.4,724.3 1155.6,736.0 1155.9,759.3 1156.2,743.0 1156.4,754.7 1156.7,745.3 1156.9,752.3 1157.2,738.3 1157.5,736.0 1157.7,752.3 1158.0,745.3 1158.2,752.3 1158.5,761.7 1158.8,736.0 1159.0,740.7 1159.3,740.7 1159.5,736.0 1159.8,722.0 1160.1,738.3 1160.3,754.7 1160.6,731.3 1160.8,759.3 1161.1,750.0 1161.4,750.0 1161.6,738.3 1161.9,745.3 1162.1,754.7 1162.4,726.7 1162.6,750.0 1162.9,738.3 1163.2,747.7 1163.4,750.0 1163.7,736.0 1163.9,747.7 1164.2,754.7 1164.5,759.3 1164.7,740.7 1165.0,729.0 1165.2,736.0 1165.5,747.7 1165.8,738.3 1166.0,733.7 1166.3,736.0 1166.5,740.7 1166.8,764.0 1167.1,745.3 1167.3,750.0 1167.6,733.7 1167.8,747.7 1168.1,750.0 1168.4,752.3 1168.6,757.0 1168.9,747.7 1169.1,729.0 1169.4,736.0 1169.6,750.0 1169.9,750.0 1170.2,745.3 1170.4,752.3 1170.7,747.7 1170.9,724.3 1171.2,733.7 1171.5,738.3 1171.7,736.0 1172.0,729.0 1172.2,743.0 1172.5,722.0 1172.8,736.0 1173.0,752.3 1173.3,745.3 1173.5,754.7 1173.8,743.0 1174.1,752.3 1174.3,736.0 1174.6,757.0 1174.8,736.0 1175.1,719.7 1175.4,733.7 1175.6,743.0 1175.9,738.3 1176.1,708.0 1176.4,738.3 1176.6,747.7 1176.9,738.3 1177.2,740.7 1177.4,736.0 1177.7,745.3 1177.9,761.7 1178.2,759.3 1178.5,740.7 1178.7,764.0 1179.0,747.7 1179.2,736.0 1179.5,757.0 1179.8,761.7 1180.0,738.3 1180.3,754.7 1180.5,750.0 1180.8,750.0 1181.1,743.0" clip-path="url(#c4)" stroke="#0000ff" stroke-width="1.7" fill="none" stroke-linejoin="round"/>
<rect x="911.0" y="689.0" width="274.0" height="120.0" fill="none" stroke="#000" stroke-width="1.7"/>
<path d="M913 809.0v7.0M965 809.0v7.0M1017 809.0v7.0M1069 809.0v7.0M1121 809.0v7.0M1173 809.0v7.0" stroke="#000" stroke-width="2.0" fill="none"/>
<text x="913.6" y="831.9" font-size="10.4" text-anchor="middle">0</text>
<text x="965.5" y="831.9" font-size="10.4" text-anchor="middle">200</text>
<text x="1017.5" y="831.9" font-size="10.4" text-anchor="middle">400</text>
<text x="1069.5" y="831.9" font-size="10.4" text-anchor="middle">600</text>
<text x="1121.5" y="831.9" font-size="10.4" text-anchor="middle">800</text>
<text x="1173.2" y="831.9" font-size="10.4" text-anchor="middle" letter-spacing="-0.3">1000</text>
<path d="M911.0 792h-7.0M911.0 745h-7.0M911.0 699h-7.0" stroke="#000" stroke-width="2.0" fill="none"/>
<text x="895.5" y="795.9" font-size="10.4" text-anchor="end" letter-spacing="-0.3">200</text>
<text x="895.5" y="748.9" font-size="10.4" text-anchor="end" letter-spacing="-0.3">220</text>
<text x="895.5" y="702.9" font-size="10.4" text-anchor="end" letter-spacing="-0.3">240</text>
<text x="1049.2" y="850.0" font-size="10.4" text-anchor="middle">Y</text>
<text x="865.8" y="750" font-size="10.4" text-anchor="middle" transform="rotate(-90 865.8 750)">counts</text>
<text x="1194.1" y="749.5" font-size="10.4" text-anchor="middle" transform="rotate(90 1194.1 749.5)">cut in y</text>
<rect x="1109.5" y="692.1" width="72.5" height="15.8" rx="2" fill="#fff" fill-opacity="0.8" stroke="#ccc" stroke-width="1"/>
<path d="M1111.3 699.9H1133.9" stroke="#0000ff" stroke-width="1.7"/>
<text x="1137.6" y="703.0" font-size="10.2">x=1024</text>
</svg>
</body></html>
